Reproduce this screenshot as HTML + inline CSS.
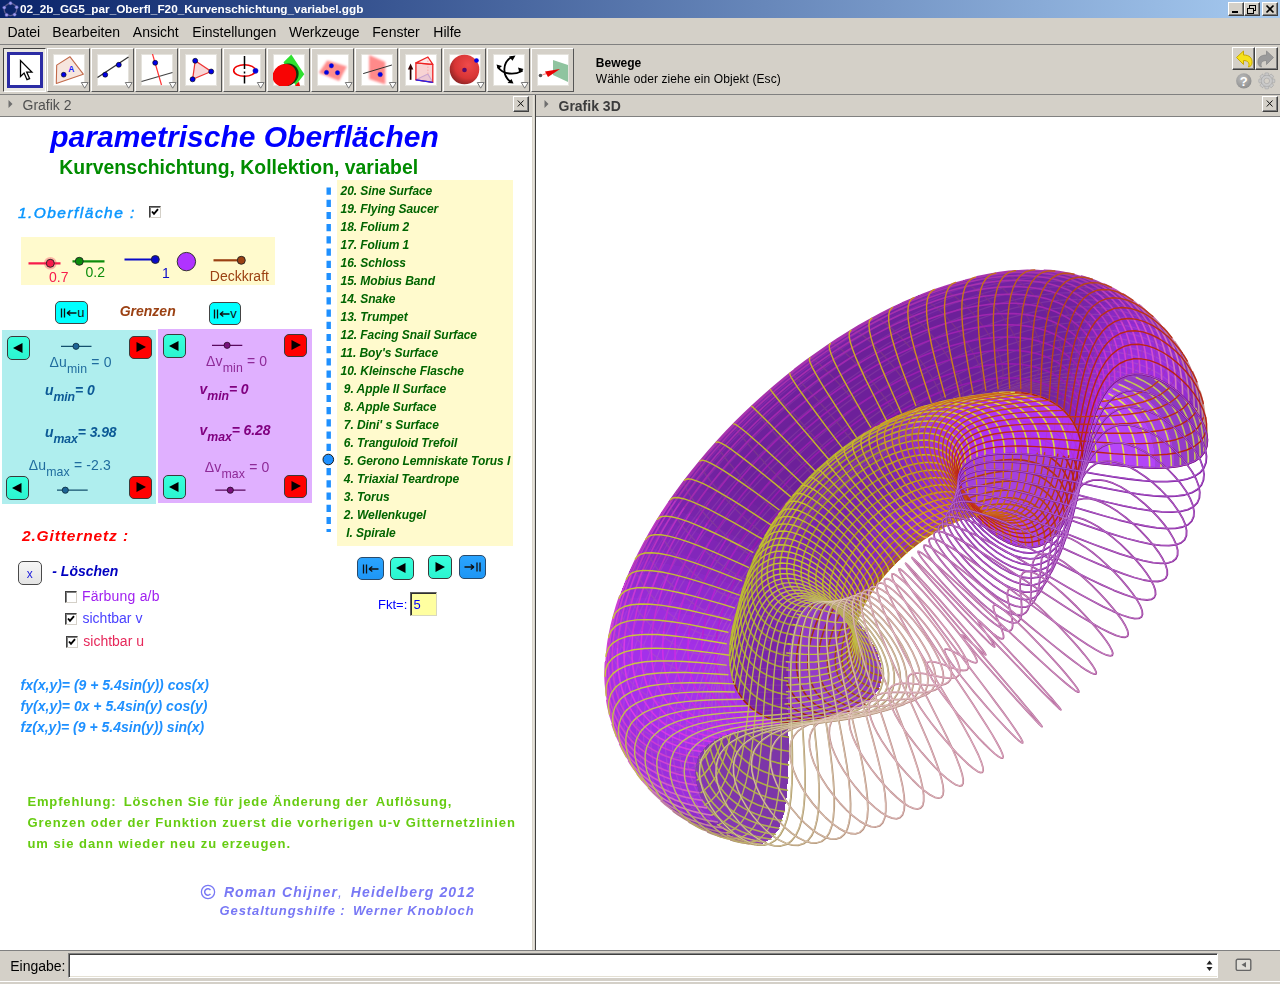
<!DOCTYPE html>
<html><head><meta charset="utf-8"><title>GeoGebra</title><style>
html,body{margin:0;padding:0}
body{width:1280px;height:984px;overflow:hidden;background:#d4d0c8;position:relative;font-family:"Liberation Sans",sans-serif}
.t{position:absolute;white-space:nowrap;will-change:opacity}
.b{position:absolute;box-sizing:border-box}
.r{border-style:solid;border-width:1px;border-color:#fff #404040 #404040 #fff}
.s{border-style:solid;border-width:1px;border-color:#808080 #fff #fff #808080}
sub{font-size:88%;vertical-align:baseline;position:relative;top:.48em}
</style></head>
<body>
<div class="b" style="left:0px;top:0px;width:1280px;height:18px;background:linear-gradient(90deg,#0a246a 0%,#a6caf0 100%)"></div>
<svg class="b" style="left:2px;top:1px" width="17" height="17" viewBox="0 0 17 17"><ellipse cx="8.5" cy="8.5" rx="6.3" ry="6" fill="none" stroke="#5a5a8c" stroke-width="1.3" transform="rotate(-25 8.5 8.5)"/><circle cx="8.5" cy="2.2" r="1.7" fill="#9c9cf5" stroke="#4a4a90" stroke-width=".5"/><circle cx="14.6" cy="6.2" r="1.7" fill="#9c9cf5" stroke="#4a4a90" stroke-width=".5"/><circle cx="12.6" cy="13.6" r="1.7" fill="#9c9cf5" stroke="#4a4a90" stroke-width=".5"/><circle cx="4.6" cy="13.9" r="1.7" fill="#9c9cf5" stroke="#4a4a90" stroke-width=".5"/><circle cx="2.3" cy="6.6" r="1.7" fill="#9c9cf5" stroke="#4a4a90" stroke-width=".5"/></svg>
<div class="t" style="left:19.5px;top:3.7px;font-size:10.5px;line-height:10.5px;color:#fff;font-weight:bold;transform:scaleX(1.121);transform-origin:0 0;">02_2b_GG5_par_Oberfl_F20_Kurvenschichtung_variabel.ggb</div>
<div class="b" style="left:1228px;top:2px;width:16px;height:14px;background:#d4d0c8;border-style:solid;border-width:1px;border-color:#fff #404040 #404040 #fff;box-shadow:inset -1px -1px 0 #808080"></div>
<div class="b" style="left:1244px;top:2px;width:16px;height:14px;background:#d4d0c8;border-style:solid;border-width:1px;border-color:#fff #404040 #404040 #fff;box-shadow:inset -1px -1px 0 #808080"></div>
<div class="b" style="left:1262px;top:2px;width:16px;height:14px;background:#d4d0c8;border-style:solid;border-width:1px;border-color:#fff #404040 #404040 #fff;box-shadow:inset -1px -1px 0 #808080"></div>
<svg class="b" style="left:1228px;top:2px" width="50" height="14" viewBox="0 0 50 14" shape-rendering="crispEdges"><rect x="4" y="9" width="6" height="2" fill="#000"/><rect x="21.5" y="3" width="6" height="5" fill="none" stroke="#000"/><rect x="21" y="3" width="7" height="1" fill="#000"/><rect x="19.5" y="6" width="6" height="5" fill="#d4d0c8" stroke="#000"/><rect x="19" y="6" width="7" height="1" fill="#000"/><g shape-rendering="auto"><path d="M38.5 3.5l7 7M45.5 3.5l-7 7" stroke="#000" stroke-width="1.7"/></g></svg>
<div class="t" style="left:7.5px;top:24.8px;font-size:14px;line-height:14px;color:#000;">Datei</div>
<div class="t" style="left:52.3px;top:24.8px;font-size:14px;line-height:14px;color:#000;">Bearbeiten</div>
<div class="t" style="left:132.8px;top:24.8px;font-size:14px;line-height:14px;color:#000;">Ansicht</div>
<div class="t" style="left:192.3px;top:24.8px;font-size:14px;line-height:14px;color:#000;">Einstellungen</div>
<div class="t" style="left:289.0px;top:24.8px;font-size:14px;line-height:14px;color:#000;">Werkzeuge</div>
<div class="t" style="left:372.3px;top:24.8px;font-size:14px;line-height:14px;color:#000;">Fenster</div>
<div class="t" style="left:433.3px;top:24.8px;font-size:14px;line-height:14px;color:#000;">Hilfe</div>
<div class="b" style="left:0px;top:44px;width:1280px;height:1px;background:#808080"></div>
<div class="b" style="left:3px;top:48px;width:43px;height:44px;background:#e9e7e2;border-style:solid;border-width:1px;border-color:#404040 #fff #fff #404040"></div>
<div class="b" style="left:7px;top:52px;width:36px;height:36px;background:#fff;border:3px solid #2c2ca4"></div>
<svg class="b" style="left:9px;top:54px;overflow:visible" width="42" height="42" viewBox="0 0 42 42"><svg x="0" y="0" width="32" height="32" viewBox="0 0 32 32" overflow="hidden"><path d="M11.5 6.5v16l3.6-3.4 2.9 6.6 2.6-1.1-2.9-6.5h5.2z" fill="#fff" stroke="#000" stroke-width="1.3" stroke-linejoin="miter"/></svg></svg>
<div class="b" style="left:47px;top:48px;width:43px;height:44px;border-style:solid;border-width:1px;border-color:#fff #555 #555 #fff"></div>
<div class="b" style="left:53px;top:54px;width:32px;height:32px;background:#fff;border:1px solid #e4e2dc"></div>
<svg class="b" style="left:53px;top:54px;overflow:visible" width="42" height="42" viewBox="0 0 42 42"><svg x="0" y="0" width="32" height="32" viewBox="0 0 32 32" overflow="hidden"><path d="M16.900 2.700l13.400 17.500-27 9.200.400-18.300z" fill="#f7e6de" stroke="#c26a4a" stroke-width="1.100" stroke-linejoin="round"/><circle cx="10.700" cy="20.700" r="2.400" fill="#0000e6" stroke="#000" stroke-width=".600"/><text x="15.300" y="17.700" font-family="Liberation Sans" font-size="8.500" font-weight="bold" fill="#2222ff">A</text></svg><path d="M28.300 28.500h6.800l-3.400 5.700z" fill="#fff" stroke="#7a7a7a" stroke-width="1"/></svg>
<div class="b" style="left:91px;top:48px;width:43px;height:44px;border-style:solid;border-width:1px;border-color:#fff #555 #555 #fff"></div>
<div class="b" style="left:97px;top:54px;width:32px;height:32px;background:#fff;border:1px solid #e4e2dc"></div>
<svg class="b" style="left:97px;top:54px;overflow:visible" width="42" height="42" viewBox="0 0 42 42"><svg x="0" y="0" width="32" height="32" viewBox="0 0 32 32" overflow="hidden"><path d="M.5 23.5l31-20.5" stroke="#333" stroke-width="1.3"/><circle cx="8.2" cy="20.7" r="2.5" fill="#0000e6" stroke="#000" stroke-width=".6"/><circle cx="21.8" cy="10.8" r="2.5" fill="#0000e6" stroke="#000" stroke-width=".6"/></svg><path d="M28.300 28.500h6.800l-3.400 5.700z" fill="#fff" stroke="#7a7a7a" stroke-width="1"/></svg>
<div class="b" style="left:135px;top:48px;width:43px;height:44px;border-style:solid;border-width:1px;border-color:#fff #555 #555 #fff"></div>
<div class="b" style="left:141px;top:54px;width:32px;height:32px;background:#fff;border:1px solid #e4e2dc"></div>
<svg class="b" style="left:141px;top:54px;overflow:visible" width="42" height="42" viewBox="0 0 42 42"><svg x="0" y="0" width="32" height="32" viewBox="0 0 32 32" overflow="hidden"><path d="M.5 27.5l31-9" stroke="#444" stroke-width="1.2"/><path d="M11.5 0l9 31" stroke="#f33" stroke-width="1.2"/><circle cx="14.2" cy="8.8" r="2.5" fill="#0000e6" stroke="#000" stroke-width=".6"/></svg><path d="M28.300 28.500h6.800l-3.400 5.700z" fill="#fff" stroke="#7a7a7a" stroke-width="1"/></svg>
<div class="b" style="left:179px;top:48px;width:43px;height:44px;border-style:solid;border-width:1px;border-color:#fff #555 #555 #fff"></div>
<div class="b" style="left:185px;top:54px;width:32px;height:32px;background:#fff;border:1px solid #e4e2dc"></div>
<svg class="b" style="left:185px;top:54px;overflow:visible" width="42" height="42" viewBox="0 0 42 42"><svg x="0" y="0" width="32" height="32" viewBox="0 0 32 32" overflow="hidden"><path d="M10.2 6.8l16 10.7-18.6 7.8z" fill="#f8d8d8" stroke="#e33" stroke-width="1.2"/><circle cx="10.2" cy="6.8" r="2.5" fill="#0000e6" stroke="#000" stroke-width=".6"/><circle cx="26.2" cy="17.5" r="2.5" fill="#0000e6" stroke="#000" stroke-width=".6"/><circle cx="7.6" cy="25.3" r="2.5" fill="#0000e6" stroke="#000" stroke-width=".6"/></svg></svg>
<div class="b" style="left:223px;top:48px;width:43px;height:44px;border-style:solid;border-width:1px;border-color:#fff #555 #555 #fff"></div>
<div class="b" style="left:229px;top:54px;width:32px;height:32px;background:#fff;border:1px solid #e4e2dc"></div>
<svg class="b" style="left:229px;top:54px;overflow:visible" width="42" height="42" viewBox="0 0 42 42"><svg x="0" y="0" width="32" height="32" viewBox="0 0 32 32" overflow="hidden"><ellipse cx="15.5" cy="16.5" rx="10.8" ry="5.8" fill="none" stroke="#e00" stroke-width="1.6"/><path d="M15.5 2v13M15.5 17.5v2M15.5 21.5v8" stroke="#000" stroke-width="1.5"/><circle cx="26.5" cy="16.8" r="2.6" fill="#0000e6" stroke="#22a" stroke-width=".5"/></svg><path d="M28.300 28.500h6.800l-3.400 5.700z" fill="#fff" stroke="#7a7a7a" stroke-width="1"/></svg>
<div class="b" style="left:267px;top:48px;width:43px;height:44px;border-style:solid;border-width:1px;border-color:#fff #555 #555 #fff"></div>
<div class="b" style="left:273px;top:54px;width:32px;height:32px;background:#fff;border:1px solid #e4e2dc"></div>
<svg class="b" style="left:273px;top:54px;overflow:visible" width="42" height="42" viewBox="0 0 42 42"><svg x="0" y="0" width="32" height="32" viewBox="0 0 32 32" overflow="hidden"><path d="M18.300 .500l13 19.800-8.800 11.200-12-23.200z" fill="#2fe02f"/><ellipse cx="13.800" cy="20.800" rx="12.200" ry="11" transform="rotate(-35 13.800 20.800)" fill="#0c3c0c"/><path d="M23.800 29.500l2.200-1.800 1 4.300h-5z" fill="#f00"/><ellipse cx="11.400" cy="21.300" rx="12.200" ry="11" transform="rotate(-35 11.400 21.300)" fill="#f80404"/></svg></svg>
<div class="b" style="left:311px;top:48px;width:43px;height:44px;border-style:solid;border-width:1px;border-color:#fff #555 #555 #fff"></div>
<div class="b" style="left:317px;top:54px;width:32px;height:32px;background:#fff;border:1px solid #e4e2dc"></div>
<svg class="b" style="left:317px;top:54px;overflow:visible" width="42" height="42" viewBox="0 0 42 42"><svg x="0" y="0" width="32" height="32" viewBox="0 0 32 32" overflow="hidden"><defs><filter id="bl7" x="-20%" y="-20%" width="140%" height="140%"><feGaussianBlur stdDeviation="1.300"/></filter></defs><path d="M10.200 6.600l19.700 5.900-7.700 14.400-20.400-8.100z" fill="#ff8c8c" filter="url(#bl7)"/><circle cx="14.4" cy="11.8" r="2.200" fill="#0000e6" stroke="#22a" stroke-width=".400"/><circle cx="9.5" cy="18.4" r="2.200" fill="#0000e6" stroke="#22a" stroke-width=".400"/><circle cx="20.5" cy="18.8" r="2.200" fill="#0000e6" stroke="#22a" stroke-width=".400"/></svg><path d="M28.300 28.500h6.800l-3.400 5.700z" fill="#fff" stroke="#7a7a7a" stroke-width="1"/></svg>
<div class="b" style="left:355px;top:48px;width:43px;height:44px;border-style:solid;border-width:1px;border-color:#fff #555 #555 #fff"></div>
<div class="b" style="left:361px;top:54px;width:32px;height:32px;background:#fff;border:1px solid #e4e2dc"></div>
<svg class="b" style="left:361px;top:54px;overflow:visible" width="42" height="42" viewBox="0 0 42 42"><svg x="0" y="0" width="32" height="32" viewBox="0 0 32 32" overflow="hidden"><defs><filter id="bl8" x="-20%" y="-20%" width="140%" height="140%"><feGaussianBlur stdDeviation="1"/></filter></defs><path d="M8.100 1.100l16.200 6.900v22.400l-16.200-5.400z" fill="#ff8a8a" filter="url(#bl8)"/><path d="M2.200 19.600l28.700-8.600" stroke="#333" stroke-width="1"/><circle cx="19.200" cy="20.500" r="2.300" fill="#0000e6" stroke="#22a" stroke-width=".400"/></svg><path d="M28.300 28.500h6.800l-3.400 5.700z" fill="#fff" stroke="#7a7a7a" stroke-width="1"/></svg>
<div class="b" style="left:399px;top:48px;width:43px;height:44px;border-style:solid;border-width:1px;border-color:#fff #555 #555 #fff"></div>
<div class="b" style="left:405px;top:54px;width:32px;height:32px;background:#fff;border:1px solid #e4e2dc"></div>
<svg class="b" style="left:405px;top:54px;overflow:visible" width="42" height="42" viewBox="0 0 42 42"><svg x="0" y="0" width="32" height="32" viewBox="0 0 32 32" overflow="hidden"><path d="M5.600 25.800V14" stroke="#200" stroke-width="1.700"/><path d="M5.600 9.400l-2.700 6.200h5.400z" fill="#300"/><path d="M10.900 25.800l16.900 2.500-4.900-8.200z" fill="#c4c4ff" stroke="#22e" stroke-width="1.100" stroke-linejoin="round"/><path d="M22.900 3.500v16.600" stroke="#e44" stroke-width="1.100" stroke-dasharray="1.600 1.400"/><path d="M10.900 8.900l16.900 1.400v18l-16.900-2.500z" fill="#f6c8c8" fill-opacity=".8" stroke="#e22" stroke-width="1.300" stroke-linejoin="round"/><path d="M10.900 8.900l12-5.900 4.900 7.300z" fill="#fbe0e0" fill-opacity=".7" stroke="#e22" stroke-width="1.300" stroke-linejoin="round"/><path d="M10.900 25.800l16.900 2.500" stroke="#22e" stroke-width="1.300"/></svg></svg>
<div class="b" style="left:443px;top:48px;width:43px;height:44px;border-style:solid;border-width:1px;border-color:#fff #555 #555 #fff"></div>
<div class="b" style="left:449px;top:54px;width:32px;height:32px;background:#fff;border:1px solid #e4e2dc"></div>
<svg class="b" style="left:449px;top:54px;overflow:visible" width="42" height="42" viewBox="0 0 42 42"><svg x="0" y="0" width="32" height="32" viewBox="0 0 32 32" overflow="hidden"><defs><radialGradient id="rg" cx=".62" cy=".35" r=".75"><stop offset="0" stop-color="#f04a4a"/><stop offset=".6" stop-color="#d83535"/><stop offset="1" stop-color="#7c2020"/></radialGradient></defs><circle cx="15.5" cy="15.500" r="14.800" fill="url(#rg)"/><circle cx="15.5" cy="16" r="2.300" fill="#5a0a6a"/><circle cx="27.500" cy="6.500" r="2.300" fill="#0000e6"/></svg><path d="M28.300 28.500h6.800l-3.400 5.700z" fill="#fff" stroke="#7a7a7a" stroke-width="1"/></svg>
<div class="b" style="left:487px;top:48px;width:43px;height:44px;border-style:solid;border-width:1px;border-color:#fff #555 #555 #fff"></div>
<div class="b" style="left:493px;top:54px;width:32px;height:32px;background:#fff;border:1px solid #e4e2dc"></div>
<svg class="b" style="left:493px;top:54px;overflow:visible" width="42" height="42" viewBox="0 0 42 42"><svg x="0" y="0" width="32" height="32" viewBox="0 0 32 32" overflow="hidden"><g fill="none" stroke="#000" stroke-width="1.800" stroke-linecap="round"><path d="M19 3C9 8 9 22 18 28"/><path d="M5 13c5 8 17 8 24 4"/></g><path d="M22.500 1.500l-6.500 1 3.500 4.200zM20.500 29.500l-6-.5 4-4zM3.500 10.500l5.500 1.500-4 3.500zM30.500 15l-5.500-1.500 1.500 5.500z" fill="#000"/></svg><path d="M28.300 28.500h6.800l-3.400 5.700z" fill="#fff" stroke="#7a7a7a" stroke-width="1"/></svg>
<div class="b" style="left:531px;top:48px;width:43px;height:44px;border-style:solid;border-width:1px;border-color:#fff #555 #555 #fff"></div>
<div class="b" style="left:537px;top:54px;width:32px;height:32px;background:#fff;border:1px solid #e4e2dc"></div>
<svg class="b" style="left:537px;top:54px;overflow:visible" width="42" height="42" viewBox="0 0 42 42"><svg x="0" y="0" width="32" height="32" viewBox="0 0 32 32" overflow="hidden"><path d="M16 6l15 5v17l-15-7z" fill="#8fc49f"/><circle cx="3.500" cy="21.500" r="1.800" fill="#555"/><path d="M5.500 20.800l4-1.200" stroke="#f88" stroke-width="1.200"/><path d="M8 17.500l15-2.500-12 8z" fill="#e80000"/></svg></svg>
<div class="t" style="left:595.8px;top:56.5px;font-size:12px;line-height:12px;color:#000;font-weight:bold;">Bewege</div>
<div class="t" style="left:595.8px;top:72.5px;font-size:12px;line-height:12px;color:#000;letter-spacing:0.09px;">W&auml;hle oder ziehe ein Objekt (Esc)</div>
<div class="b r" style="left:1232px;top:47px;width:23px;height:23px;border-color:#fff #404040 #404040 #fff;box-shadow:inset -1px -1px 0 #808080"></div>
<div class="b r" style="left:1255px;top:47px;width:23px;height:23px;border-color:#fff #404040 #404040 #fff;box-shadow:inset -1px -1px 0 #808080"></div>
<svg class="b" style="left:1232px;top:47px" width="46" height="23" viewBox="0 0 46 23"><path d="M4.500 10.500l7-6.500v4c6 0 9 3 8.500 8-.3 2.500-1.500 3.500-3.500 4 1.500-4-.5-6.500-5-6.500v4z" fill="#f6e11c" stroke="#c9a800" stroke-width="1" stroke-linejoin="round"/><path d="M41.500 10.500l-7-6.500v4c-6 0-9 3-8.500 8 .3 2.500 1.500 3.500 3.500 4-1.500-4 .5-6.500 5-6.500v4z" fill="#9a9a9a" stroke="#8a8a8a" stroke-width=".8" stroke-linejoin="round"/></svg>
<svg class="b" style="left:1234px;top:71px" width="44" height="20" viewBox="0 0 44 20"><defs><radialGradient id="hg" cx=".4" cy=".35" r=".7"><stop offset="0" stop-color="#bdbdbd"/><stop offset="1" stop-color="#8c8c8c"/></radialGradient></defs><circle cx="9.800" cy="9.900" r="7.700" fill="url(#hg)"/><text x="9.800" y="14.600" text-anchor="middle" font-family="Liberation Sans" font-weight="bold" font-size="13" fill="#fff">?</text><g transform="translate(32.800 9.900)" fill="#c9c9c9" stroke="#a2a2a2" stroke-width=".6"><rect x="-1.900" y="-8" width="3.800" height="16" rx=".8" transform="rotate(0)"/><rect x="-1.900" y="-8" width="3.800" height="16" rx=".8" transform="rotate(45)"/><rect x="-1.900" y="-8" width="3.800" height="16" rx=".8" transform="rotate(90)"/><rect x="-1.900" y="-8" width="3.800" height="16" rx=".8" transform="rotate(135)"/><circle r="5.600"/><circle r="2.800" fill="#d4d0c8"/></g></svg>
<div class="b" style="left:0px;top:94px;width:1280px;height:1px;background:#808080"></div>
<svg class="b" style="left:7px;top:99px" width="8" height="10" viewBox="0 0 8 10"><path d="M1.500 1l4 4-4 4z" fill="#6e6e6e"/></svg>
<div class="t" style="left:22.5px;top:98.3px;font-size:14px;line-height:14px;color:#505050;">Grafik 2</div>
<div class="b r" style="left:513px;top:96px;width:16px;height:16px;box-shadow:inset -1px -1px 0 #808080"></div>
<svg class="b" style="left:513px;top:96px" width="16" height="16" viewBox="0 0 16 16"><path d="M4.800 4.500l5.700 6M10.500 4.500l-5.700 6" stroke="#111" stroke-width="1"/></svg>
<div class="b" style="left:0px;top:116px;width:532px;height:1px;background:#808080"></div>
<div class="b" style="left:532px;top:95px;width:3px;height:855px;background:#d9d5cb"></div>
<div class="b" style="left:533px;top:95px;width:1px;height:855px;background:#e6e3dc"></div>
<div class="b" style="left:535px;top:95px;width:1px;height:855px;background:#404040"></div>
<svg class="b" style="left:543px;top:99px" width="8" height="10" viewBox="0 0 8 10"><path d="M1.500 1l4 4-4 4z" fill="#6e6e6e"/></svg>
<div class="t" style="left:558.5px;top:98.5px;font-size:14px;line-height:14px;color:#3c3c3c;font-weight:bold;">Grafik 3D</div>
<div class="b r" style="left:1262px;top:96px;width:16px;height:16px;box-shadow:inset -1px -1px 0 #808080"></div>
<svg class="b" style="left:1262px;top:96px" width="16" height="16" viewBox="0 0 16 16"><path d="M4.800 4.500l5.700 6M10.500 4.500l-5.700 6" stroke="#111" stroke-width="1"/></svg>
<div class="b" style="left:536px;top:116px;width:744px;height:1px;background:#808080"></div>
<div class="b" style="left:0px;top:117px;width:532px;height:833px;background:#fff"></div>
<div class="b" style="left:536px;top:117px;width:744px;height:833px;background:#fff"></div>
<div class="b" style="left:0px;top:950px;width:1280px;height:1px;background:#808080"></div>
<div class="t" style="left:10.2px;top:959.1px;font-size:14px;line-height:14px;color:#000;">Eingabe:</div>
<div class="b" style="left:68px;top:953px;width:1150px;height:25px;background:#fff;border-style:solid;border-width:1px;border-color:#808080 #fff #fff #808080;box-shadow:inset 1px 1px 0 #404040,inset 0 -1px 0 #e4e0d4"></div>
<svg class="b" style="left:1205px;top:960px" width="10" height="12" viewBox="0 0 10 12"><path d="M1.500 4.500l3-4 3 4zM1.500 7l3 4 3-4z" fill="#222"/></svg>
<svg class="b" style="left:1235px;top:958px" width="18" height="14" viewBox="0 0 18 14"><rect x="1.200" y="1.200" width="14.600" height="11.200" rx="1.500" fill="#e0ded8" stroke="#666" stroke-width="1.400"/><path d="M11 4v5.500l-4.500-2.700z" fill="#666"/></svg>
<div class="b" style="left:0px;top:981px;width:1280px;height:1px;background:#fff"></div>
<div class="t" style="left:50.3px;top:121.8px;font-size:30px;line-height:30px;color:#0000ff;font-weight:bold;font-style:italic;">parametrische Oberfl&auml;chen</div>
<div class="t" style="left:59.3px;top:157.5px;font-size:19.4px;line-height:19.4px;color:#008c00;font-weight:bold;">Kurvenschichtung, Kollektion, variabel</div>
<div class="t" style="left:17.9px;top:205.2px;font-size:15.5px;line-height:15.5px;color:#0a96ff;font-style:italic;letter-spacing:1.47px;-webkit-text-stroke:.45px #0a96ff;">1.Oberfl&auml;che :</div>
<div class="b" style="left:149px;top:206px;width:12px;height:12px;background:#fff;border-style:solid;border-width:1px;border-color:#404040 #d4d0c8 #d4d0c8 #404040;box-shadow:inset 1px 1px 0 #808080"></div>
<svg class="b" style="left:149px;top:206px" width="12" height="12" viewBox="0 0 12 12"><path d="M3 5.500l2 2.300 4-4.600" fill="none" stroke="#000" stroke-width="1.900"/></svg>
<div class="b" style="left:21px;top:237px;width:254px;height:48px;background:#fffacd"></div>
<svg class="b" style="left:21px;top:237px" width="254" height="48" viewBox="21 237 254 48"><path d="M28.500 263.300H60.500" stroke="#f71c4c" stroke-width="2.200"/><circle cx="50.300" cy="263.300" r="6.300" fill="#f71c4c" opacity=".32"/><circle cx="50.300" cy="263.300" r="4" fill="#f71c4c" stroke="#222" stroke-width=".9"/><path d="M72.500 261.300H104.500" stroke="#0c8c0c" stroke-width="2.200"/><circle cx="79.300" cy="261.300" r="4" fill="#0c8c0c" stroke="#222" stroke-width=".9"/><path d="M124.500 259.500H159" stroke="#0a0ac8" stroke-width="2.200"/><circle cx="155.300" cy="259.500" r="4" fill="#0a0ac8" stroke="#222" stroke-width=".9"/><circle cx="186.400" cy="261.600" r="9.200" fill="#b033ff" stroke="#222" stroke-width=".9"/><path d="M213.500 260.300H245" stroke="#9b4113" stroke-width="2.200"/><circle cx="241.300" cy="260.300" r="4" fill="#9b4113" stroke="#222" stroke-width=".9"/></svg>
<div class="t" style="left:49.0px;top:269.5px;font-size:14px;line-height:14px;color:#f71c4c;">0.7</div>
<div class="t" style="left:85.5px;top:264.9px;font-size:14px;line-height:14px;color:#0c8c0c;">0.2</div>
<div class="t" style="left:162.0px;top:266.1px;font-size:14px;line-height:14px;color:#0a0ac8;">1</div>
<div class="t" style="left:209.8px;top:268.8px;font-size:14px;line-height:14px;color:#9b4113;">Deckkraft</div>
<div class="b" style="left:55px;top:301px;width:33px;height:23px;background:#00ffff;border:1px solid #444;border-radius:5px"></div>
<svg class="b" style="left:59.5px;top:306px" width="26" height="14" viewBox="0 0 26 14"><path d="M1.500 2.500v9M4.500 2.500v9" stroke="#111" stroke-width="1.300"/><path d="M7 7h9.500M7 7l3.300-2.600M7 7l3.300 2.600" stroke="#111" stroke-width="1.300" fill="none"/><text x="17.300" y="11.300" font-family="Liberation Sans" font-size="13" fill="#111">u</text></svg>
<div class="t" style="left:119.7px;top:304.4px;font-size:14px;line-height:14px;color:#9b4113;font-weight:bold;font-style:italic;">Grenzen</div>
<div class="b" style="left:209px;top:301.5px;width:32px;height:23px;background:#00ffff;border:1px solid #444;border-radius:5px"></div>
<svg class="b" style="left:213px;top:306.5px" width="26" height="14" viewBox="0 0 26 14"><path d="M1.500 2.500v9M4.500 2.500v9" stroke="#111" stroke-width="1.300"/><path d="M7 7h9.500M7 7l3.300-2.600M7 7l3.300 2.600" stroke="#111" stroke-width="1.300" fill="none"/><text x="17.300" y="11.300" font-family="Liberation Sans" font-size="13" fill="#111">v</text></svg>
<div class="b" style="left:2px;top:330px;width:154px;height:173.5px;background:#afeeee"></div>
<div class="b" style="left:158px;top:329px;width:154px;height:173.5px;background:#e0b0ff"></div>
<div class="b" style="left:6.5px;top:336px;width:23.5px;height:23.5px;background:linear-gradient(#38ffdc,#2bf5d0);border:1px solid #3a3a3a;border-radius:5px"></div>
<svg class="b" style="left:11.7px;top:341.7px" width="12" height="12" viewBox="0 0 12 12"><path d="M10.500 1v10l-9.500-5z" fill="#000"/></svg>
<div class="b" style="left:128.5px;top:335.5px;width:23.5px;height:23.5px;background:#ff0000;border:1px solid #3a3a3a;border-radius:5px"></div>
<svg class="b" style="left:134.7px;top:341.2px" width="12" height="12" viewBox="0 0 12 12"><path d="M1.500 1v10l9.500-5z" fill="#000"/></svg>
<div class="b" style="left:5.5px;top:476px;width:23.5px;height:23.5px;background:linear-gradient(#38ffdc,#2bf5d0);border:1px solid #3a3a3a;border-radius:5px"></div>
<svg class="b" style="left:10.7px;top:481.7px" width="12" height="12" viewBox="0 0 12 12"><path d="M10.500 1v10l-9.500-5z" fill="#000"/></svg>
<div class="b" style="left:128.5px;top:475.5px;width:23.5px;height:23.5px;background:#ff0000;border:1px solid #3a3a3a;border-radius:5px"></div>
<svg class="b" style="left:134.7px;top:481.2px" width="12" height="12" viewBox="0 0 12 12"><path d="M1.500 1v10l9.500-5z" fill="#000"/></svg>
<div class="b" style="left:162.5px;top:334px;width:23.5px;height:23.5px;background:linear-gradient(#38ffdc,#2bf5d0);border:1px solid #3a3a3a;border-radius:5px"></div>
<svg class="b" style="left:167.7px;top:339.7px" width="12" height="12" viewBox="0 0 12 12"><path d="M10.500 1v10l-9.500-5z" fill="#000"/></svg>
<div class="b" style="left:283.5px;top:333.5px;width:23.5px;height:23.5px;background:#ff0000;border:1px solid #3a3a3a;border-radius:5px"></div>
<svg class="b" style="left:289.7px;top:339.2px" width="12" height="12" viewBox="0 0 12 12"><path d="M1.500 1v10l9.500-5z" fill="#000"/></svg>
<div class="b" style="left:162.5px;top:475px;width:23.5px;height:23.5px;background:linear-gradient(#38ffdc,#2bf5d0);border:1px solid #3a3a3a;border-radius:5px"></div>
<svg class="b" style="left:167.7px;top:480.7px" width="12" height="12" viewBox="0 0 12 12"><path d="M10.500 1v10l-9.500-5z" fill="#000"/></svg>
<div class="b" style="left:283.5px;top:474.5px;width:23.5px;height:23.5px;background:#ff0000;border:1px solid #3a3a3a;border-radius:5px"></div>
<svg class="b" style="left:289.7px;top:480.2px" width="12" height="12" viewBox="0 0 12 12"><path d="M1.500 1v10l9.500-5z" fill="#000"/></svg>
<svg class="b" style="left:0;top:330px" width="320" height="175" viewBox="0 330 320 175"><g stroke="#14506e" stroke-width="1.200"><path d="M61 346.300H91.500M57 490.200H87.700"/></g><circle cx="76" cy="346.300" r="3.100" fill="#1e6496" stroke="#0a2a3a" stroke-width=".8"/><circle cx="65.300" cy="490.200" r="3.100" fill="#1e6496" stroke="#0a2a3a" stroke-width=".8"/><g stroke="#5a0a5e" stroke-width="1.200"><path d="M212 345.300H242.300M215.300 490.200H245.500"/></g><circle cx="227.100" cy="345.300" r="3.100" fill="#78127c" stroke="#2a0a2a" stroke-width=".8"/><circle cx="230.300" cy="490.200" r="3.100" fill="#78127c" stroke="#2a0a2a" stroke-width=".8"/></svg>
<div class="t" style="left:49.5px;top:355.1px;font-size:14px;line-height:14px;color:#1f6c9e;letter-spacing:0.15px;">&Delta;u<sub>min</sub> = 0</div>
<div class="t" style="left:45.0px;top:383.4px;font-size:14px;line-height:14px;color:#0c5a96;font-weight:bold;font-style:italic;letter-spacing:-0.1px;">u<sub>min</sub>= 0</div>
<div class="t" style="left:45.0px;top:425.4px;font-size:14px;line-height:14px;color:#0c5a96;font-weight:bold;font-style:italic;letter-spacing:-0.1px;">u<sub>max</sub>= 3.98</div>
<div class="t" style="left:28.7px;top:458.1px;font-size:14px;line-height:14px;color:#1f6c9e;letter-spacing:0.15px;">&Delta;u<sub>max</sub> = -2.3</div>
<div class="t" style="left:206.0px;top:354.0px;font-size:14px;line-height:14px;color:#8e2a98;letter-spacing:0.15px;">&Delta;v<sub>min</sub> = 0</div>
<div class="t" style="left:199.6px;top:381.6px;font-size:14px;line-height:14px;color:#800080;font-weight:bold;font-style:italic;letter-spacing:-0.1px;">v<sub>min</sub>= 0</div>
<div class="t" style="left:199.6px;top:423.3px;font-size:14px;line-height:14px;color:#800080;font-weight:bold;font-style:italic;letter-spacing:-0.1px;">v<sub>max</sub>= 6.28</div>
<div class="t" style="left:204.8px;top:459.7px;font-size:14px;line-height:14px;color:#8e2a98;letter-spacing:0.15px;">&Delta;v<sub>max</sub> = 0</div>
<div class="t" style="left:21.9px;top:528.3px;font-size:15.5px;line-height:15.5px;color:#ff0000;font-weight:bold;font-style:italic;letter-spacing:0.88px;">2.Gitternetz :</div>
<div class="b" style="left:337px;top:180px;width:176px;height:365.5px;background:#fffacd"></div>
<svg class="b" style="left:320px;top:180px" width="16" height="360" viewBox="320 180 16 360"><path d="M328.700 187.500V532" stroke="#1e90ff" stroke-width="4.400" stroke-dasharray="7.200 5"/><circle cx="328.300" cy="459.500" r="5.300" fill="#1e90ff" stroke="#1a1a1a" stroke-width="1"/></svg>
<div class="t" style="left:340.6px;top:185.0px;font-size:12px;line-height:12px;color:#006400;font-weight:bold;font-style:italic;letter-spacing:-0.07px;">20. Sine Surface</div>
<div class="t" style="left:340.6px;top:203.0px;font-size:12px;line-height:12px;color:#006400;font-weight:bold;font-style:italic;letter-spacing:-0.07px;">19. Flying Saucer</div>
<div class="t" style="left:340.6px;top:221.0px;font-size:12px;line-height:12px;color:#006400;font-weight:bold;font-style:italic;letter-spacing:-0.07px;">18. Folium 2</div>
<div class="t" style="left:340.6px;top:239.0px;font-size:12px;line-height:12px;color:#006400;font-weight:bold;font-style:italic;letter-spacing:-0.07px;">17. Folium 1</div>
<div class="t" style="left:340.6px;top:257.0px;font-size:12px;line-height:12px;color:#006400;font-weight:bold;font-style:italic;letter-spacing:-0.07px;">16. Schloss</div>
<div class="t" style="left:340.6px;top:275.0px;font-size:12px;line-height:12px;color:#006400;font-weight:bold;font-style:italic;letter-spacing:-0.07px;">15. Mobius Band</div>
<div class="t" style="left:340.6px;top:293.0px;font-size:12px;line-height:12px;color:#006400;font-weight:bold;font-style:italic;letter-spacing:-0.07px;">14. Snake</div>
<div class="t" style="left:340.6px;top:311.0px;font-size:12px;line-height:12px;color:#006400;font-weight:bold;font-style:italic;letter-spacing:-0.07px;">13. Trumpet</div>
<div class="t" style="left:340.6px;top:329.0px;font-size:12px;line-height:12px;color:#006400;font-weight:bold;font-style:italic;letter-spacing:-0.07px;">12. Facing Snail Surface</div>
<div class="t" style="left:340.6px;top:347.0px;font-size:12px;line-height:12px;color:#006400;font-weight:bold;font-style:italic;letter-spacing:-0.07px;">11. Boy's Surface</div>
<div class="t" style="left:340.6px;top:365.0px;font-size:12px;line-height:12px;color:#006400;font-weight:bold;font-style:italic;letter-spacing:-0.07px;">10. Kleinsche Flasche</div>
<div class="t" style="left:340.6px;top:383.0px;font-size:12px;line-height:12px;color:#006400;font-weight:bold;font-style:italic;letter-spacing:-0.07px;">&nbsp;9. Apple II Surface</div>
<div class="t" style="left:340.6px;top:401.0px;font-size:12px;line-height:12px;color:#006400;font-weight:bold;font-style:italic;letter-spacing:-0.07px;">&nbsp;8. Apple Surface</div>
<div class="t" style="left:340.6px;top:419.0px;font-size:12px;line-height:12px;color:#006400;font-weight:bold;font-style:italic;letter-spacing:-0.07px;">&nbsp;7. Dini' s Surface</div>
<div class="t" style="left:340.6px;top:437.0px;font-size:12px;line-height:12px;color:#006400;font-weight:bold;font-style:italic;letter-spacing:-0.07px;">&nbsp;6. Tranguloid Trefoil</div>
<div class="t" style="left:340.6px;top:455.0px;font-size:12px;line-height:12px;color:#006400;font-weight:bold;font-style:italic;letter-spacing:-0.07px;">&nbsp;5. Gerono Lemniskate Torus I</div>
<div class="t" style="left:340.6px;top:473.0px;font-size:12px;line-height:12px;color:#006400;font-weight:bold;font-style:italic;letter-spacing:-0.07px;">&nbsp;4. Triaxial Teardrope</div>
<div class="t" style="left:340.6px;top:491.0px;font-size:12px;line-height:12px;color:#006400;font-weight:bold;font-style:italic;letter-spacing:-0.07px;">&nbsp;3. Torus</div>
<div class="t" style="left:340.6px;top:509.0px;font-size:12px;line-height:12px;color:#006400;font-weight:bold;font-style:italic;letter-spacing:-0.07px;">&nbsp;2. Wellenkugel</div>
<div class="t" style="left:340.6px;top:527.0px;font-size:12px;line-height:12px;color:#006400;font-weight:bold;font-style:italic;letter-spacing:-0.07px;">&nbsp;&thinsp;I. Spirale</div>
<div class="b" style="left:357px;top:556.5px;width:27px;height:23.5px;background:linear-gradient(#2aa4ff,#1e96f5);border:1px solid #2a4a6a;border-radius:5px"></div>
<svg class="b" style="left:362px;top:561.75px" width="19" height="14" viewBox="0 0 19 14"><path d="M1.500 2.500v9M4.500 2.500v9" stroke="#111" stroke-width="1.300"/><path d="M7 7h9.500M7 7l3.300-2.600M7 7l3.300 2.600" stroke="#111" stroke-width="1.300" fill="none"/></svg>
<div class="b" style="left:390px;top:556.5px;width:23.5px;height:23.5px;background:linear-gradient(#38ffdc,#2bf5d0);border:1px solid #3a3a3a;border-radius:5px"></div>
<svg class="b" style="left:395.2px;top:562.2px" width="12" height="12" viewBox="0 0 12 12"><path d="M10.500 1v10l-9.500-5z" fill="#000"/></svg>
<div class="b" style="left:428px;top:555px;width:23.5px;height:23.5px;background:linear-gradient(#38ffdc,#2bf5d0);border:1px solid #3a3a3a;border-radius:5px"></div>
<svg class="b" style="left:434.2px;top:560.7px" width="12" height="12" viewBox="0 0 12 12"><path d="M1.500 1v10l9.500-5z" fill="#000"/></svg>
<div class="b" style="left:459px;top:555px;width:26.5px;height:23.5px;background:linear-gradient(#2aa4ff,#1e96f5);border:1px solid #2a4a6a;border-radius:5px"></div>
<svg class="b" style="left:463.75px;top:560.25px" width="19" height="14" viewBox="0 0 19 14"><path d="M.5 7h9.500M10 7l-3.300-2.600M10 7l-3.300 2.600" stroke="#111" stroke-width="1.300" fill="none"/><path d="M13 2.500v9M16 2.500v9" stroke="#111" stroke-width="1.300"/></svg>
<div class="t" style="left:378.0px;top:598.4px;font-size:13px;line-height:13px;color:#0000ff;">Fkt=:</div>
<div class="b" style="left:410px;top:592px;width:26.500px;height:23.500px;background:#ffffa0;border-style:solid;border-width:1px;border-color:#606060 #d8d8c0 #d8d8c0 #606060;box-shadow:inset 1px 1px 0 #303030"></div>
<div class="t" style="left:413.5px;top:598.4px;font-size:13px;line-height:13px;color:#0000ff;">5</div>
<div class="b" style="left:18px;top:561px;width:24px;height:24px;background:linear-gradient(#f6f6f6,#e4e4e4);border:1px solid #4a4a4a;border-radius:5px"></div>
<div class="t" style="left:26.8px;top:568.1px;font-size:12px;line-height:12px;color:#2222dd;">x</div>
<div class="t" style="left:52.3px;top:563.9px;font-size:14px;line-height:14px;color:#0000c0;font-weight:bold;font-style:italic;">- L&ouml;schen</div>
<div class="b" style="left:65px;top:590.5px;width:12px;height:12px;background:#fff;border-style:solid;border-width:1px;border-color:#404040 #d4d0c8 #d4d0c8 #404040;box-shadow:inset 1px 1px 0 #808080"></div>
<div class="t" style="left:82.0px;top:588.9px;font-size:14px;line-height:14px;color:#a020f0;letter-spacing:0.2px;">F&auml;rbung a/b</div>
<div class="b" style="left:65px;top:612.5px;width:12px;height:12px;background:#fff;border-style:solid;border-width:1px;border-color:#404040 #d4d0c8 #d4d0c8 #404040;box-shadow:inset 1px 1px 0 #808080"></div>
<svg class="b" style="left:65px;top:612.5px" width="12" height="12" viewBox="0 0 12 12"><path d="M3 5.500l2 2.300 4-4.600" fill="none" stroke="#000" stroke-width="1.900"/></svg>
<div class="t" style="left:82.5px;top:611.1px;font-size:14px;line-height:14px;color:#4a41ff;">sichtbar v</div>
<div class="b" style="left:66px;top:635.5px;width:12px;height:12px;background:#fff;border-style:solid;border-width:1px;border-color:#404040 #d4d0c8 #d4d0c8 #404040;box-shadow:inset 1px 1px 0 #808080"></div>
<svg class="b" style="left:66px;top:635.5px" width="12" height="12" viewBox="0 0 12 12"><path d="M3 5.500l2 2.300 4-4.600" fill="none" stroke="#000" stroke-width="1.900"/></svg>
<div class="t" style="left:83.3px;top:633.7px;font-size:14px;line-height:14px;color:#e6285a;">sichtbar u</div>
<div class="t" style="left:20.6px;top:678.1px;font-size:14px;line-height:14px;color:#1e90ff;font-weight:bold;font-style:italic;">fx(x,y)= (9 + 5.4sin(y)) cos(x)</div>
<div class="t" style="left:20.6px;top:699.2px;font-size:14px;line-height:14px;color:#1e90ff;font-weight:bold;font-style:italic;">fy(x,y)= 0x + 5.4sin(y) cos(y)</div>
<div class="t" style="left:20.6px;top:720.3px;font-size:14px;line-height:14px;color:#1e90ff;font-weight:bold;font-style:italic;">fz(x,y)= (9 + 5.4sin(y)) sin(x)</div>
<div class="t" style="left:27.4px;top:794.9px;font-size:13px;line-height:13px;color:#66cc11;font-weight:bold;letter-spacing:0.87px;">Empfehlung: <span style="display:inline-block;width:2.8px"></span>L&ouml;schen Sie f&uuml;r jede &Auml;nderung der <span style="display:inline-block;width:2.8px"></span>Aufl&ouml;sung,</div>
<div class="t" style="left:27.4px;top:816.0px;font-size:13px;line-height:13px;color:#66cc11;font-weight:bold;letter-spacing:0.97px;">Grenzen oder der Funktion zuerst die vorherigen u-v Gitternetzlinien</div>
<div class="t" style="left:27.4px;top:837.0px;font-size:13px;line-height:13px;color:#66cc11;font-weight:bold;letter-spacing:0.97px;">um sie dann wieder neu zu erzeugen.</div>
<svg class="b" style="left:200.400px;top:884px" width="16" height="16" viewBox="0 0 15 15"><circle cx="7.500" cy="7.500" r="6.200" fill="none" stroke="#7878f5" stroke-width="1.200"/><path d="M9.800 5.700a3 3 0 1 0 0 3.600" fill="none" stroke="#7878f5" stroke-width="1.400"/></svg>
<div class="t" style="left:223.9px;top:884.7px;font-size:14px;line-height:14px;color:#7878f5;font-weight:bold;font-style:italic;letter-spacing:1.12px;">Roman Chijner<span style="font-weight:normal">,</span> <span style="display:inline-block;width:2.8px"></span>Heidelberg 2012</div>
<div class="t" style="left:219.6px;top:903.7px;font-size:13px;line-height:13px;color:#7878f5;font-weight:bold;font-style:italic;letter-spacing:0.9px;">Gestaltungshilfe : <span style="display:inline-block;width:2.8px"></span>Werner Knobloch</div>
<svg class="b" style="left:537px;top:117px" width="743" height="833" viewBox="537 117 743 833"><g shape-rendering="crispEdges" fill-opacity="0.90">
<path fill="#7321a5" d="M823 461l-13 12-11-11 14-13z"/>
<path fill="#7421a6" d="M837 449l-14 12-10-12 14-12z"/>
<path fill="#7321a5" d="M832 471l-13 12-9-10 13-12z"/>
<path fill="#7421a6" d="M846 459l-14 12-9-10 14-12z"/>
<path fill="#7321a4" d="M810 473l-14 13-10-11 13-13zM819 483l-13 12-10-9 14-13z"/>
<path fill="#7421a6" d="M851 437l-14 12-10-12 15-12zM859 448l-13 11-9-10 14-12z"/>
<path fill="#7221a4" d="M796 486l-12 13-11-11 13-13zM806 495l-13 13-9-9 12-13z"/>
<path fill="#7421a7" d="M866 426l-15 11-9-12 15-11z"/>
<path fill="#7321a5" d="M813 449l-14 13-11-12 14-13z"/>
<path fill="#7421a7" d="M873 437l-14 11-8-11 15-11z"/>
<path fill="#7421a6" d="M827 437l-14 12-11-12 15-12z"/>
<path fill="#7321a4" d="M799 462l-13 13-12-12 14-13z"/>
<path fill="#7421a6" d="M842 425l-15 12-10-12 14-12z"/>
<path fill="#7221a3" d="M784 499l-13 14-11-11 13-14z"/>
<path fill="#7622a9" d="M839 478l-13 12-7-7 13-12z"/>
<path fill="#7221a4" d="M793 508l-12 13-10-8 13-14z"/>
<path fill="#7622a9" d="M852 467l-13 11-7-7 14-12z"/>
<path fill="#7221a4" d="M786 475l-13 13-12-11 13-14z"/>
<path fill="#7622a9" d="M826 490l-13 12-7-7 13-12z"/>
<path fill="#7521a7" d="M881 415l-15 11-9-12 15-11zM888 426l-15 11-7-11 15-11z"/>
<path fill="#7622aa" d="M865 456l-13 11-6-8 13-11z"/>
<path fill="#7421a7" d="M857 414l-15 11-11-12 15-12z"/>
<path fill="#7622a9" d="M813 502l-12 12-8-6 13-13z"/>
<path fill="#7722aa" d="M879 445l-14 11-6-8 14-11z"/>
<path fill="#7221a3" d="M771 513l-12 13-11-10 12-14zM773 488l-13 14-11-11 12-14z"/>
<path fill="#7221a4" d="M781 521l-11 13-11-8 12-13z"/>
<path fill="#7521a7" d="M872 403l-15 11-11-13 15-11z"/>
<path fill="#7522a8" d="M896 405l-15 10-9-12 15-10z"/>
<path fill="#7622a8" d="M801 514l-11 13-9-6 12-13z"/>
<path fill="#7522a8" d="M902 416l-14 10-7-11 15-10z"/>
<path fill="#7120a2" d="M802 437l-14 13-11-12 14-13zM817 425l-15 12-11-12 15-13z"/>
<path fill="#7722aa" d="M893 435l-14 10-6-8 15-11z"/>
<path fill="#7020a1" d="M788 450l-14 13-11-12 14-13z"/>
<path fill="#7120a2" d="M831 413l-14 12-11-13 14-12z"/>
<path fill="#7221a3" d="M760 502l-12 14-12-11 13-14z"/>
<path fill="#7120a2" d="M759 526l-11 14-12-10 12-14z"/>
<path fill="#7020a1" d="M774 463l-13 14-11-12 13-14z"/>
<path fill="#7221a4" d="M770 534l-11 14-11-8 11-14z"/>
<path fill="#7522a8" d="M790 527l-11 13-9-6 11-13zM887 393l-15 10-11-13 16-10z"/>
<path fill="#7221a3" d="M846 401l-15 12-11-13 15-11z"/>
<path fill="#7622a8" d="M910 396l-14 9-9-12 15-10z"/>
<path fill="#7a23af" d="M843 483l-12 11-5-4 13-12z"/>
<path fill="#7722aa" d="M907 426l-14 9-5-9 14-10z"/>
<path fill="#7622a8" d="M917 407l-15 9-6-11 14-9z"/>
<path fill="#7a23af" d="M856 472l-13 11-4-5 13-11z"/>
<path fill="#7923ae" d="M831 494l-12 12-6-4 13-12z"/>
<path fill="#7020a0" d="M761 477l-12 14-12-12 13-14z"/>
<path fill="#7b23b0" d="M868 462l-12 10-4-5 13-11z"/>
<path fill="#7120a2" d="M748 516l-12 14-11-11 11-14z"/>
<path fill="#7221a3" d="M861 390l-15 11-11-12 16-11z"/>
<path fill="#7923ad" d="M819 506l-12 12-6-4 12-12z"/>
<path fill="#7522a8" d="M779 540l-11 13-9-5 11-14z"/>
<path fill="#7b23b0" d="M881 452l-13 10-3-6 14-11z"/>
<path fill="#7120a2" d="M748 540l-11 14-11-10 10-14z"/>
<path fill="#7321a4" d="M759 548l-11 13-11-7 11-14z"/>
<path fill="#7622a8" d="M902 383l-15 10-10-13 15-10z"/>
<path fill="#7020a0" d="M749 491l-13 14-11-12 12-14z"/>
<path fill="#7722ab" d="M921 417l-14 9-5-10 15-9z"/>
<path fill="#7923ad" d="M807 518l-11 12-6-3 11-13z"/>
<path fill="#7622a9" d="M926 387l-16 9-8-13 15-9zM932 398l-15 9-7-11 16-9z"/>
<path fill="#6d1f9b" d="M791 425l-14 13-10-11 14-13z"/>
<path fill="#7c23b1" d="M895 442l-14 10-2-7 14-10z"/>
<path fill="#6d1f9c" d="M806 412l-15 13-10-11 15-13z"/>
<path fill="#7221a4" d="M877 380l-16 10-10-12 15-11z"/>
<path fill="#6c1f9b" d="M777 438l-14 13-10-11 14-13z"/>
<path fill="#6d1f9c" d="M820 400l-14 12-10-11 14-12z"/>
<path fill="#7120a2" d="M736 530l-10 14-12-11 11-14z"/>
<path fill="#7822ac" d="M796 530l-11 12-6-2 11-13z"/>
<path fill="#7522a8" d="M768 553l-10 13-10-5 11-13z"/>
<path fill="#6c1f9b" d="M763 451l-13 14-10-12 13-13z"/>
<path fill="#6d1f9c" d="M835 389l-15 11-10-11 15-11z"/>
<path fill="#7020a0" d="M736 505l-11 14-12-12 12-14z"/>
<path fill="#7c23b1" d="M908 433l-13 9-2-7 14-9z"/>
<path fill="#7622a9" d="M917 374l-15 9-10-13 16-9z"/>
<path fill="#7321a4" d="M748 561l-10 14-11-7 10-14z"/>
<path fill="#7120a1" d="M737 554l-10 14-12-9 11-15z"/>
<path fill="#7722ab" d="M935 408l-14 9-4-10 15-9z"/>
<path fill="#6c1f9b" d="M750 465l-13 14-9-12 12-14z"/>
<path fill="#7321a4" d="M892 370l-15 10-11-13 15-10z"/>
<path fill="#7822ac" d="M785 542l-10 13-7-2 11-13z"/>
<path fill="#7622aa" d="M946 390l-14 8-6-11 15-9z"/>
<path fill="#6d1f9c" d="M851 378l-16 11-10-11 15-11z"/>
<path fill="#7622aa" d="M941 378l-15 9-9-13 16-9z"/>
<path fill="#7c24b2" d="M922 424l-14 9-1-7 14-9z"/>
<path fill="#7020a1" d="M726 544l-11 15-12-11 11-15z"/>
<path fill="#7522a8" d="M758 566l-10 13-10-4 10-14z"/>
<path fill="#7f24b6" d="M845 486l-12 10-2-2 12-11z"/>
<path fill="#8025b7" d="M857 475l-12 11-2-3 13-11z"/>
<path fill="#6c1f9b" d="M737 479l-12 14-10-12 13-14z"/>
<path fill="#7020a0" d="M725 519l-11 14-12-12 11-14z"/>
<path fill="#7e24b5" d="M833 496l-11 11-3-1 12-12z"/>
<path fill="#8125b8" d="M869 465l-12 10-1-3 12-10z"/>
<path fill="#6d1f9c" d="M866 367l-15 11-11-11 16-11z"/>
<path fill="#7722ab" d="M949 401l-14 7-3-10 14-8z"/>
<path fill="#7622aa" d="M933 365l-16 9-9-13 15-9z"/>
<path fill="#7d24b3" d="M822 507l-11 11-4 0 12-12z"/>
<path fill="#7321a5" d="M738 575l-9 14-11-7 9-14z"/>
<path fill="#7120a2" d="M727 568l-9 14-12-9 9-14z"/>
<path fill="#7321a4" d="M908 361l-16 9-11-13 16-9z"/>
<path fill="#7822ab" d="M775 555l-9 12-8-1 10-13z"/>
<path fill="#8225ba" d="M881 456l-12 9-1-3 13-10z"/>
<path fill="#6a1e98" d="M781 414l-14 13-8-10 14-12zM796 401l-15 13-8-9 14-13zM767 427l-14 13-8-10 14-13z"/>
<path fill="#7c24b2" d="M811 518l-11 12-4 0 11-12z"/>
<path fill="#7d24b3" d="M935 416l-13 8-1-7 14-9z"/>
<path fill="#6a1e98" d="M810 389l-14 12-9-9 15-12z"/>
<path fill="#6d1f9c" d="M725 493l-12 14-9-12 11-14z"/>
<path fill="#7722aa" d="M961 383l-15 7-5-12 15-7zM956 371l-15 7-8-13 15-8z"/>
<path fill="#8225bb" d="M894 447l-13 9 0-4 14-10z"/>
<path fill="#6a1e98" d="M753 440l-13 13-8-9 13-14z"/>
<path fill="#7522a8" d="M748 579l-9 13-10-3 9-14z"/>
<path fill="#7020a1" d="M715 559l-9 14-13-11 10-14z"/>
<path fill="#6a1e98" d="M825 378l-15 11-8-9 14-11z"/>
<path fill="#6d1f9c" d="M881 357l-15 10-10-11 15-9z"/>
<path fill="#7020a1" d="M714 533l-11 15-11-12 10-15z"/>
<path fill="#7c23b1" d="M800 530l-10 12-5 0 11-12z"/>
<path fill="#7722ab" d="M766 567l-10 13-8-1 10-13z"/>
<path fill="#6a1e98" d="M740 453l-12 14-8-10 12-13z"/>
<path fill="#8326bc" d="M907 438l-13 9 1-5 13-9z"/>
<path fill="#7822ab" d="M963 393l-14 8-3-11 15-7z"/>
<path fill="#7321a5" d="M923 352l-15 9-11-13 16-9z"/>
<path fill="#7722aa" d="M948 357l-15 8-10-13 16-8z"/>
<path fill="#6a1e98" d="M840 367l-15 11-9-9 15-11z"/>
<path fill="#7321a5" d="M729 589l-8 14-12-7 9-14z"/>
<path fill="#6e209e" d="M713 507l-11 14-9-11 11-15z"/>
<path fill="#7120a2" d="M718 582l-9 14-13-8 10-15z"/>
<path fill="#7d24b3" d="M949 409l-14 7 0-8 14-7z"/>
<path fill="#7b23b0" d="M790 542l-9 11-6 2 10-13z"/>
<path fill="#6a1e98" d="M728 467l-13 14-7-10 12-14z"/>
<path fill="#6d1f9c" d="M897 348l-16 9-10-10 16-10z"/>
<path fill="#8426bd" d="M920 430l-13 8 1-5 14-9z"/>
<path fill="#7722aa" d="M975 376l-14 7-5-12 15-8zM971 363l-15 8-8-14 15-7z"/>
<path fill="#6a1e98" d="M856 356l-16 11-9-9 15-10z"/>
<path fill="#7522a8" d="M739 592l-8 14-10-3 8-14z"/>
<path fill="#7120a2" d="M703 548l-10 14-11-11 10-15z"/>
<path fill="#7020a0" d="M706 573l-10 15-12-11 9-15z"/>
<path fill="#7722aa" d="M756 580l-8 13-9-1 9-13z"/>
<path fill="#7a23af" d="M781 553l-10 12-5 2 9-12z"/>
<path fill="#6a1e98" d="M773 405l-14 12-6-6 14-13zM787 392l-14 13-6-7 14-12z"/>
<path fill="#6b1f9a" d="M715 481l-11 14-8-10 12-14z"/>
<path fill="#7020a0" d="M702 521l-10 15-10-12 11-14z"/>
<path fill="#7822ac" d="M977 387l-14 6-2-10 14-7z"/>
<path fill="#7321a5" d="M939 344l-16 8-10-13 15-8z"/>
<path fill="#6a1e98" d="M759 417l-14 13-5-7 13-12z"/>
<path fill="#7d24b4" d="M962 402l-13 7 0-8 14-8z"/>
<path fill="#6a1e98" d="M802 380l-15 12-6-6 14-12z"/>
<path fill="#7722aa" d="M963 350l-15 7-9-13 15-7z"/>
<path fill="#8526be" d="M933 422l-13 8 2-6 13-8z"/>
<path fill="#7f24b6" d="M845 485l-11 11-1 0 12-10z"/>
<path fill="#8125b9" d="M856 476l-11 9 0 1 12-11z"/>
<path fill="#6a1e98" d="M871 347l-15 9-10-8 16-10z"/>
<path fill="#7321a5" d="M721 603l-8 13-12-5 8-15z"/>
<path fill="#7e24b4" d="M834 496l-11 10-1 1 11-11z"/>
<path fill="#6a1e98" d="M745 430l-13 14-5-8 13-13z"/>
<path fill="#6d1f9d" d="M913 339l-16 9-10-11 15-8z"/>
<path fill="#8225bb" d="M867 466l-11 10 1-1 12-10z"/>
<path fill="#7221a3" d="M709 596l-8 15-13-9 8-14z"/>
<path fill="#6a1e98" d="M816 369l-14 11-7-6 15-11z"/>
<path fill="#7c24b2" d="M823 506l-10 10-2 2 11-11z"/>
<path fill="#8426bd" d="M879 457l-12 9 2-1 12-9z"/>
<path fill="#7923ad" d="M771 565l-8 13-7 2 10-13z"/>
<path fill="#6a1e98" d="M732 444l-12 13-5-7 12-14z"/>
<path fill="#7722ab" d="M990 370l-15 6-4-13 15-6z"/>
<path fill="#7622aa" d="M748 593l-8 12-9 1 8-14z"/>
<path fill="#6d1f9c" d="M704 495l-11 15-8-10 11-15z"/>
<path fill="#7221a3" d="M693 562l-9 15-11-12 9-14z"/>
<path fill="#7522a8" d="M731 606l-8 13-10-3 8-13z"/>
<path fill="#7b23b0" d="M813 516l-10 11-3 3 11-12z"/>
<path fill="#7722ab" d="M986 357l-15 6-8-13 16-6z"/>
<path fill="#6a1e98" d="M831 358l-15 11-6-6 14-10z"/>
<path fill="#8526bf" d="M891 449l-12 8 2-1 13-9zM945 415l-12 7 2-6 14-7z"/>
<path fill="#7020a1" d="M696 588l-8 14-12-10 8-15z"/>
<path fill="#7221a3" d="M692 536l-10 15-10-12 10-15z"/>
<path fill="#6a1e98" d="M887 337l-16 10-9-9 15-9z"/>
<path fill="#7e24b4" d="M976 396l-14 6 1-9 14-6z"/>
<path fill="#6a1e98" d="M720 457l-12 14-5-7 12-14z"/>
<path fill="#7a23ae" d="M803 527l-10 11-3 4 10-12z"/>
<path fill="#7421a6" d="M954 337l-15 7-11-13 16-7z"/>
<path fill="#7822ac" d="M991 381l-14 6-2-11 15-6z"/>
<path fill="#8627c1" d="M903 440l-12 9 3-2 13-9z"/>
<path fill="#6a1e98" d="M846 348l-15 10-7-5 15-11z"/>
<path fill="#6d1f9d" d="M928 331l-15 8-11-10 16-8z"/>
<path fill="#7722ab" d="M979 344l-16 6-9-13 16-7z"/>
<path fill="#7822ac" d="M763 578l-9 12-6 3 8-13z"/>
<path fill="#7421a6" d="M713 616l-8 14-12-5 8-14z"/>
<path fill="#7020a0" d="M693 510l-11 14-7-10 10-14z"/>
<path fill="#7221a3" d="M701 611l-8 14-12-9 7-14z"/>
<path fill="#8025b8" d="M793 538l-9 11-3 4 9-11z"/>
<path fill="#6b1f9a" d="M708 471l-12 14-4-8 11-13z"/>
<path fill="#6a1e98" d="M767 398l-14 13-2-4 13-12z"/>
<path fill="#8626c0" d="M958 408l-13 7 4-6 13-7z"/>
<path fill="#7622a9" d="M740 605l-7 13-10 1 8-13z"/>
<path fill="#6a1e98" d="M781 386l-14 12-3-3 14-12z"/>
<path fill="#932ad3" d="M915 433l-12 7 4-2 13-8z"/>
<path fill="#6a1e98" d="M753 411l-13 12-2-3 13-13zM902 329l-15 8-10-8 15-9zM795 374l-14 12-3-3 14-11z"/>
<path fill="#7221a4" d="M684 577l-8 15-12-12 9-15z"/>
<path fill="#7522a8" d="M723 619l-7 13-11-2 8-14z"/>
<path fill="#6a1e98" d="M862 338l-16 10-7-6 15-9z"/>
<path fill="#7822ab" d="M1004 364l-14 6-4-13 14-6z"/>
<path fill="#7421a7" d="M682 551l-9 14-10-11 9-15z"/>
<path fill="#6a1e98" d="M740 423l-13 13-1-4 12-12z"/>
<path fill="#7822ab" d="M1000 351l-14 6-7-13 15-6z"/>
<path fill="#7e24b4" d="M989 390l-13 6 1-9 14-6z"/>
<path fill="#6a1e98" d="M810 363l-15 11-3-2 14-11z"/>
<path fill="#7120a2" d="M688 602l-7 14-13-10 8-14z"/>
<path fill="#7f24b5" d="M784 549l-9 12-4 4 10-12z"/>
<path fill="#7822ab" d="M754 590l-7 12-7 3 8-12z"/>
<path fill="#7421a6" d="M970 330l-16 7-10-13 15-6z"/>
<path fill="#7822ac" d="M1005 375l-14 6-1-11 14-6z"/>
<path fill="#6a1e98" d="M727 436l-12 14-1-4 12-14z"/>
<path fill="#6d1f9c" d="M696 485l-11 15-4-9 11-14z"/>
<path fill="#952bd5" d="M927 425l-12 8 5-3 13-8z"/>
<path fill="#6e1f9d" d="M944 324l-16 7-10-10 15-8z"/>
<path fill="#7321a4" d="M682 524l-10 15-7-11 10-14z"/>
<path fill="#6a1e98" d="M824 353l-14 10-4-2 14-10z"/>
<path fill="#7722ab" d="M994 338l-15 6-9-14 15-6z"/>
<path fill="#6a1e98" d="M877 329l-15 9-8-5 15-9z"/>
<path fill="#8727c1" d="M971 402l-13 6 4-6 14-6z"/>
<path fill="#7421a6" d="M705 630l-6 14-12-5 6-14z"/>
<path fill="#6a1e98" d="M715 450l-12 14-1-5 12-13zM918 321l-16 8-10-9 16-7z"/>
<path fill="#7d24b3" d="M775 561l-8 11-4 6 8-13z"/>
<path fill="#7622a9" d="M733 618l-7 13-10 1 7-13z"/>
<path fill="#7321a4" d="M693 625l-6 14-13-8 7-15z"/>
<path fill="#6a1e98" d="M839 342l-15 11-4-2 14-10z"/>
<path fill="#8727c2" d="M842 483l-10 10 2 3 11-11z"/>
<path fill="#8927c5" d="M853 474l-11 9 3 2 11-9z"/>
<path fill="#8526bf" d="M832 493l-10 9 1 4 11-10z"/>
<path fill="#962bd7" d="M939 419l-12 6 6-3 12-7z"/>
<path fill="#7421a6" d="M676 592l-8 14-11-11 7-15z"/>
<path fill="#8b28c8" d="M864 465l-11 9 3 2 11-10z"/>
<path fill="#7522a8" d="M716 632l-6 13-11-1 6-14z"/>
<path fill="#7722ab" d="M673 565l-9 15-9-12 8-14z"/>
<path fill="#7020a0" d="M685 500l-10 14-4-9 10-14z"/>
<path fill="#7822ac" d="M1018 359l-14 5-4-13 15-4z"/>
<path fill="#8326bc" d="M822 502l-10 10 1 4 10-10z"/>
<path fill="#7e24b5" d="M1003 385l-14 5 2-9 14-6z"/>
<path fill="#7722aa" d="M747 602l-7 12-7 4 7-13z"/>
<path fill="#8d29cb" d="M875 457l-11 8 3 1 12-9z"/>
<path fill="#6b1f9a" d="M703 464l-11 13-1-5 11-13z"/>
<path fill="#7822ac" d="M1015 347l-15 4-6-13 14-5z"/>
<path fill="#7321a5" d="M764 395l-13 12 1 1 13-12z"/>
<path fill="#7421a6" d="M778 383l-14 12 1 1 13-11z"/>
<path fill="#6a1e98" d="M892 320l-15 9-8-5 15-8z"/>
<path fill="#7622a9" d="M672 539l-9 15-7-11 9-15z"/>
<path fill="#7120a2" d="M681 616l-7 15-13-11 7-14z"/>
<path fill="#7321a5" d="M751 407l-13 13 2 0 12-12z"/>
<path fill="#8125b9" d="M812 512l-9 10 0 5 10-11z"/>
<path fill="#7421a6" d="M792 372l-14 11 0 2 13-11z"/>
<path fill="#7b23b1" d="M767 572l-8 12-5 6 9-12z"/>
<path fill="#6a1e98" d="M854 333l-15 9-5-1 15-9z"/>
<path fill="#6e1f9d" d="M959 318l-15 6-11-11 16-6z"/>
<path fill="#7421a6" d="M985 324l-15 6-11-12 15-6z"/>
<path fill="#7822ac" d="M1019 371l-14 4-1-11 14-5z"/>
<path fill="#8f29cd" d="M886 449l-11 8 4 0 12-8z"/>
<path fill="#8727c2" d="M984 397l-13 5 5-6 13-6z"/>
<path fill="#7321a4" d="M738 420l-12 12 2 0 12-12z"/>
<path fill="#7421a6" d="M806 361l-14 11-1 2 14-11z"/>
<path fill="#7f24b6" d="M803 522l-9 11-1 5 10-11z"/>
<path fill="#972bd9" d="M952 412l-13 7 6-4 13-7z"/>
<path fill="#6a1e98" d="M933 313l-15 8-10-8 15-8z"/>
<path fill="#7822ac" d="M1008 333l-14 5-9-14 15-5z"/>
<path fill="#912ad0" d="M897 441l-11 8 5 0 12-9z"/>
<path fill="#7321a4" d="M726 432l-12 14 2-1 12-13z"/>
<path fill="#6d1f9c" d="M692 477l-11 14 0-5 10-14z"/>
<path fill="#7622a9" d="M726 631l-6 12-10 2 6-13z"/>
<path fill="#7321a4" d="M675 514l-10 14-4-8 10-15z"/>
<path fill="#7421a7" d="M699 644l-6 13-12-5 6-13zM820 351l-14 10-1 2 14-10z"/>
<path fill="#6a1e98" d="M869 324l-15 9-5-1 15-9z"/>
<path fill="#7d24b3" d="M794 533l-9 10-1 6 9-11z"/>
<path fill="#7321a5" d="M687 639l-6 13-13-7 6-14z"/>
<path fill="#7622a9" d="M740 614l-6 12-8 5 7-13z"/>
<path fill="#7a23af" d="M664 580l-7 15-10-12 8-15zM759 584l-7 11-5 7 7-12z"/>
<path fill="#6a1e98" d="M908 313l-16 7-8-4 15-8z"/>
<path fill="#7221a4" d="M714 446l-12 13 3-1 11-13z"/>
<path fill="#7522a8" d="M668 606l-7 14-11-11 7-14z"/>
<path fill="#7622a8" d="M710 645l-6 13-11-1 6-13z"/>
<path fill="#932ad3" d="M908 434l-11 7 6-1 12-7z"/>
<path fill="#7e24b5" d="M1016 380l-13 5 2-10 14-4z"/>
<path fill="#7a23af" d="M663 554l-8 14-7-11 8-14z"/>
<path fill="#7521a7" d="M834 341l-14 10-1 2 14-9z"/>
<path fill="#7822ac" d="M1032 355l-14 4-3-12 14-5z"/>
<path fill="#992cdb" d="M964 407l-12 5 6-4 13-6z"/>
<path fill="#8827c2" d="M997 392l-13 5 5-7 14-5z"/>
<path fill="#7020a0" d="M681 491l-10 14 0-5 10-14z"/>
<path fill="#7b23b0" d="M785 543l-8 11-2 7 9-12z"/>
<path fill="#7822ac" d="M1029 342l-14 5-7-14 15-4z"/>
<path fill="#6e1f9d" d="M974 312l-15 6-10-11 15-6z"/>
<path fill="#7221a3" d="M674 631l-6 14-13-10 6-15z"/>
<path fill="#7822ac" d="M1032 367l-13 4-1-12 14-4z"/>
<path fill="#7421a6" d="M1000 319l-15 5-11-12 16-5z"/>
<path fill="#7120a2" d="M765 396l-13 12 5 4 12-11z"/>
<path fill="#7321a5" d="M702 459l-11 13 3-1 11-13z"/>
<path fill="#7120a2" d="M778 385l-13 11 4 5 13-11z"/>
<path fill="#952bd6" d="M920 427l-12 7 7-1 12-8z"/>
<path fill="#6a1e98" d="M949 307l-16 6-10-8 15-6z"/>
<path fill="#7622a9" d="M665 528l-9 15-3-9 8-14z"/>
<path fill="#7120a2" d="M752 408l-12 12 5 4 12-12z"/>
<path fill="#6a1e98" d="M884 316l-15 8-5-1 14-8z"/>
<path fill="#7120a2" d="M791 374l-13 11 4 5 13-10z"/>
<path fill="#7521a7" d="M849 332l-15 9-1 3 14-9z"/>
<path fill="#7120a2" d="M740 420l-12 12 5 4 12-12z"/>
<path fill="#7923ad" d="M752 595l-6 11-6 8 7-12z"/>
<path fill="#7522a8" d="M720 643l-6 13-10 2 6-13z"/>
<path fill="#7120a2" d="M805 363l-14 11 4 6 13-10z"/>
<path fill="#7923ae" d="M777 554l-7 10-3 8 8-11z"/>
<path fill="#7822ac" d="M1023 329l-15 4-8-14 14-4z"/>
<path fill="#6a1e98" d="M923 305l-15 8-9-5 15-7z"/>
<path fill="#7522a8" d="M734 626l-6 12-8 5 6-12z"/>
<path fill="#7120a2" d="M728 432l-12 13 6 3 11-12z"/>
<path fill="#7521a7" d="M693 657l-5 13-13-4 6-14zM691 472l-10 14 3-2 10-13z"/>
<path fill="#9a2cdc" d="M976 402l-12 5 7-5 13-5z"/>
<path fill="#7321a4" d="M671 505l-10 15 0-7 10-13z"/>
<path fill="#972bd8" d="M931 421l-11 6 7-2 12-6z"/>
<path fill="#7120a2" d="M819 353l-14 10 3 7 13-10z"/>
<path fill="#7d24b4" d="M657 595l-7 14-10-12 7-14z"/>
<path fill="#7421a5" d="M681 652l-6 14-13-7 6-14z"/>
<path fill="#7f24b5" d="M1029 377l-13 3 3-9 13-4z"/>
<path fill="#7e24b5" d="M655 568l-8 15-7-11 8-15z"/>
<path fill="#7622a9" d="M704 658l-4 13-12-1 5-13z"/>
<path fill="#7521a7" d="M864 323l-15 9-2 3 14-9z"/>
<path fill="#7722ab" d="M661 620l-6 15-11-12 6-14z"/>
<path fill="#8827c3" d="M1009 388l-12 4 6-7 13-5z"/>
<path fill="#7120a2" d="M716 445l-11 13 7 2 10-12z"/>
<path fill="#6a1e98" d="M899 308l-15 8-6-1 15-8z"/>
<path fill="#8827c3" d="M839 479l-10 9 3 5 10-10z"/>
<path fill="#8a28c6" d="M848 471l-9 8 3 4 11-9z"/>
<path fill="#7822ac" d="M1046 352l-14 3-3-13 14-3z"/>
<path fill="#7722ab" d="M770 564l-7 11-4 9 8-12z"/>
<path fill="#7120a2" d="M833 344l-14 9 2 7 13-9z"/>
<path fill="#7a23af" d="M656 543l-8 14-4-9 9-14z"/>
<path fill="#8626c0" d="M829 488l-9 9 2 5 10-9z"/>
<path fill="#8c28c9" d="M858 463l-10 8 5 3 11-9z"/>
<path fill="#6e1f9d" d="M990 307l-16 5-10-11 15-5z"/>
<path fill="#6a1e98" d="M964 301l-15 6-11-8 15-6z"/>
<path fill="#7722ab" d="M746 606l-6 12-6 8 6-12z"/>
<path fill="#8426bd" d="M820 497l-9 9 1 6 10-10z"/>
<path fill="#7822ac" d="M1043 339l-14 3-6-13 14-4z"/>
<path fill="#7722aa" d="M681 486l-10 14 4-3 9-13z"/>
<path fill="#7823ad" d="M1045 364l-13 3 0-12 14-3z"/>
<path fill="#992cdb" d="M942 415l-11 6 8-2 13-7z"/>
<path fill="#6e1f9d" d="M769 401l-12 11 8 9 12-11z"/>
<path fill="#8f29cc" d="M869 455l-11 8 6 2 11-8z"/>
<path fill="#7221a4" d="M668 645l-6 14-12-10 5-14z"/>
<path fill="#6e1f9d" d="M782 390l-13 11 8 9 12-10z"/>
<path fill="#7421a7" d="M1014 315l-14 4-10-12 14-5z"/>
<path fill="#6e209e" d="M757 412l-12 12 9 8 11-11z"/>
<path fill="#7221a3" d="M705 458l-11 13 7 2 11-13z"/>
<path fill="#6d1f9d" d="M795 380l-13 10 7 10 12-10z"/>
<path fill="#8225ba" d="M811 506l-9 10 1 6 9-10z"/>
<path fill="#6a1e98" d="M938 299l-15 6-9-4 15-7z"/>
<path fill="#7622a9" d="M661 520l-8 14 0-7 8-14z"/>
<path fill="#7522a8" d="M878 315l-14 8-3 3 14-8zM714 656l-4 12-10 3 4-13z"/>
<path fill="#6e209e" d="M745 424l-12 12 10 7 11-11z"/>
<path fill="#9129cf" d="M879 447l-10 8 6 2 11-8z"/>
<path fill="#7521a7" d="M728 638l-5 12-9 6 6-13z"/>
<path fill="#9b2cde" d="M988 397l-12 5 8-5 13-5z"/>
<path fill="#7120a2" d="M847 335l-14 9 1 7 14-9z"/>
<path fill="#6d1f9d" d="M808 370l-13 10 6 10 13-10z"/>
<path fill="#7f25b7" d="M802 516l-8 9 0 8 9-11z"/>
<path fill="#7622a9" d="M763 575l-7 11-4 9 7-11z"/>
<path fill="#6e209e" d="M733 436l-11 12 11 7 10-12z"/>
<path fill="#7822ac" d="M1037 325l-14 4-9-14 15-4z"/>
<path fill="#6a1e98" d="M914 301l-15 7-6-1 15-7z"/>
<path fill="#932ad2" d="M889 440l-10 7 7 2 11-8z"/>
<path fill="#6d1f9c" d="M821 360l-13 10 6 10 12-9z"/>
<path fill="#7421a6" d="M694 471l-10 13 8 1 9-12z"/>
<path fill="#7522a8" d="M688 670l-4 13-13-4 4-13z"/>
<path fill="#8827c3" d="M1021 384l-12 4 7-8 13-3z"/>
<path fill="#8125b9" d="M650 609l-6 14-10-12 6-14z"/>
<path fill="#8225bb" d="M647 583l-7 14-7-11 7-14z"/>
<path fill="#7f24b6" d="M1041 373l-12 4 3-10 13-3z"/>
<path fill="#9a2cdd" d="M954 410l-12 5 10-3 12-5z"/>
<path fill="#7a23ae" d="M671 500l-10 13 5-3 9-13z"/>
<path fill="#7d24b4" d="M794 525l-8 10-1 8 9-10z"/>
<path fill="#7421a6" d="M675 666l-4 13-13-7 4-13z"/>
<path fill="#7622a9" d="M700 671l-4 13-12-1 4-13z"/>
<path fill="#7120a2" d="M861 326l-14 9 1 7 13-8z"/>
<path fill="#6f209f" d="M722 448l-10 12 10 6 11-11z"/>
<path fill="#7e24b5" d="M648 557l-8 15-3-10 7-14z"/>
<path fill="#7622a9" d="M740 618l-6 11-6 9 6-12z"/>
<path fill="#7923ad" d="M655 635l-5 14-12-12 6-14z"/>
<path fill="#952bd5" d="M900 434l-11 6 8 1 11-7z"/>
<path fill="#6d1f9c" d="M834 351l-13 9 5 11 13-9z"/>
<path fill="#7522a8" d="M893 307l-15 8-3 3 14-7z"/>
<path fill="#6a1e98" d="M979 296l-15 5-11-8 15-5z"/>
<path fill="#6c1f9a" d="M777 410l-12 11 12 12 11-10z"/>
<path fill="#6e1f9d" d="M1004 302l-14 5-11-11 14-4z"/>
<path fill="#7822ac" d="M1059 349l-13 3-3-13 14-3z"/>
<path fill="#6b1f9a" d="M789 400l-12 10 11 13 12-10z"/>
<path fill="#7a23af" d="M653 534l-9 14 1-7 8-14z"/>
<path fill="#6c1f9b" d="M765 421l-11 11 13 11 10-10z"/>
<path fill="#7421a7" d="M756 586l-6 10-4 10 6-11z"/>
<path fill="#9c2ddf" d="M999 393l-11 4 9-5 12-4z"/>
<path fill="#7b23b1" d="M786 535l-8 10-1 9 8-11z"/>
<path fill="#6b1f9a" d="M801 390l-12 10 11 13 11-9z"/>
<path fill="#7622a9" d="M684 484l-9 13 8 1 9-13z"/>
<path fill="#6a1e98" d="M953 293l-15 6-9-5 15-5z"/>
<path fill="#7020a1" d="M712 460l-11 13 12 5 9-12z"/>
<path fill="#7923ad" d="M1058 361l-13 3 1-12 13-3z"/>
<path fill="#6c1f9b" d="M754 432l-11 11 13 11 11-11z"/>
<path fill="#7822ac" d="M1057 336l-14 3-6-14 14-3z"/>
<path fill="#7421a7" d="M723 650l-5 11-8 7 4-12zM1029 311l-15 4-10-13 15-3z"/>
<path fill="#972bd8" d="M911 427l-11 7 8 0 12-7z"/>
<path fill="#7321a5" d="M662 659l-4 13-13-9 5-14z"/>
<path fill="#6b1f99" d="M814 380l-13 10 10 14 12-9z"/>
<path fill="#6d1f9c" d="M848 342l-14 9 5 11 13-8z"/>
<path fill="#9c2ddf" d="M965 405l-11 5 10-3 12-5z"/>
<path fill="#7522a8" d="M710 668l-4 12-10 4 4-13z"/>
<path fill="#7120a2" d="M875 318l-14 8 0 8 14-7z"/>
<path fill="#6a1e98" d="M929 294l-15 7-6-1 14-6z"/>
<path fill="#7d24b3" d="M661 513l-8 14 4-3 9-14z"/>
<path fill="#6d1f9c" d="M743 443l-10 12 13 10 10-11z"/>
<path fill="#6b1f99" d="M826 371l-12 9 9 15 12-9z"/>
<path fill="#7a23ae" d="M778 545l-7 10-1 9 7-10z"/>
<path fill="#7221a4" d="M701 473l-9 12 12 5 9-12z"/>
<path fill="#8927c4" d="M1033 381l-12 3 8-7 12-4z"/>
<path fill="#7521a7" d="M734 629l-5 11-6 10 5-12z"/>
<path fill="#7522a8" d="M908 300l-15 7-4 4 15-6z"/>
<path fill="#6d1f9d" d="M733 455l-11 11 15 10 9-11z"/>
<path fill="#8627c1" d="M640 597l-6 14-7-11 6-14z"/>
<path fill="#982cda" d="M921 421l-10 6 9 0 11-6z"/>
<path fill="#7822ac" d="M1051 322l-14 3-8-14 14-2z"/>
<path fill="#7f24b6" d="M1053 371l-12 2 4-9 13-3z"/>
<path fill="#7923ae" d="M675 497l-9 13 8 1 9-13z"/>
<path fill="#8526bf" d="M644 623l-6 14-9-12 5-14z"/>
<path fill="#6d1f9c" d="M861 334l-13 8 4 12 13-7z"/>
<path fill="#8225bb" d="M640 572l-7 14-3-10 7-14z"/>
<path fill="#7321a5" d="M750 596l-6 11-4 11 6-12z"/>
<path fill="#7622a8" d="M684 683l-4 13-13-3 4-14z"/>
<path fill="#6a1e98" d="M839 362l-13 9 9 15 12-8z"/>
<path fill="#6a1f99" d="M788 423l-11 10 15 15 10-10z"/>
<path fill="#6a1e98" d="M800 413l-12 10 14 15 11-9z"/>
<path fill="#6b1f99" d="M777 433l-10 10 15 14 10-9z"/>
<path fill="#6a1e98" d="M811 404l-11 9 13 16 10-9z"/>
<path fill="#7e24b5" d="M644 548l-7 14 1-7 7-14z"/>
<path fill="#7622a9" d="M696 684l-4 12-12 0 4-13z"/>
<path fill="#7120a2" d="M889 311l-14 7 0 9 14-7z"/>
<path fill="#9c2de0" d="M1011 390l-12 3 10-5 12-4z"/>
<path fill="#7521a7" d="M671 679l-4 14-13-7 4-14z"/>
<path fill="#7822ac" d="M771 555l-6 10-2 10 7-11z"/>
<path fill="#7b23af" d="M650 649l-5 14-11-12 4-14z"/>
<path fill="#6b1f9a" d="M767 443l-11 11 16 13 10-10z"/>
<path fill="#6f209f" d="M722 466l-9 12 15 9 9-11z"/>
<path fill="#9d2de1" d="M976 401l-11 4 11-3 12-5z"/>
<path fill="#6a1e98" d="M993 292l-14 4-11-8 15-4zM823 395l-12 9 12 16 11-8z"/>
<path fill="#7522a8" d="M692 485l-9 13 12 4 9-12z"/>
<path fill="#6a1e98" d="M968 288l-15 5-9-4 15-5z"/>
<path fill="#8025b8" d="M653 527l-8 14 5-4 7-13z"/>
<path fill="#6a1e98" d="M852 354l-13 8 8 16 12-8z"/>
<path fill="#6e1f9d" d="M1019 299l-15 3-11-10 15-4z"/>
<path fill="#9a2cdd" d="M932 416l-11 5 10 0 11-6z"/>
<path fill="#6c1f9a" d="M756 454l-10 11 17 13 9-11z"/>
<path fill="#7822ac" d="M1072 348l-13 1-2-13 13-2z"/>
<path fill="#7421a6" d="M718 661l-3 12-9 7 4-12z"/>
<path fill="#6a1e98" d="M944 289l-15 5-7 0 15-5z"/>
<path fill="#6d1f9b" d="M875 327l-14 7 4 13 13-8z"/>
<path fill="#6a1e98" d="M835 386l-12 9 11 17 11-8z"/>
<path fill="#8827c3" d="M834 475l-8 8 3 5 10-9z"/>
<path fill="#8a28c6" d="M843 467l-9 8 5 4 9-8z"/>
<path fill="#8626c0" d="M826 483l-9 8 3 6 9-9z"/>
<path fill="#7923ad" d="M1071 359l-13 2 1-12 13-1z"/>
<path fill="#8c28c9" d="M853 460l-10 7 5 4 10-8z"/>
<path fill="#7d24b3" d="M666 510l-9 14 9-1 8-12z"/>
<path fill="#7120a2" d="M713 478l-9 12 15 8 9-11z"/>
<path fill="#7522a8" d="M706 680l-3 12-11 4 4-12z"/>
<path fill="#7822ac" d="M1070 334l-13 2-6-14 14-1z"/>
<path fill="#7421a7" d="M1043 309l-14 2-10-12 14-3z"/>
<path fill="#8426bd" d="M817 491l-8 9 2 6 9-9z"/>
<path fill="#7522a8" d="M922 294l-14 6-4 5 14-6z"/>
<path fill="#6c1f9b" d="M746 465l-9 11 17 12 9-10z"/>
<path fill="#7421a6" d="M658 672l-4 14-12-10 3-13z"/>
<path fill="#8f29cc" d="M862 452l-9 8 5 3 11-8z"/>
<path fill="#7221a3" d="M744 607l-5 11-5 11 6-11z"/>
<path fill="#7622a9" d="M765 565l-7 10-2 11 7-11z"/>
<path fill="#7421a6" d="M729 640l-4 11-7 10 5-11z"/>
<path fill="#6a1e98" d="M802 438l-10 10 16 17 10-9zM847 378l-12 8 10 18 12-8zM813 429l-11 9 16 18 9-8zM865 347l-13 7 7 16 12-7zM792 448l-10 9 17 17 9-9z"/>
<path fill="#8225ba" d="M809 500l-8 8 1 8 9-10z"/>
<path fill="#8927c4" d="M1045 379l-12 2 8-8 12-2z"/>
<path fill="#6a1e98" d="M823 420l-10 9 14 19 10-9z"/>
<path fill="#7822ac" d="M683 498l-9 13 13 3 8-12z"/>
<path fill="#7120a2" d="M904 305l-15 6 0 9 13-7z"/>
<path fill="#9129cf" d="M871 445l-9 7 7 3 10-8z"/>
<path fill="#6b1f99" d="M782 457l-10 10 18 16 9-9z"/>
<path fill="#9c2ddf" d="M942 411l-10 5 10-1 12-5z"/>
<path fill="#6e1f9d" d="M737 476l-9 11 17 11 9-10z"/>
<path fill="#6a1e98" d="M834 412l-11 8 14 19 11-7z"/>
<path fill="#8727c1" d="M633 586l-6 14-3-10 6-14z"/>
<path fill="#8b28c8" d="M634 611l-5 14-7-11 5-14z"/>
<path fill="#9e2de2" d="M987 397l-11 4 12-4 11-4z"/>
<path fill="#7f25b7" d="M801 508l-8 9 1 8 8-9z"/>
<path fill="#7f24b6" d="M1065 369l-12 2 5-10 13-2z"/>
<path fill="#8225bb" d="M637 562l-7 14 1-8 7-13z"/>
<path fill="#6c1f9b" d="M889 320l-14 7 3 12 13-6z"/>
<path fill="#9d2de1" d="M1022 387l-11 3 10-6 12-3z"/>
<path fill="#6b1f99" d="M772 467l-9 11 18 14 9-9z"/>
<path fill="#6a1e98" d="M859 370l-12 8 10 18 11-7z"/>
<path fill="#7421a6" d="M704 490l-9 12 16 7 8-11z"/>
<path fill="#8927c4" d="M638 637l-4 14-10-12 5-14z"/>
<path fill="#932ad2" d="M881 439l-10 6 8 2 10-7z"/>
<path fill="#7822ac" d="M1065 321l-14 1-8-13 14-2z"/>
<path fill="#6a1e98" d="M845 404l-11 8 14 20 10-8z"/>
<path fill="#8426bd" d="M645 541l-7 14 5-5 7-13z"/>
<path fill="#7622a9" d="M680 696l-2 13-13-4 2-12z"/>
<path fill="#6a1e98" d="M878 339l-13 8 6 16 12-7z"/>
<path fill="#7d24b4" d="M793 517l-7 9 0 9 8-10z"/>
<path fill="#7521a7" d="M758 575l-5 10-3 11 6-10z"/>
<path fill="#7622a9" d="M692 696l-2 12-12 1 2-13z"/>
<path fill="#6c1f9a" d="M763 478l-9 10 19 14 8-10z"/>
<path fill="#8125b8" d="M657 524l-7 13 9-1 7-13z"/>
<path fill="#7020a1" d="M728 487l-9 11 18 11 8-11z"/>
<path fill="#6a1e98" d="M983 284l-15 4-9-4 14-4zM1008 288l-15 4-10-8 14-4zM959 284l-15 5-7 0 14-5zM818 456l-10 9 18 18 8-8z"/>
<path fill="#952bd5" d="M891 433l-10 6 8 1 11-6z"/>
<path fill="#6a1e98" d="M827 448l-9 8 16 19 9-8zM857 396l-12 8 13 20 10-7z"/>
<path fill="#7c24b2" d="M645 663l-3 13-12-11 4-14z"/>
<path fill="#7522a8" d="M667 693l-2 12-14-6 3-13z"/>
<path fill="#6a1e98" d="M808 465l-9 9 18 17 9-8z"/>
<path fill="#7421a6" d="M715 673l-4 11-8 8 3-12z"/>
<path fill="#6a1e98" d="M837 439l-10 9 16 19 10-7z"/>
<path fill="#7c24b2" d="M674 511l-8 12 13 3 8-12z"/>
<path fill="#7120a2" d="M739 618l-5 10-5 12 5-11z"/>
<path fill="#7622a8" d="M937 289l-15 5-4 5 13-6z"/>
<path fill="#6a1e98" d="M871 363l-12 7 9 19 11-7z"/>
<path fill="#9d2de1" d="M953 407l-11 4 12-1 11-5z"/>
<path fill="#6e1f9d" d="M1033 296l-14 3-11-11 14-3z"/>
<path fill="#6a1e98" d="M799 474l-9 9 19 17 8-9zM848 432l-11 7 16 21 9-8z"/>
<path fill="#7120a2" d="M918 299l-14 6-2 8 13-5z"/>
<path fill="#6d1f9d" d="M754 488l-9 10 20 14 8-10z"/>
<path fill="#7b23b1" d="M786 526l-7 9-1 10 8-10z"/>
<path fill="#7722ab" d="M695 502l-8 12 16 7 8-12z"/>
<path fill="#7822ac" d="M1085 346l-13 2-2-14 13-1z"/>
<path fill="#7321a5" d="M725 651l-3 11-7 11 3-12z"/>
<path fill="#6b1f99" d="M790 483l-9 9 20 16 8-8z"/>
<path fill="#6c1f9b" d="M902 313l-13 7 2 13 12-6z"/>
<path fill="#6a1e98" d="M868 389l-11 7 11 21 11-7z"/>
<path fill="#7923ad" d="M1083 358l-12 1 1-11 13-2z"/>
<path fill="#972bd8" d="M901 427l-10 6 9 1 11-7z"/>
<path fill="#7522a8" d="M703 692l-3 12-10 4 2-12z"/>
<path fill="#ad31f7" d="M998 394l-11 3 12-4 12-3z"/>
<path fill="#6a1e98" d="M858 424l-10 8 14 20 9-7z"/>
<path fill="#7321a5" d="M719 498l-8 11 18 11 8-11z"/>
<path fill="#6a1e98" d="M891 333l-13 6 5 17 12-6z"/>
<path fill="#8927c4" d="M1056 377l-11 2 8-8 12-2z"/>
<path fill="#7521a7" d="M1057 307l-14 2-10-13 14-2z"/>
<path fill="#7822ac" d="M1083 333l-13 1-5-13 13-2z"/>
<path fill="#6c1f9a" d="M781 492l-8 10 20 15 8-9z"/>
<path fill="#7321a5" d="M753 585l-6 9-3 13 6-11z"/>
<path fill="#7421a6" d="M654 686l-3 13-12-10 3-13z"/>
<path fill="#6a1e98" d="M883 356l-12 7 8 19 12-6z"/>
<path fill="#7020a0" d="M745 498l-8 11 20 13 8-10z"/>
<path fill="#7a23ae" d="M779 535l-7 9-1 11 7-10z"/>
<path fill="#6a1e98" d="M868 417l-10 7 13 21 10-6z"/>
<path fill="#9d2de2" d="M1033 385l-11 2 11-6 12-2z"/>
<path fill="#8927c4" d="M834 475l-8 8 17 18 8-7z"/>
<path fill="#8727c1" d="M630 576l-6 14 1-8 6-14z"/>
<path fill="#8a28c6" d="M843 467l-9 8 17 19 8-8z"/>
<path fill="#8b28c7" d="M627 600l-5 14-3-11 5-13z"/>
<path fill="#8827c2" d="M826 483l-9 8 18 18 8-8z"/>
<path fill="#8827c3" d="M638 555l-7 13 5-5 7-13z"/>
<path fill="#8b28c8" d="M853 460l-10 7 16 19 9-6z"/>
<path fill="#6a1e98" d="M879 382l-11 7 11 21 11-6z"/>
<path fill="#9029ce" d="M629 625l-5 14-6-12 4-13z"/>
<path fill="#8526be" d="M650 537l-7 13 9-1 7-13z"/>
<path fill="#982cda" d="M910 421l-9 6 10 0 10-6z"/>
<path fill="#8727c1" d="M817 491l-8 9 19 16 7-7z"/>
<path fill="#9f2de3" d="M963 403l-10 4 12-2 11-4z"/>
<path fill="#7f24b6" d="M1077 368l-12 1 6-10 12-1z"/>
<path fill="#8025b7" d="M666 523l-7 13 13 2 7-12z"/>
<path fill="#6d1f9c" d="M773 502l-8 10 21 14 7-9z"/>
<path fill="#8d28c9" d="M862 452l-9 8 15 20 8-7z"/>
<path fill="#7b23b0" d="M687 514l-8 12 17 6 7-11z"/>
<path fill="#7722aa" d="M711 509l-8 12 19 9 7-10z"/>
<path fill="#6a1e98" d="M879 410l-11 7 13 22 10-6z"/>
<path fill="#8626c0" d="M809 500l-8 8 19 16 8-8z"/>
<path fill="#7421a6" d="M734 628l-3 10-6 13 4-11z"/>
<path fill="#8c28c9" d="M634 651l-4 14-9-12 3-14z"/>
<path fill="#7321a4" d="M737 509l-8 11 21 11 7-9z"/>
<path fill="#8e29cb" d="M871 445l-9 7 14 21 9-6z"/>
<path fill="#6a1e98" d="M973 280l-14 4-8 0 14-4z"/>
<path fill="#7622a9" d="M951 284l-14 5-6 4 14-4z"/>
<path fill="#7822ac" d="M1078 319l-13 2-8-14 13-1z"/>
<path fill="#7120a2" d="M931 293l-13 6-3 9 14-5z"/>
<path fill="#7822ac" d="M772 544l-6 9-1 12 6-10z"/>
<path fill="#6a1e98" d="M997 280l-14 4-10-4 14-4z"/>
<path fill="#6c1f9b" d="M915 308l-13 5 1 14 13-6z"/>
<path fill="#6a1e98" d="M903 327l-12 6 4 17 12-6z"/>
<path fill="#7722aa" d="M678 709l-2 12-13-3 2-13z"/>
<path fill="#6a1e98" d="M895 350l-12 6 8 20 11-6z"/>
<path fill="#8526bf" d="M801 508l-8 9 20 15 7-8z"/>
<path fill="#6f20a0" d="M765 512l-8 10 22 13 7-9z"/>
<path fill="#7722aa" d="M690 708l-2 12-12 1 2-12z"/>
<path fill="#6a1e98" d="M891 376l-12 6 11 22 10-6zM1022 285l-14 3-11-8 14-2z"/>
<path fill="#7321a5" d="M711 684l-2 11-9 9 3-12z"/>
<path fill="#8f29cd" d="M881 439l-10 6 14 22 9-6z"/>
<path fill="#9a2cdd" d="M920 416l-10 5 11 0 11-5z"/>
<path fill="#7221a3" d="M747 594l-4 10-4 14 5-11z"/>
<path fill="#ad32f8" d="M1009 391l-11 3 13-4 11-3z"/>
<path fill="#7221a4" d="M722 662l-3 11-8 11 4-11z"/>
<path fill="#6a1e98" d="M890 404l-11 6 12 23 10-6z"/>
<path fill="#8927c4" d="M851 494l-8 7 16 17 8-7z"/>
<path fill="#8a28c6" d="M859 486l-8 8 16 17 7-6z"/>
<path fill="#7e24b4" d="M642 676l-3 13-12-11 3-13z"/>
<path fill="#8827c3" d="M843 501l-8 8 17 16 7-7z"/>
<path fill="#7622a9" d="M665 705l-2 13-14-7 2-12z"/>
<path fill="#8b28c8" d="M868 480l-9 6 15 19 8-6z"/>
<path fill="#8526be" d="M793 517l-7 9 20 15 7-9z"/>
<path fill="#6e1f9d" d="M1047 294l-14 2-11-11 14-2z"/>
<path fill="#8727c2" d="M835 509l-7 7 17 16 7-7z"/>
<path fill="#7622a9" d="M729 520l-7 10 22 11 6-10z"/>
<path fill="#8d28c9" d="M876 473l-8 7 14 19 8-6z"/>
<path fill="#7a23af" d="M703 521l-7 11 20 9 6-11z"/>
<path fill="#9029cf" d="M891 433l-10 6 13 22 9-6z"/>
<path fill="#a02ee5" d="M973 399l-10 4 13-2 11-4z"/>
<path fill="#7f24b6" d="M679 526l-7 12 17 6 7-12z"/>
<path fill="#7221a4" d="M757 522l-7 9 22 13 7-9z"/>
<path fill="#7622a9" d="M766 553l-6 10-2 12 7-10z"/>
<path fill="#7822ac" d="M1097 346l-12 0-2-13 12 0z"/>
<path fill="#7421a6" d="M830 470l-8 8 4 5 8-8z"/>
<path fill="#7522a8" d="M700 704l-2 11-10 5 2-12z"/>
<path fill="#8426be" d="M659 536l-7 13 14 2 6-13z"/>
<path fill="#8627c1" d="M828 516l-8 8 19 15 6-7z"/>
<path fill="#7421a6" d="M838 463l-8 7 4 5 9-8z"/>
<path fill="#8927c5" d="M1067 376l-11 1 9-8 12-1z"/>
<path fill="#7421a6" d="M822 478l-8 7 3 6 9-8z"/>
<path fill="#7923ad" d="M1095 358l-12 0 2-12 12 0z"/>
<path fill="#8927c4" d="M643 550l-7 13 10-2 6-12z"/>
<path fill="#8e29cb" d="M885 467l-9 6 14 20 7-6z"/>
<path fill="#7421a6" d="M847 456l-9 7 5 4 10-7z"/>
<path fill="#9e2de2" d="M1044 383l-11 2 12-6 11-2z"/>
<path fill="#8c28c8" d="M631 568l-6 14 6-6 5-13z"/>
<path fill="#6a1e98" d="M902 370l-11 6 9 22 11-5zM900 398l-10 6 11 23 9-6z"/>
<path fill="#8426be" d="M786 526l-7 9 21 14 6-8z"/>
<path fill="#6a1e98" d="M907 344l-12 6 7 20 12-5z"/>
<path fill="#7421a6" d="M814 485l-7 8 2 7 8-9z"/>
<path fill="#8b28c7" d="M624 590l-5 13 1-8 5-13z"/>
<path fill="#9c2ddf" d="M930 412l-10 4 12 0 10-5z"/>
<path fill="#7421a6" d="M855 450l-8 6 6 4 9-8z"/>
<path fill="#8626c0" d="M820 524l-7 8 19 14 7-7z"/>
<path fill="#6a1e98" d="M916 321l-13 6 4 17 12-5z"/>
<path fill="#7521a7" d="M1070 306l-13 1-10-13 13-1z"/>
<path fill="#8f29cc" d="M622 614l-4 13-3-10 4-14z"/>
<path fill="#912ad0" d="M901 427l-10 6 12 22 8-5z"/>
<path fill="#7321a4" d="M731 638l-4 11-5 13 3-11z"/>
<path fill="#8f29cd" d="M894 461l-9 6 12 20 8-6z"/>
<path fill="#7822ac" d="M1095 333l-12 0-5-14 13 0z"/>
<path fill="#7421a6" d="M807 493l-8 8 2 7 8-8z"/>
<path fill="#6c1f9b" d="M929 303l-14 5 1 13 13-5z"/>
<path fill="#7521a7" d="M651 699l-2 12-12-9 2-13z"/>
<path fill="#7421a6" d="M864 443l-9 7 7 2 9-7z"/>
<path fill="#7120a2" d="M945 289l-14 4-2 10 13-5z"/>
<path fill="#942bd5" d="M624 639l-3 14-7-12 4-14z"/>
<path fill="#7120a2" d="M743 604l-4 10-5 14 5-10z"/>
<path fill="#7622a9" d="M750 531l-6 10 22 12 6-9z"/>
<path fill="#8526bf" d="M813 532l-7 9 20 13 6-8z"/>
<path fill="#7f24b6" d="M1088 368l-11 0 6-10 12 0z"/>
<path fill="#7a23af" d="M722 530l-6 11 21 10 7-10z"/>
<path fill="#7622a9" d="M965 280l-14 4-6 5 13-4z"/>
<path fill="#8927c5" d="M867 511l-8 7 15 15 6-6z"/>
<path fill="#8a28c6" d="M874 505l-7 6 13 16 7-6z"/>
<path fill="#8426bd" d="M779 535l-7 9 22 13 6-8z"/>
<path fill="#7421a6" d="M799 501l-7 8 1 8 8-9z"/>
<path fill="#8927c4" d="M859 518l-7 7 15 14 7-6z"/>
<path fill="#9029cf" d="M903 455l-9 6 11 20 9-5z"/>
<path fill="#8b28c8" d="M882 499l-8 6 13 16 7-6z"/>
<path fill="#7521a7" d="M760 563l-5 9-2 13 5-10z"/>
<path fill="#7f24b6" d="M696 532l-7 12 20 8 7-11z"/>
<path fill="#6a1e98" d="M987 276l-14 4-8 0 13-3z"/>
<path fill="#7421a6" d="M873 437l-9 6 7 2 10-6z"/>
<path fill="#8827c2" d="M852 525l-7 7 16 14 6-7z"/>
<path fill="#6a1e98" d="M911 393l-11 5 10 23 10-5z"/>
<path fill="#ae32f9" d="M1019 389l-10 2 13-4 11-2z"/>
<path fill="#8d28c9" d="M890 493l-8 6 12 16 7-5z"/>
<path fill="#932ad2" d="M910 421l-9 6 10 23 9-5z"/>
<path fill="#6a1e98" d="M914 365l-12 5 9 23 10-5zM1011 278l-14 2-10-4 14-2z"/>
<path fill="#8f29cd" d="M630 665l-3 13-9-12 3-13z"/>
<path fill="#8426bd" d="M672 538l-6 13 17 4 6-11z"/>
<path fill="#a12ee6" d="M983 396l-10 3 14-2 11-3z"/>
<path fill="#8526be" d="M806 541l-6 8 20 12 6-7z"/>
<path fill="#8727c1" d="M845 532l-6 7 16 13 6-6z"/>
<path fill="#9d2de1" d="M939 408l-9 4 12-1 11-4z"/>
<path fill="#7421a6" d="M792 509l-7 8 1 9 7-9z"/>
<path fill="#7221a3" d="M719 673l-3 10-7 12 2-11z"/>
<path fill="#7321a5" d="M709 695l-2 11-9 9 2-11z"/>
<path fill="#8e29cb" d="M897 487l-7 6 11 17 7-5z"/>
<path fill="#6a1e98" d="M919 339l-12 5 7 21 11-5z"/>
<path fill="#912ad0" d="M911 450l-8 5 11 21 8-5z"/>
<path fill="#7822ac" d="M1091 319l-13 0-8-13 13-1z"/>
<path fill="#8927c4" d="M652 549l-6 12 14 2 6-12z"/>
<path fill="#7421a6" d="M882 432l-9 5 8 2 10-6z"/>
<path fill="#7722ab" d="M676 721l-1 12-13-3 1-12z"/>
<path fill="#6a1e98" d="M1036 283l-14 2-11-7 13-2z"/>
<path fill="#8626c0" d="M839 539l-7 7 17 13 6-7z"/>
<path fill="#7722aa" d="M688 720l-1 11-12 2 1-12z"/>
<path fill="#8426bd" d="M772 544l-6 9 23 12 5-8z"/>
<path fill="#7a23af" d="M744 541l-7 10 23 12 6-10z"/>
<path fill="#8f29cd" d="M905 481l-8 6 11 18 7-5z"/>
<path fill="#6a1e98" d="M929 316l-13 5 3 18 12-5z"/>
<path fill="#8d28ca" d="M636 563l-5 13 10-2 5-13z"/>
<path fill="#8426bd" d="M800 549l-6 8 21 12 5-8z"/>
<path fill="#7e24b5" d="M716 541l-7 11 23 9 5-10z"/>
<path fill="#942ad3" d="M920 416l-10 5 10 24 9-5z"/>
<path fill="#7421a6" d="M785 517l-6 8 0 10 7-9z"/>
<path fill="#8626c0" d="M832 546l-6 8 18 11 5-6z"/>
<path fill="#7f24b6" d="M639 689l-2 13-12-11 2-13z"/>
<path fill="#6a1e98" d="M921 388l-10 5 9 23 10-4z"/>
<path fill="#7321a5" d="M755 572l-5 9-3 13 6-9z"/>
<path fill="#9029ce" d="M625 582l-5 13 6-6 5-13z"/>
<path fill="#9e2de2" d="M1054 382l-10 1 12-6 11-1z"/>
<path fill="#7622aa" d="M663 718l-1 12-14-6 1-13z"/>
<path fill="#932ad2" d="M920 445l-9 5 11 21 8-4z"/>
<path fill="#6c1f9b" d="M942 298l-13 5 0 13 12-4z"/>
<path fill="#6e1f9d" d="M1060 293l-13 1-11-11 13-1z"/>
<path fill="#9029cf" d="M914 476l-9 5 10 19 8-5z"/>
<path fill="#7521a7" d="M890 426l-8 6 9 1 10-6z"/>
<path fill="#8927c5" d="M1078 376l-11 0 10-8 11 0z"/>
<path fill="#7221a3" d="M727 649l-2 10-6 14 3-11z"/>
<path fill="#7020a0" d="M739 614l-4 10-4 14 3-10z"/>
<path fill="#8326bc" d="M689 544l-6 11 21 7 5-10z"/>
<path fill="#7522a8" d="M698 715l-1 11-10 5 1-11z"/>
<path fill="#6a1e98" d="M925 360l-11 5 7 23 11-5z"/>
<path fill="#8f29cc" d="M619 603l-4 14 1-9 4-13z"/>
<path fill="#8b28c7" d="M880 527l-6 6 12 12 6-5z"/>
<path fill="#8c28c8" d="M887 521l-7 6 12 13 6-6z"/>
<path fill="#8a27c5" d="M874 533l-7 6 13 12 6-6z"/>
<path fill="#8526bf" d="M826 554l-6 7 19 11 5-7z"/>
<path fill="#8c28c9" d="M894 515l-7 6 11 13 6-5z"/>
<path fill="#7120a2" d="M958 285l-13 4-3 9 13-4z"/>
<path fill="#7822ac" d="M1109 347l-12-1-2-13 12 0z"/>
<path fill="#8426bc" d="M766 553l-6 10 23 11 6-9z"/>
<path fill="#9f2de3" d="M949 404l-10 4 14-1 10-4z"/>
<path fill="#7923ad" d="M1106 358l-11 0 2-12 12 1z"/>
<path fill="#8927c4" d="M867 539l-6 7 13 10 6-5z"/>
<path fill="#8426bd" d="M794 557l-5 8 21 12 5-8z"/>
<path fill="#7421a6" d="M779 525l-6 9-1 10 7-9z"/>
<path fill="#8d29cb" d="M901 510l-7 5 10 14 6-5z"/>
<path fill="#912ad0" d="M922 471l-8 5 9 19 7-4z"/>
<path fill="#7e24b5" d="M737 551l-5 10 23 11 5-9z"/>
<path fill="#932ad3" d="M618 627l-4 14-3-11 4-13z"/>
<path fill="#8827c3" d="M666 551l-6 12 18 3 5-11z"/>
<path fill="#a22ee8" d="M993 394l-10 2 15-2 11-3z"/>
<path fill="#6a1e98" d="M931 334l-12 5 6 21 11-4z"/>
<path fill="#8827c3" d="M861 546l-6 6 14 10 5-6z"/>
<path fill="#7622a9" d="M978 277l-13 3-7 5 14-3z"/>
<path fill="#952bd5" d="M930 412l-10 4 9 24 9-4z"/>
<path fill="#942ad3" d="M929 440l-9 5 10 22 8-4z"/>
<path fill="#af32fa" d="M1029 388l-10 1 14-4 11-2z"/>
<path fill="#8e29cc" d="M908 505l-7 5 9 14 7-4z"/>
<path fill="#7522a8" d="M899 421l-9 5 11 1 9-6z"/>
<path fill="#7521a7" d="M1083 305l-13 1-10-13 13 0z"/>
<path fill="#8526be" d="M820 561l-5 8 19 10 5-7z"/>
<path fill="#7822ac" d="M1107 333l-12 0-4-14 12 1z"/>
<path fill="#8727c2" d="M855 552l-6 7 15 9 5-6z"/>
<path fill="#6a1e98" d="M932 383l-11 5 9 24 9-4z"/>
<path fill="#8326bc" d="M709 552l-5 10 22 9 6-10z"/>
<path fill="#992cda" d="M621 653l-3 13-7-12 3-13z"/>
<path fill="#7f24b6" d="M1099 368l-11 0 7-10 11 0z"/>
<path fill="#6a1e98" d="M1001 274l-14 2-9 1 14-3z"/>
<path fill="#7622a8" d="M649 711l-1 13-12-9 1-13z"/>
<path fill="#8f29cd" d="M915 500l-7 5 9 15 6-5z"/>
<path fill="#8d28ca" d="M646 561l-5 13 14 0 5-11z"/>
<path fill="#932ad2" d="M930 467l-8 4 8 20 7-4z"/>
<path fill="#7221a3" d="M750 581l-4 9-3 14 4-10z"/>
<path fill="#6a1e98" d="M941 312l-12 4 2 18 12-4z"/>
<path fill="#8426bd" d="M789 565l-6 9 22 10 5-7z"/>
<path fill="#7421a6" d="M773 534l-5 8-2 11 6-9z"/>
<path fill="#7120a2" d="M716 683l-1 10-8 13 2-11z"/>
<path fill="#8727c1" d="M849 559l-5 6 15 9 5-6z"/>
<path fill="#8326bc" d="M760 563l-5 9 23 10 5-8z"/>
<path fill="#6a1e98" d="M1024 276l-13 2-10-4 13-2z"/>
<path fill="#9029cf" d="M923 495l-8 5 8 15 7-4z"/>
<path fill="#6a1e98" d="M936 356l-11 4 7 23 10-4z"/>
<path fill="#7321a4" d="M707 706l-1 10-9 10 1-11z"/>
<path fill="#8426be" d="M815 569l-5 8 19 9 5-7z"/>
<path fill="#952bd5" d="M938 436l-9 4 9 23 8-4z"/>
<path fill="#7722aa" d="M908 417l-9 4 11 0 10-5z"/>
<path fill="#8827c3" d="M683 555l-5 11 21 7 5-11z"/>
<path fill="#912ad0" d="M631 576l-5 13 10-3 5-12z"/>
<path fill="#a02ee5" d="M958 401l-9 3 14-1 10-4z"/>
<path fill="#922ad1" d="M627 678l-2 13-9-12 2-13z"/>
<path fill="#6f209f" d="M735 624l-3 9-5 16 4-11z"/>
<path fill="#962bd6" d="M939 408l-9 4 8 24 9-4z"/>
<path fill="#8325bb" d="M732 561l-6 10 24 10 5-9z"/>
<path fill="#8626c0" d="M844 565l-5 7 15 8 5-6z"/>
<path fill="#6c1f9b" d="M955 294l-13 4-1 14 13-3z"/>
<path fill="#942ad3" d="M938 463l-8 4 7 20 8-4z"/>
<path fill="#912ad0" d="M930 491l-7 4 7 16 6-4z"/>
<path fill="#6a1e98" d="M1049 282l-13 1-12-7 14-1z"/>
<path fill="#7120a2" d="M725 659l-3 9-6 15 3-10z"/>
<path fill="#7722ab" d="M687 731l-1 11-12 2 1-11z"/>
<path fill="#8d28ca" d="M892 540l-6 5 8 8 5-4z"/>
<path fill="#7822ac" d="M1103 320l-12-1-8-14 12 1z"/>
<path fill="#8e29cb" d="M898 534l-6 6 7 9 6-5z"/>
<path fill="#932ad3" d="M620 595l-4 13 6-6 4-13z"/>
<path fill="#7822ab" d="M675 733l-1 11-13-2 1-12z"/>
<path fill="#9e2de2" d="M1065 382l-11 0 13-6 11 0z"/>
<path fill="#8c28c8" d="M886 545l-6 6 9 8 5-6z"/>
<path fill="#6a1e98" d="M943 330l-12 4 5 22 11-4z"/>
<path fill="#8426bd" d="M783 574l-5 8 23 10 4-8z"/>
<path fill="#8f29cd" d="M904 529l-6 5 7 10 6-5z"/>
<path fill="#7421a6" d="M768 542l-6 9-2 12 6-10z"/>
<path fill="#6a1e98" d="M942 379l-10 4 7 25 10-4z"/>
<path fill="#8b28c7" d="M880 551l-6 5 10 8 5-5z"/>
<path fill="#8d28ca" d="M660 563l-5 11 18 4 5-12z"/>
<path fill="#8626bf" d="M839 572l-5 7 16 7 4-6z"/>
<path fill="#8426bd" d="M810 577l-5 7 20 9 4-7z"/>
<path fill="#9029ce" d="M910 524l-6 5 7 10 5-4z"/>
<path fill="#a22fe9" d="M1003 392l-10 2 16-3 10-2z"/>
<path fill="#7120a2" d="M972 282l-14 3-3 9 12-3z"/>
<path fill="#8827c2" d="M704 562l-5 11 23 8 4-10z"/>
<path fill="#8927c4" d="M1088 376l-10 0 10-8 11 0z"/>
<path fill="#8426bc" d="M755 572l-5 9 24 10 4-9z"/>
<path fill="#8a27c5" d="M874 556l-5 6 10 7 5-5z"/>
<path fill="#7421a6" d="M826 466l-7 7 3 5 8-8z"/>
<path fill="#932ad2" d="M937 487l-7 4 6 16 7-4z"/>
<path fill="#962bd6" d="M947 432l-9 4 8 23 8-3z"/>
<path fill="#7923ad" d="M917 413l-9 4 12-1 10-4z"/>
<path fill="#7421a6" d="M834 460l-8 6 4 4 8-7z"/>
<path fill="#7120a2" d="M746 590l-4 9-3 15 4-10z"/>
<path fill="#912ad0" d="M917 520l-7 4 6 11 6-4z"/>
<path fill="#922ad2" d="M615 617l-4 13 2-9 3-13z"/>
<path fill="#7421a6" d="M819 473l-7 7 2 5 8-7z"/>
<path fill="#952bd5" d="M946 459l-8 4 7 20 7-3z"/>
<path fill="#8025b8" d="M637 702l-1 13-12-11 1-13z"/>
<path fill="#7421a6" d="M841 454l-7 6 4 3 9-7z"/>
<path fill="#6e1f9d" d="M1073 293l-13 0-11-11 13 0z"/>
<path fill="#7522a8" d="M697 726l0 10-11 6 1-11z"/>
<path fill="#af32fa" d="M1039 387l-10 1 15-5 10-1z"/>
<path fill="#8927c4" d="M869 562l-5 6 10 6 5-5z"/>
<path fill="#7722aa" d="M662 730l-1 12-13-6 0-12z"/>
<path fill="#7421a6" d="M812 480l-7 7 2 6 7-8z"/>
<path fill="#962bd7" d="M949 404l-10 4 8 24 9-3z"/>
<path fill="#922ad1" d="M923 515l-6 5 5 11 6-4z"/>
<path fill="#7421a6" d="M849 448l-8 6 6 2 8-6z"/>
<path fill="#6a1e98" d="M947 352l-11 4 6 23 10-3z"/>
<path fill="#7622a9" d="M992 274l-14 3-6 5 12-3z"/>
<path fill="#8526bf" d="M834 579l-5 7 16 7 5-7z"/>
<path fill="#6a1e98" d="M954 309l-13 3 2 18 12-3z"/>
<path fill="#922ad1" d="M641 574l-5 12 14 0 5-12z"/>
<path fill="#8827c2" d="M726 571l-4 10 24 9 4-9z"/>
<path fill="#7923ad" d="M1116 360l-10-2 3-11 11 1z"/>
<path fill="#7421a6" d="M805 487l-7 7 1 7 8-8z"/>
<path fill="#a12ee6" d="M968 398l-10 3 15-2 10-3z"/>
<path fill="#8827c3" d="M864 568l-5 6 11 6 4-6z"/>
<path fill="#972bd8" d="M614 641l-3 13-3-11 3-13z"/>
<path fill="#7822ac" d="M1120 348l-11-1-2-14 12 2z"/>
<path fill="#8426bd" d="M805 584l-4 8 20 8 4-7z"/>
<path fill="#942ad3" d="M945 483l-8 4 6 16 6-3z"/>
<path fill="#8426bd" d="M778 582l-4 9 23 8 4-7z"/>
<path fill="#7421a6" d="M857 442l-8 6 6 2 9-7zM762 551l-5 8-2 13 5-9z"/>
<path fill="#8d28c9" d="M678 566l-5 12 21 5 5-10z"/>
<path fill="#932ad3" d="M930 511l-7 4 5 12 6-4z"/>
<path fill="#7421a6" d="M798 494l-6 8 0 7 7-8z"/>
<path fill="#6a1e98" d="M1014 272l-13 2-9 0 12-2z"/>
<path fill="#962bd6" d="M954 456l-8 3 6 21 7-3z"/>
<path fill="#7120a2" d="M732 633l-3 9-4 17 2-10z"/>
<path fill="#8727c2" d="M859 574l-5 6 12 5 4-5z"/>
<path fill="#6a1e98" d="M952 376l-10 3 7 25 9-3z"/>
<path fill="#962bd7" d="M956 429l-9 3 7 24 8-3z"/>
<path fill="#7b23b0" d="M926 409l-9 4 13-1 9-4z"/>
<path fill="#7120a2" d="M715 693l-1 10-8 13 1-10z"/>
<path fill="#7421a6" d="M865 437l-8 5 7 1 9-6z"/>
<path fill="#8526be" d="M829 586l-4 7 17 6 3-6z"/>
<path fill="#8426bd" d="M750 581l-4 9 24 9 4-8z"/>
<path fill="#7f24b6" d="M1109 370l-10-2 7-10 10 2z"/>
<path fill="#942ad4" d="M936 507l-6 4 4 12 6-4z"/>
<path fill="#7521a7" d="M1095 306l-12-1-10-12 12 0z"/>
<path fill="#9c2de0" d="M618 666l-2 13-7-12 2-13z"/>
<path fill="#952bd6" d="M626 589l-4 13 10-4 4-12z"/>
<path fill="#6c1f9b" d="M967 291l-12 3-1 15 12-3z"/>
<path fill="#7822ac" d="M1119 335l-12-2-4-13 11 1z"/>
<path fill="#6a1e98" d="M955 327l-12 3 4 22 11-3z"/>
<path fill="#952bd5" d="M952 480l-7 3 4 17 7-3z"/>
<path fill="#8c28c9" d="M699 573l-5 10 24 8 4-10z"/>
<path fill="#7421a6" d="M792 502l-6 7-1 8 7-8z"/>
<path fill="#7622a9" d="M648 724l0 12-13-9 1-12z"/>
<path fill="#8727c1" d="M854 580l-4 6 12 5 4-6z"/>
<path fill="#7321a4" d="M706 716l0 10-9 10 0-10z"/>
<path fill="#7020a0" d="M742 599l-3 9-4 16 4-10z"/>
<path fill="#6a1e98" d="M1038 275l-14 1-10-4 13-1z"/>
<path fill="#7020a1" d="M722 668l-1 10-6 15 1-10z"/>
<path fill="#8426bd" d="M801 592l-4 7 20 8 4-7z"/>
<path fill="#972bd8" d="M958 401l-9 3 7 25 8-3z"/>
<path fill="#7421a6" d="M873 431l-8 6 8 0 9-5z"/>
<path fill="#922ad0" d="M655 574l-5 12 19 3 4-11z"/>
<path fill="#b133fd" d="M1012 391l-9 1 16-3 10-1z"/>
<path fill="#952bd5" d="M943 503l-7 4 4 12 6-3z"/>
<path fill="#9029ce" d="M899 549l-5 4 5 5 5-4z"/>
<path fill="#9129cf" d="M905 544l-6 5 5 5 5-5z"/>
<path fill="#8e29cc" d="M894 553l-5 6 5 4 5-5z"/>
<path fill="#8426bd" d="M774 591l-4 8 23 8 4-8z"/>
<path fill="#922ad1" d="M911 539l-6 5 4 5 5-4z"/>
<path fill="#7421a6" d="M757 559l-4 8-3 14 5-9z"/>
<path fill="#8526be" d="M825 593l-4 7 17 5 4-6z"/>
<path fill="#8d28ca" d="M889 559l-5 5 6 3 4-4z"/>
<path fill="#962bd7" d="M962 453l-8 3 5 21 7-3z"/>
<path fill="#8c28c9" d="M722 581l-4 10 24 8 4-9z"/>
<path fill="#972bd8" d="M616 608l-3 13 5-7 4-12z"/>
<path fill="#9e2de2" d="M1074 383l-9-1 13-6 10 0z"/>
<path fill="#932ad3" d="M916 535l-5 4 3 6 5-4z"/>
<path fill="#6a1e98" d="M958 349l-11 3 5 24 10-3z"/>
<path fill="#7421a6" d="M786 509l-6 8-1 8 6-8z"/>
<path fill="#942bd5" d="M625 691l-1 13-9-13 1-12z"/>
<path fill="#7120a2" d="M984 279l-12 3-5 9 13-2z"/>
<path fill="#8626c0" d="M850 586l-5 7 13 3 4-5z"/>
<path fill="#8c28c9" d="M884 564l-5 5 6 3 5-5z"/>
<path fill="#a22ee8" d="M977 396l-9 2 15-2 10-2z"/>
<path fill="#952bd5" d="M922 531l-6 4 3 6 5-3z"/>
<path fill="#962bd6" d="M959 477l-7 3 4 17 6-3z"/>
<path fill="#972bd8" d="M964 426l-8 3 6 24 8-3z"/>
<path fill="#7521a7" d="M881 427l-8 4 9 1 8-6z"/>
<path fill="#6a1e98" d="M1062 282l-13 0-11-7 12-1z"/>
<path fill="#7e24b4" d="M935 406l-9 3 13-1 10-4z"/>
<path fill="#962bd7" d="M949 500l-6 3 3 13 5-3z"/>
<path fill="#6a1e98" d="M966 306l-12 3 1 18 11-3z"/>
<path fill="#8b28c7" d="M879 569l-5 5 7 3 4-5z"/>
<path fill="#af32fa" d="M1048 387l-9 0 15-5 11 0z"/>
<path fill="#7722ab" d="M686 742l1 11-12 2-1-11z"/>
<path fill="#8426bd" d="M746 590l-4 9 25 8 3-8z"/>
<path fill="#8927c4" d="M1098 378l-10-2 11-8 10 2z"/>
<path fill="#962bd7" d="M928 527l-6 4 2 7 5-4z"/>
<path fill="#912ad0" d="M673 578l-4 11 21 5 4-11z"/>
<path fill="#6a1e98" d="M962 373l-10 3 6 25 10-3z"/>
<path fill="#7822ac" d="M674 744l1 11-13-2-1-11zM1114 321l-11-1-8-14 12 1z"/>
<path fill="#8426bd" d="M797 599l-4 8 21 6 3-6z"/>
<path fill="#962bd7" d="M636 586l-4 12 15 0 3-12zM611 630l-3 13 2-10 3-12z"/>
<path fill="#8a28c6" d="M874 574l-4 6 7 2 4-5z"/>
<path fill="#7421a6" d="M780 517l-5 7-2 10 6-9z"/>
<path fill="#8626bf" d="M845 593l-3 6 13 3 3-6z"/>
<path fill="#8426be" d="M821 600l-4 7 18 4 3-6z"/>
<path fill="#972bd8" d="M934 523l-6 4 1 7 6-3z"/>
<path fill="#7622a9" d="M1004 272l-12 2-8 5 13-2z"/>
<path fill="#7020a1" d="M729 642l-2 9-5 17 3-9z"/>
<path fill="#7522a8" d="M697 736l1 10-11 7-1-11z"/>
<path fill="#982bd9" d="M968 398l-10 3 6 25 9-2z"/>
<path fill="#7522a8" d="M889 422l-8 5 9-1 9-5z"/>
<path fill="#972bd8" d="M956 497l-7 3 2 13 6-3zM970 450l-8 3 4 21 7-3z"/>
<path fill="#8426bd" d="M770 599l-3 8 23 7 3-7z"/>
<path fill="#912ad0" d="M694 583l-4 11 24 6 4-9z"/>
<path fill="#8927c4" d="M870 580l-4 5 7 2 4-5z"/>
<path fill="#7421a6" d="M753 567l-4 8-3 15 4-9z"/>
<path fill="#962bd7" d="M966 474l-7 3 3 17 7-2z"/>
<path fill="#8125b9" d="M636 715l-1 12-11-11 0-12z"/>
<path fill="#6e1f9d" d="M1085 293l-12 0-11-11 12 0z"/>
<path fill="#6a1e98" d="M966 324l-11 3 3 22 10-3z"/>
<path fill="#6f209f" d="M739 608l-3 8-4 17 3-9z"/>
<path fill="#982cda" d="M940 519l-6 4 1 8 5-4z"/>
<path fill="#7822ab" d="M661 742l1 11-13-6-1-11z"/>
<path fill="#9a2cdd" d="M611 654l-2 13-3-12 2-12z"/>
<path fill="#6c1f9b" d="M980 289l-13 2-1 15 11-3z"/>
<path fill="#8526bf" d="M842 599l-4 6 13 2 4-5z"/>
<path fill="#7923ad" d="M1127 362l-11-2 4-12 10 2z"/>
<path fill="#982bd9" d="M973 424l-9 2 6 24 7-2z"/>
<path fill="#7421a6" d="M775 524l-5 8-2 10 5-8z"/>
<path fill="#912ad0" d="M718 591l-4 9 25 8 3-9z"/>
<path fill="#8827c3" d="M866 585l-4 6 8 1 3-5z"/>
<path fill="#7120a1" d="M714 703l0 9-8 14 0-10z"/>
<path fill="#8025b8" d="M943 403l-8 3 14-2 9-3z"/>
<path fill="#992cdb" d="M622 602l-4 12 11-4 3-12z"/>
<path fill="#7822ac" d="M1130 350l-10-2-1-13 11 2z"/>
<path fill="#6a1e98" d="M1027 271l-13 1-10 0 13-1z"/>
<path fill="#b133fe" d="M1021 390l-9 1 17-3 10-1z"/>
<path fill="#962bd7" d="M650 586l-3 12 18 2 4-11z"/>
<path fill="#8426be" d="M817 607l-3 6 18 4 3-6z"/>
<path fill="#6a1e98" d="M968 346l-10 3 4 24 10-2z"/>
<path fill="#982bd9" d="M962 494l-6 3 1 13 6-2z"/>
<path fill="#992cdb" d="M946 516l-6 3 0 8 5-3z"/>
<path fill="#8426bd" d="M793 607l-3 7 21 6 3-7z"/>
<path fill="#a22fe9" d="M985 394l-8 2 16-2 10-2z"/>
<path fill="#7722aa" d="M898 418l-9 4 10-1 9-4z"/>
<path fill="#7020a0" d="M721 678l-1 9-6 16 1-10z"/>
<path fill="#8426be" d="M742 599l-3 9 24 7 4-8z"/>
<path fill="#7f24b6" d="M1119 371l-10-1 7-10 11 2z"/>
<path fill="#972bd8" d="M973 471l-7 3 3 18 6-2z"/>
<path fill="#8727c2" d="M862 591l-4 5 8 1 4-5z"/>
<path fill="#6a1e98" d="M972 371l-10 2 6 25 9-2z"/>
<path fill="#982bd9" d="M977 448l-7 2 3 21 7-2z"/>
<path fill="#9f2ee4" d="M616 679l-1 12-7-12 1-12z"/>
<path fill="#7221a4" d="M706 726l1 10-9 10-1-10z"/>
<path fill="#922ad1" d="M904 554l-5 4 1 1 4-4z"/>
<path fill="#942ad4" d="M909 549l-5 5 0 1 5-4z"/>
<path fill="#8526bf" d="M838 605l-3 6 13 2 3-6z"/>
<path fill="#9129cf" d="M899 558l-5 5 2 0 4-4z"/>
<path fill="#9a2cdd" d="M951 513l-5 3-1 8 6-2z"/>
<path fill="#7521a7" d="M1107 307l-12-1-10-13 12 1z"/>
<path fill="#952bd6" d="M914 545l-5 4 0 2 5-4z"/>
<path fill="#8426be" d="M767 607l-4 8 24 7 3-8z"/>
<path fill="#8f29cd" d="M894 563l-4 4 2 0 4-4z"/>
<path fill="#7421a6" d="M770 532l-5 7-3 12 6-9z"/>
<path fill="#962bd7" d="M669 589l-4 11 22 4 3-10z"/>
<path fill="#7822ac" d="M1130 337l-11-2-5-14 11 2z"/>
<path fill="#6a1e98" d="M1050 274l-12 1-11-4 12-1z"/>
<path fill="#972bd8" d="M919 541l-5 4 0 2 4-4z"/>
<path fill="#982cda" d="M977 396l-9 2 5 26 8-2z"/>
<path fill="#6a1e98" d="M977 303l-11 3 0 18 11-2z"/>
<path fill="#7421a6" d="M749 575l-3 9-4 15 4-9z"/>
<path fill="#9e2de2" d="M1083 384l-9-1 14-7 10 2z"/>
<path fill="#7120a2" d="M997 277l-13 2-4 10 12-2z"/>
<path fill="#9a2cdd" d="M613 621l-3 12 6-7 2-12z"/>
<path fill="#982cda" d="M969 492l-7 2 1 14 6-2z"/>
<path fill="#8e29cb" d="M890 567l-5 5 3-1 4-4z"/>
<path fill="#7722aa" d="M648 736l1 11-13-9-1-11z"/>
<path fill="#982cda" d="M924 538l-5 3-1 2 5-3z"/>
<path fill="#8727c1" d="M858 596l-3 6 8 0 3-5z"/>
<path fill="#af32fa" d="M1057 387l-9 0 17-5 9 1z"/>
<path fill="#8526be" d="M814 613l-3 7 18 3 3-6z"/>
<path fill="#7923ad" d="M906 414l-8 4 10-1 9-4z"/>
<path fill="#8c28c9" d="M885 572l-4 5 3-1 4-5z"/>
<path fill="#982cda" d="M981 422l-8 2 4 24 8-2z"/>
<path fill="#7421a6" d="M824 464l-7 6 2 3 7-7zM831 458l-7 6 2 2 8-6z"/>
<path fill="#962bd6" d="M690 594l-3 10 24 6 3-10z"/>
<path fill="#9b2cde" d="M957 510l-6 3 0 9 5-3z"/>
<path fill="#9a2cdc" d="M929 534l-5 4-1 2 5-3z"/>
<path fill="#9a2cdd" d="M632 598l-3 12 15-1 3-11z"/>
<path fill="#7421a6" d="M817 470l-6 7 1 3 7-7z"/>
<path fill="#6f209f" d="M736 616l-2 9-5 17 3-9z"/>
<path fill="#8526be" d="M790 614l-3 8 22 5 2-7z"/>
<path fill="#8326bc" d="M952 400l-9 3 15-2 10-3z"/>
<path fill="#7020a0" d="M727 651l-1 9-5 18 1-10z"/>
<path fill="#7421a6" d="M838 453l-7 5 3 2 7-6z"/>
<path fill="#8526be" d="M835 611l-3 6 14 1 2-5z"/>
<path fill="#8b28c7" d="M881 577l-4 5 3-2 4-4z"/>
<path fill="#7421a6" d="M811 477l-6 6 0 4 7-7z"/>
<path fill="#982bd9" d="M980 469l-7 2 2 19 7-2z"/>
<path fill="#6a1e98" d="M977 322l-11 2 2 22 11-2z"/>
<path fill="#962bd7" d="M624 704l0 12-10-13 1-12z"/>
<path fill="#962bd6" d="M714 600l-3 10 25 6 3-8z"/>
<path fill="#7421a6" d="M845 447l-7 6 3 1 8-6z"/>
<path fill="#8927c4" d="M1107 379l-9-1 11-8 10 1z"/>
<path fill="#9b2cde" d="M935 531l-6 3-1 3 4-3z"/>
<path fill="#6a1e98" d="M1074 282l-12 0-12-8 12 1z"/>
<path fill="#8626c0" d="M855 602l-4 5 9 0 3-5z"/>
<path fill="#7421a6" d="M805 483l-6 6-1 5 7-7zM765 539l-5 8-3 12 5-8z"/>
<path fill="#982cda" d="M985 446l-8 2 3 21 7-1z"/>
<path fill="#7822ab" d="M687 753l1 10-12 2-1-10z"/>
<path fill="#992cdb" d="M975 490l-6 2 0 14 6-2z"/>
<path fill="#8526be" d="M739 608l-3 8 25 7 2-8z"/>
<path fill="#992cdb" d="M608 643l-2 12 2-10 2-12z"/>
<path fill="#8a27c5" d="M877 582l-4 5 4-3 3-4z"/>
<path fill="#7421a6" d="M852 442l-7 5 4 1 8-6z"/>
<path fill="#7622a9" d="M1017 271l-13 1-7 5 12-1z"/>
<path fill="#6a1e98" d="M979 344l-11 2 4 25 10-2z"/>
<path fill="#9c2de0" d="M963 508l-6 2-1 9 5-2z"/>
<path fill="#a32fe9" d="M994 393l-9 1 18-2 9-1z"/>
<path fill="#9c2de0" d="M940 527l-5 4-3 3 5-3z"/>
<path fill="#7923ad" d="M675 755l1 10-13-2-1-10z"/>
<path fill="#b133fe" d="M1030 390l-9 0 18-3 9 0z"/>
<path fill="#7421a6" d="M799 489l-6 7-1 6 6-8z"/>
<path fill="#8526be" d="M763 615l-2 8 24 6 2-7z"/>
<path fill="#6c1f9b" d="M992 287l-12 2-3 14 12-1z"/>
<path fill="#7b23b0" d="M914 411l-8 3 11-1 9-4z"/>
<path fill="#7822ac" d="M1125 323l-11-2-7-14 11 2z"/>
<path fill="#8526be" d="M811 620l-2 7 18 2 2-6z"/>
<path fill="#6a1e98" d="M982 369l-10 2 5 25 8-2z"/>
<path fill="#9a2cdd" d="M647 598l-3 11 18 1 3-10z"/>
<path fill="#7522a8" d="M698 746l1 10-11 7-1-10z"/>
<path fill="#8927c4" d="M873 587l-3 5 4-3 3-5z"/>
<path fill="#7421a6" d="M859 437l-7 5 5 0 8-5zM746 584l-3 8-4 16 3-9z"/>
<path fill="#992cdb" d="M985 394l-8 2 4 26 8-2z"/>
<path fill="#8526be" d="M832 617l-3 6 14 1 3-6z"/>
<path fill="#8526bf" d="M851 607l-3 6 10-1 2-5z"/>
<path fill="#9e2de2" d="M945 524l-5 3-3 4 5-3z"/>
<path fill="#9c2de0" d="M618 614l-2 12 10-4 3-12z"/>
<path fill="#7020a1" d="M714 712l0 9-7 15-1-10z"/>
<path fill="#7421a6" d="M793 496l-5 7-2 6 6-7z"/>
<path fill="#982cda" d="M987 468l-7 1 2 19 6-2z"/>
<path fill="#7020a0" d="M720 687l0 9-6 16 0-9z"/>
<path fill="#8526bf" d="M787 622l-2 7 21 4 3-6z"/>
<path fill="#992cdb" d="M989 420l-8 2 4 24 7-2z"/>
<path fill="#6e1f9d" d="M1097 294l-12-1-11-11 12 2z"/>
<path fill="#9d2de1" d="M969 506l-6 2-2 9 5-2zM609 667l-1 12-3-12 1-12z"/>
<path fill="#8225bb" d="M635 727l1 11-12-11 0-11z"/>
<path fill="#9a2cdc" d="M982 488l-7 2 0 14 5-2z"/>
<path fill="#8827c2" d="M870 592l-4 5 5-4 3-4z"/>
<path fill="#7421a6" d="M866 433l-7 4 6 0 8-6z"/>
<path fill="#9a2cdd" d="M665 600l-3 10 22 4 3-10z"/>
<path fill="#8627c1" d="M960 398l-8 2 16-2 9-2z"/>
<path fill="#7421a6" d="M760 547l-4 8-3 12 4-8z"/>
<path fill="#7823ad" d="M1039 270l-12 1-10 0 12 0z"/>
<path fill="#7822ac" d="M662 753l1 10-13-5-1-11z"/>
<path fill="#7923ad" d="M1136 364l-9-2 3-12 10 3z"/>
<path fill="#9f2de3" d="M951 522l-6 2-3 4 5-2z"/>
<path fill="#6a1e98" d="M989 302l-12 1 0 19 11-1z"/>
<path fill="#992cdb" d="M992 444l-7 2 2 22 7-2z"/>
<path fill="#7421a6" d="M788 503l-6 7-2 7 6-8z"/>
<path fill="#7020a1" d="M734 625l-2 8-5 18 2-9z"/>
<path fill="#7822ac" d="M1140 353l-10-3 0-13 10 3z"/>
<path fill="#9a2cdc" d="M687 604l-3 10 24 5 3-9z"/>
<path fill="#8526bf" d="M848 613l-2 5 9-2 3-4z"/>
<path fill="#7e24b4" d="M922 408l-8 3 12-2 9-3z"/>
<path fill="#8927c4" d="M904 555l-4 4-2-4 4-3z"/>
<path fill="#8627c1" d="M866 597l-3 5 5-4 3-5z"/>
<path fill="#8a28c6" d="M909 551l-5 4-2-3 4-4z"/>
<path fill="#7f24b6" d="M1128 374l-9-3 8-9 9 2z"/>
<path fill="#8827c2" d="M900 559l-4 4-2-4 4-4z"/>
<path fill="#9a2cdc" d="M711 610l-3 9 26 6 2-9z"/>
<path fill="#8526bf" d="M809 627l-3 6 19 2 2-6z"/>
<path fill="#7521a7" d="M874 428l-8 5 7-2 8-4z"/>
<path fill="#8b28c8" d="M914 547l-5 4-3-3 4-3z"/>
<path fill="#8526bf" d="M829 623l-2 6 14 0 2-5z"/>
<path fill="#7221a3" d="M707 736l1 9-9 11-1-10z"/>
<path fill="#7120a2" d="M1009 276l-12 1-5 10 11-1z"/>
<path fill="#8727c1" d="M896 563l-4 4-2-4 4-4z"/>
<path fill="#8526bf" d="M736 616l-2 9 25 6 2-8z"/>
<path fill="#af32fa" d="M1066 388l-9-1 17-4 9 1z"/>
<path fill="#9e2de2" d="M1092 385l-9-1 15-6 9 1z"/>
<path fill="#8d28c9" d="M918 543l-4 4-4-2 4-4z"/>
<path fill="#9e2de2" d="M975 504l-6 2-3 9 6-2z"/>
<path fill="#a02ee5" d="M956 519l-5 3-4 4 5-3z"/>
<path fill="#6f209f" d="M726 660l-1 8-5 19 1-9z"/>
<path fill="#8526bf" d="M892 567l-4 4-2-4 4-4z"/>
<path fill="#6a1e98" d="M988 321l-11 1 2 22 10-1z"/>
<path fill="#8526bf" d="M761 623l-2 8 24 5 2-7z"/>
<path fill="#9c2de0" d="M610 633l-2 12 6-7 2-12z"/>
<path fill="#8e29cb" d="M923 540l-5 3-4-2 5-3z"/>
<path fill="#a12ee7" d="M615 691l-1 12-6-12 0-12z"/>
<path fill="#9e2de2" d="M629 610l-3 12 15-2 3-11z"/>
<path fill="#9a2cdd" d="M988 486l-6 2-2 14 6-1z"/>
<path fill="#992cdb" d="M994 466l-7 2 1 18 6-1z"/>
<path fill="#7421a6" d="M782 510l-5 6-2 8 5-7z"/>
<path fill="#8426bd" d="M888 571l-4 5-1-5 3-4z"/>
<path fill="#6a1e98" d="M1062 275l-12-1-11-4 12 1z"/>
<path fill="#7421a6" d="M743 592l-3 8-4 16 3-8z"/>
<path fill="#b133fe" d="M1002 392l-8 1 18-2 9-1z"/>
<path fill="#8626bf" d="M863 602l-3 5 5-4 3-5z"/>
<path fill="#6a1e98" d="M989 343l-10 1 3 25 9-2z"/>
<path fill="#8f29cd" d="M928 537l-5 3-4-2 4-3z"/>
<path fill="#7521a7" d="M1118 309l-11-2-10-13 11 3z"/>
<path fill="#8626bf" d="M785 629l-2 7 22 4 1-7z"/>
<path fill="#6a1e98" d="M991 367l-9 2 3 25 9-1z"/>
<path fill="#7421a6" d="M756 555l-3 7-4 13 4-8z"/>
<path fill="#8526be" d="M846 618l-3 6 10-3 2-5z"/>
<path fill="#7522a8" d="M881 424l-7 4 7-1 8-5z"/>
<path fill="#992cdb" d="M994 393l-9 1 4 26 8-1z"/>
<path fill="#7822ac" d="M1140 340l-10-3-5-14 11 3z"/>
<path fill="#8326bc" d="M884 576l-4 4 0-5 3-4z"/>
<path fill="#a12ee6" d="M961 517l-5 2-4 4 5-2z"/>
<path fill="#992cdb" d="M997 419l-8 1 3 24 7-1z"/>
<path fill="#9029cf" d="M932 534l-4 3-5-2 4-3z"/>
<path fill="#7722ab" d="M649 747l1 11-13-9-1-11z"/>
<path fill="#b133fe" d="M1038 390l-8 0 18-3 9 0z"/>
<path fill="#9e2de3" d="M980 502l-5 2-3 9 5-1z"/>
<path fill="#8526bf" d="M827 629l-2 6 15-1 1-5z"/>
<path fill="#8a27c5" d="M968 397l-8 1 17-2 8-2z"/>
<path fill="#8927c4" d="M1116 382l-9-3 12-8 9 3z"/>
<path fill="#8225bb" d="M880 580l-3 4-1-5 4-4z"/>
<path fill="#992cdb" d="M999 443l-7 1 2 22 6 0z"/>
<path fill="#8025b8" d="M929 405l-7 3 13-2 8-3z"/>
<path fill="#7421a6" d="M777 516l-4 7-3 9 5-8z"/>
<path fill="#9e2de2" d="M644 609l-3 11 19 0 2-10z"/>
<path fill="#8526be" d="M860 607l-2 5 5-5 2-4z"/>
<path fill="#8626bf" d="M806 633l-1 7 18 1 2-6z"/>
<path fill="#912ad0" d="M937 531l-5 3-5-2 5-2z"/>
<path fill="#6c1f9b" d="M1003 286l-11 1-3 15 11-1z"/>
<path fill="#7622a9" d="M1029 271l-12 0-8 5 12 0z"/>
<path fill="#9b2cde" d="M606 655l-1 12 2-10 1-12z"/>
<path fill="#972bd9" d="M624 716l0 11-9-12-1-12z"/>
<path fill="#a22ee8" d="M966 515l-5 2-4 4 4-1z"/>
<path fill="#9b2cdd" d="M994 485l-6 1-2 15 5-1z"/>
<path fill="#7722aa" d="M888 420l-7 4 8-2 9-4z"/>
<path fill="#8125b9" d="M877 584l-3 5-1-6 3-4z"/>
<path fill="#6a1e98" d="M1086 284l-12-2-12-7 12 1z"/>
<path fill="#8526be" d="M843 624l-2 5 11-3 1-5z"/>
<path fill="#7822ac" d="M688 763l2 9-12 3-2-10z"/>
<path fill="#932ad2" d="M942 528l-5 3-5-1 4-3z"/>
<path fill="#9e2de2" d="M662 610l-2 10 22 3 2-9z"/>
<path fill="#992cdb" d="M1000 466l-6 0 0 19 5-1z"/>
<path fill="#6f209f" d="M720 696l0 8-6 17 0-9z"/>
<path fill="#7020a0" d="M732 633l-1 8-5 19 1-9z"/>
<path fill="#9f2ee4" d="M616 626l-2 12 11-5 1-11z"/>
<path fill="#8626c0" d="M734 625l-2 8 25 5 2-7zM759 631l-2 7 24 5 2-7z"/>
<path fill="#9e2de2" d="M684 614l-2 9 24 5 2-9z"/>
<path fill="#7020a0" d="M714 721l1 9-7 15-1-9z"/>
<path fill="#9e2de2" d="M708 619l-2 9 26 5 2-8z"/>
<path fill="#8426bd" d="M858 612l-3 4 6-4 2-5z"/>
<path fill="#9f2ee4" d="M986 501l-6 1-3 10 5-1z"/>
<path fill="#7923ad" d="M676 765l2 10-12-1-3-11z"/>
<path fill="#8125b8" d="M874 589l-3 4 0-6 2-4z"/>
<path fill="#7522a8" d="M699 756l2 9-11 7-2-9z"/>
<path fill="#7421a6" d="M753 562l-3 8-4 14 3-9zM773 523l-4 7-4 9 5-7z"/>
<path fill="#8626c0" d="M783 636l-2 7 22 3 2-6z"/>
<path fill="#6a1e98" d="M1000 301l-11 1-1 19 10-1z"/>
<path fill="#942ad3" d="M947 526l-5 2-6-1 5-2z"/>
<path fill="#7822ac" d="M1136 326l-11-3-7-14 11 3z"/>
<path fill="#7421a6" d="M740 600l-2 7-4 18 2-9z"/>
<path fill="#a32fe9" d="M972 513l-6 2-5 5 5-2z"/>
<path fill="#8626bf" d="M825 635l-2 6 15-1 2-6z"/>
<path fill="#7923ad" d="M896 417l-8 3 10-2 8-4z"/>
<path fill="#7421a6" d="M824 464l-6 6-1 0 7-6zM830 459l-6 5 0 0 7-6z"/>
<path fill="#6f209f" d="M725 668l0 9-5 19 0-9z"/>
<path fill="#992cdb" d="M1005 418l-8 1 2 24 7 0z"/>
<path fill="#8025b7" d="M871 593l-3 5 0-7 3-4z"/>
<path fill="#7421a6" d="M818 470l-6 5-1 2 6-7z"/>
<path fill="#8326bc" d="M937 403l-8 2 14-2 9-3z"/>
<path fill="#992cdb" d="M1002 392l-8 1 3 26 8-1z"/>
<path fill="#6a1e98" d="M998 320l-10 1 1 22 9-1z"/>
<path fill="#7421a6" d="M836 454l-6 5 1-1 7-5z"/>
<path fill="#a02ee5" d="M608 679l0 12-3-12 0-12z"/>
<path fill="#b133fe" d="M1010 392l-8 0 19-2 9 0z"/>
<path fill="#7823ad" d="M1051 271l-12-1-10 1 12 0z"/>
<path fill="#8626c0" d="M805 640l-2 6 19 0 1-5z"/>
<path fill="#8526be" d="M841 629l-1 5 10-3 2-5z"/>
<path fill="#992cdb" d="M1006 443l-7 0 1 23 7-1z"/>
<path fill="#6a1e98" d="M1000 367l-9 0 3 26 8-1z"/>
<path fill="#7421a6" d="M812 475l-6 6-1 2 6-6z"/>
<path fill="#9b2cde" d="M999 484l-5 1-3 15 5-1z"/>
<path fill="#6a1e98" d="M998 342l-9 1 2 24 9 0z"/>
<path fill="#952bd5" d="M952 523l-5 3-6-1 4-2z"/>
<path fill="#ae32fa" d="M1074 389l-8-1 17-4 9 1z"/>
<path fill="#6e1f9d" d="M1108 297l-11-3-11-10 11 2z"/>
<path fill="#8426bc" d="M855 616l-2 5 6-5 2-4z"/>
<path fill="#7421a6" d="M842 449l-6 5 2-1 7-6z"/>
<path fill="#8927c4" d="M902 552l-4 3-6-6 4-4z"/>
<path fill="#8326bc" d="M636 738l1 11-11-11-2-11z"/>
<path fill="#8a28c6" d="M906 548l-4 4-6-7 4-3z"/>
<path fill="#7923ad" d="M1145 367l-9-3 4-11 9 3z"/>
<path fill="#8d28ca" d="M976 396l-8 1 17-3 9-1z"/>
<path fill="#8827c2" d="M898 555l-4 4-6-7 4-3z"/>
<path fill="#7120a2" d="M1021 276l-12 0-6 10 11 0z"/>
<path fill="#8b28c8" d="M910 545l-4 3-6-6 4-3z"/>
<path fill="#7421a6" d="M806 481l-5 6-2 2 6-6z"/>
<path fill="#9e2de2" d="M1100 387l-8-2 15-6 9 3z"/>
<path fill="#7923ad" d="M663 763l3 11-14-6-2-10z"/>
<path fill="#8727c1" d="M894 559l-4 4-5-7 3-4z"/>
<path fill="#9f2ee4" d="M991 500l-5 1-4 10 4-1z"/>
<path fill="#a12ee6" d="M626 622l-1 11 15-3 1-10z"/>
<path fill="#8d28c9" d="M914 541l-4 4-6-6 4-3z"/>
<path fill="#7421a6" d="M769 530l-4 7-5 10 5-8zM849 444l-7 5 3-2 7-5z"/>
<path fill="#a32fea" d="M977 512l-5 1-6 5 4-1z"/>
<path fill="#7221a3" d="M708 745l2 9-9 11-2-9z"/>
<path fill="#992cdb" d="M1007 465l-7 1-1 18 6 0z"/>
<path fill="#7f24b6" d="M868 598l-3 5 1-7 2-5z"/>
<path fill="#8526bf" d="M890 563l-4 4-4-8 3-3z"/>
<path fill="#7f24b6" d="M1137 377l-9-3 8-10 9 3z"/>
<path fill="#8e29cb" d="M919 538l-5 3-6-5 4-3z"/>
<path fill="#7822ac" d="M1149 356l-9-3 0-13 9 3z"/>
<path fill="#9e2de3" d="M608 645l-1 12 6-8 1-11z"/>
<path fill="#7421a6" d="M801 487l-5 6-3 3 6-7z"/>
<path fill="#962bd6" d="M957 521l-5 2-7 0 4-2z"/>
<path fill="#8426bd" d="M886 567l-3 4-5-8 4-4z"/>
<path fill="#b133fd" d="M1046 391l-8-1 19-3 9 1z"/>
<path fill="#7b23b0" d="M903 414l-7 3 10-3 8-3z"/>
<path fill="#8f29cd" d="M923 535l-4 3-7-5 4-3z"/>
<path fill="#7421a6" d="M855 440l-6 4 3-2 7-5zM750 570l-3 7-4 15 3-8z"/>
<path fill="#8626c0" d="M823 641l-1 5 15-1 1-5z"/>
<path fill="#8627c1" d="M757 638l-1 8 24 4 1-7z"/>
<path fill="#8326bc" d="M853 621l-1 5 5-6 2-4zM883 571l-3 4-5-8 3-4z"/>
<path fill="#8627c1" d="M781 643l-1 7 22 2 1-6z"/>
<path fill="#8526be" d="M840 634l-2 6 11-4 1-5z"/>
<path fill="#7f24b6" d="M865 603l-2 4 1-7 2-4z"/>
<path fill="#a32fe9" d="M614 703l1 12-7-13 0-11z"/>
<path fill="#9029cf" d="M927 532l-4 3-7-5 4-3z"/>
<path fill="#a12ee7" d="M641 620l-1 10 19 1 1-11z"/>
<path fill="#7c24b2" d="M796 493l-5 6-3 4 5-7z"/>
<path fill="#8626c0" d="M732 633l-1 8 25 5 1-8z"/>
<path fill="#6a1e98" d="M1074 276l-12-1-11-4 11 1z"/>
<path fill="#9b2cde" d="M1005 484l-6 0-3 15 5 0z"/>
<path fill="#7f25b7" d="M862 436l-7 4 4-3 7-4z"/>
<path fill="#a42feb" d="M982 511l-5 1-7 5 5-1z"/>
<path fill="#6f209f" d="M731 641l-1 8-5 19 1-8z"/>
<path fill="#8225bb" d="M880 575l-4 4-4-8 3-4z"/>
<path fill="#962bd7" d="M961 520l-4 1-8 0 5-2z"/>
<path fill="#a12ee7" d="M706 628l-1 9 26 4 1-8z"/>
<path fill="#8627c1" d="M945 401l-8 2 15-3 8-2z"/>
<path fill="#8626c0" d="M803 646l-1 6 19 0 1-6z"/>
<path fill="#6c1f9b" d="M1014 286l-11 0-3 15 10 0z"/>
<path fill="#7622a9" d="M738 607l-2 8-4 18 2-8z"/>
<path fill="#a02ee5" d="M996 499l-5 1-5 10 5-1z"/>
<path fill="#912ad0" d="M932 530l-5 2-7-5 4-2z"/>
<path fill="#a12ee7" d="M660 620l-1 11 22 2 1-10z"/>
<path fill="#7421a6" d="M765 537l-4 7-5 11 4-8z"/>
<path fill="#7521a7" d="M1129 312l-11-3-10-12 11 2z"/>
<path fill="#a12ee7" d="M682 623l-1 10 24 4 1-9z"/>
<path fill="#8927c4" d="M1124 385l-8-3 12-8 9 3z"/>
<path fill="#992cdb" d="M1013 443l-7 0 1 22 6 0zM1012 418l-7 0 1 25 7 0z"/>
<path fill="#7822ac" d="M1149 343l-9-3-4-14 10 3z"/>
<path fill="#7c23b1" d="M791 499l-5 6-4 5 6-7z"/>
<path fill="#8125b9" d="M876 579l-3 4-4-8 3-4z"/>
<path fill="#7622a9" d="M1041 271l-12 0-8 5 11 0z"/>
<path fill="#7e24b5" d="M863 607l-2 5 1-8 2-4z"/>
<path fill="#6f209f" d="M720 704l1 8-6 18-1-9z"/>
<path fill="#992cdb" d="M1010 392l-8 0 3 26 7 0z"/>
<path fill="#932ad2" d="M936 527l-4 3-8-5 4-2z"/>
<path fill="#8025b7" d="M868 432l-6 4 4-3 8-5z"/>
<path fill="#7e24b4" d="M910 411l-7 3 11-3 8-3z"/>
<path fill="#7822ac" d="M650 758l2 10-12-8-3-11z"/>
<path fill="#992cdb" d="M1013 465l-6 0-2 19 5 0z"/>
<path fill="#8325bb" d="M852 626l-2 5 6-6 1-5z"/>
<path fill="#9c2de0" d="M605 667l0 12 2-11 0-11z"/>
<path fill="#972bd8" d="M966 518l-5 2-7-1 4-1z"/>
<path fill="#6a1e98" d="M1010 301l-10 0-2 19 10-1z"/>
<path fill="#9e2de3" d="M984 395l-8 1 18-3 8-1z"/>
<path fill="#b133fe" d="M1018 392l-8 0 20-2 8 0z"/>
<path fill="#8626c0" d="M822 646l-1 6 15-2 1-5z"/>
<path fill="#6a1e98" d="M1009 366l-9 1 2 25 8 0z"/>
<path fill="#8526be" d="M838 640l-1 5 11-5 1-4z"/>
<path fill="#a22ee7" d="M614 638l-1 11 11-5 1-11z"/>
<path fill="#8125b8" d="M873 583l-2 4-4-8 2-4z"/>
<path fill="#7020a0" d="M715 730l2 8-7 16-2-9z"/>
<path fill="#a42feb" d="M986 510l-4 1-7 5 4-1z"/>
<path fill="#7b23b1" d="M786 505l-4 6-5 5 5-6z"/>
<path fill="#6e209e" d="M725 677l0 7-5 20 0-8z"/>
<path fill="#942ad3" d="M941 525l-5 2-8-4 4-3z"/>
<path fill="#6a1e98" d="M1008 342l-10 0 2 25 9-1z"/>
<path fill="#7421a6" d="M747 577l-2 7-5 16 3-8z"/>
<path fill="#6a1e98" d="M1008 319l-10 1 0 22 10 0zM1097 286l-11-2-12-8 11 2z"/>
<path fill="#982cda" d="M624 727l2 11-10-12-1-11z"/>
<path fill="#7822ac" d="M690 772l3 9-12 3-3-9z"/>
<path fill="#7e24b5" d="M861 612l-2 4 1-8 2-4z"/>
<path fill="#8125b9" d="M875 428l-7 4 6-4 7-4z"/>
<path fill="#a02ee5" d="M1001 499l-5 0-5 10 5 0z"/>
<path fill="#9b2cde" d="M1010 484l-5 0-4 15 5-1z"/>
<path fill="#7421a6" d="M761 544l-3 7-5 11 3-7z"/>
<path fill="#7522a8" d="M701 765l3 9-11 7-3-9z"/>
<path fill="#8025b7" d="M871 587l-3 4-4-9 3-3z"/>
<path fill="#8727c1" d="M780 650l0 6 22 2 0-6zM756 646l-1 7 25 3 0-6z"/>
<path fill="#982bd9" d="M970 517l-4 1-8 0 4-1z"/>
<path fill="#ae32fa" d="M1082 391l-8-2 18-4 8 2z"/>
<path fill="#952bd5" d="M945 523l-4 2-9-5 4-2z"/>
<path fill="#8727c1" d="M802 652l0 6 19-1 0-5z"/>
<path fill="#8225bb" d="M850 631l-1 5 6-7 1-4z"/>
<path fill="#7923ae" d="M678 775l3 9-12-1-3-9z"/>
<path fill="#8a27c5" d="M952 400l-7 1 15-3 8-1z"/>
<path fill="#7b23b0" d="M782 511l-4 6-5 6 4-7z"/>
<path fill="#8025b8" d="M917 409l-7 2 12-3 7-3z"/>
<path fill="#8927c4" d="M896 545l-4 4-8-10 4-3z"/>
<path fill="#8a28c6" d="M900 542l-4 3-8-9 3-3z"/>
<path fill="#8727c1" d="M731 641l-1 8 25 4 1-7z"/>
<path fill="#8827c2" d="M892 549l-4 3-8-9 4-4z"/>
<path fill="#8b28c8" d="M904 539l-4 3-9-9 4-3z"/>
<path fill="#a32fea" d="M625 633l-1 11 15-3 1-11z"/>
<path fill="#7f24b6" d="M868 591l-2 5-4-10 2-4z"/>
<path fill="#7822ac" d="M1146 329l-10-3-7-14 9 4z"/>
<path fill="#a52fec" d="M991 509l-5 1-7 5 5-1z"/>
<path fill="#8727c1" d="M888 552l-3 4-8-10 3-3z"/>
<path fill="#b133fd" d="M1054 392l-8-1 20-3 8 1z"/>
<path fill="#7120a2" d="M1032 276l-11 0-7 10 11 0z"/>
<path fill="#7822ac" d="M1062 272l-11-1-10 0 11 1z"/>
<path fill="#992cdb" d="M1019 443l-6 0 0 22 5 0z"/>
<path fill="#8d28c9" d="M908 536l-4 3-9-9 4-3z"/>
<path fill="#8325bb" d="M882 425l-7 3 6-4 7-4z"/>
<path fill="#9e2de2" d="M1108 390l-8-3 16-5 8 3z"/>
<path fill="#8526be" d="M837 645l-1 5 11-5 1-5z"/>
<path fill="#7e24b5" d="M859 616l-2 4 1-8 2-4z"/>
<path fill="#7522a8" d="M736 615l-1 7-4 19 1-8z"/>
<path fill="#a12ee7" d="M608 691l0 11-2-12-1-11z"/>
<path fill="#8526bf" d="M885 556l-3 3-8-9 3-4z"/>
<path fill="#992cdb" d="M1018 465l-5 0-3 19 6 0z"/>
<path fill="#962bd6" d="M949 521l-4 2-9-5 4-1z"/>
<path fill="#8626c0" d="M821 652l0 5 15-3 0-4z"/>
<path fill="#8e29cb" d="M912 533l-4 3-9-9 4-3z"/>
<path fill="#992cdb" d="M1019 418l-7 0 1 25 6 0z"/>
<path fill="#a42feb" d="M705 637l-1 8 26 4 1-8z"/>
<path fill="#6f209e" d="M730 649l0 7-5 21 0-9z"/>
<path fill="#8426bd" d="M882 559l-4 4-7-10 3-3z"/>
<path fill="#7221a3" d="M710 754l2 8-8 12-3-9z"/>
<path fill="#982cda" d="M975 516l-5 1-8 0 4-1z"/>
<path fill="#7923ae" d="M1154 372l-9-5 4-11 9 4z"/>
<path fill="#8f29cd" d="M916 530l-4 3-9-9 3-3z"/>
<path fill="#6e1f9d" d="M1119 299l-11-2-11-11 11 3z"/>
<path fill="#a02ee5" d="M1006 498l-5 1-5 10 4-1z"/>
<path fill="#a42fea" d="M640 630l-1 11 19-1 1-9z"/>
<path fill="#7f24b6" d="M866 596l-2 4-4-10 2-4z"/>
<path fill="#7a23af" d="M778 517l-4 6-5 7 4-7z"/>
<path fill="#a02ee5" d="M607 657l0 11 6-8 0-11z"/>
<path fill="#7d24b3" d="M826 466l-6 5-2-1 6-6z"/>
<path fill="#992cdb" d="M1018 392l-8 0 2 26 7 0z"/>
<path fill="#7d24b3" d="M831 462l-5 4-2-2 6-5z"/>
<path fill="#8326bc" d="M878 563l-3 4-7-10 3-4z"/>
<path fill="#8426bc" d="M637 749l3 11-12-11-2-11z"/>
<path fill="#a42feb" d="M681 633l-1 9 24 3 1-8z"/>
<path fill="#7f24b6" d="M1145 381l-8-4 8-10 9 5z"/>
<path fill="#8225ba" d="M849 636l-1 4 6-7 1-4z"/>
<path fill="#7421a6" d="M758 551l-3 6-5 13 3-8z"/>
<path fill="#7d24b3" d="M820 471l-5 5-3-1 6-5z"/>
<path fill="#9b2cde" d="M1016 484l-6 0-4 14 5 1z"/>
<path fill="#7d24b3" d="M837 457l-6 5-1-3 6-5z"/>
<path fill="#9029cf" d="M920 527l-4 3-10-9 4-2z"/>
<path fill="#7622aa" d="M745 584l-2 7-5 16 2-7z"/>
<path fill="#7923ae" d="M666 774l3 9-14-5-3-10z"/>
<path fill="#a42feb" d="M659 631l-1 9 22 2 1-9z"/>
<path fill="#962bd7" d="M954 519l-5 2-9-4 4-2z"/>
<path fill="#a12ee7" d="M991 395l-7 0 18-3 8 0z"/>
<path fill="#7c24b2" d="M815 476l-5 6-4-1 6-6z"/>
<path fill="#8526be" d="M888 422l-6 3 6-5 8-3z"/>
<path fill="#7d24b4" d="M842 453l-5 4-1-3 6-5z"/>
<path fill="#7e24b5" d="M857 620l-1 5 1-9 1-4z"/>
<path fill="#8225bb" d="M875 567l-3 4-7-11 3-3z"/>
<path fill="#7822ac" d="M1158 360l-9-4 0-13 9 4z"/>
<path fill="#6c1f9b" d="M1025 286l-11 0-4 15 11 0z"/>
<path fill="#a52fec" d="M996 509l-5 0-7 5 4 0z"/>
<path fill="#912ad0" d="M924 525l-4 2-10-8 4-3z"/>
<path fill="#7c24b2" d="M810 482l-5 5-4 0 5-6z"/>
<path fill="#6a1e98" d="M1017 367l-8-1 1 26 8 0z"/>
<path fill="#9129cf" d="M924 407l-7 2 12-4 8-2z"/>
<path fill="#8727c2" d="M780 656l0 6 22 1 0-5z"/>
<path fill="#b133fe" d="M1025 393l-7-1 20-2 8 1z"/>
<path fill="#8727c2" d="M802 658l0 5 19-1 0-5z"/>
<path fill="#7e24b4" d="M848 449l-6 4 0-4 7-5z"/>
<path fill="#7e24b5" d="M864 600l-2 4-4-10 2-4z"/>
<path fill="#992cdb" d="M979 515l-4 1-9 0 4-1z"/>
<path fill="#8526be" d="M836 650l0 4 11-5 0-4z"/>
<path fill="#8125b9" d="M872 571l-3 4-7-11 3-4z"/>
<path fill="#9b2cde" d="M959 399l-7 1 16-3 8-1z"/>
<path fill="#6e209e" d="M721 712l2 8-6 18-2-8z"/>
<path fill="#6a1e98" d="M1085 278l-11-2-12-4 11 2z"/>
<path fill="#7c24b2" d="M805 487l-4 5-5 1 5-6z"/>
<path fill="#8727c2" d="M755 653l0 7 25 2 0-6z"/>
<path fill="#972bd8" d="M958 518l-4 1-10-4 4-1z"/>
<path fill="#a32fea" d="M615 715l1 11-6-13-2-11z"/>
<path fill="#932ad2" d="M928 523l-4 2-10-9 4-2z"/>
<path fill="#7a23af" d="M774 523l-4 7-5 7 4-7z"/>
<path fill="#6a1e98" d="M1017 342l-9 0 1 24 8 1z"/>
<path fill="#8927c4" d="M1132 388l-8-3 13-8 8 4z"/>
<path fill="#7e24b4" d="M854 445l-6 4 1-5 6-4z"/>
<path fill="#6a1e98" d="M1021 301l-11 0-2 18 10 1z"/>
<path fill="#8627c1" d="M821 657l0 5 15-3 0-5z"/>
<path fill="#6e209e" d="M725 684l1 8-5 20-1-8z"/>
<path fill="#8225ba" d="M848 640l-1 5 6-8 1-4z"/>
<path fill="#6a1e98" d="M1018 320l-10-1 0 23 9 0z"/>
<path fill="#a02ee5" d="M1011 499l-5-1-6 10 4 1z"/>
<path fill="#992cdb" d="M1024 466l-6-1-2 19 5 0z"/>
<path fill="#8125b8" d="M869 575l-2 4-7-11 2-4z"/>
<path fill="#992cdb" d="M1025 444l-6-1-1 22 6 1z"/>
<path fill="#7622a9" d="M1052 272l-11-1-9 5 11 2z"/>
<path fill="#7e24b5" d="M856 625l-1 4 1-9 1-4z"/>
<path fill="#7c23b1" d="M801 492l-5 6-5 1 5-6z"/>
<path fill="#8727c2" d="M895 419l-7 3 8-5 7-3z"/>
<path fill="#942ad3" d="M932 520l-4 3-10-9 4-2z"/>
<path fill="#7e24b5" d="M862 604l-2 4-3-10 1-4z"/>
<path fill="#8727c2" d="M730 649l0 7 25 4 0-7z"/>
<path fill="#7822ac" d="M755 557l-3 7-5 13 3-7z"/>
<path fill="#7521a7" d="M1138 316l-9-4-10-13 10 4z"/>
<path fill="#a32fea" d="M613 649l0 11 10-6 1-10z"/>
<path fill="#7e24b4" d="M860 441l-6 4 1-5 7-4z"/>
<path fill="#6f20a0" d="M717 738l3 8-8 16-2-8z"/>
<path fill="#a52fec" d="M1000 508l-4 1-8 5 4 0z"/>
<path fill="#7822ac" d="M1158 347l-9-4-3-14 9 5z"/>
<path fill="#7521a7" d="M735 622l-1 8-4 19 1-8z"/>
<path fill="#9b2cde" d="M1021 484l-5 0-5 15 5 0z"/>
<path fill="#992cdb" d="M1026 419l-7-1 0 25 6 1zM984 514l-5 1-9 0 4-1z"/>
<path fill="#982bd9" d="M962 517l-4 1-10-4 4-1z"/>
<path fill="#9d2de1" d="M605 679l1 11 1-11 0-11z"/>
<path fill="#8025b7" d="M867 579l-3 3-7-10 3-4z"/>
<path fill="#7c23b1" d="M796 498l-4 5-6 2 5-6z"/>
<path fill="#7923ad" d="M652 768l3 10-12-9-3-9z"/>
<path fill="#952bd5" d="M936 518l-4 2-10-8 4-2z"/>
<path fill="#ae32fa" d="M1089 394l-7-3 18-4 8 3z"/>
<path fill="#7622a9" d="M743 591l-2 7-5 17 2-8z"/>
<path fill="#7a23ae" d="M770 530l-3 6-6 8 4-7z"/>
<path fill="#942ad4" d="M931 405l-7 2 13-4 8-2z"/>
<path fill="#7f24b5" d="M866 437l-6 4 2-5 6-4z"/>
<path fill="#8326bc" d="M888 536l-4 3-10-11 3-3z"/>
<path fill="#8526be" d="M836 654l0 5 11-6 0-4z"/>
<path fill="#8426be" d="M891 533l-3 3-11-11 4-3z"/>
<path fill="#a62fed" d="M704 645l0 8 26 3 0-7z"/>
<path fill="#8225bb" d="M884 539l-4 4-9-12 3-3z"/>
<path fill="#b133fd" d="M1061 394l-7-2 20-3 8 2z"/>
<path fill="#8526bf" d="M895 530l-4 3-10-11 4-3z"/>
<path fill="#6e209e" d="M730 656l0 8-5 20 0-7z"/>
<path fill="#7e24b5" d="M860 608l-2 4-3-10 2-4z"/>
<path fill="#8225ba" d="M880 543l-3 3-10-11 4-4z"/>
<path fill="#7822ac" d="M693 781l4 9-12 3-4-9z"/>
<path fill="#8626c0" d="M899 527l-4 3-10-11 3-3z"/>
<path fill="#992cdb" d="M1025 393l-7-1 1 26 7 1z"/>
<path fill="#7f24b6" d="M864 582l-2 4-7-11 2-3z"/>
<path fill="#7e24b5" d="M855 629l-1 4 1-10 1-3z"/>
<path fill="#8727c2" d="M802 663l0 6 19-2 0-5z"/>
<path fill="#6a1e98" d="M1108 289l-11-3-12-8 11 3z"/>
<path fill="#8225ba" d="M847 645l0 4 6-8 0-4z"/>
<path fill="#7522a8" d="M704 774l3 8-10 8-4-9z"/>
<path fill="#8125b8" d="M877 546l-3 4-10-12 3-3z"/>
<path fill="#8a28c6" d="M901 416l-6 3 8-5 7-3z"/>
<path fill="#a42feb" d="M998 395l-7 0 19-3 8 0z"/>
<path fill="#992cdb" d="M626 738l2 11-9-13-3-10z"/>
<path fill="#8727c1" d="M903 524l-4 3-11-11 4-3z"/>
<path fill="#7b23b1" d="M792 503l-4 6-6 2 4-6z"/>
<path fill="#8827c2" d="M780 662l0 6 22 1 0-6z"/>
<path fill="#a52fec" d="M624 644l-1 10 15-3 1-10z"/>
<path fill="#982cda" d="M966 516l-4 1-10-4 4-1z"/>
<path fill="#962bd6" d="M940 517l-4 1-10-8 4-1z"/>
<path fill="#a02ee5" d="M1016 499l-5 0-7 10 4 0z"/>
<path fill="#8025b7" d="M874 550l-3 3-10-11 3-4z"/>
<path fill="#8727c1" d="M821 662l0 5 15-4 0-4z"/>
<path fill="#a62fed" d="M680 642l0 9 24 2 0-8z"/>
<path fill="#9e2de2" d="M966 398l-7 1 17-3 8-1z"/>
<path fill="#992cdb" d="M988 514l-4 0-10 0 4 0z"/>
<path fill="#8827c3" d="M906 521l-3 3-11-11 4-3z"/>
<path fill="#9d2de1" d="M1115 394l-7-4 16-5 8 3z"/>
<path fill="#8025b7" d="M872 434l-6 3 2-5 7-4z"/>
<path fill="#7120a2" d="M1043 278l-11-2-7 10 10 1z"/>
<path fill="#a52fec" d="M1004 509l-4-1-8 6 4 0z"/>
<path fill="#7f24b6" d="M871 553l-3 4-10-12 3-3z"/>
<path fill="#7a23ae" d="M681 784l4 9-13-1-3-9z"/>
<path fill="#7f24b6" d="M862 586l-2 4-7-11 2-4z"/>
<path fill="#992cdb" d="M1029 467l-5-1-3 18 4 1z"/>
<path fill="#a62fed" d="M639 641l-1 10 19-1 1-10zM658 640l-1 10 23 1 0-9z"/>
<path fill="#8827c2" d="M755 660l1 6 24 2 0-6z"/>
<path fill="#7722ab" d="M752 564l-2 6-5 14 2-7z"/>
<path fill="#6a1e98" d="M1025 368l-8-1 1 25 7 1z"/>
<path fill="#8927c4" d="M910 519l-4 2-10-11 4-2z"/>
<path fill="#7e24b5" d="M858 612l-1 4-3-11 1-3z"/>
<path fill="#7822ac" d="M1073 274l-11-2-10 0 10 2z"/>
<path fill="#b133fd" d="M1033 395l-8-2 21-2 8 1z"/>
<path fill="#7923ae" d="M767 536l-3 6-6 9 3-7z"/>
<path fill="#962bd7" d="M944 515l-4 2-10-8 4-2z"/>
<path fill="#992cdb" d="M1031 445l-6-1-1 22 5 1z"/>
<path fill="#7b23b0" d="M788 509l-4 5-6 3 4-6z"/>
<path fill="#9b2cde" d="M1025 485l-4-1-5 15 4 1z"/>
<path fill="#7e24b5" d="M868 557l-3 3-10-11 3-4z"/>
<path fill="#7221a3" d="M712 762l4 7-9 13-3-8z"/>
<path fill="#a22ee7" d="M608 702l2 11-3-12-1-11z"/>
<path fill="#7e24b5" d="M854 633l-1 4 2-10 0-4z"/>
<path fill="#8a27c5" d="M914 516l-4 3-10-11 4-2z"/>
<path fill="#992cdb" d="M970 515l-4 1-10-4 4-1z"/>
<path fill="#7822ac" d="M1155 334l-9-5-8-13 10 4z"/>
<path fill="#7b23b0" d="M830 472l-5 4-5-5 6-5zM835 467l-5 5-4-6 5-4z"/>
<path fill="#8125b9" d="M878 431l-6 3 3-6 7-3z"/>
<path fill="#8526be" d="M836 659l0 4 11-6 0-4z"/>
<path fill="#7b23b0" d="M825 476l-4 4-6-4 5-5zM840 463l-5 4-4-5 6-5z"/>
<path fill="#a02ee6" d="M607 668l0 11 6-8 0-11z"/>
<path fill="#972bd9" d="M938 404l-7 1 14-4 7-1z"/>
<path fill="#8125b9" d="M847 649l0 4 6-8 0-4z"/>
<path fill="#8d28ca" d="M907 414l-6 2 9-5 7-2z"/>
<path fill="#7e24b5" d="M860 590l-2 4-6-11 1-4z"/>
<path fill="#7e24b4" d="M865 560l-3 4-9-11 2-4z"/>
<path fill="#6a1e98" d="M1026 343l-9-1 0 25 8 1z"/>
<path fill="#6c1f9b" d="M1035 287l-10-1-4 15 9 1z"/>
<path fill="#7b23b0" d="M821 480l-5 5-6-3 5-6z"/>
<path fill="#7923ae" d="M1162 376l-8-4 4-12 8 5z"/>
<path fill="#7f24b6" d="M1152 386l-7-5 9-9 8 4z"/>
<path fill="#a730f0" d="M992 514l-4 0-10 0 4 0z"/>
<path fill="#7b23b0" d="M845 459l-5 4-3-6 5-4z"/>
<path fill="#8827c2" d="M730 656l0 8 26 2-1-6z"/>
<path fill="#992cdb" d="M1032 420l-6-1-1 25 6 1z"/>
<path fill="#8b28c7" d="M918 514l-4 2-10-10 4-3z"/>
<path fill="#972bd8" d="M948 514l-4 1-10-8 4-1z"/>
<path fill="#7421a7" d="M734 630l0 6-4 20 0-7z"/>
<path fill="#7b23b0" d="M816 485l-4 5-7-3 5-5z"/>
<path fill="#6e1f9d" d="M1129 303l-10-4-11-10 9 3z"/>
<path fill="#7522a8" d="M741 598l-1 7-5 17 1-7z"/>
<path fill="#6e209e" d="M723 720l2 7-5 19-3-8z"/>
<path fill="#7f24b5" d="M857 616l-1 4-3-11 1-4z"/>
<path fill="#6e209e" d="M726 692l2 7-5 21-2-8z"/>
<path fill="#7b23b0" d="M784 514l-3 6-7 3 4-6z"/>
<path fill="#a02ee5" d="M1020 500l-4-1-8 10 4 1z"/>
<path fill="#7b23b0" d="M850 455l-5 4-3-6 6-4z"/>
<path fill="#a52fec" d="M1008 509l-4 0-8 5 3 0z"/>
<path fill="#6a1e98" d="M1027 321l-9-1-1 22 9 1z"/>
<path fill="#7d24b3" d="M862 564l-2 4-10-12 3-3z"/>
<path fill="#8827c2" d="M802 669l1 5 19-2-1-5z"/>
<path fill="#6a1e98" d="M1030 302l-9-1-3 19 9 1z"/>
<path fill="#8426bd" d="M640 760l3 9-12-10-3-10z"/>
<path fill="#7a23ae" d="M669 783l3 9-13-5-4-9z"/>
<path fill="#8727c1" d="M821 667l1 5 15-5-1-4z"/>
<path fill="#7b23b0" d="M812 490l-5 5-6-3 4-5z"/>
<path fill="#8c28c9" d="M922 512l-4 2-10-11 4-2z"/>
<path fill="#992cdb" d="M974 514l-4 1-10-4 4-1z"/>
<path fill="#8326bc" d="M884 428l-6 3 4-6 6-3z"/>
<path fill="#7e24b5" d="M858 594l-1 4-7-12 2-3z"/>
<path fill="#7822ac" d="M1166 365l-8-5 0-13 9 5z"/>
<path fill="#7b23b0" d="M856 452l-6 3-2-6 6-4z"/>
<path fill="#7923ad" d="M764 542l-3 6-6 9 3-6z"/>
<path fill="#8827c3" d="M780 668l1 6 22 0-1-5z"/>
<path fill="#7e24b5" d="M853 637l0 4 1-10 1-4z"/>
<path fill="#7a23ae" d="M877 525l-3 3-11-12 4-3z"/>
<path fill="#7a23af" d="M881 522l-4 3-10-12 3-4z"/>
<path fill="#7923ae" d="M874 528l-3 3-12-12 4-3z"/>
<path fill="#8927c4" d="M1139 393l-7-5 13-7 7 5z"/>
<path fill="#982bd9" d="M952 513l-4 1-10-8 4-1z"/>
<path fill="#7d24b3" d="M860 568l-3 4-9-12 2-4z"/>
<path fill="#7a23af" d="M885 519l-4 3-11-13 4-3z"/>
<path fill="#7722aa" d="M750 570l-2 7-5 14 2-7z"/>
<path fill="#7b23b0" d="M807 495l-4 5-7-2 5-6z"/>
<path fill="#992cdb" d="M1033 395l-8-2 1 26 6 1z"/>
<path fill="#a12ee7" d="M973 398l-7 0 18-3 7 0z"/>
<path fill="#a730ef" d="M704 653l0 8 26 3 0-8z"/>
<path fill="#7923ad" d="M871 531l-4 4-11-12 3-4z"/>
<path fill="#7b23b0" d="M888 516l-3 3-11-13 4-3z"/>
<path fill="#a730ef" d="M1005 396l-7-1 20-3 7 1z"/>
<path fill="#992cdb" d="M1034 468l-5-1-4 18 5 2z"/>
<path fill="#6a1e98" d="M1096 281l-11-3-12-4 11 3z"/>
<path fill="#8d28ca" d="M926 510l-4 2-10-11 4-1z"/>
<path fill="#7b23b0" d="M861 448l-5 4-2-7 6-4z"/>
<path fill="#6e209e" d="M730 664l1 7-5 21-1-8z"/>
<path fill="#9b2cde" d="M1030 487l-5-2-5 15 4 1z"/>
<path fill="#7923ad" d="M867 535l-3 3-11-12 3-3z"/>
<path fill="#a730f0" d="M996 514l-4 0-10 0 3 0z"/>
<path fill="#8125b9" d="M847 653l0 4 6-9 0-3z"/>
<path fill="#9029ce" d="M914 412l-7 2 10-5 7-2z"/>
<path fill="#7b23b0" d="M781 520l-3 5-8 5 4-7z"/>
<path fill="#6f209f" d="M720 746l3 7-7 16-4-7z"/>
<path fill="#7622a9" d="M1062 274l-10-2-9 6 10 1z"/>
<path fill="#7f24b6" d="M856 620l-1 3-3-11 1-3z"/>
<path fill="#7b23b0" d="M892 513l-4 3-10-13 4-2z"/>
<path fill="#8526be" d="M836 663l1 4 10-6 0-4z"/>
<path fill="#a42feb" d="M616 726l3 10-7-13-2-10zM613 660l0 11 11-7-1-10z"/>
<path fill="#b033fd" d="M1068 397l-7-3 21-3 7 3z"/>
<path fill="#7822ac" d="M864 538l-3 4-11-12 3-4z"/>
<path fill="#7f24b6" d="M857 598l-2 4-6-12 1-4z"/>
<path fill="#ae32f9" d="M1096 397l-7-3 19-4 7 4z"/>
<path fill="#7b23b0" d="M803 500l-3 4-8-1 4-5z"/>
<path fill="#7c24b2" d="M857 572l-2 3-9-11 2-4z"/>
<path fill="#7b23b1" d="M896 510l-4 3-10-12 3-3z"/>
<path fill="#992cdb" d="M1037 446l-6-1-2 22 5 1z"/>
<path fill="#8827c3" d="M756 666l0 7 25 1-1-6z"/>
<path fill="#8526bf" d="M889 426l-5 2 4-6 7-3z"/>
<path fill="#9a2cdd" d="M944 403l-6 1 14-4 7-1z"/>
<path fill="#992cdb" d="M978 514l-4 0-10-4 3 0z"/>
<path fill="#7b23b0" d="M866 445l-5 3-1-7 6-4z"/>
<path fill="#a52fec" d="M1012 510l-4-1-9 5 4 1z"/>
<path fill="#7822ac" d="M861 542l-3 3-11-12 3-3z"/>
<path fill="#8e29cc" d="M930 509l-4 1-10-10 3-2z"/>
<path fill="#982cda" d="M956 512l-4 1-10-8 3-1z"/>
<path fill="#a730ef" d="M680 651l0 8 24 2 0-8z"/>
<path fill="#a02ee5" d="M1024 501l-4-1-8 10 4 1z"/>
<path fill="#7c23b1" d="M900 508l-4 2-11-12 4-3z"/>
<path fill="#9d2de1" d="M606 690l1 11 1-11-1-11z"/>
<path fill="#7e24b5" d="M853 641l0 4 1-11 0-3z"/>
<path fill="#6a1e98" d="M1033 369l-8-1 0 25 8 2z"/>
<path fill="#7521a7" d="M1148 320l-10-4-9-13 9 5z"/>
<path fill="#7822ac" d="M858 545l-3 4-11-12 3-4z"/>
<path fill="#7b23b0" d="M800 504l-4 5-8 0 4-6z"/>
<path fill="#7822ac" d="M1167 352l-9-5-3-13 8 5z"/>
<path fill="#7923ad" d="M761 548l-2 6-7 10 3-7z"/>
<path fill="#7c24b2" d="M855 575l-2 4-9-12 2-3z"/>
<path fill="#b133fd" d="M1039 396l-6-1 21-3 7 2z"/>
<path fill="#a630ee" d="M623 654l1 10 15-4-1-9z"/>
<path fill="#7722aa" d="M837 479l-5 4-7-7 5-4z"/>
<path fill="#7c24b2" d="M904 506l-4 2-11-13 4-2z"/>
<path fill="#7722aa" d="M841 475l-4 4-7-7 5-5z"/>
<path fill="#7a23af" d="M778 525l-3 6-8 5 3-6z"/>
<path fill="#8727c1" d="M822 672l1 4 15-5-1-4z"/>
<path fill="#8025b7" d="M855 623l0 4-3-11 0-4z"/>
<path fill="#7722ab" d="M832 483l-4 4-7-7 4-4z"/>
<path fill="#7f25b7" d="M855 602l-1 3-6-12 1-3z"/>
<path fill="#8827c3" d="M803 674l1 5 19-3-1-4z"/>
<path fill="#7c24b2" d="M872 442l-6 3 0-8 6-3z"/>
<path fill="#7622aa" d="M846 472l-5 3-6-8 5-4z"/>
<path fill="#7522a8" d="M740 605l-1 6-5 19 1-8z"/>
<path fill="#a730ef" d="M657 650l1 9 22 0 0-8z"/>
<path fill="#9029ce" d="M934 507l-4 2-11-11 4-2z"/>
<path fill="#992cdb" d="M1038 422l-6-2-1 25 6 1z"/>
<path fill="#a730f0" d="M999 514l-3 0-11 0 4 1z"/>
<path fill="#7722ab" d="M828 487l-4 4-8-6 5-5z"/>
<path fill="#7923ad" d="M655 778l4 9-12-8-4-10z"/>
<path fill="#7822ab" d="M855 549l-2 4-12-12 3-4z"/>
<path fill="#7622a9" d="M850 468l-4 4-6-9 5-4z"/>
<path fill="#9d2de1" d="M1122 398l-7-4 17-6 7 5z"/>
<path fill="#a730ef" d="M638 651l1 9 19-1-1-9z"/>
<path fill="#7522a8" d="M707 782l4 7-10 9-4-8z"/>
<path fill="#8125b8" d="M847 657l0 4 6-9 0-4z"/>
<path fill="#8827c3" d="M730 664l1 7 25 2 0-7z"/>
<path fill="#992cdb" d="M960 511l-4 1-11-8 4-1z"/>
<path fill="#7923ad" d="M697 790l4 8-11 3-5-8z"/>
<path fill="#8827c3" d="M895 424l-6 2 6-7 6-3z"/>
<path fill="#932ad3" d="M920 411l-6 1 10-5 7-2z"/>
<path fill="#7120a2" d="M1053 279l-10-1-8 9 10 2z"/>
<path fill="#7421a6" d="M734 636l1 7-5 21 0-8z"/>
<path fill="#992cdb" d="M982 514l-4 0-11-4 4 0z"/>
<path fill="#7822ab" d="M824 491l-4 5-8-6 4-5z"/>
<path fill="#7d24b3" d="M908 503l-4 3-11-13 4-2z"/>
<path fill="#7421a6" d="M867 513l-4 3-11-12 4-4zM870 509l-3 4-11-13 3-3zM863 516l-4 3-11-12 4-3z"/>
<path fill="#7622aa" d="M748 577l-1 6-6 15 2-7z"/>
<path fill="#7622a9" d="M855 465l-5 3-5-9 5-4z"/>
<path fill="#7b23b0" d="M796 509l-3 5-9 0 4-5z"/>
<path fill="#7421a6" d="M874 506l-4 3-11-12 4-3z"/>
<path fill="#8526be" d="M837 667l1 4 10-7-1-3z"/>
<path fill="#7c24b2" d="M853 579l-1 4-10-12 2-4z"/>
<path fill="#6a1e98" d="M1117 292l-9-3-12-8 9 4z"/>
<path fill="#7421a6" d="M859 519l-3 4-11-12 3-4z"/>
<path fill="#6a1e98" d="M1034 345l-8-2-1 25 8 1z"/>
<path fill="#9b2cde" d="M1034 488l-4-1-6 14 4 1z"/>
<path fill="#8827c3" d="M781 674l1 5 22 0-1-5z"/>
<path fill="#7421a6" d="M878 503l-4 3-11-12 4-3z"/>
<path fill="#7822ac" d="M820 496l-4 4-9-5 5-5z"/>
<path fill="#7722ab" d="M853 553l-3 3-11-12 2-3z"/>
<path fill="#992cdb" d="M1039 470l-5-2-4 19 4 1z"/>
<path fill="#992cdc" d="M628 749l3 10-9-13-3-10z"/>
<path fill="#7e24b4" d="M877 440l-5 2 0-8 6-3z"/>
<path fill="#7421a6" d="M856 523l-3 3-12-11 4-4z"/>
<path fill="#a52fec" d="M1016 511l-4-1-9 5 3 1z"/>
<path fill="#912ad0" d="M938 506l-4 1-11-11 4-1z"/>
<path fill="#7622a9" d="M860 461l-5 4-5-10 6-3z"/>
<path fill="#7421a6" d="M882 501l-4 2-11-12 4-3z"/>
<path fill="#a42feb" d="M979 398l-6 0 18-3 7 0z"/>
<path fill="#7f24b5" d="M912 501l-4 2-11-12 4-2z"/>
<path fill="#7e24b5" d="M853 645l0 3 1-11 0-3z"/>
<path fill="#8025b8" d="M854 605l-1 4-6-12 1-4z"/>
<path fill="#7421a6" d="M853 526l-3 4-12-12 3-3z"/>
<path fill="#7120a2" d="M716 769l4 8-9 12-4-7z"/>
<path fill="#7a23af" d="M775 531l-3 5-8 6 3-6z"/>
<path fill="#8025b8" d="M855 627l-1 4-3-12 1-3z"/>
<path fill="#7822ac" d="M816 500l-3 5-10-5 4-5z"/>
<path fill="#6e209e" d="M728 699l2 7-5 21-2-7z"/>
<path fill="#7822ac" d="M1084 277l-11-3-11 0 10 3z"/>
<path fill="#a02ee5" d="M1028 502l-4-1-8 10 3 1z"/>
<path fill="#7421a6" d="M885 498l-3 3-11-13 4-3z"/>
<path fill="#7a23af" d="M685 793l5 8-13-1-5-8z"/>
<path fill="#9e2de2" d="M950 402l-6 1 15-4 7-1z"/>
<path fill="#6c1f9b" d="M1045 289l-10-2-5 15 10 2z"/>
<path fill="#7722ab" d="M850 556l-2 4-12-12 3-4z"/>
<path fill="#7421a6" d="M845 489l-4 4-9-10 5-4z"/>
<path fill="#7622a8" d="M865 458l-5 3-4-9 5-4z"/>
<path fill="#6a1e98" d="M1036 323l-9-2-1 22 8 2z"/>
<path fill="#7421a6" d="M849 485l-4 4-8-10 4-4z"/>
<path fill="#992cdb" d="M1039 396l-6-1-1 25 6 2zM964 510l-4 1-11-8 3 0z"/>
<path fill="#7b23b0" d="M793 514l-3 5-9 1 3-6z"/>
<path fill="#aa31f3" d="M1011 397l-6-1 20-3 8 2z"/>
<path fill="#7421a6" d="M841 493l-3 3-10-9 4-4z"/>
<path fill="#7c24b2" d="M852 583l-2 3-9-12 1-3z"/>
<path fill="#7822ac" d="M759 554l-2 6-7 10 2-6z"/>
<path fill="#6e209e" d="M725 727l3 7-5 19-3-7z"/>
<path fill="#7421a6" d="M850 530l-3 3-12-11 3-4zM854 482l-5 3-8-10 5-3z"/>
<path fill="#a730f0" d="M1003 515l-4-1-10 1 3 0z"/>
<path fill="#7421a6" d="M856 500l-4 4-11-11 4-4zM859 497l-3 3-11-11 4-4z"/>
<path fill="#992cdb" d="M1042 448l-5-2-3 22 5 2z"/>
<path fill="#7421a6" d="M852 504l-4 3-10-11 3-3zM838 496l-4 4-10-9 4-4z"/>
<path fill="#8025b8" d="M916 500l-4 1-11-12 4-2z"/>
<path fill="#7421a6" d="M889 495l-4 3-10-13 5-3zM863 494l-4 3-10-12 5-3z"/>
<path fill="#a730f0" d="M704 661l1 8 26 2-1-7z"/>
<path fill="#992cdb" d="M985 514l-3 0-11-4 3 0z"/>
<path fill="#a02ee5" d="M607 679l1 11 6-9-1-10z"/>
<path fill="#8b28c7" d="M901 422l-6 2 6-8 6-2z"/>
<path fill="#6a1e98" d="M1040 304l-10-2-3 19 9 2z"/>
<path fill="#7421a6" d="M858 479l-4 3-8-10 4-4z"/>
<path fill="#a22ee8" d="M610 713l2 10-3-12-2-10z"/>
<path fill="#7421a6" d="M848 507l-3 4-11-11 4-4z"/>
<path fill="#7923ad" d="M813 505l-4 4-9-5 3-4z"/>
<path fill="#7f25b7" d="M882 437l-5 3 1-9 6-3z"/>
<path fill="#922ad2" d="M942 505l-4 1-11-11 4-1z"/>
<path fill="#7421a6" d="M867 491l-4 3-9-12 4-3z"/>
<path fill="#8927c4" d="M756 673l2 6 24 0-1-5z"/>
<path fill="#7421a6" d="M834 500l-4 4-10-8 4-5z"/>
<path fill="#6e209e" d="M731 671l1 6-4 22-2-7z"/>
<path fill="#7421a6" d="M847 533l-3 4-12-11 3-4z"/>
<path fill="#8125b8" d="M847 661l1 3 6-9-1-3z"/>
<path fill="#7622a9" d="M869 455l-4 3-4-10 5-3z"/>
<path fill="#7421a6" d="M862 476l-4 3-8-11 5-3zM845 511l-4 4-11-11 4-4z"/>
<path fill="#8727c2" d="M823 676l1 4 15-5-1-4z"/>
<path fill="#7f24b6" d="M1159 391l-7-5 10-10 7 6z"/>
<path fill="#7822ac" d="M1163 339l-8-5-7-14 8 5z"/>
<path fill="#7722ab" d="M848 560l-2 4-12-12 2-4z"/>
<path fill="#7421a6" d="M871 488l-4 3-9-12 4-3z"/>
<path fill="#7923ae" d="M1169 382l-7-6 4-11 8 6z"/>
<path fill="#7521a7" d="M893 493l-4 2-9-13 4-2z"/>
<path fill="#8125b9" d="M853 609l-1 3-6-12 1-3z"/>
<path fill="#962bd7" d="M926 410l-6 1 11-6 7-1z"/>
<path fill="#7521a7" d="M830 504l-3 4-11-8 4-4z"/>
<path fill="#8827c3" d="M804 679l1 4 19-3-1-4z"/>
<path fill="#7421a6" d="M841 515l-3 3-11-10 3-4zM867 473l-5 3-7-11 5-4z"/>
<path fill="#8225ba" d="M919 498l-3 2-11-13 4-2z"/>
<path fill="#7d24b3" d="M850 586l-1 4-10-12 2-4z"/>
<path fill="#7923ad" d="M809 509l-3 5-10-5 4-5z"/>
<path fill="#7b23b0" d="M790 519l-3 5-9 1 3-5z"/>
<path fill="#7421a6" d="M875 485l-4 3-9-12 5-3z"/>
<path fill="#8526be" d="M838 671l1 4 10-7-1-4z"/>
<path fill="#7421a6" d="M844 537l-3 4-12-11 3-4z"/>
<path fill="#7e24b5" d="M853 648l0 4 2-11-1-4z"/>
<path fill="#8125b9" d="M854 631l0 3-3-12 0-3z"/>
<path fill="#992cdb" d="M967 510l-3 0-12-7 4-1z"/>
<path fill="#b033fd" d="M1074 400l-6-3 21-3 7 3z"/>
<path fill="#a42fec" d="M1019 512l-3-1-10 5 3 1z"/>
<path fill="#7a23af" d="M772 536l-2 6-9 6 3-6z"/>
<path fill="#7521a7" d="M739 611l0 6-5 19 0-6z"/>
<path fill="#7522a8" d="M827 508l-4 4-10-7 3-5zM897 491l-4 2-9-13 4-2z"/>
<path fill="#7722aa" d="M874 453l-5 2-3-10 6-3z"/>
<path fill="#7421a6" d="M838 518l-3 4-12-10 4-4z"/>
<path fill="#6e1f9d" d="M1138 308l-9-5-12-11 10 5z"/>
<path fill="#7622a9" d="M747 583l-1 6-6 16 1-7z"/>
<path fill="#942ad3" d="M945 504l-3 1-11-11 3-1z"/>
<path fill="#9b2cde" d="M1038 490l-4-2-6 14 3 2z"/>
<path fill="#7421a6" d="M871 470l-4 3-7-12 5-3z"/>
<path fill="#8225ba" d="M887 435l-5 2 2-9 5-2z"/>
<path fill="#8927c4" d="M1146 398l-7-5 13-7 7 5z"/>
<path fill="#7421a6" d="M880 482l-5 3-8-12 4-3z"/>
<path fill="#7722ab" d="M846 564l-2 3-12-11 2-4z"/>
<path fill="#6a1e98" d="M1040 371l-7-2 0 26 6 1z"/>
<path fill="#992cdb" d="M1044 424l-6-2-1 24 5 2z"/>
<path fill="#a730f0" d="M680 659l1 8 24 2-1-8z"/>
<path fill="#ae32f9" d="M1102 401l-6-4 19-3 7 4z"/>
<path fill="#6f209f" d="M723 753l3 7-6 17-4-8z"/>
<path fill="#992cdb" d="M989 515l-4-1-11-4 3 1z"/>
<path fill="#8526be" d="M643 769l4 10-12-11-4-9z"/>
<path fill="#7421a6" d="M841 541l-2 3-12-10 2-4z"/>
<path fill="#a730ef" d="M1006 516l-3-1-11 0 3 1z"/>
<path fill="#7a23af" d="M672 792l5 8-13-4-5-9z"/>
<path fill="#7822ac" d="M1174 371l-8-6 1-13 7 6z"/>
<path fill="#8e29cb" d="M907 420l-6 2 6-8 7-2z"/>
<path fill="#a02ee5" d="M1031 504l-3-2-9 10 3 2z"/>
<path fill="#7622a9" d="M823 512l-3 4-11-7 4-4z"/>
<path fill="#8426bd" d="M923 496l-4 2-10-13 4-1z"/>
<path fill="#992cdb" d="M1043 472l-4-2-5 18 4 2z"/>
<path fill="#7923ae" d="M806 514l-3 4-10-4 3-5z"/>
<path fill="#b133fd" d="M1045 399l-6-3 22-2 7 3z"/>
<path fill="#7421a6" d="M835 522l-3 4-12-10 3-4z"/>
<path fill="#8927c4" d="M782 679l1 6 22-2-1-4z"/>
<path fill="#a42feb" d="M613 671l1 10 11-7-1-10z"/>
<path fill="#7722aa" d="M901 489l-4 2-9-13 4-2z"/>
<path fill="#8125b9" d="M852 612l0 4-7-13 1-3z"/>
<path fill="#7822ac" d="M757 560l-1 5-8 12 2-7z"/>
<path fill="#7521a7" d="M875 467l-4 3-6-12 4-3zM884 480l-4 2-9-12 4-3z"/>
<path fill="#8927c4" d="M731 671l1 6 26 2-2-6z"/>
<path fill="#7622a8" d="M1072 277l-10-3-9 5 10 3z"/>
<path fill="#7421a6" d="M735 643l0 6-4 22-1-7z"/>
<path fill="#7e24b4" d="M849 590l-1 3-10-12 1-3z"/>
<path fill="#7822ac" d="M879 450l-5 3-2-11 5-2z"/>
<path fill="#7b23b0" d="M787 524l-3 5-9 2 3-6z"/>
<path fill="#a12ee6" d="M956 402l-6 0 16-4 7 0z"/>
<path fill="#7822ac" d="M1105 285l-9-4-12-4 9 3z"/>
<path fill="#a730ef" d="M985 399l-6-1 19-3 7 1z"/>
<path fill="#8025b8" d="M848 664l1 4 6-10-1-3z"/>
<path fill="#7822ac" d="M844 567l-2 4-11-12 1-3z"/>
<path fill="#7421a6" d="M839 544l-3 4-12-10 3-4z"/>
<path fill="#7421a7" d="M832 526l-3 4-12-10 3-4z"/>
<path fill="#7622a9" d="M820 516l-3 4-11-6 3-5z"/>
<path fill="#992cdb" d="M971 510l-4 0-11-8 3 0z"/>
<path fill="#952bd5" d="M949 503l-4 1-11-11 4 0z"/>
<path fill="#a730f0" d="M658 659l1 8 22 0-1-8z"/>
<path fill="#8225ba" d="M854 634l0 3-2-12-1-3z"/>
<path fill="#7522a8" d="M888 478l-4 2-9-13 5-2z"/>
<path fill="#a42fec" d="M619 736l3 10-7-13-3-10z"/>
<path fill="#8426bd" d="M893 433l-6 2 2-9 6-2z"/>
<path fill="#7923ad" d="M905 487l-4 2-9-13 4-2z"/>
<path fill="#7522a8" d="M880 465l-5 2-6-12 5-2z"/>
<path fill="#7923ae" d="M803 518l-3 5-10-4 3-5z"/>
<path fill="#8626c0" d="M927 495l-4 1-10-12 4-1z"/>
<path fill="#9a2cdc" d="M932 409l-6 1 12-6 6-1z"/>
<path fill="#7e24b5" d="M853 652l1 3 1-12 0-2z"/>
<path fill="#7a23ae" d="M770 542l-2 5-9 7 2-6z"/>
<path fill="#8727c2" d="M824 680l2 4 14-5-1-4z"/>
<path fill="#a630ee" d="M624 664l1 10 15-5-1-9z"/>
<path fill="#992cdb" d="M1047 450l-5-2-3 22 4 2z"/>
<path fill="#6a1e98" d="M1041 347l-7-2-1 24 7 2z"/>
<path fill="#a42feb" d="M1022 514l-3-2-10 5 3 1z"/>
<path fill="#7a23ae" d="M884 448l-5 2-2-10 5-3z"/>
<path fill="#a730ef" d="M639 660l1 9 19-2-1-8z"/>
<path fill="#7521a7" d="M829 530l-2 4-13-9 3-5z"/>
<path fill="#8526be" d="M839 675l1 4 10-8-1-3z"/>
<path fill="#992cdb" d="M992 515l-3 0-12-4 3 0z"/>
<path fill="#9d2de1" d="M607 701l2 10 2-11-3-10z"/>
<path fill="#7722aa" d="M817 520l-3 5-11-7 3-4z"/>
<path fill="#7521a7" d="M836 548l-2 4-12-11 2-3z"/>
<path fill="#7f24b5" d="M848 593l-1 4-10-12 1-4z"/>
<path fill="#ac31f6" d="M1017 399l-6-2 22-2 6 1z"/>
<path fill="#8225ba" d="M852 616l-1 3-6-12 0-4z"/>
<path fill="#992cdb" d="M1045 399l-6-3-1 26 6 2z"/>
<path fill="#9d2de1" d="M1128 403l-6-5 17-5 7 5z"/>
<path fill="#7923ad" d="M842 571l-1 3-12-11 2-4z"/>
<path fill="#7722aa" d="M892 476l-4 2-8-13 4-3z"/>
<path fill="#a730ef" d="M1009 517l-3-1-11 0 3 1z"/>
<path fill="#8927c4" d="M805 683l2 5 19-4-2-4z"/>
<path fill="#7722aa" d="M884 462l-4 3-6-12 5-3z"/>
<path fill="#912ad0" d="M912 419l-5 1 7-8 6-1z"/>
<path fill="#7b23b0" d="M909 485l-4 2-9-13 4-2zM784 529l-2 5-10 2 3-5z"/>
<path fill="#8927c4" d="M758 679l1 5 24 1-1-6z"/>
<path fill="#962bd6" d="M952 503l-3 0-11-10 3-1z"/>
<path fill="#7a23ae" d="M800 523l-3 4-10-3 3-5z"/>
<path fill="#8927c4" d="M931 494l-4 1-10-12 4-2z"/>
<path fill="#9b2ddf" d="M1042 492l-4-2-7 14 3 2z"/>
<path fill="#7120a2" d="M1063 282l-10-3-8 10 9 3z"/>
<path fill="#7522a8" d="M1156 325l-8-5-10-12 9 5z"/>
<path fill="#7822ac" d="M1174 358l-7-6-4-13 8 6z"/>
<path fill="#992cdb" d="M974 510l-3 0-12-8 3 0z"/>
<path fill="#6e209e" d="M730 706l3 6-5 22-3-7z"/>
<path fill="#7622a8" d="M827 534l-3 4-12-9 2-4z"/>
<path fill="#a830f1" d="M705 669l2 7 25 1-1-6z"/>
<path fill="#7622a9" d="M746 589l0 6-7 16 1-6z"/>
<path fill="#a02ee5" d="M1034 506l-3-2-9 10 3 1z"/>
<path fill="#7522a8" d="M711 789l5 7-10 9-5-7z"/>
<path fill="#7722ab" d="M814 525l-2 4-12-6 3-5z"/>
<path fill="#8727c1" d="M898 431l-5 2 2-9 6-2z"/>
<path fill="#7622a9" d="M834 552l-2 4-12-11 2-4z"/>
<path fill="#7c23b1" d="M889 446l-5 2-2-11 5-2z"/>
<path fill="#8225bb" d="M854 637l1 4-3-13 0-3z"/>
<path fill="#6a1e98" d="M1044 325l-8-2-2 22 7 2z"/>
<path fill="#7722ab" d="M756 565l-2 6-7 12 1-6z"/>
<path fill="#7923ad" d="M896 474l-4 2-8-14 5-2zM701 798l5 7-11 4-5-8z"/>
<path fill="#7421a6" d="M739 617l1 6-5 20-1-7z"/>
<path fill="#6e209e" d="M732 677l2 6-4 23-2-7z"/>
<path fill="#8025b7" d="M849 668l1 3 6-10-1-3z"/>
<path fill="#7923ad" d="M889 460l-5 2-5-12 5-2z"/>
<path fill="#7a23ae" d="M659 787l5 9-13-9-4-8z"/>
<path fill="#7923ae" d="M841 574l-2 4-11-11 1-4z"/>
<path fill="#7e24b4" d="M913 484l-4 1-9-13 4-2z"/>
<path fill="#992cdb" d="M1047 474l-4-2-5 18 4 2z"/>
<path fill="#7f24b6" d="M847 597l-1 3-10-12 1-3z"/>
<path fill="#6e209e" d="M728 734l4 6-6 20-3-7z"/>
<path fill="#7e24b5" d="M854 655l1 3 1-12-1-3z"/>
<path fill="#7923ae" d="M768 547l-2 5-9 8 2-6z"/>
<path fill="#6c1f9b" d="M1054 292l-9-3-5 15 8 2z"/>
<path fill="#8325bb" d="M851 619l0 3-6-12 0-3z"/>
<path fill="#992cdb" d="M995 516l-3-1-12-4 3 1z"/>
<path fill="#7120a2" d="M720 777l4 6-8 13-5-7z"/>
<path fill="#992cdb" d="M1049 427l-5-3-2 24 5 2z"/>
<path fill="#7622a9" d="M824 538l-2 3-13-8 3-4z"/>
<path fill="#6a1e98" d="M1048 306l-8-2-4 19 8 2zM1127 297l-10-5-12-7 9 4z"/>
<path fill="#8b28c7" d="M934 493l-3 1-10-13 3 0z"/>
<path fill="#7a23af" d="M797 527l-2 5-11-3 3-5z"/>
<path fill="#8927c4" d="M783 685l3 4 21-1-2-5z"/>
<path fill="#a42feb" d="M962 402l-6 0 17-4 6 0z"/>
<path fill="#972bd8" d="M956 502l-4 1-11-11 4 0z"/>
<path fill="#9d2de1" d="M937 408l-5 1 12-6 6-1z"/>
<path fill="#7822ac" d="M812 529l-3 4-12-6 3-4z"/>
<path fill="#7b23b0" d="M782 534l-2 5-10 3 2-6z"/>
<path fill="#a42feb" d="M1025 515l-3-1-10 4 3 2z"/>
<path fill="#7622aa" d="M832 556l-1 3-13-10 2-4z"/>
<path fill="#7b23b0" d="M900 472l-4 2-7-14 4-2z"/>
<path fill="#9a2cdc" d="M631 759l4 9-9-13-4-9z"/>
<path fill="#a730ef" d="M1012 518l-3-1-11 0 2 1z"/>
<path fill="#7822ac" d="M1093 280l-9-3-12 0 10 4z"/>
<path fill="#992cdb" d="M977 511l-3-1-12-8 3 1z"/>
<path fill="#7e24b5" d="M893 444l-4 2-2-11 6-2z"/>
<path fill="#6a1e98" d="M1047 373l-7-2-1 25 6 3z"/>
<path fill="#8827c2" d="M826 684l2 4 14-6-2-3z"/>
<path fill="#942ad4" d="M917 418l-5 1 8-8 6-1z"/>
<path fill="#8526be" d="M840 679l2 3 10-8-2-3z"/>
<path fill="#7b23b0" d="M893 458l-4 2-5-12 5-2z"/>
<path fill="#a931f3" d="M991 400l-6-1 20-3 6 1z"/>
<path fill="#b032fc" d="M1080 403l-6-3 22-3 6 4z"/>
<path fill="#8025b8" d="M917 483l-4 1-9-14 4-1z"/>
<path fill="#7b23b0" d="M690 801l5 8-12-1-6-8z"/>
<path fill="#8a28c6" d="M903 430l-5 1 3-9 6-2z"/>
<path fill="#a02ee5" d="M608 690l3 10 6-10-3-9z"/>
<path fill="#7421a6" d="M735 649l2 6-5 22-1-6z"/>
<path fill="#7a23af" d="M839 578l-1 3-11-11 1-3z"/>
<path fill="#8927c4" d="M732 677l2 6 25 1-1-5z"/>
<path fill="#a830f0" d="M681 667l2 8 24 1-2-7z"/>
<path fill="#b033fd" d="M1051 401l-6-2 23-2 6 3z"/>
<path fill="#7722aa" d="M822 541l-2 4-13-8 2-4z"/>
<path fill="#8325bb" d="M855 641l0 2-2-12-1-3z"/>
<path fill="#8025b7" d="M846 600l-1 3-9-12 0-3z"/>
<path fill="#7f24b6" d="M1165 397l-6-6 10-9 6 6z"/>
<path fill="#992cdb" d="M1051 453l-4-3-4 22 4 2z"/>
<path fill="#8e29cb" d="M938 493l-4 0-10-12 4-1z"/>
<path fill="#9d2de1" d="M612 723l3 10-3-13-3-9z"/>
<path fill="#7923ad" d="M809 533l-2 4-12-5 2-5z"/>
<path fill="#7e24b4" d="M904 470l-4 2-7-14 4-1z"/>
<path fill="#7a23af" d="M795 532l-2 4-11-2 2-5z"/>
<path fill="#7722ab" d="M831 559l-2 4-13-10 2-4z"/>
<path fill="#a02ee5" d="M1037 508l-3-2-9 9 3 2z"/>
<path fill="#ae32f9" d="M1108 406l-6-5 20-3 6 5z"/>
<path fill="#8326bc" d="M851 622l1 3-7-12 0-3z"/>
<path fill="#8927c4" d="M807 688l2 4 19-4-2-4z"/>
<path fill="#9c2ddf" d="M1045 495l-3-3-8 14 3 2z"/>
<path fill="#982bd9" d="M959 502l-3 0-11-10 3 0z"/>
<path fill="#7a23ae" d="M1175 388l-6-6 5-11 6 6z"/>
<path fill="#8025b7" d="M850 671l2 3 6-11-2-2z"/>
<path fill="#7e24b5" d="M855 658l1 3 1-12-1-3z"/>
<path fill="#a730f0" d="M998 517l-3-1-12-4 2 1z"/>
<path fill="#7e24b4" d="M897 457l-4 1-4-12 4-2z"/>
<path fill="#7722ab" d="M754 571l0 5-8 13 1-6z"/>
<path fill="#6f209e" d="M726 760l5 6-7 17-4-6z"/>
<path fill="#8326bc" d="M921 481l-4 2-9-14 4-1z"/>
<path fill="#7b23b0" d="M780 539l-2 5-10 3 2-5z"/>
<path fill="#8125b9" d="M898 443l-5 1 0-11 5-2z"/>
<path fill="#7923ae" d="M766 552l-1 6-9 7 1-5z"/>
<path fill="#7522a8" d="M746 595l-1 6-6 16 0-6z"/>
<path fill="#7822ac" d="M1171 345l-8-6-7-14 8 6z"/>
<path fill="#8827c4" d="M1151 403l-5-5 13-7 6 6z"/>
<path fill="#992cdb" d="M980 511l-3 0-12-8 3 0z"/>
<path fill="#7822ab" d="M820 545l-2 4-13-8 2-4z"/>
<path fill="#7b23b0" d="M838 581l-1 4-11-12 1-3z"/>
<path fill="#ad32f8" d="M1023 401l-6-2 22-3 6 3z"/>
<path fill="#8927c5" d="M759 684l3 6 24-1-3-4z"/>
<path fill="#992cdb" d="M1051 401l-6-2-1 25 5 3z"/>
<path fill="#a630ee" d="M1015 520l-3-2-12 0 3 2z"/>
<path fill="#a42feb" d="M1028 517l-3-2-10 5 2 2z"/>
<path fill="#a830f0" d="M659 667l2 9 22-1-2-8z"/>
<path fill="#8d28ca" d="M908 428l-5 2 4-10 5-1z"/>
<path fill="#8125b8" d="M845 603l0 4-9-13 0-3z"/>
<path fill="#7923ad" d="M807 537l-2 4-12-5 2-4z"/>
<path fill="#a42feb" d="M614 681l3 9 10-7-2-9z"/>
<path fill="#8025b8" d="M908 469l-4 1-7-13 5-2z"/>
<path fill="#6a1e98" d="M1049 349l-8-2-1 24 7 2z"/>
<path fill="#992cdb" d="M1051 477l-4-3-5 18 3 3z"/>
<path fill="#9029ce" d="M941 492l-3 1-10-13 3-1z"/>
<path fill="#7822ac" d="M829 563l-1 4-13-10 1-4z"/>
<path fill="#982bd9" d="M923 417l-6 1 9-8 6-1z"/>
<path fill="#a02ee5" d="M943 408l-6 0 13-6 6 0z"/>
<path fill="#6f209f" d="M1147 313l-9-5-11-11 8 5z"/>
<path fill="#7b23b0" d="M793 536l-2 5-11-2 2-5z"/>
<path fill="#7421a6" d="M740 623l0 6-5 20 0-6z"/>
<path fill="#7e24b5" d="M855 643l1 3-3-12 0-3z"/>
<path fill="#7522a8" d="M1082 281l-10-4-9 5 9 3z"/>
<path fill="#8025b8" d="M902 455l-5 2-4-13 5-1z"/>
<path fill="#8526be" d="M842 682l2 3 10-9-2-2z"/>
<path fill="#982cda" d="M962 502l-3 0-11-10 3 0z"/>
<path fill="#a630ef" d="M968 403l-6-1 17-4 6 1z"/>
<path fill="#7822ac" d="M1180 377l-6-6 0-13 7 7z"/>
<path fill="#8627c1" d="M924 481l-3 0-9-13 4-1z"/>
<path fill="#7b23b0" d="M677 800l6 8-13-4-6-8z"/>
<path fill="#8426bd" d="M852 625l0 3-7-13 0-2z"/>
<path fill="#8526bf" d="M647 779l4 8-11-10-5-9z"/>
<path fill="#8827c2" d="M828 688l2 3 14-6-2-3z"/>
<path fill="#a830f1" d="M707 676l2 6 25 1-2-6z"/>
<path fill="#a730f0" d="M640 669l2 9 19-2-2-9z"/>
<path fill="#7822ac" d="M818 549l-2 4-13-8 2-4z"/>
<path fill="#8426bd" d="M903 441l-5 2 0-12 5-1z"/>
<path fill="#a630ee" d="M625 674l2 9 15-5-2-9z"/>
<path fill="#8927c5" d="M786 689l2 5 21-2-2-4z"/>
<path fill="#a730ef" d="M1000 518l-2-1-13-4 3 1z"/>
<path fill="#7c23b1" d="M837 585l-1 3-11-11 1-4z"/>
<path fill="#992cdb" d="M1054 430l-5-3-2 23 4 3z"/>
<path fill="#7822ac" d="M1114 289l-9-4-12-5 9 5z"/>
<path fill="#6e209e" d="M733 712l3 6-4 22-4-6z"/>
<path fill="#7e24b5" d="M856 661l2 2 1-12-2-2z"/>
<path fill="#7b23b0" d="M778 544l-2 5-10 3 2-5z"/>
<path fill="#6e209e" d="M734 683l3 6-4 23-3-6z"/>
<path fill="#992cdb" d="M983 512l-3-1-12-8 3 1z"/>
<path fill="#8326bc" d="M912 468l-4 1-6-14 4-1z"/>
<path fill="#8025b7" d="M852 674l2 2 5-10-1-3z"/>
<path fill="#9d2de1" d="M1134 408l-6-5 18-5 5 5z"/>
<path fill="#7a23ae" d="M805 541l-2 4-12-4 2-5z"/>
<path fill="#a02ee5" d="M1040 511l-3-3-9 9 2 3z"/>
<path fill="#7823ad" d="M828 567l-1 3-13-10 1-3z"/>
<path fill="#922ad2" d="M945 492l-4 0-10-13 4 0z"/>
<path fill="#8125b9" d="M845 607l0 3-9-13 0-3z"/>
<path fill="#7923ad" d="M765 558l-2 5-9 8 2-6z"/>
<path fill="#ac31f6" d="M997 401l-6-1 20-3 6 2z"/>
<path fill="#6a1e98" d="M1052 328l-8-3-3 22 8 2z"/>
<path fill="#a52fec" d="M622 746l4 9-7-13-4-9z"/>
<path fill="#9c2ddf" d="M1048 498l-3-3-8 13 3 3z"/>
<path fill="#9029cf" d="M913 428l-5 0 4-9 5-1z"/>
<path fill="#8326bc" d="M906 454l-4 1-4-12 5-2z"/>
<path fill="#7b23b0" d="M791 541l-2 4-11-1 2-5z"/>
<path fill="#a630ee" d="M1017 522l-2-2-12 0 2 1z"/>
<path fill="#8a27c5" d="M928 480l-4 1-8-14 4-1z"/>
<path fill="#7722aa" d="M754 576l-1 6-7 13 0-6z"/>
<path fill="#9d2de1" d="M609 711l3 9 2-11-3-9z"/>
<path fill="#8927c4" d="M809 692l3 4 18-5-2-3z"/>
<path fill="#992cdb" d="M1055 456l-4-3-4 21 4 3zM965 503l-3-1-11-10 3 0z"/>
<path fill="#7923ad" d="M816 553l-1 4-13-8 1-4z"/>
<path fill="#a42feb" d="M1030 520l-2-3-11 5 2 2z"/>
<path fill="#7120a2" d="M1072 285l-9-3-9 10 9 3z"/>
<path fill="#7e24b5" d="M856 646l1 3-3-13-1-2z"/>
<path fill="#7421a6" d="M737 655l1 6-4 22-2-6z"/>
<path fill="#6e209e" d="M732 740l4 6-5 20-5-6z"/>
<path fill="#8526be" d="M852 628l1 3-7-13-1-3z"/>
<path fill="#6a1e98" d="M1053 376l-6-3-2 26 6 2z"/>
<path fill="#8927c5" d="M734 683l3 6 25 1-3-6z"/>
<path fill="#9b2cde" d="M928 416l-5 1 9-8 5-1z"/>
<path fill="#8727c1" d="M907 440l-4 1 0-11 5-2z"/>
<path fill="#7c24b2" d="M836 588l0 3-12-11 1-3z"/>
<path fill="#7521a7" d="M745 601l1 5-6 17-1-6z"/>
<path fill="#8627c1" d="M916 467l-4 1-6-14 4-1z"/>
<path fill="#7522a8" d="M716 796l6 7-10 8-6-6z"/>
<path fill="#6a1e98" d="M1057 309l-9-3-4 19 8 3z"/>
<path fill="#7a23af" d="M803 545l-1 4-13-4 2-4z"/>
<path fill="#7923ae" d="M827 570l-1 3-13-9 1-4z"/>
<path fill="#b032fc" d="M1057 405l-6-4 23-1 6 3z"/>
<path fill="#a730ef" d="M1003 520l-3-2-12-4 2 1z"/>
<path fill="#b032fc" d="M1085 407l-5-4 22-2 6 5z"/>
<path fill="#6c1f9b" d="M1063 295l-9-3-6 14 9 3z"/>
<path fill="#a32fe9" d="M948 408l-5 0 13-6 6 0z"/>
<path fill="#992cdb" d="M985 513l-2-1-12-8 2 1z"/>
<path fill="#952bd5" d="M948 492l-3 0-10-13 3 0z"/>
<path fill="#8526be" d="M844 685l3 3 9-9-2-3z"/>
<path fill="#7822ac" d="M1181 365l-7-7-3-13 7 6z"/>
<path fill="#7b23b0" d="M776 549l-1 5-10 4 1-6z"/>
<path fill="#a830f1" d="M683 675l2 7 24 0-2-6z"/>
<path fill="#8225ba" d="M845 610l0 3-9-13 0-3z"/>
<path fill="#7622a9" d="M1164 331l-8-6-9-12 8 6z"/>
<path fill="#992cdb" d="M1054 480l-3-3-6 18 3 3z"/>
<path fill="#7923ad" d="M706 805l6 6-11 5-6-7z"/>
<path fill="#7e24b5" d="M858 663l1 3 1-12-1-3z"/>
<path fill="#7120a2" d="M724 783l6 6-8 14-6-7z"/>
<path fill="#8627c1" d="M910 453l-4 1-3-13 4-1z"/>
<path fill="#8d28ca" d="M931 479l-3 1-8-14 3 0z"/>
<path fill="#8a27c5" d="M762 690l2 5 24-1-2-5z"/>
<path fill="#7b23b1" d="M789 545l-1 4-12 0 2-5z"/>
<path fill="#7a23ae" d="M815 557l-1 3-13-7 1-4z"/>
<path fill="#8827c3" d="M830 691l3 3 14-6-3-3z"/>
<path fill="#7f25b7" d="M854 676l2 3 5-11-2-2z"/>
<path fill="#9a2cdc" d="M968 503l-3 0-11-11 3 1z"/>
<path fill="#a930f2" d="M973 404l-5-1 17-4 6 1z"/>
<path fill="#af32fa" d="M1028 403l-5-2 22-2 6 2z"/>
<path fill="#942ad3" d="M917 427l-4 1 4-10 6-1z"/>
<path fill="#7a23af" d="M664 796l6 8-13-9-6-8z"/>
<path fill="#992cdb" d="M1057 405l-6-4-2 26 5 3z"/>
<path fill="#a02ee5" d="M1042 514l-2-3-10 9 2 2z"/>
<path fill="#7923ad" d="M763 563l0 4-9 9 0-5z"/>
<path fill="#7421a6" d="M740 629l2 6-5 20-2-6z"/>
<path fill="#a630ee" d="M1019 524l-2-2-12-1 2 2z"/>
<path fill="#7d24b3" d="M836 591l0 3-12-11 0-3z"/>
<path fill="#8a27c5" d="M920 466l-4 1-6-14 4-1z"/>
<path fill="#7e24b5" d="M857 649l2 2-3-13-2-2z"/>
<path fill="#8526bf" d="M853 631l0 3-6-13-1-3z"/>
<path fill="#8a28c6" d="M912 439l-5 1 1-12 5 0z"/>
<path fill="#ad32f8" d="M1113 411l-5-5 20-3 6 5z"/>
<path fill="#6c1f9a" d="M1135 302l-8-5-13-8 9 5z"/>
<path fill="#7a23af" d="M826 573l-1 4-13-10 1-3z"/>
<path fill="#7b23b0" d="M802 549l-1 4-13-4 1-4z"/>
<path fill="#8a27c5" d="M788 694l3 4 21-2-3-4z"/>
<path fill="#7822ac" d="M1102 285l-9-5-11 1 8 4z"/>
<path fill="#a42fea" d="M1032 522l-2-2-11 4 2 2z"/>
<path fill="#a02ee5" d="M611 700l3 9 5-10-2-9z"/>
<path fill="#972bd8" d="M951 492l-3 0-10-13 3 0z"/>
<path fill="#9c2ddf" d="M1051 501l-3-3-8 13 2 3z"/>
<path fill="#9a2cdd" d="M635 768l5 9-10-13-4-9z"/>
<path fill="#7622aa" d="M753 582l0 5-8 14 1-6z"/>
<path fill="#992cdb" d="M988 514l-3-1-12-8 3 1z"/>
<path fill="#a630ee" d="M1005 521l-2-1-13-5 2 2z"/>
<path fill="#8325bb" d="M845 613l0 2-9-12 0-3z"/>
<path fill="#9e2de2" d="M933 416l-5 0 9-8 6 0z"/>
<path fill="#9029ce" d="M935 479l-4 0-8-13 4-1z"/>
<path fill="#6a1e98" d="M1056 353l-7-4-2 24 6 3z"/>
<path fill="#7b23b0" d="M695 809l6 7-12-1-6-7z"/>
<path fill="#992cdb" d="M1059 433l-5-3-3 23 4 3z"/>
<path fill="#8a27c5" d="M914 452l-4 1-3-13 5-1z"/>
<path fill="#7f24b6" d="M1171 403l-6-6 10-9 6 7z"/>
<path fill="#6e209e" d="M731 766l5 6-6 17-6-6z"/>
<path fill="#a830f1" d="M661 676l2 7 22-1-2-7z"/>
<path fill="#7a23af" d="M814 560l-1 4-13-7 1-4z"/>
<path fill="#7b23b0" d="M775 554l-1 4-11 5 2-5z"/>
<path fill="#8927c5" d="M812 696l3 3 18-5-3-3z"/>
<path fill="#a930f2" d="M709 682l3 7 25 0-3-6z"/>
<path fill="#ad32f8" d="M1002 403l-5-2 20-2 6 2z"/>
<path fill="#7c23b1" d="M788 549l-1 4-12 1 1-5z"/>
<path fill="#7e24b5" d="M859 666l2 2 1-12-2-2z"/>
<path fill="#8827c3" d="M1157 409l-6-6 14-6 6 6z"/>
<path fill="#9a2cdd" d="M971 504l-3-1-11-10 2 0z"/>
<path fill="#9d2de1" d="M615 733l4 9-3-13-4-9z"/>
<path fill="#8526be" d="M847 688l2 2 10-9-3-2z"/>
<path fill="#7a23ae" d="M1181 395l-6-7 5-11 6 7z"/>
<path fill="#7e24b4" d="M836 594l0 3-12-11 0-3z"/>
<path fill="#992cdb" d="M1059 460l-4-4-4 21 3 3z"/>
<path fill="#8d28ca" d="M923 466l-3 0-6-14 4 0z"/>
<path fill="#a62fed" d="M953 409l-5-1 14-6 6 1z"/>
<path fill="#6e209e" d="M737 689l3 6-4 23-3-6z"/>
<path fill="#7b23b0" d="M825 577l-1 3-12-9 0-4z"/>
<path fill="#7421a7" d="M746 606l0 5-6 18 0-6z"/>
<path fill="#972bd8" d="M922 426l-5 1 6-10 5-1z"/>
<path fill="#7f24b6" d="M856 679l3 2 5-11-3-2z"/>
<path fill="#8626bf" d="M853 634l1 2-6-13-1-2z"/>
<path fill="#7b23b1" d="M801 553l-1 4-13-4 1-4z"/>
<path fill="#8d28ca" d="M916 439l-4 0 1-11 4-1z"/>
<path fill="#7e24b5" d="M859 651l1 3-3-13-1-3z"/>
<path fill="#a62fed" d="M1021 526l-2-2-12-1 2 2z"/>
<path fill="#a42feb" d="M617 690l2 9 11-7-3-9z"/>
<path fill="#6e209e" d="M736 718l4 5-4 23-4-6z"/>
<path fill="#992cdb" d="M954 492l-3 0-10-13 3 0z"/>
<path fill="#a830f0" d="M642 678l3 8 18-3-2-7z"/>
<path fill="#992cdb" d="M1057 484l-3-4-6 18 3 3z"/>
<path fill="#7823ad" d="M763 567l-1 5-9 10 1-6z"/>
<path fill="#932ad3" d="M938 479l-3 0-8-14 3 0z"/>
<path fill="#8827c3" d="M833 694l3 3 13-7-2-2z"/>
<path fill="#7822ac" d="M1178 351l-7-6-7-14 7 7z"/>
<path fill="#7421a6" d="M738 661l3 5-4 23-3-6z"/>
<path fill="#a02ee5" d="M1044 517l-2-3-10 8 2 3z"/>
<path fill="#8326bc" d="M845 615l1 3-9-12-1-3z"/>
<path fill="#8d28ca" d="M918 452l-4 0-2-13 4 0z"/>
<path fill="#992cdb" d="M990 515l-2-1-12-8 2 1z"/>
<path fill="#8a27c5" d="M737 689l3 6 24 0-2-5z"/>
<path fill="#7b23b0" d="M813 564l-1 3-13-6 1-4z"/>
<path fill="#a730ef" d="M627 683l3 9 15-6-3-8z"/>
<path fill="#a630ee" d="M1007 523l-2-2-13-4 2 2z"/>
<path fill="#a32fea" d="M1034 525l-2-3-11 4 2 3z"/>
<path fill="#7522a8" d="M1090 285l-8-4-10 4 8 4z"/>
<path fill="#6c1f9a" d="M1059 380l-6-4-2 25 6 4z"/>
<path fill="#6a1e98" d="M1059 331l-7-3-3 21 7 4z"/>
<path fill="#9d2de0" d="M1139 414l-5-6 17-5 6 6z"/>
<path fill="#ab31f5" d="M978 405l-5-1 18-4 6 1z"/>
<path fill="#9b2cde" d="M973 505l-2-1-12-11 3 1z"/>
<path fill="#7c24b2" d="M787 553l-1 5-12 0 1-4z"/>
<path fill="#9029ce" d="M927 465l-4 1-5-14 4-1z"/>
<path fill="#7e24b5" d="M836 597l0 3-12-11 0-3z"/>
<path fill="#7120a2" d="M1155 319l-8-6-12-11 8 6z"/>
<path fill="#7b23b0" d="M774 558l-1 4-10 5 0-4z"/>
<path fill="#a12ee7" d="M937 416l-4 0 10-8 5 0z"/>
<path fill="#7822ac" d="M1186 384l-6-7 1-12 6 7z"/>
<path fill="#8a28c6" d="M764 695l4 4 23-1-3-4z"/>
<path fill="#7e24b5" d="M861 668l3 2 0-12-2-2z"/>
<path fill="#7b23b0" d="M824 580l0 3-13-9 1-3z"/>
<path fill="#9c2ddf" d="M1053 504l-2-3-9 13 2 3z"/>
<path fill="#b032fc" d="M1061 408l-4-3 23-2 5 4z"/>
<path fill="#7b23b0" d="M683 808l6 7-13-4-6-7z"/>
<path fill="#7c23b1" d="M800 557l-1 4-13-3 1-5z"/>
<path fill="#7622a9" d="M753 587l0 5-7 14-1-5z"/>
<path fill="#6e209e" d="M736 746l5 5-5 21-5-6z"/>
<path fill="#7421a6" d="M742 635l1 5-5 21-1-6z"/>
<path fill="#8626bf" d="M651 787l6 8-11-10-6-8z"/>
<path fill="#7e24b5" d="M854 636l2 2-7-13-1-2z"/>
<path fill="#9b2cde" d="M957 493l-3-1-10-13 3 1z"/>
<path fill="#8a28c6" d="M791 698l3 4 21-3-3-3z"/>
<path fill="#9029cf" d="M920 438l-4 1 1-12 5-1z"/>
<path fill="#b032fb" d="M1090 412l-5-5 23-1 5 5z"/>
<path fill="#7923ae" d="M1123 294l-9-5-12-4 8 5z"/>
<path fill="#b032fc" d="M1033 406l-5-3 23-2 6 4z"/>
<path fill="#7e24b5" d="M860 654l2 2-3-14-2-1z"/>
<path fill="#962bd7" d="M941 479l-3 0-8-14 4 0z"/>
<path fill="#a930f2" d="M685 682l3 7 24 0-3-7z"/>
<path fill="#9a2cdc" d="M926 426l-4 0 6-10 5 0z"/>
<path fill="#8526be" d="M849 690l3 3 9-10-2-2z"/>
<path fill="#992cdb" d="M1061 408l-4-3-3 25 5 3z"/>
<path fill="#a52fed" d="M1023 529l-2-3-12-1 1 3z"/>
<path fill="#7f24b6" d="M859 681l2 2 5-11-2-2z"/>
<path fill="#7b23b1" d="M812 567l0 4-14-7 1-3z"/>
<path fill="#9029ce" d="M922 451l-4 1-2-13 4-1z"/>
<path fill="#8426bd" d="M846 618l1 3-10-13 0-2z"/>
<path fill="#6a1e98" d="M1064 313l-7-4-5 19 7 3z"/>
<path fill="#7120a2" d="M1080 289l-8-4-9 10 8 4z"/>
<path fill="#8a27c5" d="M815 699l3 3 18-5-3-3z"/>
<path fill="#a630ee" d="M992 517l-2-2-12-8 2 2z"/>
<path fill="#9d2de1" d="M612 720l4 9 1-11-3-9z"/>
<path fill="#a830f1" d="M958 410l-5-1 15-6 5 1z"/>
<path fill="#a62fed" d="M1009 525l-2-2-13-4 2 2z"/>
<path fill="#9d2de1" d="M626 755l4 9-6-13-5-9z"/>
<path fill="#992cdb" d="M1063 437l-4-4-4 23 4 4z"/>
<path fill="#6c1f9b" d="M1071 299l-8-4-6 14 7 4z"/>
<path fill="#932ad3" d="M930 465l-3 0-5-14 3 0z"/>
<path fill="#9b2cde" d="M976 506l-3-1-11-11 2 1z"/>
<path fill="#7f24b6" d="M836 600l0 3-12-11 0-3z"/>
<path fill="#7822ac" d="M762 572l0 5-9 10 0-5z"/>
<path fill="#7522a8" d="M722 803l6 5-9 9-7-6z"/>
<path fill="#a02ee5" d="M1046 520l-2-3-10 8 2 3z"/>
<path fill="#a32fea" d="M1036 528l-2-3-11 4 1 2z"/>
<path fill="#7c23b1" d="M824 583l0 3-13-9 0-3z"/>
<path fill="#af32fa" d="M1007 406l-5-3 21-2 5 2z"/>
<path fill="#7c24b2" d="M786 558l-1 3-12 1 1-4z"/>
<path fill="#992cdb" d="M1062 464l-3-4-5 20 3 4z"/>
<path fill="#7421a6" d="M746 611l1 5-5 19-2-6z"/>
<path fill="#8827c3" d="M836 697l3 3 13-7-3-3z"/>
<path fill="#7120a2" d="M730 789l6 6-8 13-6-5z"/>
<path fill="#7c24b2" d="M799 561l-1 3-13-3 1-3z"/>
<path fill="#7b23b0" d="M773 562l0 5-11 5 1-5z"/>
<path fill="#9d2de0" d="M959 493l-2 0-10-13 3 1z"/>
<path fill="#7e24b5" d="M864 670l2 2 0-13-2-1z"/>
<path fill="#992cdc" d="M1060 488l-3-4-6 17 2 3z"/>
<path fill="#7e24b5" d="M856 638l1 3-6-14-2-2z"/>
<path fill="#ad32f8" d="M1118 416l-5-5 21-3 5 6z"/>
<path fill="#992cdb" d="M944 479l-3 0-7-14 3 1z"/>
<path fill="#7923ae" d="M712 811l7 6-11 5-7-6z"/>
<path fill="#6c1f9a" d="M1062 356l-6-3-3 23 6 4z"/>
<path fill="#942ad3" d="M924 438l-4 0 2-12 4 0z"/>
<path fill="#a930f2" d="M712 689l3 6 25 0-3-6z"/>
<path fill="#a42feb" d="M942 417l-5-1 11-8 5 1z"/>
<path fill="#7c24b2" d="M812 571l-1 3-13-6 0-4z"/>
<path fill="#7e24b5" d="M862 656l2 2-3-14-2-2z"/>
<path fill="#8426bd" d="M847 621l1 2-10-12-1-3z"/>
<path fill="#7822ac" d="M1187 372l-6-7-3-14 6 8z"/>
<path fill="#932ad3" d="M925 451l-3 0-2-13 4 0z"/>
<path fill="#a52fed" d="M994 519l-2-2-12-8 2 2z"/>
<path fill="#9c2de0" d="M1055 508l-2-4-9 13 2 3z"/>
<path fill="#7722aa" d="M1171 338l-7-7-9-12 7 6z"/>
<path fill="#a52fec" d="M1024 531l-1-2-13-1 2 2z"/>
<path fill="#9d2de1" d="M930 427l-4-1 7-10 4 0z"/>
<path fill="#a830f1" d="M663 683l3 8 22-2-3-7z"/>
<path fill="#6e209e" d="M740 695l3 5-3 23-4-5z"/>
<path fill="#ad32f8" d="M983 407l-5-2 19-4 5 2z"/>
<path fill="#7f24b6" d="M861 683l3 2 5-11-3-2z"/>
<path fill="#962bd7" d="M934 465l-4 0-5-14 4 1z"/>
<path fill="#7f25b7" d="M836 603l1 3-12-11-1-3z"/>
<path fill="#7622a9" d="M753 592l1 4-8 15 0-5z"/>
<path fill="#9c2ddf" d="M978 507l-2-1-12-11 2 2z"/>
<path fill="#a52fed" d="M1010 528l-1-3-13-4 1 2z"/>
<path fill="#8526be" d="M852 693l4 1 8-9-3-2z"/>
<path fill="#7421a6" d="M741 666l2 5-3 24-3-6z"/>
<path fill="#6e209e" d="M736 772l5 5-5 18-6-6z"/>
<path fill="#7c24b2" d="M824 586l0 3-13-9 0-3z"/>
<path fill="#8a28c6" d="M740 695l3 5 25-1-4-4z"/>
<path fill="#7a23af" d="M670 804l6 7-13-8-6-8z"/>
<path fill="#9f2ee4" d="M614 709l3 9 6-10-4-9z"/>
<path fill="#7923ad" d="M1110 290l-8-5-12 0 8 5z"/>
<path fill="#7d24b2" d="M785 561l0 4-12 2 0-5z"/>
<path fill="#6e209e" d="M740 723l4 5-3 23-5-5z"/>
<path fill="#7d24b3" d="M798 564l0 4-13-3 0-4z"/>
<path fill="#9e2de2" d="M962 494l-3-1-9-12 2 1z"/>
<path fill="#8a28c6" d="M768 699l3 4 23-1-3-4z"/>
<path fill="#7c23b1" d="M1143 308l-8-6-12-8 8 6z"/>
<path fill="#7f24b6" d="M1176 410l-5-7 10-8 5 7z"/>
<path fill="#a32fea" d="M1037 531l-1-3-12 3 1 3z"/>
<path fill="#9c2ddf" d="M947 480l-3-1-7-13 3 0z"/>
<path fill="#8a28c6" d="M794 702l4 3 20-3-3-3z"/>
<path fill="#7e24b5" d="M857 641l2 1-7-13-1-2z"/>
<path fill="#8827c3" d="M1161 416l-4-7 14-6 5 7z"/>
<path fill="#7421a6" d="M743 640l2 5-4 21-3-5z"/>
<path fill="#6f209f" d="M1064 384l-5-4-2 25 4 3z"/>
<path fill="#7822ac" d="M762 577l0 4-9 11 0-5z"/>
<path fill="#8a27c5" d="M818 702l4 3 17-5-3-3z"/>
<path fill="#a02ee5" d="M1048 524l-2-4-10 8 1 3z"/>
<path fill="#7e24b5" d="M866 672l3 2 0-13-3-2z"/>
<path fill="#7d24b3" d="M811 574l0 3-13-6 0-3z"/>
<path fill="#7b23b0" d="M701 816l7 6-12 0-7-7z"/>
<path fill="#aa31f4" d="M962 411l-4-1 15-6 5 1z"/>
<path fill="#8526be" d="M848 623l1 2-9-12-2-2z"/>
<path fill="#7b23b0" d="M773 567l0 4-11 6 0-5z"/>
<path fill="#9b2cde" d="M640 777l6 8-10-13-6-8z"/>
<path fill="#972bd8" d="M928 438l-4 0 2-12 4 1z"/>
<path fill="#962bd7" d="M929 452l-4-1-1-13 4 0z"/>
<path fill="#7e24b5" d="M864 658l2 1-3-13-2-2z"/>
<path fill="#a830f1" d="M645 686l3 8 18-3-3-8z"/>
<path fill="#8827c3" d="M839 700l4 2 13-8-4-1z"/>
<path fill="#a52fec" d="M996 521l-2-2-12-8 1 2z"/>
<path fill="#b032fc" d="M1066 413l-5-5 24-1 5 5z"/>
<path fill="#7a23af" d="M1186 402l-5-7 5-11 5 8z"/>
<path fill="#b032fc" d="M1038 410l-5-4 24-1 4 3z"/>
<path fill="#6c1f9a" d="M1066 335l-7-4-3 22 6 3z"/>
<path fill="#992cdb" d="M937 466l-3-1-5-13 3 0z"/>
<path fill="#a42feb" d="M619 699l4 9 10-8-3-8z"/>
<path fill="#8025b7" d="M837 606l0 2-11-11-1-2z"/>
<path fill="#9d2de1" d="M619 742l5 9-3-13-5-9z"/>
<path fill="#a42fec" d="M1025 534l-1-3-12-1 1 3z"/>
<path fill="#992cdb" d="M1066 413l-5-5-2 25 4 4z"/>
<path fill="#9c2ddf" d="M980 509l-2-2-12-10 2 1z"/>
<path fill="#7d24b3" d="M824 589l0 3-12-9-1-3z"/>
<path fill="#a630ee" d="M946 418l-4-1 11-8 5 1z"/>
<path fill="#a52fec" d="M1012 530l-2-2-13-5 1 2z"/>
<path fill="#a02ee5" d="M935 427l-5 0 7-11 5 1z"/>
<path fill="#a730ef" d="M630 692l3 8 15-6-3-8z"/>
<path fill="#7421a6" d="M747 616l2 5-6 19-1-5z"/>
<path fill="#992cdb" d="M1065 468l-3-4-5 20 3 4zM1066 441l-3-4-4 23 3 4z"/>
<path fill="#9a2cdc" d="M1062 492l-2-4-7 16 2 4z"/>
<path fill="#9c2de0" d="M1143 420l-4-6 18-5 4 7z"/>
<path fill="#7f24b6" d="M864 685l4 1 4-11-3-1z"/>
<path fill="#af32fb" d="M1011 408l-4-2 21-3 5 3zM1094 417l-4-5 23-1 5 5z"/>
<path fill="#9f2ee4" d="M964 495l-2-1-10-12 3 1z"/>
<path fill="#a930f2" d="M688 689l3 6 24 0-3-6z"/>
<path fill="#6e209e" d="M741 751l5 5-5 21-5-5z"/>
<path fill="#7d24b3" d="M798 568l0 3-13-2 0-4z"/>
<path fill="#9c2de0" d="M1057 512l-2-4-9 12 2 4z"/>
<path fill="#9e2de2" d="M950 481l-3-1-7-14 2 1z"/>
<path fill="#7d24b3" d="M785 565l0 4-12 2 0-4z"/>
<path fill="#8526be" d="M856 694l3 2 9-10-4-1z"/>
<path fill="#7e24b5" d="M859 642l2 2-7-13-2-2z"/>
<path fill="#7722aa" d="M1098 290l-8-5-10 4 8 5z"/>
<path fill="#7d24b3" d="M811 577l0 3-13-5 0-4z"/>
<path fill="#7822ac" d="M1184 359l-6-8-7-13 6 7z"/>
<path fill="#8526bf" d="M849 625l2 2-10-12-1-2z"/>
<path fill="#a32fe9" d="M1038 535l-1-4-12 3 1 3z"/>
<path fill="#7522a8" d="M754 596l1 5-8 15-1-5z"/>
<path fill="#7e24b5" d="M869 674l3 1 0-13-3-1z"/>
<path fill="#992cdb" d="M932 452l-3 0-1-14 3 1z"/>
<path fill="#7e24b5" d="M866 659l3 2-4-14-2-1z"/>
<path fill="#ae32fa" d="M987 409l-4-2 19-4 5 3z"/>
<path fill="#992cdc" d="M931 439l-3-1 2-11 5 0z"/>
<path fill="#a52fec" d="M997 523l-1-2-13-8 2 2z"/>
<path fill="#6c1f9a" d="M1071 317l-7-4-5 18 7 4z"/>
<path fill="#8125b8" d="M837 608l1 3-11-11-1-3z"/>
<path fill="#9c2ddf" d="M940 466l-3 0-5-14 3 0z"/>
<path fill="#a02ee5" d="M1049 527l-1-3-11 7 1 4z"/>
<path fill="#7822ac" d="M1191 392l-5-8 1-12 5 8z"/>
<path fill="#7b23b0" d="M773 571l0 4-11 6 0-4z"/>
<path fill="#a730f0" d="M982 511l-2-2-12-11 2 2z"/>
<path fill="#7822ac" d="M762 581l1 4-9 11-1-4z"/>
<path fill="#7e24b4" d="M824 592l1 3-13-9 0-3z"/>
<path fill="#8025b8" d="M1162 325l-7-6-12-11 7 7z"/>
<path fill="#a42feb" d="M1026 537l-1-3-12-1 0 3z"/>
<path fill="#7b23b1" d="M689 815l7 7-13-5-7-6z"/>
<path fill="#a931f3" d="M715 695l4 5 24 0-3-5z"/>
<path fill="#a42feb" d="M1013 533l-1-3-14-5 1 3z"/>
<path fill="#7221a4" d="M1088 294l-8-5-9 10 8 4z"/>
<path fill="#8a28c6" d="M822 705l4 2 17-5-4-2z"/>
<path fill="#a02ee5" d="M966 497l-2-2-9-12 2 1z"/>
<path fill="#ac31f7" d="M966 413l-4-2 16-6 5 2z"/>
<path fill="#6e209e" d="M1079 303l-8-4-7 14 7 4z"/>
<path fill="#6f209f" d="M1067 361l-5-5-3 24 5 4z"/>
<path fill="#8626c0" d="M657 795l6 8-11-11-6-7z"/>
<path fill="#7c24b2" d="M1131 300l-8-6-13-4 8 6z"/>
<path fill="#a02ee5" d="M952 482l-2-1-8-14 3 1z"/>
<path fill="#8b28c6" d="M798 705l4 3 20-3-4-3z"/>
<path fill="#8827c3" d="M843 702l4 2 12-8-3-2z"/>
<path fill="#7421a6" d="M743 671l4 5-4 24-3-5z"/>
<path fill="#a22fe9" d="M938 428l-3-1 7-10 4 1z"/>
<path fill="#ad32f8" d="M1122 422l-4-6 21-2 4 6z"/>
<path fill="#7e24b4" d="M798 571l0 4-13-2 0-4z"/>
<path fill="#7f24b6" d="M868 686l3 2 4-12-3-1z"/>
<path fill="#6e209e" d="M743 700l4 4-3 24-4-5z"/>
<path fill="#8a28c6" d="M743 700l4 4 24-1-3-4z"/>
<path fill="#7e24b5" d="M861 644l2 2-7-14-2-1z"/>
<path fill="#8b28c7" d="M771 703l4 4 23-2-4-3z"/>
<path fill="#a830f1" d="M950 419l-4-1 12-8 4 1z"/>
<path fill="#7e24b4" d="M811 580l1 3-14-5 0-3z"/>
<path fill="#7d24b3" d="M785 569l0 4-12 2 0-4z"/>
<path fill="#7522a8" d="M728 808l7 5-9 10-7-6z"/>
<path fill="#7120a2" d="M736 795l6 5-7 13-7-5z"/>
<path fill="#7b23b1" d="M851 627l1 2-9-13-2-1z"/>
<path fill="#9d2de1" d="M616 729l5 9 1-12-5-8z"/>
<path fill="#7421a6" d="M745 645l3 4-5 22-2-5z"/>
<path fill="#a930f2" d="M666 691l4 6 21-2-3-6z"/>
<path fill="#8526be" d="M859 696l4 1 8-9-3-2z"/>
<path fill="#9c2ddf" d="M935 452l-3 0-1-13 4 0z"/>
<path fill="#7e24b5" d="M872 675l3 1-1-13-2-1zM869 661l3 1-4-14-3-1z"/>
<path fill="#9d2de1" d="M630 764l6 8-7-13-5-8z"/>
<path fill="#a42feb" d="M998 525l-1-2-12-8 1 2z"/>
<path fill="#9a2cdc" d="M1064 496l-2-4-7 16 2 4z"/>
<path fill="#a32fe9" d="M1039 538l-1-3-12 2 1 4z"/>
<path fill="#8125b9" d="M838 611l2 2-12-11-1-2z"/>
<path fill="#9c2de0" d="M1058 516l-1-4-9 12 1 3z"/>
<path fill="#9e2de2" d="M942 467l-2-1-5-14 3 1z"/>
<path fill="#a730ef" d="M983 513l-1-2-12-11 2 2z"/>
<path fill="#7e24b5" d="M825 595l1 2-13-8-1-3z"/>
<path fill="#9c2de0" d="M935 439l-4 0 4-12 3 1z"/>
<path fill="#7421a6" d="M749 621l2 4-6 20-2-5z"/>
<path fill="#992cdb" d="M1068 472l-3-4-5 20 2 4z"/>
<path fill="#6e209e" d="M744 728l5 5-3 23-5-5z"/>
<path fill="#7321a5" d="M1069 389l-5-5-3 24 5 5z"/>
<path fill="#7923ae" d="M719 817l7 6-11 4-7-5z"/>
<path fill="#6e209e" d="M741 777l7 5-6 18-6-5z"/>
<path fill="#a42feb" d="M1013 536l0-3-14-5 1 2z"/>
<path fill="#b032fc" d="M1042 413l-4-3 23-2 5 5z"/>
<path fill="#a42fea" d="M1027 541l-1-4-13-1 1 3z"/>
<path fill="#a02ee6" d="M968 498l-2-1-9-13 2 2z"/>
<path fill="#7b23b0" d="M773 575l0 4-10 6-1-4z"/>
<path fill="#992cdb" d="M1069 446l-3-5-4 23 3 4z"/>
<path fill="#a02ee5" d="M1050 531l-1-4-11 8 1 3z"/>
<path fill="#992cdb" d="M1070 417l-4-4-3 24 3 4z"/>
<path fill="#a12ee7" d="M955 483l-3-1-7-14 3 1z"/>
<path fill="#7522a8" d="M755 601l1 4-7 16-2-5z"/>
<path fill="#af32fb" d="M1070 417l-4-4 24-1 4 5z"/>
<path fill="#b032fc" d="M1015 411l-4-3 22-2 5 4z"/>
<path fill="#7822ab" d="M763 585l1 4-9 12-1-5z"/>
<path fill="#7e24b5" d="M863 646l2 1-7-13-2-2zM798 575l0 3-13-2 0-3z"/>
<path fill="#7822ac" d="M1192 380l-5-8-3-13 5 8z"/>
<path fill="#7e24b5" d="M812 583l0 3-13-5-1-3z"/>
<path fill="#7b23b1" d="M852 629l2 2-10-13-1-2z"/>
<path fill="#7f24b5" d="M871 688l4 1 3-12-3-1z"/>
<path fill="#af32fb" d="M991 412l-4-3 20-3 4 2z"/>
<path fill="#a52fec" d="M942 429l-4-1 8-10 4 1z"/>
<path fill="#7823ad" d="M1177 345l-6-7-9-13 6 8z"/>
<path fill="#7d24b4" d="M785 573l0 3-12 3 0-4z"/>
<path fill="#9f2ee4" d="M617 718l5 8 5-11-4-7z"/>
<path fill="#8827c3" d="M1165 423l-4-7 15-6 4 8z"/>
<path fill="#7f24b6" d="M1180 418l-4-8 10-8 4 8z"/>
<path fill="#6f209f" d="M1072 340l-6-5-4 21 5 5z"/>
<path fill="#a830f1" d="M648 694l4 7 18-4-4-6z"/>
<path fill="#a42fea" d="M999 528l-1-3-12-8 1 2z"/>
<path fill="#8225ba" d="M840 613l1 2-11-11-2-2z"/>
<path fill="#7e24b5" d="M872 662l2 1-4-14-2-1z"/>
<path fill="#8827c4" d="M847 704l4 1 12-8-4-1z"/>
<path fill="#9e2de2" d="M938 453l-3-1 0-13 3 1z"/>
<path fill="#7e24b5" d="M875 676l3 1 0-13-4-1z"/>
<path fill="#a630ee" d="M985 515l-2-2-11-11 1 2z"/>
<path fill="#a02ee5" d="M945 468l-3-1-4-14 3 1z"/>
<path fill="#7c24b2" d="M1118 296l-8-6-12 0 8 5z"/>
<path fill="#ad32f9" d="M970 415l-4-2 17-6 4 2z"/>
<path fill="#8a28c6" d="M826 707l5 2 16-5-4-2z"/>
<path fill="#7f24b6" d="M826 597l1 3-13-9-1-2z"/>
<path fill="#aa31f4" d="M954 420l-4-1 12-8 4 2z"/>
<path fill="#af32fb" d="M1098 422l-4-5 24-1 4 6z"/>
<path fill="#a931f3" d="M691 695l5 6 23-1-4-5z"/>
<path fill="#7b23b0" d="M676 811l7 6-12-8-8-6z"/>
<path fill="#a22fe9" d="M1039 542l0-4-12 3 0 3z"/>
<path fill="#8526be" d="M863 697l4 1 8-9-4-1z"/>
<path fill="#9f2de3" d="M938 440l-3-1 3-11 4 1z"/>
<path fill="#a02ee6" d="M970 500l-2-2-9-12 2 1z"/>
<path fill="#8025b7" d="M1150 315l-7-7-12-8 7 7z"/>
<path fill="#a32fea" d="M1014 539l-1-3-13-6 1 3z"/>
<path fill="#8b28c7" d="M802 708l5 3 19-4-4-2z"/>
<path fill="#6e209e" d="M746 756l6 4-4 22-7-5z"/>
<path fill="#7b23b1" d="M708 822l7 5-12 0-7-5z"/>
<path fill="#a32fea" d="M1027 544l0-3-13-2 0 3z"/>
<path fill="#9c2de0" d="M1147 427l-4-7 18-4 4 7z"/>
<path fill="#a22fe9" d="M957 484l-2-1-7-14 2 2z"/>
<path fill="#a42feb" d="M623 708l4 7 10-8-4-7z"/>
<path fill="#a730ef" d="M633 700l4 7 15-6-4-7z"/>
<path fill="#9d2de0" d="M1059 520l-1-4-9 11 1 4z"/>
<path fill="#7a23af" d="M1190 410l-4-8 5-10 5 8z"/>
<path fill="#7e24b5" d="M865 647l3 1-7-13-3-1z"/>
<path fill="#912ad0" d="M646 785l6 7-10-13-6-7z"/>
<path fill="#7b23b1" d="M854 631l2 1-10-12-2-2z"/>
<path fill="#9a2cdd" d="M1065 501l-1-5-7 16 1 4z"/>
<path fill="#7b23b0" d="M773 579l1 3-10 7-1-4z"/>
<path fill="#7f24b5" d="M798 578l1 3-13-2-1-3z"/>
<path fill="#8b28c7" d="M775 707l5 3 22-2-4-3z"/>
<path fill="#a02ee5" d="M1050 536l0-5-11 7 0 4z"/>
<path fill="#7f24b6" d="M812 586l1 3-13-5-1-3z"/>
<path fill="#aa31f3" d="M719 700l4 5 24-1-4-4z"/>
<path fill="#7421a6" d="M747 676l3 4-3 24-4-4zM748 649l3 4-4 23-4-5z"/>
<path fill="#9d2de1" d="M624 751l5 8-3-13-5-8z"/>
<path fill="#8b28c7" d="M747 704l5 4 23-1-4-4z"/>
<path fill="#a32fea" d="M1000 530l-1-2-12-9 0 3z"/>
<path fill="#8225ba" d="M841 615l2 1-12-10-1-2z"/>
<path fill="#7f24b5" d="M875 689l4 0 3-12-4 0z"/>
<path fill="#7e24b5" d="M874 663l4 1-5-14-3-1z"/>
<path fill="#7421a6" d="M751 625l2 4-5 20-3-4z"/>
<path fill="#a630ee" d="M986 517l-1-2-12-11 1 2z"/>
<path fill="#992cdb" d="M1070 477l-2-5-6 20 2 4z"/>
<path fill="#7e24b4" d="M785 576l1 3-12 3-1-3z"/>
<path fill="#7f24b6" d="M827 600l1 2-13-8-1-3z"/>
<path fill="#6f209f" d="M1078 322l-7-5-5 18 6 5z"/>
<path fill="#a12ee7" d="M948 469l-3-1-4-14 3 2z"/>
<path fill="#7722ab" d="M764 589l1 4-9 12-1-4z"/>
<path fill="#a02ee5" d="M941 454l-3-1 0-13 3 1z"/>
<path fill="#6e209e" d="M747 704l5 4-3 25-5-5z"/>
<path fill="#7e24b5" d="M878 677l4 0-1-13-3 0z"/>
<path fill="#7321a5" d="M1073 366l-6-5-3 23 5 5z"/>
<path fill="#7521a7" d="M756 605l2 4-7 16-2-4z"/>
<path fill="#7a23af" d="M1106 295l-8-5-10 4 7 6z"/>
<path fill="#a730ef" d="M945 430l-3-1 8-10 4 1z"/>
<path fill="#a02ee6" d="M972 502l-2-2-9-13 1 2z"/>
<path fill="#a32fe9" d="M1014 542l0-3-13-6 0 3z"/>
<path fill="#a22ee8" d="M1040 546l-1-4-12 2 1 4z"/>
<path fill="#a32fe9" d="M959 486l-2-2-7-13 2 1z"/>
<path fill="#ad31f7" d="M1125 428l-3-6 21-2 4 7z"/>
<path fill="#8927c4" d="M851 705l5 1 11-8-4-1z"/>
<path fill="#992cdb" d="M1072 451l-3-5-4 22 3 4z"/>
<path fill="#a32fe9" d="M1028 548l-1-4-13-2 1 3z"/>
<path fill="#a12ee6" d="M941 441l-3-1 4-11 3 1z"/>
<path fill="#8526be" d="M867 698l4 1 8-10-4 0z"/>
<path fill="#7822ac" d="M1189 367l-5-8-7-14 6 8z"/>
<path fill="#7e24b5" d="M868 648l2 1-7-13-2-1z"/>
<path fill="#b032fb" d="M1019 415l-4-4 23-1 4 3z"/>
<path fill="#7b23b1" d="M856 632l2 2-9-13-3-1z"/>
<path fill="#ac31f6" d="M957 422l-3-2 12-7 4 2z"/>
<path fill="#af32fb" d="M1045 418l-3-5 24 0 4 4z"/>
<path fill="#7120a2" d="M1085 309l-6-6-8 14 7 5z"/>
<path fill="#7923ad" d="M1073 394l-4-5-3 24 4 4z"/>
<path fill="#af32fb" d="M995 414l-4-2 20-4 4 3z"/>
<path fill="#7622a8" d="M1095 300l-7-6-9 9 6 6z"/>
<path fill="#7822ac" d="M1196 400l-5-8 1-12 5 8z"/>
<path fill="#8a28c6" d="M831 709l4 2 16-6-4-1z"/>
<path fill="#992cdb" d="M1073 422l-3-5-4 24 3 5z"/>
<path fill="#7f24b6" d="M813 589l1 2-13-5-1-2z"/>
<path fill="#ae32fa" d="M974 417l-4-2 17-6 4 3z"/>
<path fill="#a930f2" d="M670 697l5 7 21-3-5-6z"/>
<path fill="#7f24b6" d="M799 581l1 3-13-2-1-3z"/>
<path fill="#6e209e" d="M749 733l5 4-2 23-6-4z"/>
<path fill="#a32fe9" d="M1001 533l-1-3-13-8 1 2z"/>
<path fill="#7722aa" d="M843 616l1 2-11-11-2-1z"/>
<path fill="#a52fed" d="M987 519l-1-2-12-11 1 2z"/>
<path fill="#7e24b5" d="M878 664l3 0-5-14-3 0z"/>
<path fill="#7120a1" d="M742 800l7 4-7 14-7-5z"/>
<path fill="#9d2de1" d="M1059 525l0-5-9 11 0 5z"/>
<path fill="#a02ee5" d="M1050 540l0-4-11 6 1 4z"/>
<path fill="#af32fb" d="M1073 422l-3-5 24 0 4 5z"/>
<path fill="#7c23b1" d="M696 822l7 5-12-4-8-6z"/>
<path fill="#7b23b0" d="M774 582l1 4-10 7-1-4z"/>
<path fill="#8426bd" d="M1168 333l-6-8-12-10 6 7z"/>
<path fill="#8025b7" d="M828 602l2 2-13-8-2-2z"/>
<path fill="#7522a8" d="M735 813l7 5-8 9-8-4z"/>
<path fill="#a22fe9" d="M950 471l-2-2-4-13 2 1z"/>
<path fill="#a12ee7" d="M944 456l-3-2 0-13 3 2z"/>
<path fill="#8025b8" d="M1138 307l-7-7-13-4 7 6z"/>
<path fill="#8b28c7" d="M807 711l5 2 19-4-5-2z"/>
<path fill="#aa31f4" d="M973 504l-1-2-10-13 2 2z"/>
<path fill="#7e24b4" d="M786 579l1 3-12 4-1-4z"/>
<path fill="#7b23b0" d="M663 803l8 6-12-11-7-6z"/>
<path fill="#a22ee8" d="M1015 545l-1-3-13-6 0 3z"/>
<path fill="#9a2cdd" d="M1066 506l-1-5-7 15 1 4z"/>
<path fill="#6e209e" d="M748 782l6 4-5 18-7-4z"/>
<path fill="#9d2de1" d="M621 738l5 8 1-13-5-7z"/>
<path fill="#a32fea" d="M961 487l-2-1-7-14 2 2z"/>
<path fill="#7e24b5" d="M870 649l3 1-7-14-3 0z"/>
<path fill="#a830f1" d="M949 431l-4-1 9-10 3 2z"/>
<path fill="#7b23b1" d="M858 634l3 1-10-13-2-1z"/>
<path fill="#7722ab" d="M765 593l1 4-8 12-2-4z"/>
<path fill="#a22ee8" d="M944 443l-3-2 4-11 4 1z"/>
<path fill="#9d2de1" d="M636 772l6 7-6-13-7-7z"/>
<path fill="#8025b7" d="M814 591l1 3-13-5-1-3z"/>
<path fill="#8b28c7" d="M780 710l5 3 22-2-5-3z"/>
<path fill="#7923ae" d="M726 823l8 4-11 5-8-5z"/>
<path fill="#a22ee8" d="M1001 536l0-3-13-9 0 3z"/>
<path fill="#7521a7" d="M758 609l2 4-7 16-2-4z"/>
<path fill="#af32fa" d="M1101 428l-3-6 24 0 3 6z"/>
<path fill="#7321a5" d="M1077 345l-5-5-5 21 6 5z"/>
<path fill="#7722aa" d="M844 618l2 2-11-11-2-2z"/>
<path fill="#aa31f3" d="M696 701l4 5 23-1-4-5z"/>
<path fill="#8927c4" d="M856 706l4 1 11-8-4-1z"/>
<path fill="#992cdb" d="M1071 482l-1-5-6 19 1 5z"/>
<path fill="#7421a6" d="M753 629l3 4-5 20-3-4z"/>
<path fill="#a52fec" d="M987 522l0-3-12-11 1 3z"/>
<path fill="#8025b7" d="M800 584l1 2-13-1-1-3z"/>
<path fill="#7421a6" d="M751 653l3 4-4 23-3-4z"/>
<path fill="#a830f1" d="M652 701l5 7 18-4-5-7z"/>
<path fill="#8025b8" d="M830 604l1 2-12-8-2-2z"/>
<path fill="#7421a6" d="M750 680l4 4-2 24-5-4z"/>
<path fill="#8827c3" d="M1168 431l-3-8 15-5 3 8z"/>
<path fill="#ad31f7" d="M961 424l-4-2 13-7 4 2z"/>
<path fill="#a32fe9" d="M952 472l-2-1-4-14 3 2z"/>
<path fill="#8b28c7" d="M752 708l5 4 23-2-5-3z"/>
<path fill="#aa31f3" d="M974 506l-1-2-9-13 1 2z"/>
<path fill="#6e209e" d="M752 760l6 4-4 22-6-4z"/>
<path fill="#aa31f4" d="M723 705l5 4 24-1-5-4z"/>
<path fill="#a22fe9" d="M946 457l-2-1 0-13 3 1z"/>
<path fill="#7f24b6" d="M1183 426l-3-8 10-8 4 8z"/>
<path fill="#7822ac" d="M1197 388l-5-8-3-13 5 8z"/>
<path fill="#8a28c6" d="M835 711l5 1 16-6-5-1z"/>
<path fill="#7b23b0" d="M775 586l2 3-11 8-1-4z"/>
<path fill="#a32fea" d="M962 489l-1-2-7-13 1 2z"/>
<path fill="#9d2de1" d="M1059 530l0-5-9 11 0 4z"/>
<path fill="#7e24b5" d="M873 650l3 0-7-13-3-1z"/>
<path fill="#9f2ee4" d="M622 726l5 7 6-10-6-8z"/>
<path fill="#af32fa" d="M977 419l-3-2 17-5 4 2z"/>
<path fill="#9c2ddf" d="M1150 434l-3-7 18-4 3 8z"/>
<path fill="#7e24b5" d="M787 582l1 3-11 4-2-3z"/>
<path fill="#7b23b1" d="M861 635l2 1-10-13-2-1z"/>
<path fill="#992cdb" d="M1074 456l-2-5-4 21 2 5z"/>
<path fill="#af32fb" d="M998 418l-3-4 20-3 4 4z"/>
<path fill="#6e209e" d="M752 708l5 4-3 25-5-4z"/>
<path fill="#8426bd" d="M1183 353l-6-8-9-12 5 8z"/>
<path fill="#af32fb" d="M1022 419l-3-4 23-2 3 5z"/>
<path fill="#8025b8" d="M1125 302l-7-6-12-1 6 7z"/>
<path fill="#a730ef" d="M637 707l5 7 15-6-5-7z"/>
<path fill="#a12ee7" d="M1001 539l0-3-13-9 0 3z"/>
<path fill="#7722aa" d="M846 620l3 1-12-11-2-1z"/>
<path fill="#8025b8" d="M815 594l2 2-13-5-2-2z"/>
<path fill="#a42feb" d="M988 524l-1-2-11-11 0 2z"/>
<path fill="#7923ad" d="M1077 371l-4-5-4 23 4 5z"/>
<path fill="#a930f2" d="M951 433l-2-2 8-9 4 2z"/>
<path fill="#a42feb" d="M627 715l6 8 9-9-5-7z"/>
<path fill="#a32fea" d="M947 444l-3-1 5-12 2 2z"/>
<path fill="#af32fb" d="M1048 422l-3-4 25-1 3 5z"/>
<path fill="#9b2cde" d="M1067 511l-1-5-7 14 0 5z"/>
<path fill="#7b23b1" d="M683 817l8 6-12-8-8-6z"/>
<path fill="#992cdb" d="M1076 428l-3-6-4 24 3 5z"/>
<path fill="#8125b8" d="M831 606l2 1-12-8-2-1z"/>
<path fill="#8025b7" d="M801 586l1 3-12-1-2-3z"/>
<path fill="#7c23b1" d="M715 827l8 5-11 0-9-5z"/>
<path fill="#7a23af" d="M1194 418l-4-8 6-10 3 9z"/>
<path fill="#8b28c7" d="M812 713l5 2 18-4-4-2z"/>
<path fill="#7722ab" d="M766 597l2 3-8 13-2-4z"/>
<path fill="#8526be" d="M1156 322l-6-7-12-8 6 7z"/>
<path fill="#7321a5" d="M1084 328l-6-6-6 18 5 5z"/>
<path fill="#a930f2" d="M975 508l-1-2-9-13 1 3z"/>
<path fill="#7e24b5" d="M1077 399l-4-5-3 23 3 5z"/>
<path fill="#a32fea" d="M954 474l-2-2-3-13 2 2z"/>
<path fill="#ac31f7" d="M1128 435l-3-7 22-1 3 7z"/>
<path fill="#a32fea" d="M964 491l-2-2-7-13 2 2z"/>
<path fill="#7b23b1" d="M863 636l3 0-10-12-3-1z"/>
<path fill="#a32fe9" d="M949 459l-3-2 1-13 2 2z"/>
<path fill="#af32fa" d="M1076 428l-3-6 25 0 3 6z"/>
<path fill="#912ad0" d="M652 792l7 6-9-12-8-7z"/>
<path fill="#7421a7" d="M760 613l2 3-6 17-3-4z"/>
<path fill="#6e209e" d="M754 737l6 3-2 24-6-4z"/>
<path fill="#9d2de1" d="M629 759l7 7-4-13-6-7z"/>
<path fill="#ad32f8" d="M964 426l-3-2 13-7 3 2z"/>
<path fill="#a931f3" d="M675 704l5 5 20-3-4-5z"/>
<path fill="#7e24b5" d="M1112 302l-6-7-11 5 6 6zM788 585l2 3-12 4-1-3z"/>
<path fill="#992cdb" d="M1072 488l-1-6-6 19 1 5z"/>
<path fill="#7b23b0" d="M777 589l1 3-10 8-2-3z"/>
<path fill="#a42feb" d="M988 527l0-3-12-11 1 3z"/>
<path fill="#7722aa" d="M849 621l2 1-11-11-3-1z"/>
<path fill="#7421a6" d="M756 633l3 3-5 21-3-4z"/>
<path fill="#8b28c8" d="M785 713l5 3 22-3-5-2z"/>
<path fill="#8125b8" d="M817 596l2 2-13-5-2-2z"/>
<path fill="#7622a9" d="M1092 315l-7-6-7 13 6 6z"/>
<path fill="#8b28c6" d="M840 712l6 1 14-6-4-1z"/>
<path fill="#8125b9" d="M833 607l2 2-12-8-2-2z"/>
<path fill="#7421a6" d="M754 657l4 3-4 24-4-4z"/>
<path fill="#a930f2" d="M976 511l-1-3-9-12 0 2z"/>
<path fill="#7a23af" d="M1101 306l-6-6-10 9 7 6z"/>
<path fill="#af32fa" d="M980 422l-3-3 18-5 3 4z"/>
<path fill="#a42feb" d="M949 446l-2-2 4-11 3 2z"/>
<path fill="#8025b8" d="M802 589l2 2-12-1-2-2z"/>
<path fill="#7120a1" d="M749 804l8 3-6 15-9-4z"/>
<path fill="#aa31f3" d="M954 435l-3-2 10-9 3 2z"/>
<path fill="#a32fea" d="M955 476l-1-2-3-13 1 2z"/>
<path fill="#7822ac" d="M1194 375l-5-8-6-14 5 9z"/>
<path fill="#7b23b1" d="M866 636l3 1-10-13-3 0z"/>
<path fill="#7822ac" d="M1199 409l-3-9 1-12 4 9z"/>
<path fill="#a32fea" d="M965 493l-1-2-7-13 1 2z"/>
<path fill="#7421a6" d="M754 684l5 3-2 25-5-4z"/>
<path fill="#6e209e" d="M754 786l8 3-5 18-8-3z"/>
<path fill="#7522a8" d="M742 818l9 4-9 9-8-4z"/>
<path fill="#8b28c7" d="M757 712l5 3 23-2-5-3z"/>
<path fill="#af32fb" d="M1001 421l-3-3 21-3 3 4z"/>
<path fill="#ae32fa" d="M1104 435l-3-7 24 0 3 7z"/>
<path fill="#9b2cde" d="M1067 516l0-5-8 14 0 5z"/>
<path fill="#992cdb" d="M1076 462l-2-6-4 21 1 5z"/>
<path fill="#aa31f3" d="M700 706l6 5 22-2-5-4z"/>
<path fill="#a32fea" d="M951 461l-2-2 0-13 2 2z"/>
<path fill="#7722aa" d="M768 600l2 3-8 13-2-3z"/>
<path fill="#a32fea" d="M988 530l0-3-11-11 0 3z"/>
<path fill="#7722aa" d="M851 622l2 1-11-11-2-1z"/>
<path fill="#7c24b2" d="M703 827l9 5-13-4-8-5z"/>
<path fill="#7923ad" d="M1082 351l-5-6-4 21 4 5z"/>
<path fill="#af32fb" d="M1025 423l-3-4 23-1 3 4z"/>
<path fill="#aa31f4" d="M728 709l6 4 23-1-5-4z"/>
<path fill="#8827c2" d="M1173 341l-5-8-12-11 6 8z"/>
<path fill="#8b28c7" d="M817 715l5 2 18-5-5-1z"/>
<path fill="#8125b9" d="M819 598l2 1-13-4-2-2z"/>
<path fill="#7f24b5" d="M790 588l2 2-12 4-2-2z"/>
<path fill="#8526bf" d="M1144 314l-6-7-13-5 6 7z"/>
<path fill="#7421a6" d="M835 609l2 1-12-8-2-1z"/>
<path fill="#a830f1" d="M976 513l0-2-10-13 1 3z"/>
<path fill="#9d2de1" d="M626 746l6 7 1-13-6-7z"/>
<path fill="#6e209e" d="M757 712l5 3-2 25-6-3z"/>
<path fill="#a930f2" d="M657 708l5 6 18-5-5-5z"/>
<path fill="#7b23b0" d="M778 592l2 2-10 9-2-3zM671 809l8 6-12-11-8-6z"/>
<path fill="#6e209e" d="M758 764l7 3-3 22-8-3z"/>
<path fill="#ad32f8" d="M966 429l-2-3 13-7 3 3z"/>
<path fill="#af32fa" d="M1051 427l-3-5 25 0 3 6z"/>
<path fill="#7421a6" d="M762 616l3 3-6 17-3-3z"/>
<path fill="#992cdb" d="M1079 434l-3-6-4 23 2 5z"/>
<path fill="#7a23ae" d="M734 827l8 4-10 5-9-4z"/>
<path fill="#8125b8" d="M804 591l2 2-12 0-2-3z"/>
<path fill="#a32fea" d="M957 478l-2-2-3-13 2 2z"/>
<path fill="#8827c2" d="M1171 439l-3-8 15-5 3 9z"/>
<path fill="#ab31f4" d="M966 496l-1-3-7-13 1 3z"/>
<path fill="#a42feb" d="M951 448l-2-2 5-11 3 3z"/>
<path fill="#9c2ddf" d="M1152 442l-2-8 18-3 3 8z"/>
<path fill="#9a2cdc" d="M1073 494l-1-6-6 18 1 5z"/>
<path fill="#7e24b5" d="M1081 377l-4-6-4 23 4 5z"/>
<path fill="#9d2de1" d="M642 779l8 7-7-14-7-6z"/>
<path fill="#7722aa" d="M853 623l3 1-11-11-3-1z"/>
<path fill="#aa31f3" d="M957 438l-3-3 10-9 2 3z"/>
<path fill="#7f24b6" d="M1186 435l-3-9 11-8 2 9z"/>
<path fill="#8426be" d="M1080 405l-3-6-4 23 3 6z"/>
<path fill="#7421a6" d="M759 636l3 3-4 21-4-3z"/>
<path fill="#a32fea" d="M952 463l-1-2 0-13 2 3z"/>
<path fill="#ae32fa" d="M983 425l-3-3 18-4 3 3z"/>
<path fill="#8b28c8" d="M790 716l6 2 21-3-5-2z"/>
<path fill="#a730f0" d="M977 516l-1-3-9-12 0 3z"/>
<path fill="#ae32fa" d="M1079 434l-3-6 25 0 3 7z"/>
<path fill="#8125b9" d="M821 599l2 2-13-4-2-2z"/>
<path fill="#7421a6" d="M837 610l3 1-13-8-2-1z"/>
<path fill="#9f2de3" d="M627 733l6 7 5-11-5-6z"/>
<path fill="#a730f0" d="M642 714l6 7 14-7-5-6z"/>
<path fill="#7822ac" d="M1201 397l-4-9-3-13 4 10z"/>
<path fill="#7421a6" d="M758 660l4 4-3 23-5-3z"/>
<path fill="#ac31f6" d="M1130 442l-2-7 22-1 2 8z"/>
<path fill="#7722aa" d="M770 603l3 3-8 13-3-3z"/>
<path fill="#7f24b6" d="M792 590l2 3-12 4-2-3z"/>
<path fill="#6e209e" d="M760 740l7 3-2 24-7-3z"/>
<path fill="#7923ad" d="M1089 334l-5-6-7 17 5 6z"/>
<path fill="#a42feb" d="M633 723l5 6 10-8-6-7z"/>
<path fill="#aa31f4" d="M966 498l0-2-7-13 1 3z"/>
<path fill="#a32fea" d="M958 480l-1-2-3-13 1 3z"/>
<path fill="#af32fa" d="M1003 425l-2-4 21-2 3 4z"/>
<path fill="#8526bf" d="M1131 309l-6-7-13 0 6 7z"/>
<path fill="#8125b9" d="M806 593l2 2-12 0-2-2z"/>
<path fill="#8526be" d="M1188 362l-5-9-10-12 5 9z"/>
<path fill="#7b23b0" d="M780 594l2 3-9 9-3-3z"/>
<path fill="#7722aa" d="M856 624l3 0-11-11-3 0z"/>
<path fill="#7b23b0" d="M1196 427l-2-9 5-9 3 9z"/>
<path fill="#992cdb" d="M1077 468l-1-6-5 20 1 6z"/>
<path fill="#aa31f3" d="M680 709l5 5 21-3-6-5z"/>
<path fill="#7c24b2" d="M723 832l9 4-11 0-9-4z"/>
<path fill="#a52fec" d="M953 451l-2-3 6-10 2 2z"/>
<path fill="#8b28c8" d="M822 717l6 1 18-5-6-1z"/>
<path fill="#7421a6" d="M759 687l5 3-2 25-5-3z"/>
<path fill="#ad32f8" d="M969 432l-3-3 14-7 3 3z"/>
<path fill="#8b28c8" d="M762 715l6 3 22-2-5-3z"/>
<path fill="#6e209e" d="M691 823l8 5-12-8-8-5z"/>
<path fill="#a730ef" d="M977 519l0-3-10-12 0 3z"/>
<path fill="#a32fea" d="M954 465l-2-2 1-12 2 2z"/>
<path fill="#af32fa" d="M1027 427l-2-4 23-1 3 5z"/>
<path fill="#8a28c6" d="M1162 330l-6-8-12-8 5 8z"/>
<path fill="#7421a6" d="M840 611l2 1-12-8-3-1zM765 619l3 3-6 17-3-3z"/>
<path fill="#aa31f3" d="M959 440l-2-2 9-9 3 3z"/>
<path fill="#8225ba" d="M823 601l2 1-12-4-3-1z"/>
<path fill="#ae32f9" d="M1106 442l-2-7 24 0 2 7z"/>
<path fill="#7b23b1" d="M1097 321l-5-6-8 13 5 6z"/>
<path fill="#8326bc" d="M1118 309l-6-7-11 4 6 6z"/>
<path fill="#ab31f4" d="M734 713l5 4 23-2-5-3z"/>
<path fill="#aa31f4" d="M706 711l5 5 23-3-6-4z"/>
<path fill="#a931f3" d="M967 501l-1-3-6-12 1 2z"/>
<path fill="#9a2cdc" d="M1073 500l0-6-6 17 0 5z"/>
<path fill="#912ad0" d="M659 798l8 6-9-12-8-6z"/>
<path fill="#7020a1" d="M757 807l8 3-6 15-8-3z"/>
<path fill="#9d2de1" d="M636 766l7 6-4-13-7-6z"/>
<path fill="#a32fea" d="M959 483l-1-3-3-12 1 2z"/>
<path fill="#6e209e" d="M762 789l8 3-5 18-8-3z"/>
<path fill="#7f24b6" d="M794 593l2 2-11 4-3-2z"/>
<path fill="#ae32fa" d="M1053 433l-2-6 25 1 3 6z"/>
<path fill="#6e209e" d="M762 715l6 3-1 25-7-3z"/>
<path fill="#7f24b6" d="M1107 312l-6-6-9 9 5 6z"/>
<path fill="#992cdb" d="M1080 440l-1-6-5 22 2 6z"/>
<path fill="#8125b9" d="M808 595l2 2-12 0-2-2z"/>
<path fill="#ae32f9" d="M985 429l-2-4 18-4 2 4z"/>
<path fill="#7421a6" d="M762 639l4 3-4 22-4-4z"/>
<path fill="#7e24b5" d="M1087 357l-5-6-5 20 4 6z"/>
<path fill="#7722aa" d="M773 606l3 2-8 14-3-3z"/>
<path fill="#7522a8" d="M751 822l8 3-8 10-9-4z"/>
<path fill="#8c28c8" d="M796 718l6 1 20-2-5-2z"/>
<path fill="#7b23b0" d="M782 597l3 2-9 9-3-2z"/>
<path fill="#7421a6" d="M842 612l3 1-12-8-3-1z"/>
<path fill="#a52fec" d="M955 453l-2-2 6-11 2 3z"/>
<path fill="#7822ac" d="M1202 418l-3-9 2-12 3 10z"/>
<path fill="#6e209e" d="M765 767l7 3-2 22-8-3z"/>
<path fill="#a32fea" d="M955 468l-1-3 1-12 1 3z"/>
<path fill="#8225ba" d="M825 602l2 1-12-4-2-1z"/>
<path fill="#8025b7" d="M1198 385l-4-10-6-13 3 10z"/>
<path fill="#8a27c5" d="M1083 411l-3-6-4 23 3 6z"/>
<path fill="#7421a6" d="M762 664l4 2-2 24-5-3z"/>
<path fill="#a930f2" d="M662 714l6 5 17-5-5-5zM967 504l0-3-6-13 0 3z"/>
<path fill="#8426be" d="M1085 383l-4-6-4 22 3 6z"/>
<path fill="#ae32fa" d="M1006 429l-3-4 22-2 2 4z"/>
<path fill="#ad31f7" d="M971 435l-2-3 14-7 2 4z"/>
<path fill="#aa31f3" d="M961 443l-2-3 10-8 2 3z"/>
<path fill="#7c24b2" d="M712 832l9 4-12-4-10-4z"/>
<path fill="#ae32f9" d="M1080 440l-1-6 25 1 2 7z"/>
<path fill="#a32fea" d="M960 486l-1-3-3-13 1 3z"/>
<path fill="#8727c2" d="M1173 448l-2-9 15-4 2 9z"/>
<path fill="#9b2cde" d="M1154 450l-2-8 19-3 2 9z"/>
<path fill="#992cdb" d="M1078 474l-1-6-5 20 1 6z"/>
<path fill="#7421a6" d="M768 622l3 2-5 18-4-3z"/>
<path fill="#8b28c8" d="M1178 350l-5-9-11-11 5 9z"/>
<path fill="#7f24b6" d="M796 595l2 2-10 4-3-2z"/>
<path fill="#8125b9" d="M810 597l3 1-12 0-3-1z"/>
<path fill="#8b28c7" d="M1149 322l-5-8-13-5 5 8z"/>
<path fill="#9d2de1" d="M632 753l7 6 1-13-7-6z"/>
<path fill="#7a23ae" d="M742 831l9 4-9 5-10-4z"/>
<path fill="#7421a6" d="M845 613l3 0-12-7-3-1z"/>
<path fill="#6e209e" d="M767 743l7 3-2 24-7-3z"/>
<path fill="#7b23b0" d="M679 815l8 5-11-11-9-5z"/>
<path fill="#7421a6" d="M764 690l5 2-1 26-6-3z"/>
<path fill="#ae32fa" d="M1029 432l-2-5 24 0 2 6z"/>
<path fill="#ab31f6" d="M1132 450l-2-8 22 0 2 8z"/>
<path fill="#8c28c8" d="M768 718l6 2 22-2-6-2z"/>
<path fill="#7f24b6" d="M1188 444l-2-9 10-8 2 10z"/>
<path fill="#8225bb" d="M827 603l3 1-12-4-3-1z"/>
<path fill="#a32fea" d="M956 470l-1-2 1-12 2 3z"/>
<path fill="#a52fec" d="M956 456l-1-3 6-10 1 3z"/>
<path fill="#a830f1" d="M967 507l0-3-6-13 0 3z"/>
<path fill="#7622aa" d="M776 608l3 2-8 14-3-2z"/>
<path fill="#7b23b0" d="M785 599l3 2-9 9-3-2z"/>
<path fill="#a730f0" d="M648 721l6 5 14-7-6-5z"/>
<path fill="#ae32f9" d="M987 432l-2-3 18-4 3 4z"/>
<path fill="#7f24b6" d="M1093 341l-4-7-7 17 5 6z"/>
<path fill="#9d2de1" d="M650 786l8 6-7-14-8-6z"/>
<path fill="#a830f0" d="M961 488l-1-2-3-13 1 3z"/>
<path fill="#7421a6" d="M766 642l4 3-4 21-4-2z"/>
<path fill="#aa31f3" d="M685 714l6 5 20-3-5-5z"/>
<path fill="#9f2de3" d="M633 740l7 6 5-11-7-6z"/>
<path fill="#ab31f5" d="M739 717l7 3 22-2-6-3z"/>
<path fill="#7822ac" d="M1204 407l-3-10-3-12 3 9z"/>
<path fill="#a42feb" d="M638 729l7 6 9-9-6-5z"/>
<path fill="#ae32f9" d="M1055 438l-2-5 26 1 1 6z"/>
<path fill="#992cdb" d="M1082 447l-2-7-4 22 1 6z"/>
<path fill="#aa31f3" d="M962 446l-1-3 10-8 1 3z"/>
<path fill="#ae32f9" d="M1107 449l-1-7 24 0 2 8z"/>
<path fill="#ad31f7" d="M972 438l-1-3 14-6 2 3z"/>
<path fill="#8225ba" d="M813 598l2 1-11 0-3-1z"/>
<path fill="#8c28c8" d="M802 719l7 2 19-3-6-1z"/>
<path fill="#7f24b6" d="M798 597l3 1-10 5-3-2z"/>
<path fill="#aa31f4" d="M711 716l7 3 21-2-5-4z"/>
<path fill="#6e209e" d="M768 718l6 2 0 26-7-3z"/>
<path fill="#7b23b0" d="M1198 437l-2-10 6-9 2 10z"/>
<path fill="#8b28c7" d="M1136 317l-5-8-13 0 6 7z"/>
<path fill="#7421a6" d="M830 604l3 1-12-4-3-1z"/>
<path fill="#ae32f9" d="M1007 433l-1-4 21-2 2 5z"/>
<path fill="#7c24b2" d="M732 836l10 4-11 0-10-4z"/>
<path fill="#a32fea" d="M957 473l-1-3 2-11 1 3z"/>
<path fill="#7421a6" d="M766 666l5 2-2 24-5-2z"/>
<path fill="#8626c0" d="M1191 372l-3-10-10-12 4 9z"/>
<path fill="#7421a6" d="M771 624l4 2-5 19-4-3z"/>
<path fill="#6e209e" d="M770 792l8 2-4 19-9-3z"/>
<path fill="#a52fed" d="M958 459l-2-3 6-10 1 3z"/>
<path fill="#a730ef" d="M961 491l0-3-3-12 0 3z"/>
<path fill="#8125b9" d="M1102 328l-5-7-8 13 4 7z"/>
<path fill="#7020a1" d="M765 810l9 3-5 14-10-2z"/>
<path fill="#6e209e" d="M699 828l10 4-12-8-10-4z"/>
<path fill="#8426be" d="M1090 364l-3-7-6 20 4 6z"/>
<path fill="#992cdb" d="M1078 481l0-7-5 20 0 6z"/>
<path fill="#8f29cc" d="M1085 418l-2-7-4 23 1 6z"/>
<path fill="#7b23b0" d="M788 601l3 2-9 9-3-2z"/>
<path fill="#6e209e" d="M772 770l8 2-2 22-8-2z"/>
<path fill="#8f29cd" d="M1167 339l-5-9-13-8 5 8z"/>
<path fill="#7622aa" d="M779 610l3 2-7 14-4-2z"/>
<path fill="#8927c4" d="M1124 316l-6-7-11 3 5 8z"/>
<path fill="#ae32f9" d="M1082 447l-2-7 26 2 1 7z"/>
<path fill="#8a27c5" d="M1087 390l-2-7-5 22 3 6z"/>
<path fill="#8225ba" d="M815 599l3 1-11 1-3-2z"/>
<path fill="#8526bf" d="M1112 320l-5-8-10 9 5 7z"/>
<path fill="#ae32f9" d="M989 436l-2-4 19-3 1 4zM1031 438l-2-6 24 1 2 5z"/>
<path fill="#7522a8" d="M759 825l10 2-8 10-10-2z"/>
<path fill="#7421a6" d="M833 605l3 1-12-4-3-1z"/>
<path fill="#9d2de1" d="M643 772l8 6-4-13-8-6z"/>
<path fill="#912ad0" d="M667 804l9 5-10-12-8-5z"/>
<path fill="#aa31f3" d="M963 449l-1-3 10-8 2 4z"/>
<path fill="#7421a6" d="M769 692l6 3-1 25-6-2z"/>
<path fill="#7f24b6" d="M801 598l3 1-10 5-3-1z"/>
<path fill="#8c28c8" d="M774 720l7 2 21-3-6-1z"/>
<path fill="#a930f2" d="M668 719l6 5 17-5-6-5z"/>
<path fill="#a32fea" d="M958 476l-1-3 2-11 0 3z"/>
<path fill="#ac31f7" d="M974 442l-2-4 15-6 2 4z"/>
<path fill="#7421a6" d="M770 645l4 2-3 21-5-2z"/>
<path fill="#a730ef" d="M961 494l0-3-3-12 0 4z"/>
<path fill="#9b2cde" d="M1155 459l-1-9 19-2 1 9z"/>
<path fill="#6e209e" d="M774 746l7 1-1 25-8-2z"/>
<path fill="#7822ac" d="M1204 428l-2-10 2-11 2 10z"/>
<path fill="#8727c2" d="M1174 457l-1-9 15-4 1 10z"/>
<path fill="#a52fed" d="M959 462l-1-3 5-10 2 3z"/>
<path fill="#ab31f5" d="M1132 458l0-8 22 0 1 9z"/>
<path fill="#7f24b6" d="M1201 394l-3-9-7-13 3 10z"/>
<path fill="#992cdb" d="M1083 454l-1-7-5 21 1 6z"/>
<path fill="#ae32f9" d="M1056 444l-1-6 25 2 2 7z"/>
<path fill="#7b23b0" d="M791 603l3 1-9 10-3-2z"/>
<path fill="#ae32f9" d="M1009 438l-2-5 22-1 2 6z"/>
<path fill="#8225ba" d="M818 600l3 1-11 0-3 0z"/>
<path fill="#7421a6" d="M775 626l4 2-5 19-4-2z"/>
<path fill="#7d24b2" d="M721 836l10 4-12-4-10-4z"/>
<path fill="#7a23af" d="M751 835l10 2-9 5-10-2z"/>
<path fill="#ab31f5" d="M746 720l7 2 21-2-6-2z"/>
<path fill="#7f24b6" d="M1189 454l-1-10 10-7 1 10z"/>
<path fill="#7421a6" d="M771 668l5 2-1 25-6-3z"/>
<path fill="#7622a9" d="M782 612l3 2-6 14-4-2z"/>
<path fill="#ad32f8" d="M1108 456l-1-7 25 1 0 8z"/>
<path fill="#6e209e" d="M774 720l7 2 0 25-7-1z"/>
<path fill="#7f25b7" d="M804 599l3 2-10 5-3-2z"/>
<path fill="#aa31f4" d="M691 719l7 4 20-4-7-3z"/>
<path fill="#9d2de1" d="M639 759l8 6 0-13-7-6z"/>
<path fill="#a32fea" d="M958 479l0-3 1-11 1 4z"/>
<path fill="#8526be" d="M1097 348l-4-7-6 16 3 7z"/>
<path fill="#9029ce" d="M1154 330l-5-8-13-5 5 8z"/>
<path fill="#aa31f3" d="M965 452l-2-3 11-7 1 3z"/>
<path fill="#8f29cd" d="M1182 359l-4-9-11-11 3 9z"/>
<path fill="#a830f0" d="M654 726l7 5 13-7-6-5z"/>
<path fill="#ab31f4" d="M718 719l7 3 21-2-7-3z"/>
<path fill="#ad32f8" d="M990 441l-1-5 18-3 2 5z"/>
<path fill="#7b23b0" d="M687 820l10 4-12-10-9-5z"/>
<path fill="#a62fed" d="M959 465l0-3 6-10 0 4z"/>
<path fill="#ac31f7" d="M975 445l-1-3 15-6 1 5z"/>
<path fill="#ae32f9" d="M1032 443l-1-5 24 0 1 6z"/>
<path fill="#922ad2" d="M1086 425l-1-7-5 22 2 7z"/>
<path fill="#8225bb" d="M821 601l3 1-10 0-4-1z"/>
<path fill="#9e2de3" d="M640 746l7 6 5-11-7-6z"/>
<path fill="#a42feb" d="M645 735l7 6 9-10-7-5z"/>
<path fill="#9d2de1" d="M658 792l8 5-7-14-8-5z"/>
<path fill="#7421a6" d="M774 647l5 1-3 22-5-2z"/>
<path fill="#ad32f8" d="M1083 454l-1-7 25 2 1 7z"/>
<path fill="#6e209e" d="M778 794l9 1-3 19-10-1z"/>
<path fill="#8c28c8" d="M781 722l7 1 21-2-7-2z"/>
<path fill="#7b23b0" d="M794 604l3 2-8 9-4-1z"/>
<path fill="#7d24b3" d="M1206 417l-2-10-3-13 2 11z"/>
<path fill="#7b23b0" d="M1199 447l-1-10 6-9 1 11z"/>
<path fill="#7421a6" d="M775 695l6 1 0 26-7-2z"/>
<path fill="#8a27c5" d="M1093 371l-3-7-5 19 2 7z"/>
<path fill="#6e209e" d="M780 772l8 1-1 22-9-1z"/>
<path fill="#a32fea" d="M958 483l0-4 2-10 0 3z"/>
<path fill="#7020a1" d="M774 813l10 1-5 15-10-2z"/>
<path fill="#8025b7" d="M807 601l3 0-9 5-4 0z"/>
<path fill="#8f29cc" d="M1090 398l-3-8-4 21 2 7z"/>
<path fill="#9029ce" d="M1141 325l-5-8-12-1 4 8z"/>
<path fill="#8727c2" d="M1106 336l-4-8-9 13 4 7z"/>
<path fill="#7421a6" d="M779 628l4 2-4 18-5-1z"/>
<path fill="#7c24b2" d="M742 840l10 2-11 0-10-2z"/>
<path fill="#7622a9" d="M785 614l4 1-6 15-4-2z"/>
<path fill="#aa31f3" d="M965 456l0-4 10-7 1 4z"/>
<path fill="#ad32f8" d="M1010 443l-1-5 22 0 1 5z"/>
<path fill="#6e209e" d="M781 747l8 2-1 24-8-1z"/>
<path fill="#a630ee" d="M960 469l-1-4 6-9 1 4z"/>
<path fill="#8627c1" d="M1194 382l-3-10-9-13 3 10z"/>
<path fill="#992cdb" d="M1083 461l0-7-5 20 0 7z"/>
<path fill="#ad32f8" d="M1057 451l-1-7 26 3 1 7z"/>
<path fill="#6e209e" d="M709 832l10 4-12-8-10-4z"/>
<path fill="#7522a8" d="M769 827l10 2-8 10-10-2z"/>
<path fill="#7421a6" d="M776 670l6 2-1 24-6-1z"/>
<path fill="#ad32f8" d="M991 445l-1-4 19-3 1 5z"/>
<path fill="#9b2cdd" d="M1155 468l0-9 19-2 0 10z"/>
<path fill="#ac31f6" d="M976 449l-1-4 15-4 1 4z"/>
<path fill="#8f29cc" d="M1128 324l-4-8-12 4 4 8z"/>
<path fill="#a931f3" d="M674 724l8 4 16-5-7-4z"/>
<path fill="#8b28c7" d="M1116 328l-4-8-10 8 4 8z"/>
<path fill="#ab31f5" d="M1133 467l-1-9 23 1 0 9z"/>
<path fill="#942bd5" d="M1170 348l-3-9-13-9 4 10z"/>
<path fill="#ab31f5" d="M753 722l7 2 21-2-7-2z"/>
<path fill="#8727c1" d="M1174 467l0-10 15-3 0 10z"/>
<path fill="#7b23b0" d="M797 606l4 0-8 10-4-1z"/>
<path fill="#6e209e" d="M781 722l7 1 1 26-8-2z"/>
<path fill="#8025b7" d="M810 601l4 1-9 5-4-1z"/>
<path fill="#9d2de1" d="M651 778l8 5-4-13-8-5z"/>
<path fill="#ad31f7" d="M1108 464l0-8 24 2 1 9z"/>
<path fill="#912ad0" d="M676 809l9 5-9-13-10-4z"/>
<path fill="#7822ac" d="M1205 439l-1-11 2-11 1 11z"/>
<path fill="#7421a6" d="M779 648l5 2-2 22-6-2z"/>
<path fill="#ad32f8" d="M1033 449l-1-6 24 1 1 7z"/>
<path fill="#aa31f3" d="M966 460l-1-4 11-7 0 5z"/>
<path fill="#a630ee" d="M960 472l0-3 6-9 0 4z"/>
<path fill="#aa31f4" d="M698 723l7 3 20-4-7-3z"/>
<path fill="#7622a9" d="M789 615l4 1-5 15-5-1z"/>
<path fill="#ab31f5" d="M725 722l7 3 21-3-7-2z"/>
<path fill="#7421a6" d="M783 630l5 1-4 19-5-2z"/>
<path fill="#7f24b6" d="M1189 464l0-10 10-7 1 11z"/>
<path fill="#942bd5" d="M1087 433l-1-8-4 22 1 7z"/>
<path fill="#8b28c7" d="M1101 356l-4-8-7 16 3 7z"/>
<path fill="#7a23af" d="M761 837l10 2-9 5-10-2z"/>
<path fill="#7f24b6" d="M1203 405l-2-11-7-12 2 10z"/>
<path fill="#7421a6" d="M781 696l7 1 0 26-7-1z"/>
<path fill="#ad31f7" d="M1083 461l0-7 25 2 0 8z"/>
<path fill="#ad32f8" d="M1010 448l0-5 22 0 1 6z"/>
<path fill="#6e209e" d="M731 840l10 2-12-4-10-2z"/>
<path fill="#a830f0" d="M661 731l8 5 13-8-8-4z"/>
<path fill="#ac31f6" d="M976 454l0-5 15-4 0 5z"/>
<path fill="#ad31f7" d="M991 450l0-5 19-2 0 5z"/>
<path fill="#7b23b0" d="M801 606l4 1-7 10-5-1z"/>
<path fill="#9d2de1" d="M647 765l8 5 1-13-9-5z"/>
<path fill="#952bd6" d="M1158 340l-4-10-13-5 3 10z"/>
<path fill="#922ad2" d="M1091 405l-1-7-5 20 1 7z"/>
<path fill="#922ad1" d="M1185 369l-3-10-12-11 3 10z"/>
<path fill="#7421a6" d="M782 672l6 1 0 24-7-1z"/>
<path fill="#8f29cc" d="M1096 379l-3-8-6 19 3 8z"/>
<path fill="#ad31f7" d="M1057 457l0-6 26 3 0 7z"/>
<path fill="#aa31f3" d="M966 464l0-4 10-6 1 4z"/>
<path fill="#7b23b0" d="M697 824l10 4-12-11-10-3z"/>
<path fill="#a42feb" d="M652 741l8 4 9-9-8-5z"/>
<path fill="#9e2de3" d="M647 752l9 5 4-12-8-4z"/>
<path fill="#7b23b1" d="M1200 458l-1-11 6-8 1 10z"/>
<path fill="#7622a9" d="M793 616l5 1-5 15-5-1z"/>
<path fill="#7421a6" d="M784 650l5 1-1 22-6-1z"/>
<path fill="#9d2de1" d="M666 797l10 4-8-14-9-4z"/>
<path fill="#ab31f5" d="M760 724l8 1 20-2-7-1z"/>
<path fill="#7c24b2" d="M1207 428l-1-11-3-12 1 11z"/>
<path fill="#8d28ca" d="M1109 344l-3-8-9 12 4 8z"/>
<path fill="#7421a6" d="M788 631l5 1-4 19-5-1z"/>
<path fill="#ad31f7" d="M1033 455l0-6 24 2 0 6z"/>
<path fill="#7d24b2" d="M752 842l10 2-10 0-11-2z"/>
<path fill="#ac31f6" d="M977 458l-1-4 15-4 1 5z"/>
<path fill="#952bd6" d="M1144 335l-3-10-13-1 4 9z"/>
<path fill="#a931f3" d="M682 728l7 4 16-6-7-3z"/>
<path fill="#ad31f7" d="M1011 454l-1-6 23 1 0 6z"/>
<path fill="#ac31f7" d="M992 455l-1-5 19-2 1 6z"/>
<path fill="#952bd5" d="M1087 441l0-8-4 21 0 7z"/>
<path fill="#9129cf" d="M1120 336l-4-8-10 8 3 8z"/>
<path fill="#8727c1" d="M1196 392l-2-10-9-13 2 11z"/>
<path fill="#6e209e" d="M719 836l10 2-12-7-10-3z"/>
<path fill="#ab31f5" d="M732 725l8 2 20-3-7-2z"/>
<path fill="#942ad4" d="M1132 333l-4-9-12 4 4 8z"/>
<path fill="#aa31f4" d="M705 726l8 3 19-4-7-3z"/>
<path fill="#992cdb" d="M1173 358l-3-10-12-8 3 10z"/>
<path fill="#7822ac" d="M1206 449l-1-10 2-11 0 11z"/>
<path fill="#9029ce" d="M1103 364l-2-8-8 15 3 8z"/>
<path fill="#9d2de1" d="M659 783l9 4-3-13-10-4z"/>
<path fill="#912ad0" d="M685 814l10 3-9-12-10-4z"/>
<path fill="#942bd5" d="M1092 413l-1-8-5 20 1 8z"/>
<path fill="#a830f0" d="M669 736l8 4 12-8-7-4z"/>
<path fill="#922ad2" d="M1097 387l-1-8-6 19 1 7z"/>
<path fill="#7e24b5" d="M1204 416l-1-11-7-13 2 11z"/>
<path fill="#6e209e" d="M741 842l11 2-12-4-11-2z"/>
<path fill="#9d2de1" d="M655 770l10 4-1-13-8-4z"/>
<path fill="#992cdc" d="M1161 350l-3-10-14-5 3 9z"/>
<path fill="#a42feb" d="M660 745l9 4 8-9-8-4z"/>
<path fill="#942ad4" d="M1187 380l-2-11-12-11 2 11z"/>
<path fill="#7b23b0" d="M707 828l10 3-11-11-11-3z"/>
<path fill="#9e2de3" d="M656 757l8 4 5-12-9-4z"/>
<path fill="#922ad1" d="M1112 353l-3-9-8 12 2 8z"/>
<path fill="#ab31f5" d="M740 727l8 1 20-3-8-1z"/>
<path fill="#aa31f3" d="M689 732l9 3 15-6-8-3z"/>
<path fill="#7c23b1" d="M1207 439l0-11-3-12 1 11z"/>
<path fill="#9d2de1" d="M676 801l10 4-8-14-10-4z"/>
<path fill="#ab31f4" d="M713 729l9 2 18-4-8-2z"/>
<path fill="#9a2cdc" d="M1147 344l-3-9-12-2 2 10z"/>
<path fill="#952bd6" d="M1122 345l-2-9-11 8 3 9z"/>
<path fill="#952bd5" d="M1093 422l-1-9-5 20 0 8z"/>
<path fill="#982cda" d="M1134 343l-2-10-12 3 2 9z"/>
<path fill="#6e209e" d="M729 838l11 2-12-7-11-2z"/>
<path fill="#8727c1" d="M1198 403l-2-11-9-12 1 11z"/>
<path fill="#942ad4" d="M1105 373l-2-9-7 15 1 8z"/>
<path fill="#952bd5" d="M1098 396l-1-9-6 18 1 8z"/>
<path fill="#9c2ddf" d="M1175 369l-2-11-12-8 2 10z"/>
<path fill="#a830f0" d="M677 740l9 3 12-8-9-3z"/>
<path fill="#9d2de1" d="M668 787l10 4-4-14-9-3z"/>
<path fill="#912ad0" d="M695 817l11 3-10-13-10-2z"/>
<path fill="#7e24b4" d="M1205 427l-1-11-6-13 0 12z"/>
<path fill="#9d2de1" d="M665 774l9 3 0-13-10-3z"/>
<path fill="#a42feb" d="M669 749l9 3 8-9-9-3z"/>
<path fill="#962bd7" d="M1114 362l-2-9-9 11 2 9z"/>
<path fill="#aa31f3" d="M698 735l9 2 15-6-9-2z"/>
<path fill="#9d2de0" d="M1163 360l-2-10-14-6 2 10z"/>
<path fill="#9e2de2" d="M664 761l10 3 4-12-9-3z"/>
<path fill="#ab31f5" d="M722 731l9 2 17-5-8-1z"/>
<path fill="#952bd5" d="M1188 391l-1-11-12-11 2 11z"/>
<path fill="#7b23b0" d="M717 831l11 2-11-11-11-2z"/>
<path fill="#9d2de1" d="M686 805l10 2-7-13-11-3z"/>
<path fill="#992cdb" d="M1124 355l-2-10-10 8 2 9z"/>
<path fill="#962bd7" d="M1106 382l-1-9-8 14 1 9z"/>
<path fill="#9d2de1" d="M1149 354l-2-10-13-1 2 10z"/>
<path fill="#962bd6" d="M1099 405l-1-9-6 17 1 9z"/>
<path fill="#9c2ddf" d="M1136 353l-2-10-12 2 2 10z"/>
<path fill="#8626c0" d="M1198 415l0-12-10-12 1 12z"/>
<path fill="#a830f1" d="M686 743l9 2 12-8-9-2z"/>
<path fill="#9d2de1" d="M1177 380l-2-11-12-9 1 11zM678 791l11 3-4-14-11-3z"/>
<path fill="#912ad0" d="M706 820l11 2-10-13-11-2z"/>
<path fill="#aa31f3" d="M707 737l9 2 15-6-9-2z"/>
<path fill="#982cda" d="M1115 371l-1-9-9 11 1 9z"/>
<path fill="#a42feb" d="M678 752l9 3 8-10-9-2z"/>
<path fill="#9d2de1" d="M674 777l11 3-1-13-10-3z"/>
<path fill="#9e2de2" d="M674 764l10 3 3-12-9-3z"/>
<path fill="#9e2de3" d="M1164 371l-1-11-14-6 2 11z"/>
<path fill="#952bd5" d="M1189 403l-1-12-11-11 0 11z"/>
<path fill="#972bd8" d="M1106 392l0-10-8 14 1 9z"/>
<path fill="#9b2cde" d="M1126 365l-2-10-10 7 1 9z"/>
<path fill="#9d2de1" d="M696 807l11 2-7-13-11-2z"/>
<path fill="#9f2de3" d="M1151 365l-2-11-13-1 2 10z"/>
<path fill="#9e2de2" d="M1138 363l-2-10-12 2 2 10z"/>
<path fill="#a830f1" d="M695 745l10 2 11-8-9-2z"/>
<path fill="#9d2de1" d="M1177 391l0-11-13-9 0 11zM689 794l11 2-4-14-11-2z"/>
<path fill="#992cdb" d="M1115 382l0-11-9 11 0 10z"/>
<path fill="#a42feb" d="M687 755l11 2 7-10-10-2z"/>
<path fill="#9d2de1" d="M685 780l11 2-1-13-11-2z"/>
<path fill="#9e2de2" d="M684 767l11 2 3-12-11-2zM1164 382l0-11-13-6 0 11z"/>
<path fill="#9b2ddf" d="M1126 376l0-11-11 6 0 11z"/>
<path fill="#9e2de3" d="M1151 376l0-11-13-2 0 11z"/>
<path fill="#9e2de2" d="M1138 374l0-11-12 2 0 11z"/>
</g>
<g fill="none" stroke-linecap="round" stroke-linejoin="round" stroke-width="1.2" opacity="0.13">
<path stroke="#e1de46" d="M1082.8 460.8l-0.1-5.4-0.5-5.4-0.8-5.1-1-4.9-1.4-4.7-0.8-2.3M993 393.2l-3.2 0.4-6.6 1.1-6.6 1.3-6.8 1.6-6.9 1.9-6.9 2.2-7.1 2.4-7.2 2.7-7.2 3-7.2 3.2-7.3 3.5-7.3 3.7-7.3 3.9-7.3 4.2-7.3 4.4-7.3 4.6-7.3 4.8-7.1 5-7.2 5.2-7 5.4-7 5.5-6.8 5.8-6.8 5.8-6.6 6.1-6.5 6.1-6.3 6.3-6.2 6.4-6 6.5-5.9 6.5-5.6 6.7-5.5 6.7-5.2 6.8-5.1 6.8-4.8 6.8-4.6 6.9-4.3 6.9-4.1 6.9-3.8 6.8-3.6 6.9-3.3 6.7-3 6.8-2.7 6.7-2.5 6.6-2.2 6.5-1.9 6.4-1.2 4.7"/>
<path stroke="#e2df4a" d="M1090.8 430.1l-1.6-3.4-2.3-4.2-2.7-4-2.9-3.8-3.3-3.5-3.5-3.3-3.8-3-4-2.7-4.4-2.4-4.6-2.1-4.8-1.9-5.1-1.5-5.3-1.3-5.6-1-5.7-0.7-6-0.4-6.1 0-6.4 0.2-6.5 0.5-6.7 0.8-6.8 1.1-7 1.4-7.1 1.7-7.2 2-7.3 2.2-7.4 2.6-7.4 2.8-7.6 3.1-7.6 3.3-7.6 3.7-7.7 3.8-7.6 4.2-7.7 4.3-7.6 4.6-7.7 4.9-7.5 5-7.6 5.3-7.4 5.4-7.4 5.7-7.3 5.8-7.2 6-7 6.1-7 6.3-6.8 6.5-6.6 6.5-6.5 6.7-6.3 6.8-6.1 6.9-5.9 7-5.7 7-5.5 7.1-5.3 7.1-5 7.2-4.8 7.2-4.6 7.2-4.2 7.2-4 7.2-3.8 7.1-3.4 7.1-3.2 7.1-2.9 7-2.6 6.9-2.2 6.8-2 6.7-1.7 6.6-1.3 6.5-1.1 6.4-0.7 6.2-0.4 6-0.1 5.9 0.2 5.7 0.6 5.5 0.9 5.4 1.1 5.1 1.5 4.9 1.8 4.7 2.1 4.4 2.5 4.2 2.7 4 3 3.7 3.3 3.4 3.6 3.2 3.8 2.9 3.1 2.1"/>
<path stroke="#e3e14e" d="M1096.1 416.3l-1.6-2-3.3-3.7-3.7-3.3-4-3.2-4.2-2.8-4.6-2.5-4.8-2.3-5-1.9-5.3-1.6-5.6-1.4-5.8-1-6-0.7-6.2-0.4-6.5-0.1-6.6 0.2-6.8 0.6-7 0.8-7.1 1.2-7.3 1.4-7.4 1.8-7.5 2.1-7.7 2.3-7.7 2.7-7.8 2.9-7.9 3.3-7.9 3.5-8 3.8-8 4-8 4.3-8 4.6-8 4.8-7.9 5-8 5.3-7.8 5.5-7.8 5.7-7.7 5.9-7.6 6.1-7.5 6.2-7.4 6.5-7.3 6.5-7.1 6.8-6.9 6.8-6.8 7-6.5 7.1-6.4 7.2-6.2 7.3-6 7.3-5.7 7.4-5.5 7.5-5.3 7.5-5 7.5-4.7 7.5-4.5 7.5-4.2 7.5-3.9 7.5-3.6 7.4-3.3 7.4-3 7.3-2.7 7.2-2.4 7.2-2.1 7-1.7 6.9-1.4 6.8-1.1 6.6-0.7 6.5-0.5 6.3-0.1 6.1 0.3 6 0.6 5.8 0.9 5.5 1.2 5.4 1.5 5.1 1.9 4.9 2.2 4.6 2.6 4.4 2.8 4.2 3.1 3.9 1.7 1.8"/>
<path stroke="#e4e252" d="M1100.1 406.4l-4.2-3.3-4.4-2.9-4.7-2.7-5-2.3-5.3-2-5.6-1.7-5.7-1.4-6.1-1.1-6.2-0.7-6.5-0.4-6.7-0.1-7 0.2-7 0.6-7.3 0.8-7.4 1.2-7.6 1.6-7.8 1.8-7.8 2.2-8 2.4-8 2.8-8.2 3.1-8.2 3.3-8.2 3.7-8.3 3.9-8.4 4.3-8.3 4.5-8.4 4.7-8.3 5-8.3 5.3-8.2 5.5-8.2 5.7-8.2 5.9-8 6.2-7.9 6.3-7.8 6.5-7.7 6.7-7.6 6.9-7.4 7-7.2 7.1-7.1 7.3-6.8 7.4-6.7 7.5-6.4 7.6-6.3 7.7-5.9 7.7-5.8 7.8-5.5 7.8-5.2 7.8-4.9 7.8-4.7 7.9-4.3 7.8-4.1 7.8-3.8 7.7-3.4 7.7-3.1 7.6-2.8 7.5-2.5 7.5-2.2 7.3-1.8 7.2-1.5 7-1.1 7-0.8 6.7-0.4 6.6-0.1 6.4 0.2 6.2 0.6 6 1 5.8 1.3 5.6 1.6 5.3 1.9 5.1 2.3 4.9 2.7 4.6"/>
<path stroke="#e6e457" d="M1104.3 399.4l-1.1-0.7-4.9-2.8-5.2-2.4-5.5-2.1-5.8-1.8-6-1.4-6.3-1.1-6.5-0.8-6.8-0.4-6.9-0.1-7.2 0.2-7.4 0.6-7.5 0.9-7.8 1.3-7.9 1.6-8 1.9-8.1 2.2-8.3 2.6-8.4 2.9-8.5 3.2-8.5 3.5-8.6 3.8-8.6 4.1-8.7 4.4-8.7 4.6-8.6 5-8.7 5.2-8.6 5.4-8.6 5.7-8.5 6-8.5 6.2-8.3 6.4-8.3 6.5-8.1 6.8-8 7-7.9 7.1-7.7 7.3-7.5 7.5-7.3 7.5-7.1 7.7-7 7.8-6.7 7.9-6.4 8-6.3 8-5.9 8.1-5.7 8.1-5.4 8.1-5.2 8.2-4.8 8.1-4.6 8.2-4.2 8-3.9 8.1-3.6 8-3.2 7.9-3 7.8-2.5 7.8-2.3 7.6-1.9 7.5-1.5 7.3-1.2 7.2-0.8 7-0.4 6.9-0.1 6.6 0.2 6.5 0.6 6.2 1 6.1 1.4 5.7 1.6 5.6 2.1 5.3 0.5 1.3"/>
<path stroke="#e7e55b" d="M1109 393.9l-5.3-2.5-5.7-2.2-6-1.8-6.3-1.5-6.5-1.1-6.7-0.8-7-0.5-7.3-0.1-7.4 0.3-7.7 0.6-7.8 0.9-8 1.3-8.2 1.7-8.3 1.9-8.5 2.4-8.6 2.6-8.7 3-8.7 3.3-8.9 3.7-8.9 3.9-9 4.3-9 4.5-9 4.9-9 5.1-8.9 5.4-9 5.6-8.9 6-8.8 6.1-8.8 6.4-8.7 6.7-8.5 6.8-8.4 7-8.3 7.3-8.2 7.4-8 7.5-7.8 7.7-7.6 7.9-7.4 8-7.2 8.1-6.9 8.1-6.7 8.3-6.5 8.3-6.1 8.4-6 8.4-5.6 8.5-5.3 8.4-5 8.5-4.7 8.4-4.4 8.4-4.1 8.4-3.7 8.2-3.4 8.3-3 8.1-2.7 8-2.3 7.9-2 7.7-1.5 7.7-1.3 7.4-0.8 7.3-0.5 7.1-0.1 6.9 0.3 6.7 0.6 6.5 1 6.2 1.4 6.1 1.3 4.3"/>
<path stroke="#e8e75f" d="M1113.4 388.8l-5.9-2.2-6.2-1.9-6.4-1.6-6.8-1.2-7-0.8-7.2-0.5-7.5-0.1-7.7 0.3-7.9 0.6-8.1 1-8.3 1.3-8.5 1.7-8.6 2.1-8.8 2.4-8.8 2.8-9 3-9.1 3.5-9.2 3.7-9.2 4.1-9.3 4.4-9.3 4.7-9.3 5-9.3 5.4-9.3 5.5-9.3 5.9-9.2 6.1-9.1 6.4-9.1 6.6-8.9 6.9-8.9 7.1-8.7 7.3-8.6 7.4-8.4 7.7-8.3 7.8-8.1 8-7.8 8.1-7.7 8.3-7.4 8.3-7.2 8.5-7 8.6-6.6 8.6-6.4 8.6-6.2 8.8-5.8 8.7-5.5 8.7-5.2 8.8-4.9 8.7-4.5 8.7-4.2 8.6-3.9 8.6-3.4 8.5-3.2 8.4-2.8 8.3-2.3 8.2-2.1 8-1.6 7.9-1.3 7.7-0.9 7.6-0.4 7.3-0.2 7.2 0.3 6.9 0.7 6.7 1 6.5 1.1 4.6"/>
<path stroke="#e9e863" d="M1119.2 384.5l-3.1-1.1-6.4-2-6.7-1.6-6.9-1.2-7.2-0.9-7.5-0.5-7.7-0.1-8 0.3-8.2 0.6-8.3 1-8.6 1.4-8.7 1.8-8.9 2.1-9.1 2.5-9.1 2.8-9.3 3.2-9.4 3.6-9.5 3.8-9.5 4.3-9.6 4.5-9.6 4.9-9.6 5.1-9.6 5.5-9.6 5.8-9.5 6-9.5 6.4-9.5 6.6-9.3 6.8-9.3 7.1-9.1 7.3-9.1 7.5-8.8 7.7-8.7 7.9-8.5 8.1-8.4 8.2-8.1 8.4-7.9 8.5-7.7 8.7-7.4 8.7-7.2 8.8-6.9 8.9-6.6 9-6.3 9-6 9-5.7 9-5.3 9.1-5.1 9-4.7 8.9-4.3 9-4 8.8-3.6 8.8-3.2 8.7-2.9 8.5-2.4 8.5-2.1 8.2-1.7 8.2-1.3 8-0.9 7.7-0.5 7.6-0.2 7.4 0.3 7.2 0.7 6.9 1.1 6.7 0.3 1.6"/>
<path stroke="#eaea67" d="M1125.2 380.1l-1.6-0.6-6.6-2-6.8-1.6-7.2-1.3-7.4-0.9-7.7-0.5-8-0.1-8.2 0.3-8.4 0.7-8.6 1-8.8 1.4-9 1.8-9.2 2.2-9.3 2.6-9.5 2.9-9.5 3.3-9.7 3.6-9.7 4-9.8 4.4-9.9 4.6-9.9 5.1-9.9 5.3-9.9 5.6-9.8 6-9.9 6.2-9.8 6.5-9.7 6.8-9.6 7-9.6 7.3-9.4 7.5-9.3 7.8-9.1 7.9-9 8.2-8.7 8.3-8.6 8.5-8.4 8.6-8.1 8.8-7.9 8.9-7.7 9-7.3 9.1-7.1 9.1-6.9 9.3-6.5 9.2-6.1 9.3-5.9 9.3-5.5 9.3-5.2 9.3-4.8 9.2-4.5 9.2-4.1 9.1-3.7 9.1-3.3 8.9-3 8.8-2.5 8.7-2.2 8.5-1.7 8.4-1.4 8.2-0.9 8-0.5 7.9-0.1 7.5 0.3 7.4 0.7 7.1 0.8 5.2"/>
<path stroke="#ebeb6c" d="M1136.4 377.6l-6.4-2.5-6.8-2.1-7.1-1.7-7.3-1.3-7.7-0.9-7.9-0.5-8.1-0.1-8.5 0.3-8.6 0.7-8.9 1-9 1.5-9.3 1.9-9.4 2.2-9.6 2.6-9.7 3-9.8 3.4-9.9 3.8-10 4.1-10.1 4.4-10.1 4.8-10.2 5.2-10.1 5.4-10.2 5.8-10.2 6.1-10.1 6.5-10 6.6-10 7-9.9 7.2-9.8 7.5-9.7 7.8-9.5 7.9-9.4 8.2-9.2 8.3-9 8.6-8.8 8.7-8.6 8.9-8.4 9-8.1 9.1-7.9 9.3-7.5 9.3-7.3 9.4-7 9.5-6.7 9.5-6.4 9.6-6 9.5-5.7 9.6-5.3 9.5-4.9 9.5-4.6 9.4-4.2 9.4-3.8 9.3-3.5 9.1-3 9.1-2.6 8.9-2.2 8.8-1.8 8.6-1.4 8.4-0.9 8.3-0.6 8-0.1 7.8 0.3 7.6 0.7 7.3 1.2 7.1 0.3 1.7"/>
<path stroke="#ece971" d="M1155.2 379.6l-1.4-0.8-5.9-3.3-6.2-3-6.6-2.5-7-2.1-7.2-1.7-7.5-1.4-7.9-0.9-8.1-0.5-8.4-0.1-8.6 0.3-8.8 0.7-9.1 1.1-9.3 1.5-9.5 1.9-9.6 2.3-9.8 2.7-10 3-10 3.5-10.2 3.8-10.3 4.2-10.3 4.6-10.4 4.9-10.4 5.3-10.4 5.6-10.4 6-10.4 6.2-10.4 6.6-10.3 6.8-10.2 7.2-10.2 7.4-10 7.7-9.9 7.9-9.8 8.1-9.6 8.4-9.5 8.6-9.2 8.7-9 9-8.8 9.1-8.6 9.2-8.3 9.4-8.1 9.5-7.7 9.5-7.5 9.7-7.2 9.7-6.8 9.7-6.6 9.8-6.1 9.8-5.8 9.8-5.5 9.8-5.1 9.7-4.7 9.7-4.3 9.6-3.9 9.5-3.5 9.4-3.1 9.3-2.7 9.1-2.2 9-1.9 8.8-1.4 8.7-1 8.4-0.5 8.2-0.2 8 0.4 7.8 0.7 7.5 1.2 7.2 1.6 7 0.9 3.4"/>
<path stroke="#ebe07a" d="M1183.4 397.2l-0.9-1.4-4.1-5.2-4.5-4.9-4.9-4.5-5.3-4.1-5.6-3.8-6.1-3.4-6.4-3-6.7-2.5-7.1-2.2-7.4-1.8-7.7-1.3-8-1-8.3-0.5-8.5-0.1-8.9 0.3-9 0.7-9.3 1.1-9.5 1.5-9.7 2-9.9 2.3-10 2.8-10.1 3.1-10.3 3.6-10.4 3.9-10.5 4.3-10.6 4.7-10.6 5-10.6 5.4-10.7 5.7-10.6 6.1-10.7 6.4-10.6 6.7-10.5 7-10.5 7.3-10.4 7.6-10.2 7.9-10.2 8-9.9 8.4-9.9 8.5-9.6 8.8-9.5 9-9.2 9.1-9 9.3-8.8 9.4-8.5 9.6-8.2 9.7-8 9.8-7.6 9.9-7.3 9.9-7 10-6.7 10-6.3 10-6 10-5.5 10-5.2 9.9-4.8 9.9-4.4 9.8-4 9.7-3.6 9.6-3.2 9.5-2.7 9.4-2.3 9.2-1.9 9-1.5 8.8-1 8.7-0.5 8.4-0.2 8.2 0.4 7.9 0.7 7.7 1.2 7.4 1.7 7.1 2 6.8 2.5 6.5 3 6.2 3.3 5.9 1.9 2.8"/>
<path stroke="#ebd883" d="M1195.9 408.4l-2.9-6.4-3.3-6.1-3.8-5.7-4.2-5.3-4.5-5-5-4.6-5.4-4.2-5.8-3.8-6.1-3.5-6.6-3-6.8-2.7-7.2-2.2-7.6-1.8-7.9-1.4-8.1-0.9-8.5-0.6-8.7-0.1-9 0.3-9.3 0.7-9.4 1.2-9.7 1.5-9.9 2-10.1 2.4-10.2 2.8-10.4 3.2-10.5 3.7-10.6 4-10.7 4.3-10.7 4.8-10.8 5.2-10.9 5.5-10.9 5.8-10.8 6.2-10.9 6.5-10.8 6.9-10.8 7.1-10.6 7.5-10.6 7.7-10.5 8-10.3 8.3-10.2 8.5-10 8.7-9.9 8.9-9.6 9.2-9.4 9.3-9.2 9.5-9 9.6-8.6 9.8-8.4 9.9-8.1 9.9-7.8 10.1-7.5 10.1-7.2 10.2-6.7 10.2-6.5 10.2-6 10.2-5.7 10.2-5.3 10.2-4.9 10-4.5 10-4.1 10-3.7 9.8-3.2 9.7-2.8 9.5-2.4 9.4-1.9 9.2-1.5 9-1 8.8-0.6 8.6-0.1 8.3 0.3 8.1 0.8 7.8 1.2 7.6 1.7 7.2 2.1 7 2.6 6.6 3 6.3 3.4 6 3.9 5.6 4.2 5.3 4.7 4.9 5.1 4.5 5.5 4.2"/>
<path stroke="#ebd08b" d="M1203.1 418.4l-0.4-1.9-2.1-7.1-2.5-6.8-2.9-6.5-3.4-6.2-3.8-5.8-4.3-5.4-4.6-5.1-5.1-4.7-5.5-4.3-5.9-3.9-6.2-3.5-6.7-3.1-6.9-2.7-7.4-2.2-7.7-1.9-8-1.4-8.3-1-8.6-0.5-8.9-0.1-9.1 0.3-9.4 0.7-9.7 1.2-9.8 1.6-10.1 2-10.2 2.4-10.4 2.9-10.6 3.3-10.7 3.6-10.8 4.1-10.8 4.5-11 4.8-11 5.3-11.1 5.6-11 5.9-11.1 6.3-11 6.7-11 6.9-11 7.3-10.8 7.6-10.8 7.8-10.7 8.2-10.5 8.4-10.4 8.6-10.2 8.9-10 9.1-9.8 9.3-9.6 9.5-9.3 9.7-9.1 9.8-8.8 9.9-8.6 10.1-8.2 10.1-8 10.3-7.6 10.3-7.2 10.3-7 10.4-6.5 10.4-6.2 10.4-5.8 10.3-5.4 10.4-4.9 10.2-4.6 10.2-4.2 10.1-3.7 10-3.3 9.8-2.8 9.7-2.4 9.6-2 9.4-1.5 9.1-1 9-0.6 8.7-0.1 8.5 0.3 8.2 0.8 8 1.2 7.7 1.7 7.4 2.2 7.1 2.6 6.7 3 6.4 3.5 6.1 3.9 5.7 4.4 5.4 4.7 5 5.2 4.6 5.6 4.2 5.9 3.8 6.4 3.4 3.3 1.6"/>
<path stroke="#eac894" d="M1206.2 423.9l-0.9-5.9-1.7-7.6-2-7.2-2.6-7-3-6.6-3.4-6.2-3.9-5.9-4.3-5.5-4.7-5.2-5.2-4.7-5.6-4.4-5.9-4-6.4-3.5-6.7-3.2-7.1-2.7-7.5-2.3-7.8-1.8-8.1-1.5-8.4-1-8.8-0.5-9-0.1-9.3 0.3-9.5 0.7-9.8 1.2-10 1.6-10.2 2.1-10.4 2.4-10.6 2.9-10.7 3.4-10.8 3.7-11 4.1-11.1 4.6-11.1 4.9-11.2 5.3-11.2 5.7-11.2 6-11.2 6.4-11.2 6.8-11.2 7-11.1 7.4-11.1 7.7-10.9 8-10.8 8.3-10.7 8.5-10.5 8.8-10.4 9-10.1 9.2-10 9.5-9.7 9.6-9.5 9.8-9.3 10-8.9 10.1-8.7 10.2-8.4 10.3-8 10.4-7.7 10.4-7.4 10.5-7 10.6-6.7 10.5-6.3 10.6-5.8 10.5-5.5 10.5-5.1 10.4-4.6 10.3-4.2 10.3-3.8 10.1-3.3 10-2.9 9.9-2.5 9.7-2 9.5-1.5 9.3-1 9.1-0.6 8.8-0.2 8.7 0.4 8.3 0.8 8.1 1.2 7.8 1.8 7.5 2.2 7.2 2.6 6.9 3.1 6.5 3.5 6.1 4 5.9 4.4 5.4 4.8 5.1 5.3 4.6 5.6 4.3 6.1 3.9 6.4 3.4 6.9 3.1 7.1 2.6 1.9 0.6"/>
<path stroke="#eabf9d" d="M1205.9 417.5l-1-6-1.6-7.6-2.1-7.4-2.6-7-3-6.7-3.5-6.3-3.9-6-4.4-5.6-4.8-5.2-5.2-4.8-5.7-4.4-6-4-6.4-3.6-6.9-3.2-7.2-2.8-7.5-2.3-7.9-1.9-8.2-1.4-8.6-1.1-8.8-0.5-9.2-0.1-9.4 0.3-9.7 0.7-9.9 1.2-10.1 1.7-10.3 2-10.6 2.6-10.7 2.9-10.8 3.4-11 3.7-11.1 4.2-11.2 4.6-11.3 5-11.3 5.4-11.3 5.7-11.4 6.2-11.4 6.4-11.3 6.9-11.4 7.1-11.2 7.5-11.2 7.8-11.1 8.1-10.9 8.4-10.8 8.6-10.7 8.9-10.5 9.1-10.3 9.4-10.1 9.6-9.8 9.7-9.6 9.9-9.4 10.1-9.1 10.2-8.8 10.4-8.4 10.4-8.2 10.6-7.8 10.5-7.5 10.7-7.1 10.7-6.7 10.7-6.4 10.6-5.9 10.7-5.6 10.6-5.1 10.6-4.7 10.4-4.3 10.4-3.8 10.3-3.4 10.1-2.9 10-2.5 9.8-2 9.6-1.5 9.5-1.1 9.2-0.6 9-0.1 8.7 0.3 8.5 0.8 8.1 1.3 7.9 1.7 7.6 2.3 7.3 2.6 7 3.2 6.6 3.5 6.2 4.1 5.9 4.4 5.5 4.9 5.1 5.3 4.8 5.8 4.3 6.1 3.9 6.5 3.5 6.9 3.1 7.3 2.7 5.7 1.7"/>
<path stroke="#eab7a5" d="M1200.1 391.4l-0.6-1.8-2.6-7.1-3-6.8-3.5-6.4-4-6-4.4-5.7-4.9-5.2-5.2-4.9-5.7-4.5-6.1-4-6.5-3.7-6.9-3.2-7.3-2.8-7.6-2.3-8-1.9-8.3-1.5-8.7-1-8.9-0.6-9.3-0.1-9.5 0.3-9.7 0.8-10.1 1.2-10.2 1.7-10.4 2.1-10.7 2.5-10.8 3-11 3.4-11.1 3.8-11.2 4.2-11.3 4.6-11.4 5.1-11.4 5.4-11.5 5.8-11.5 6.2-11.5 6.6-11.4 6.9-11.5 7.2-11.3 7.6-11.3 7.9-11.2 8.1-11.1 8.5-10.9 8.7-10.8 9-10.6 9.2-10.4 9.5-10.2 9.7-10 9.8-9.7 10-9.4 10.2-9.2 10.4-8.9 10.4-8.5 10.6-8.3 10.6-7.9 10.7-7.5 10.8-7.2 10.7-6.8 10.8-6.4 10.8-6.1 10.8-5.6 10.7-5.1 10.7-4.8 10.6-4.3 10.5-3.9 10.3-3.4 10.3-3 10.1-2.5 9.9-2 9.7-1.5 9.5-1.1 9.3-0.6 9.1-0.2 8.8 0.4 8.6 0.8 8.3 1.3 8 1.8 7.6 2.2 7.4 2.7 7 3.2 6.7 3.6 6.3 4.1 5.9 4.5 5.6 4.9 5.2 5.4 4.8 5.8 4.3 6.2 4 6.6 3.6 3.4 1.6"/>
<path stroke="#e9afae" d="M1192.7 371.8l-1.6-3.3-3.6-6.5-4-6-4.4-5.7-4.9-5.3-5.3-5-5.8-4.5-6.1-4-6.6-3.7-6.9-3.3-7.4-2.8-7.7-2.3-8-1.9-8.4-1.5-8.7-1.1-9-0.5-9.3-0.2-9.6 0.4-9.9 0.7-10.1 1.3-10.3 1.6-10.5 2.1-10.8 2.6-10.8 3-11.1 3.4-11.2 3.9-11.3 4.2-11.4 4.7-11.5 5.1-11.5 5.5-11.6 5.8-11.6 6.3-11.6 6.6-11.5 6.9-11.6 7.3-11.4 7.6-11.4 8-11.3 8.2-11.1 8.6-11.1 8.8-10.8 9-10.7 9.3-10.5 9.6-10.3 9.7-10 9.9-9.8 10.1-9.5 10.3-9.3 10.4-8.9 10.6-8.7 10.6-8.3 10.7-7.9 10.8-7.7 10.9-7.2 10.8-6.9 10.9-6.4 10.9-6.1 10.9-5.6 10.8-5.3 10.7-4.8 10.7-4.3 10.6-3.9 10.4-3.5 10.3-2.9 10.2-2.6 10-2 9.8-1.6 9.6-1.1 9.4-0.6 9.2-0.1 8.9 0.3 8.6 0.9 8.3 1.3 8.1 1.8 7.7 2.2 7.4 2.7 7.1 3.2 6.7 3.7 6.4 4.1 6 4.5 5.6 5 5.2 5.4 4.8 5.9 4.5 4.6 3"/>
<path stroke="#e9a7b7" d="M1183.6 354.8l-4-6.1-4.5-5.8-4.9-5.3-5.3-4.9-5.8-4.6-6.2-4.1-6.6-3.7-7-3.2-7.3-2.9-7.8-2.3-8.1-2-8.4-1.5-8.8-1-9-0.6-9.4-0.1-9.6 0.3-9.9 0.8-10.2 1.2-10.4 1.7-10.6 2.1-10.8 2.6-10.9 3-11.1 3.5-11.3 3.8-11.4 4.3-11.4 4.7-11.6 5.1-11.6 5.6-11.6 5.8-11.7 6.3-11.6 6.7-11.7 7-11.6 7.3-11.5 7.7-11.4 8-11.4 8.2-11.2 8.6-11.1 8.9-10.9 9.1-10.8 9.4-10.5 9.5-10.4 9.8-10.1 10-9.8 10.2-9.6 10.3-9.3 10.5-9 10.6-8.7 10.7-8.3 10.8-8.1 10.8-7.6 10.9-7.3 11-6.9 10.9-6.5 11-6.1 10.9-5.7 10.9-5.2 10.8-4.9 10.7-4.3 10.7-4 10.5-3.4 10.4-3 10.2-2.5 10-2.1 9.9-1.6 9.7-1.1 9.4-0.6 9.2-0.1 8.9 0.3 8.7 0.8 8.4 1.4 8.1 1.8 7.8 2.2 7.5 2.8 7.1 3.2 6.7 3.6 6.4 4.2 6.1 4.5 5.6 5.1 5.3 5.4 4.8 1.4 1.2"/>
<path stroke="#e89ebf" d="M1174.8 341.6l-4.4-5.8-5-5.3-5.3-5-5.8-4.5-6.3-4.2-6.6-3.7-7-3.2-7.4-2.9-7.7-2.4-8.2-1.9-8.4-1.5-8.8-1-9.1-0.6-9.4-0.1-9.7 0.3-9.9 0.8-10.2 1.2-10.4 1.7-10.7 2.1-10.8 2.6-11 3-11.2 3.5-11.3 3.9-11.4 4.3-11.5 4.7-11.6 5.1-11.6 5.5-11.7 6-11.7 6.3-11.7 6.6-11.6 7-11.7 7.4-11.5 7.7-11.5 8-11.4 8.3-11.3 8.6-11.1 8.9-11 9.2-10.8 9.4-10.5 9.6-10.4 9.8-10.1 10-9.9 10.2-9.6 10.4-9.4 10.5-9 10.7-8.7 10.7-8.4 10.8-8.1 10.9-7.6 11-7.4 10.9-6.9 11-6.5 11-6.1 11-5.7 10.9-5.3 10.8-4.8 10.8-4.4 10.7-4 10.5-3.4 10.4-3.1 10.3-2.5 10.1-2.1 9.9-1.5 9.7-1.1 9.5-0.7 9.2-0.1 9 0.4 8.7 0.8 8.4 1.3 8.1 1.8 7.8 2.3 7.5 2.7 7.2 3.3 6.7 3.6 6.5 4.2 6 4.6 5.7 5 5.3 1.3 1.2"/>
<path stroke="#e896c8" d="M1163.6 327.7l-3.7-4-5.4-5-5.8-4.5-6.2-4.1-6.6-3.7-7.1-3.3-7.4-2.9-7.7-2.3-8.2-2-8.4-1.5-8.8-1-9.1-0.6-9.5-0.1-9.6 0.3-10 0.8-10.2 1.2-10.4 1.7-10.7 2.1-10.8 2.6-11 3-11.2 3.5-11.3 3.9-11.4 4.3-11.5 4.7-11.6 5.2-11.7 5.5-11.7 5.9-11.7 6.3-11.7 6.7-11.7 7-11.6 7.4-11.6 7.7-11.5 8-11.4 8.4-11.3 8.6-11.1 8.9-11 9.1-10.8 9.4-10.6 9.7-10.4 9.8-10.1 10-9.9 10.3-9.7 10.3-9.3 10.5-9.1 10.7-8.7 10.7-8.4 10.9-8 10.9-7.7 10.9-7.3 11-7 11-6.5 11-6.1 11-5.7 10.9-5.3 10.9-4.9 10.8-4.4 10.7-3.9 10.5-3.5 10.5-3 10.2-2.5 10.1-2.1 9.9-1.6 9.7-1.1 9.5-0.6 9.3-0.2 9 0.4 8.7 0.8 8.4 1.4 8.1 1.8 7.9 2.2 7.5 2.8 7.1 3.2 6.8 3.7 6.4 4.1 6.1 4.6 5.7"/>
<path stroke="#e78acd" d="M1152.5 316.2l-4.1-3.7-5.8-4.5-6.2-4.1-6.6-3.7-7-3.3-7.4-2.8-7.8-2.4-8.1-2-8.5-1.5-8.8-1-9.1-0.6-9.4-0.1-9.6 0.3-10 0.8-10.2 1.2-10.4 1.7-10.6 2.1-10.9 2.6-11 3-11.1 3.5-11.3 3.9-11.4 4.3-11.5 4.7-11.6 5.1-11.7 5.6-11.6 5.9-11.7 6.3-11.7 6.6-11.7 7.1-11.6 7.3-11.6 7.7-11.5 8-11.4 8.4-11.2 8.6-11.2 8.9-10.9 9.1-10.8 9.4-10.6 9.6-10.4 9.8-10.1 10.1-9.9 10.2-9.6 10.3-9.3 10.5-9.1 10.7-8.7 10.7-8.4 10.8-8 10.9-7.7 11-7.3 11-6.9 10.9-6.6 11-6.1 11-5.7 10.9-5.3 10.9-4.8 10.7-4.4 10.7-3.9 10.5-3.5 10.5-3 10.2-2.6 10.1-2 9.9-1.6 9.7-1.1 9.5-0.6 9.2-0.2 9 0.4 8.7 0.8 8.4 1.3 8.1 1.8 7.9 2.3 7.4 2.8 7.2 3.2 6.8 3.7 6.4 3 4.6"/>
<path stroke="#e77dd2" d="M1139 304.7l-2.9-2.2-6.2-4.1-6.6-3.7-7-3.3-7.4-2.8-7.7-2.4-8.1-1.9-8.4-1.5-8.8-1-9.1-0.6-9.3-0.1-9.7 0.3-9.9 0.8-10.1 1.2-10.4 1.7-10.6 2.1-10.8 2.6-11 3-11.1 3.4-11.2 3.9-11.4 4.3-11.5 4.7-11.5 5.1-11.6 5.5-11.7 5.9-11.6 6.3-11.7 6.6-11.6 7-11.6 7.4-11.5 7.6-11.5 8-11.3 8.3-11.2 8.6-11.1 8.9-11 9.1-10.7 9.3-10.5 9.6-10.4 9.8-10.1 10-9.8 10.2-9.6 10.3-9.3 10.5-9 10.6-8.7 10.7-8.4 10.8-8 10.8-7.6 10.9-7.3 11-6.9 10.9-6.5 11-6.1 10.9-5.7 10.9-5.3 10.8-4.8 10.7-4.4 10.6-3.9 10.5-3.4 10.4-3 10.3-2.6 10-2 9.9-1.6 9.6-1.1 9.5-0.6 9.2-0.2 8.9 0.4 8.7 0.8 8.4 1.3 8.1 1.8 7.8 2.3 7.4 2.7 7.1 3.2 6.8 2.7 4.8"/>
<path stroke="#e670d7" d="M1123.1 293.8l-6.5-3.7-7-3.2-7.3-2.8-7.7-2.4-8-1.9-8.4-1.5-8.7-1-9.1-0.6-9.3-0.1-9.6 0.3-9.8 0.8-10.1 1.2-10.3 1.7-10.6 2.1-10.7 2.5-10.9 3-11 3.5-11.2 3.8-11.3 4.3-11.4 4.7-11.5 5-11.5 5.5-11.6 5.9-11.6 6.2-11.6 6.6-11.6 7-11.5 7.3-11.5 7.6-11.3 7.9-11.3 8.3-11.2 8.5-11 8.8-10.9 9.1-10.6 9.3-10.5 9.5-10.3 9.8-10 9.9-9.8 10.1-9.6 10.3-9.2 10.4-9 10.5-8.6 10.6-8.3 10.8-8 10.8-7.6 10.8-7.2 10.9-6.9 10.9-6.5 10.9-6 10.8-5.7 10.8-5.2 10.8-4.8 10.7-4.3 10.5-3.9 10.5-3.5 10.3-3 10.2-2.5 10-2 9.8-1.6 9.6-1.1 9.4-0.6 9.1-0.1 8.9 0.3 8.6 0.8 8.4 1.3 8 1.8 7.8 2.3 7.4 2.7 7.1 0.8 1.7"/>
<path stroke="#e564dc" d="M1104.6 284.2l-1.7-0.8-7.3-2.8-7.6-2.3-8-2-8.3-1.4-8.7-1-8.9-0.6-9.3-0.1-9.5 0.3-9.7 0.7-10.1 1.3-10.2 1.6-10.4 2.1-10.7 2.5-10.8 3-11 3.4-11.1 3.8-11.2 4.3-11.3 4.6-11.4 5-11.4 5.5-11.5 5.8-11.5 6.2-11.5 6.5-11.5 6.9-11.4 7.3-11.4 7.5-11.2 7.9-11.2 8.2-11.1 8.4-10.9 8.8-10.8 9-10.6 9.2-10.4 9.5-10.2 9.6-10 9.9-9.7 10-9.4 10.2-9.2 10.3-8.9 10.5-8.6 10.5-8.2 10.6-7.9 10.8-7.5 10.7-7.2 10.8-6.8 10.8-6.5 10.8-6 10.8-5.6 10.7-5.2 10.7-4.7 10.5-4.3 10.5-3.9 10.4-3.4 10.2-3 10.1-2.5 9.9-2 9.8-1.5 9.5-1.1 9.3-0.6 9.1-0.2 8.8 0.4 8.6 0.8 8.2 1.3 8 1.8 7.7 1 3.7"/>
<path stroke="#e457e1" d="M1081.4 276l-7.9-1.9-8.2-1.5-8.6-1-8.8-0.6-9.2-0.1-9.4 0.3-9.7 0.8-9.9 1.2-10.1 1.6-10.3 2.1-10.6 2.5-10.7 3-10.8 3.3-11 3.8-11.1 4.2-11.2 4.6-11.3 5-11.3 5.3-11.3 5.8-11.4 6.1-11.4 6.5-11.3 6.8-11.4 7.2-11.2 7.5-11.2 7.8-11.1 8.1-10.9 8.3-10.8 8.7-10.7 8.9-10.5 9.1-10.3 9.4-10.1 9.5-9.8 9.8-9.6 9.9-9.4 10.1-9.1 10.2-8.8 10.3-8.4 10.5-8.2 10.5-7.8 10.6-7.5 10.7-7.1 10.6-6.7 10.7-6.4 10.7-5.9 10.7-5.6 10.6-5.1 10.5-4.7 10.5-4.3 10.4-3.8 10.2-3.4 10.2-2.9 10-2.5 9.8-2 9.6-1.5 9.4-1.1 9.2-0.6 9-0.1 8.7 0.3 8.5 0.8 8.2 0.3 2"/>
<path stroke="#e34ee4" d="M1044.2 270.2l-2.3-0.1-9-0.1-9.3 0.3-9.5 0.7-9.8 1.2-10 1.6-10.2 2.1-10.4 2.5-10.6 2.9-10.7 3.3-10.8 3.7-11 4.1-11 4.6-11.2 4.9-11.1 5.3-11.3 5.7-11.2 6-11.2 6.4-11.2 6.8-11.2 7-11.1 7.4-11 7.7-11 8-10.8 8.3-10.7 8.5-10.5 8.8-10.4 9-10.1 9.3-10 9.4-9.7 9.6-9.5 9.8-9.2 10-9 10.1-8.7 10.2-8.4 10.3-8 10.4-7.7 10.4-7.4 10.6-7 10.5-6.7 10.5-6.2 10.6-5.9 10.5-5.5 10.5-5.1 10.4-4.6 10.4-4.2 10.2-3.8 10.1-3.3 10-2.9 9.9-2.5 9.7-1.9 9.5-1.6 9.3-1 9.1-0.4 4.5"/>
<path stroke="#e24be5" d="M976.9 276.8l-7.7 1.8-10.4 2.9-10.6 3.3-10.7 3.6-10.8 4.1-10.9 4.5-10.9 4.8-11 5.3-11.1 5.6-11 5.9-11.1 6.3-11 6.7-11 6.9-11 7.3-10.8 7.6-10.8 7.9-10.7 8.1-10.5 8.4-10.4 8.7-10.2 8.8-10 9.1-9.8 9.3-9.6 9.5-9.3 9.7-9.1 9.8-8.8 9.9-8.6 10.1-8.2 10.1-8 10.3-7.6 10.3-7.2 10.3-7 10.4-6.5 10.4-6.2 10.4-5.8 10.3-5.4 10.4-4.9 10.2-4.6 10.2-4.2 10.1-3.7 10"/>
<path stroke="#c221e7" d="M855.9 439.5l-1.9 1.3-7.4 5.7-7.2 5.8-7.2 6-7.1 6.1-6.9 6.3-6.8 6.5-6.7 6.6-6.4 6.6-3.2 3.4"/>
<path stroke="#be1e16" d="M1015.7 392.3l-1.4 0-5.9-0.1-6 0.2-6.3 0.5-6.3 0.7-6.6 1.1-6.6 1.3-6.8 1.6-6.9 1.9-6.9 2.2-7.1 2.4-7.2 2.7-7.2 3-7.2 3.2-7.3 3.5-7.3 3.7-7.3 3.9-7.3 4.2-7.3 4.4-7.3 4.6-7.3 4.8-7.1 5-7.2 5.2-7 5.4-7 5.5-6.8 5.8-6.8 5.8-6.6 6.1-6.5 6.1-6.3 6.3-6.2 6.4-6 6.5-5.9 6.5-5.6 6.7-5.5 6.7-5.2 6.8-5.1 6.8-4.8 6.8-4.6 6.9-4.3 6.9-4.1 6.9-3.8 6.8-3.6 6.9-3.3 6.7-3 6.8-2.7 6.7-2.5 6.6-2.2 6.5-1.9 6.4-1.6 6.3-1.2 6.2-1 6.1-0.7 5.9-0.4 5.8-0.1 5.6 0.2 5.4 0.5 5.3 0.9 5.1 1.1 4.9 1.4 4.7"/>
<path stroke="#be2216" d="M1079.7 461.6l-0.7-4.9-1-4.7-1.3-4.5-1.6-4.3-1.8-4.1-2.2-3.9-2.4-3.6-2.6-3.4-3-3.2-3.2-3-3.4-2.7-3.7-2.5-4-2.2-4.2-1.9-4.4-1.7-4.6-1.4-4.8-1.2-5.1-0.9-5.2-0.6-5.5-0.3-5.6-0.1-5.7 0.2-6 0.4-6 0.8-6.3 1-6.3 1.2-6.4 1.6-6.6 1.8-6.7 2-6.7 2.4-6.8 2.5-6.9 2.8-6.9 3.1-6.9 3.3-7 3.5-6.9 3.8-7 4-7 4.1-6.9 4.4-6.9 4.6-6.9 4.8-6.8 5-6.7 5.1-6.6 5.3-6.5 5.5-6.5 5.6-6.3 5.7-6.2 5.8-6 6-5.9 6.1-5.7 6.2-5.6 6.3-5.4 6.3-5.2 6.4-5 6.5-4.8 6.4-4.6 6.6-4.3 6.5-4.2 6.6-3.8 6.5-3.7 6.6-3.4 6.5-3.1 6.4-2.9 6.5-2.6 6.3-2.4 6.3-2.1 6.2-1.8 6.1-1.5 6.1-1.2 5.9-0.9 5.7-0.7 5.7-0.4 5.5-0.1 5.3 0.3 5.2 0.5 5.1 0.7 4.8 1.1 4.7 1.4 4.4 1.6 4.3 1.9 4 2.2 3.9 2.5 3.6 2.7 3.3 3 3.2 3.3 2.9 3.5 2.6 3.8 2.4 4 2.2 4.2 1.9 4.4 1.6 2.4 0.7"/>
<path stroke="#bf2516" d="M1074.3 459.6l-1.5-4.1-1.7-3.9-2.1-3.7-2.3-3.5-2.5-3.2-2.8-3.1-3.1-2.8-3.2-2.5-3.6-2.4-3.7-2.1-4-1.8-4.2-1.6-4.4-1.4-4.6-1.1-4.8-0.8-5-0.6-5.1-0.4-5.4 0-5.4 0.1-5.7 0.5-5.8 0.7-5.9 0.9-6 1.3-6.1 1.4-6.3 1.7-6.3 2-6.4 2.2-6.5 2.4-6.5 2.7-6.6 2.9-6.6 3.2-6.6 3.3-6.6 3.6-6.7 3.8-6.6 3.9-6.6 4.2-6.5 4.4-6.5 4.5-6.5 4.7-6.4 4.9-6.3 5.1-6.2 5.1-6.1 5.4-6 5.4-5.9 5.6-5.8 5.7-5.6 5.8-5.4 5.8-5.3 6-5.1 6-5 6.1-4.7 6.2-4.6 6.1-4.3 6.2-4.2 6.3-3.9 6.2-3.7 6.2-3.5 6.2-3.2 6.2-3 6.2-2.7 6.1-2.5 6-2.3 6-1.9 5.9-1.7 5.8-1.5 5.8-1.2 5.6-0.9 5.5-0.6 5.3-0.3 5.3-0.1 5.1 0.2 4.9 0.5 4.8 0.7 4.6 1 4.4 1.3 4.3 1.6 4 1.8 3.9 2.1 3.6 2.3 3.4 2.6 3.2 2.9 3 3.1 2.8 3.3 2.5 3.6 2.3 2.8 1.6"/>
<path stroke="#c02916" d="M1064.5 456.9l-2.4-3.1-2.6-2.9-2.9-2.6-3.1-2.5-3.4-2.2-3.5-2-3.8-1.8-4-1.5-4.2-1.3-4.3-1-4.6-0.8-4.7-0.6-4.9-0.3-5.1-0.1-5.2 0.2-5.3 0.4-5.5 0.7-5.6 0.9-5.8 1.2-5.8 1.3-5.9 1.7-6 1.8-6.1 2.1-6.1 2.3-6.2 2.6-6.2 2.7-6.3 3-6.3 3.2-6.3 3.4-6.3 3.6-6.3 3.7-6.2 4-6.2 4.1-6.2 4.4-6.2 4.4-6 4.7-6 4.8-5.9 4.9-5.8 5-5.7 5.2-5.6 5.3-5.4 5.4-5.3 5.5-5.2 5.6-5 5.6-4.9 5.7-4.7 5.8-4.5 5.8-4.3 5.9-4.2 5.9-3.9 5.9-3.7 5.9-3.5 5.9-3.3 5.9-3.1 5.9-2.8 5.8-2.6 5.8-2.4 5.8-2.1 5.6-1.9 5.6-1.6 5.6-1.4 5.4-1.1 5.3-0.8 5.2-0.6 5.1-0.4 5 0 4.8 0.1 4.7 0.5 4.5 0.7 4.4 1 4.2 1.2 4 1.5 3.9 1.7 3.6 2 3.5 2.2 3.3 2.5 3 2.7 2.8M1196.6 410.8l0.7-1.6 2.1-6.6 0.4-7.1-1.1-7.7-1.8-5.9M1077.9 432.2l-2.5 13.7-2.6 13.5"/>
<path stroke="#c02d16" d="M1049.2 456.7l-0.8-0.5-3.4-1.9-3.5-1.7-3.8-1.4-4-1.2-4.1-1-4.3-0.8-4.5-0.5-4.6-0.3-4.8-0.1-5 0.2-5 0.4-5.2 0.6-5.3 0.9-5.5 1-5.5 1.4-5.6 1.5-5.7 1.8-5.7 1.9-5.8 2.2-5.9 2.4-5.9 2.7-5.9 2.8-6 3-6 3.2-5.9 3.4-6 3.6-5.9 3.7-5.9 4-5.9 4-5.8 4.3-5.7 4.4-5.7 4.5-5.6 4.7-5.5 4.7-5.3 4.9-5.3 5.1-5.2 5.1-5 5.2-4.9 5.3-4.8 5.3-4.6 5.4-4.4 5.5-4.3 5.5-4.1 5.6-3.9 5.6-3.8 5.5-3.5 5.6-3.3 5.6-3.1 5.6-2.9 5.6-2.7 5.5-2.5 5.5-2.2 5.5-2 5.3-1.8 5.3-1.5 5.3-1.3 5.1-1.1 5.1-0.8 4.9-0.6 4.8-0.3 4.7-0.1 4.6 0.2 4.5 0.5 4.2 0.6 4.2 0.9 4 1.2 3.8M1189.1 401.8l2.6-4.6 2-6.8 0.3-7.4-1.2-7.8-2.7-8.1-2.8-6M1074.2 424.1l-2.4 14.2-2.4 13.9-0.6 3.4"/>
<path stroke="#c23417" d="M964.1 469.3l-4.2 1.6-5.5 2.2-5.6 2.5-5.6 2.7-5.6 2.8-5.7 3.1-5.6 3.2-5.6 3.4-5.7 3.5-5.5 3.7-5.6 3.9-5.5 4-5.4 4.2-5.3 4.2-5.3 4.4-5.2 4.6-5.1 4.6-5 4.7-4.9 4.9-4.8 4.9-4.6 5-4.5 5.1-4.4 5.1-4.2 5.2-4 5.2-3.9 5.2-3.7 5.3-3.5 5.3-3.4 5.3-3.1 5.3-3 5.3-2 3.9M1179.9 394.2l1.2-1.5 3.5-6.4 1.8-7 0.2-7.5-1.3-8-2.7-8.1-4.1-8.2-5.1-7.9-1.5-1.9M1069.4 416.8l-2.1 14.6-2.2 14.3-1.8 10.4"/>
<path stroke="#c33c17" d="M962.2 481.6l-5.2 2.1-5.3 2.3-5.3 2.6-5.3 2.7-5.3 2.8-5.4 3.1-5.3 3.2-5.3 3.3-5.3 3.5-5.2 3.7-5.2 3.8-5.1 3.9-5.1 4-4.9 4.2-5 4.3-4.8 4.3-4.7 4.5-4.6 4.6-4.5 4.6-4.4 4.7-4.2 4.8-4.2 4.9-3.9 4.9-3.8 4.9-3.7 4.9-3.5 5-3.3 5-3.2 5-3 5-2.7 5"/>
<path stroke="#c44318" d="M966.3 490.2l-2.5 1-4.9 2-5 2.2-5 2.4-5 2.5-5.1 2.7-5 2.9-5 3-5 3.2-5 3.3-4.9 3.4-4.9 3.6-4.8 3.7-4.8 3.8-4.7 3.9-4.6 4.1-4.6 4.1-4.4 4.2-4.4 4.3-4.2 4.4-4.2 4.5-4 4.5-3.9 4.6-3.7 4.6-3.6 4.6-3.5 4.7-3.3 4.7-3.1 4.7-3 4.7-2.8 4.8-2.6 4.7-1.3 2.3"/>
<path stroke="#c64b19" d="M970.4 497.4l-1.1 0.4-4.6 1.8-4.7 1.9-4.7 2.1-4.7 2.2-4.8 2.4-4.7 2.6-4.7 2.7-4.8 2.8-4.7 3-4.7 3.1-4.6 3.3-4.6 3.3-4.6 3.5-4.5 3.6-4.4 3.7-4.4 3.8-4.3 3.9-4.2 4-4.1 4.1-4 4.1-3.9 4.2-3.8 4.3-3.6 4.3-3.6 4.3-3.4 4.4-3.2 4.4-3.1 4.4-3 4.5-2.8 4.4-2.6 4.5-2.5 4.4-2.3 4.4-1.1 2.2M1049.1 400.4l13.9-1 13.7-1.2 13.2-1.5 12.4-2 11.5-2.5 10.4-3.2 9.1-3.9 7.6-4.7 6.1-5.4 4.4-6.2 2.9-6.9 1.3-7.5-0.3-8-1.7-8.2-3.1-8.4-4.3-8.4-5.3-8-6.1-7.6-6.8-6.8-7.2-5.9-7.6-4.8-1.8-1M1049.1 400.4l-1 15.4-1.2 15.2-1.4 14.6-0.8 7M988.7 514.4l-3.8-1.9-7.5-4.8-7.3-5.9-3.4-3.3"/>
<path stroke="#c8521a" d="M974.4 503.2l-1 0.4-4.3 1.5-4.4 1.6-4.4 1.8-4.4 2-4.5 2.1-4.4 2.2-4.5 2.4-4.5 2.6-4.4 2.7-4.5 2.8-4.4 2.9-4.4 3.1-4.3 3.2-4.3 3.2-4.3 3.4-4.1 3.5-4.2 3.6-4 3.7-4 3.8-3.8 3.8-3.8 3.9-3.7 3.9-3.6 4-3.4 4.1-3.3 4.1-3.2 4.1-3.1 4.2-2.9 4.2-2.8 4.2-2.7 4.2-2.5 4.2-2.3 4.2-2.2 4.1-2 4.2-0.9 2M1040.5 396.8l13.5-1.2 13.2-1.4 12.8-1.7 12-2.1 11.1-2.7 9.9-3.3 8.7-4.1 7.3-4.8 5.7-5.6 4.2-6.3 2.6-7 1-7.6-0.4-8.1-1.9-8.3-3.2-8.5-4.4-8.3-5.4-8.1-6.1-7.6-6.8-6.8-7.2-5.9-7.4-4.7-7.4-3.4M1040.5 396.8l-0.6 15.7-0.7 15.3-0.9 14.8-1 10.6M990.6 515l-1.9-0.6-7.4-3.4-7.4-4.7-5.4-4.3"/>
<path stroke="#ca5a1a" d="M979.1 507.4l-3 0.9-4 1.2-4.1 1.4-4.1 1.5-4.1 1.8-4.2 1.8-4.2 2-4.2 2.1-4.2 2.3-4.2 2.4-4.2 2.5-4.2 2.7-4.2 2.7-4.1 2.9-4.1 3-4.1 3.1-4 3.2-3.9 3.3-3.9 3.4-3.8 3.5-3.8 3.5-3.6 3.6-3.6 3.7-3.5 3.7-3.3 3.8-3.3 3.9-3.1 3.8-3 3.9-2.9 3.9-2.8 4-2.6 3.9-2.5 4-2.4 4-2.2 3.9-2 3.9-1.9 3.9-1.8 3.9-1.2 2.9M1031.1 394.3l13-1.4 12.7-1.5 12.3-1.8 11.6-2.3 10.6-2.8 9.5-3.5 8.3-4.1 6.8-5 5.4-5.6 3.9-6.5 2.3-7.1 0.7-7.6-0.7-8.1-2.1-8.4-3.3-8.5-4.5-8.4-5.4-8.1-6.2-7.6-6.8-6.8-7.1-5.9-7.3-4.7-7.3-3.3-3.5-1.1M1031.1 394.3l-0.1 15.7-0.2 15.5-0.5 14.9-0.9 14.1M990 514.8l-5.4-1.5-7.3-3.4-7.3-4.7"/>
<path stroke="#cb611b" d="M981.3 510.9l-3.7 0.9-3.7 1-3.8 1.2-3.9 1.3-3.9 1.5-3.9 1.6-3.9 1.7-4 1.9-4 2-3.9 2.2-4 2.2-4 2.4-3.9 2.5-4 2.6-3.9 2.8-3.9 2.8-3.8 2.9-3.8 3.1-3.7 3.1-3.7 3.2-3.6 3.2-3.5 3.4-3.5 3.4-3.3 3.5-3.3 3.5-3.2 3.6-3 3.6-3 3.6-2.9 3.7-2.7 3.7-2.6 3.7-2.5 3.8-2.4 3.7-2.2 3.8-2.1 3.7-1.9 3.7-1.8 3.7-1.6 3.7-1.5 3.6-1.4 3.6-0.3 0.9"/>
<path stroke="#cd691c" d="M983 513.1l-1.7 0.3-3.4 0.7-3.5 0.8-3.6 1-3.6 1.1-3.6 1.3-3.7 1.4-3.7 1.5-3.7 1.6-3.8 1.8-3.7 1.9-3.8 2.1-3.7 2.1-3.8 2.3-3.8 2.3-3.7 2.5-3.7 2.6-3.6 2.7-3.7 2.7-3.5 2.9-3.6 2.9-3.5 3.1-3.4 3.1-3.3 3.1-3.3 3.3-3.1 3.2-3.1 3.4-3 3.4-3 3.4-2.8 3.4-2.7 3.5-2.6 3.5-2.4 3.6-2.4 3.5-2.2 3.5-2.1 3.6-2 3.5-1.8 3.5-1.7 3.5-1.6 3.5-1.4 3.4-1.3 3.4-1.1 3.4-0.7 2.4M1010 392.2l11.9-1.5 11.7-1.6 11.2-2 10.5-2.3 9.6-2.9 8.5-3.6 7.3-4.2 6-5.1 4.6-5.7 3.1-6.5 1.6-7.2 0.2-7.7-1.2-8.2-2.5-8.4-3.7-8.5-4.7-8.5-5.6-8.1-6.2-7.6-6.7-6.8-7-5.8-7.1-4.7-6.9-3.3-6.7-1.8-3.2-0.3M1009.7 388.2l0.3 4 1 15.8 0.9 15.6 0.6 15.1 0.2 14.2M986.8 514.4l-4.7-0.3-6.7-1.8-1.7-0.6"/>
<path stroke="#d0711d" d="M984.1 514.2l-0.8 0.1-3.1 0.4-3.2 0.5-3.2 0.7-0.8 0.1M857.6 619.2l-1.1 3.2-0.9 3.1-0.8 3.1-0.3 1.5M998.5 392.7l11.3-1.5 11-1.6 10.6-1.9 10-2.3 9-2.9 8-3.6 6.8-4.2 5.6-5 4.1-5.7 2.7-6.5 1.2-7.2-0.1-7.7-1.5-8.1-2.7-8.4-3.9-8.6-4.9-8.4-5.6-8.1-6.3-7.6-6.6-6.8-6.9-5.9-7-4.6-6.8-3.3-6.4-1.8-4.5-0.3M998.1 388.7l0.4 4 1.6 15.8 1.5 15.6 1.2 15 0.7 14.2"/>
<path stroke="#d3791d" d="M987.3 514.5l-0.6-0.1-2.8 0-2.8 0.1-2.9 0.2-2.2 0.3M855.8 623.6l-0.6 2.9-0.5 2.8-0.3 2.8-0.1 1.4M986.4 394.2l10.6-1.4 10.5-1.5 10-1.9 9.3-2.2 8.5-2.8 7.4-3.5 6.3-4.2 5-4.9 3.7-5.7 2.2-6.4 0.9-7.1-0.5-7.7-1.8-8.1-3-8.4-4-8.5-5-8.4-5.7-8.1-6.3-7.6-6.7-6.8-6.8-5.9-6.8-4.7-6.6-3.3-6.2-1.8-5.6-0.2M985.8 390.2l0.6 4 2.3 15.7 2.1 15.5 1.8 14.9 1.3 14.1M962.7 397.5l2.6-0.4 10.4-1.6 10.7-1.3"/>
<path stroke="#d6801e" d="M990.3 514.9l-2.2-0.5-2.4-0.5-2.4-0.3-2.6-0.1-2.6-0.1-2.7 0.1M854.6 622.2l-0.2 1.3-0.3 2.7-0.2 2.5-0.1 2.5 0.1 2.5 0.3 2.3 0.1 0.6M973.8 396.7l10-1.3 9.8-1.4 9.3-1.7 8.7-2.1 7.9-2.7 6.8-3.3 5.8-4.1 4.4-4.8 3.2-5.6 1.8-6.4 0.5-7-0.8-7.6-2.1-8-3.3-8.4-4.2-8.4-5.1-8.4-5.9-8.1-6.3-7.6-6.6-6.8-6.7-5.9-6.7-4.7-6.4-3.4-5.9-1.8-5.4-0.3-1.2 0.2M973 392.8l0.8 3.9 2.9 15.6 2.8 15.4 2.4 14.8 2 13.9M981 509.4l-1.6 2.3-3.8 3.3-2.2 0.9M940.2 402l4.5-1 9.3-1.7 9.8-1.4 10-1.2"/>
<path stroke="#da891e" d="M988.3 514.2l-0.4-0.2-2-0.8-2.1-0.6-2.2-0.5-2.3-0.4-2.3-0.3-2.5-0.2-0.6 0M852.4 620.4l-0.1 1.9 0 2.4 0.1 2.3 0.2 2.3 0.4 2.2 0.4 2.1 0.3 1M960.8 400.2l9.3-1.1 9.1-1.2 8.7-1.5 8-2 7.3-2.5 6.2-3.2 5.2-3.9 3.9-4.7 2.7-5.4 1.4-6.2 0-6.9-1.2-7.5-2.4-8-3.5-8.3-4.5-8.4-5.2-8.3-5.9-8.1-6.4-7.5-6.6-6.9-6.6-5.9-6.5-4.7-6.2-3.5-5.7-1.9-5-0.4-1.2 0.2M959.9 396.3l0.9 3.9 3.6 15.4 3.4 15.2 3.1 14.6 2.6 13.8M976.1 503.7l-1.2 4.9-2.5 5-3.4 3.1-2.1 0.9M923.7 406.5l1.9-0.6 8.1-1.9 8.6-1.6 9.1-1.2 9.4-1"/>
<path stroke="#de911e" d="M984.6 512.3l-1.7-1-1.8-0.8-1.9-0.7-2.1-0.7-2.1-0.5-2.2-0.4-1.1-0.1M849.6 618.5l0 1.7 0.3 2.1 0.3 2.2 0.5 2 0.6 2 0.7 1.8 0.2 0.5M947.4 404.7l8.7-0.9 8.4-0.9 8-1.3 7.3-1.8 6.6-2.3 5.7-2.9 4.5-3.8 3.4-4.5 2.2-5.2 0.9-6.1-0.4-6.8-1.6-7.3-2.7-7.9-3.8-8.2-4.6-8.3-5.5-8.3-6-8-6.3-7.6-6.6-6.8-6.6-6-6.3-4.8-6-3.5-5.4-2-4.7-0.4-2.1 0.4M945.3 397l2.1 7.7 4.3 15.2 4.2 14.9 3.8 14.4 3.2 13.6 0.7 3.2M968.1 494.1l0.2 2.3-0.1 8.3-1 6.5-2 4.8-3 3-0.9 0.5M910 411.2l5-1.7 7.4-1.7 8-1.3 8.4-1 8.6-0.8"/>
<path stroke="#e09a1f" d="M980.2 509.3l-0.7-0.5-1.6-1.1-1.7-0.9-1.8-0.9-1.9-0.7-2-0.6-1-0.2M846.1 615.3l0.3 2.1 0.5 2 0.5 1.9 0.8 1.8 0.8 1.8 0.7 1.2M933.8 410.1l7.9-0.5 7.8-0.7 7.2-1.1 6.7-1.4 6-2.1 5-2.7 4-3.5 2.8-4.2 1.6-5.1 0.4-5.9-0.8-6.6-1.9-7.2-3.1-7.7-4-8.1-4.9-8.2-5.6-8.3-6.1-7.9-6.4-7.6-6.5-6.8-6.5-6-6.2-4.9-5.7-3.6-5.2-2.1-4.4-0.6-1.9 0.3M931.3 402.6l2.5 7.5 5.1 14.9 4.8 14.7 4.5 14.1 3.9 13.3 3.3 12.3 2.4 11 1.5 9.6 0.6 8-0.5 6.3-1.6 4.6-2.5 2.9-0.8 0.4M898.3 415.8l5.9-2 6.7-1.5 7.3-1 7.7-0.7 7.9-0.5"/>
<path stroke="#dfa522" d="M975.4 505.4l-1-1-1.5-1.1-1.5-1-1.7-1-1.8-0.8-0.9-0.4M842.3 612.9l0.4 1.4 0.7 1.8 0.8 1.7 0.9 1.6 0.8 1.2M920.1 416.4l7.2-0.2 6.9-0.3 6.6-0.7 6.1-1.2 5.2-1.7 4.4-2.4 3.3-3.2 2.3-4.1 1.1-4.8-0.1-5.6-1.2-6.4-2.4-7-3.4-7.6-4.3-8-5.1-8.1-5.7-8.2-6.2-7.9-6.4-7.5-6.5-6.9-6.4-6-6-5-5.6-3.7-4.9-2.2-4-0.8-2.5 0.6M915.7 405.5l4.4 10.9 5.7 14.6 5.6 14.4 5.1 13.8 4.7 12.9 3.9 12 3.1 10.7 2.1 9.3 1.1 7.8 0 6.1-1 4.4-2.1 2.6M885.7 421.7l2.3-1.1 5.3-1.8 6-1.1 6.6-0.7 7-0.4 7.2-0.2"/>
<path stroke="#ddb026" d="M970.6 500.5l-1-1-1.3-1.3-1.5-1.1-1.5-1-0.4-0.3M838.5 610.6l0.2 0.5 0.9 1.6 1.1 1.5 1.1 1.4M906.2 423.6l6.5 0.2 6.2 0 5.9-0.3 5.4-0.8 4.5-1.4 3.8-2.1 2.7-2.8 1.7-3.8 0.6-4.5-0.6-5.4-1.7-6.2-2.7-6.8-3.8-7.4-4.5-7.8-5.4-8-5.9-8.1-6.2-7.9-6.5-7.5-6.5-6.9-6.2-6.1-5.9-5-5.4-3.8-4.5-2.4-3.8-0.9-2.1 0.4M901.3 413l4.9 10.6 6.5 14.3 6.2 13.9 5.9 13.4 5.4 12.7 4.5 11.6 3.8 10.4 2.7 9 1.7 7.4 0.6 5.8-0.6 4.2-1.7 2.4M875.7 426.9l2-0.9 4.5-1.4 5.4-0.8 5.9-0.3 6.2 0 6.5 0.1"/>
<path stroke="#dcba28" d="M966.5 495.5l-1.2-1.4-1.2-1.4-0.3-0.3"/>
<path stroke="#dcd53c" d="M880.8 424.2l-5.3 2.8-5.4 3.1-5.3 3.2-5.3 3.3-5.2 3.5-5.3 3.7-5.2 3.8-5.1 3.9-5 4-5 4.2-4.9 4.3-4.9 4.3-4.7 4.5-4.6 4.6-4.5 4.6-4.4 4.8-4.2 4.7-4.1 4.9-4 4.9-3.8 4.9-3.7 5-3.5 4.9-0.8 1.3"/>
<path stroke="#dcd63e" d="M915.5 409.2l-2.8 1-5.5 2-5.5 2.3-5.6 2.5-5.6 2.6-5.6 2.9-5.7 3-5.6 3.2-5.6 3.4-5.7 3.6-5.5 3.7-5.6 3.9-5.5 4-5.4 4.1-5.3 4.3-5.3 4.4-5.2 4.5-5.1 4.7-5 4.7-4.9 4.8-4.8 5-4.6 5-4.5 5-4.4 5.1-4.2 5.2-4 5.2-3.9 5.3-3.7 5.3-3.5 5.3-3.4 5.3-3.1 5.3-3 5.2-2.7 5.3-1.9 3.9"/>
<path stroke="#ddd83f" d="M937.5 402.7l-1.4 0.3-5.6 1.6-5.7 1.7-5.7 2-5.8 2.2-5.9 2.4-5.9 2.6-6 2.8-5.9 3-6 3.3-5.9 3.4-6 3.5-5.9 3.8-5.9 3.9-5.9 4.1-5.8 4.2-5.7 4.4-5.7 4.6-5.6 4.6-5.5 4.8-5.4 4.9-5.2 5-5.2 5.1-5 5.2-4.9 5.3-4.8 5.4-4.6 5.4-4.5 5.5-4.2 5.5-4.1 5.5-3.9 5.6-3.8 5.6-3.5 5.6-3.3 5.6-3.1 5.6-3 5.6-2.6 5.5-2.5 5.5-2.2 5.4-1.1 2.7"/>
<path stroke="#ded941" d="M954.1 399l-4.3 0.9-5.8 1.4-5.9 1.6-6 1.9-6.1 2.1-6.1 2.3-6.2 2.5-6.3 2.8-6.2 3-6.3 3.1-6.3 3.4-6.3 3.6-6.3 3.8-6.3 4-6.2 4.1-6.2 4.3-6.1 4.5-6 4.6-6 4.8-5.9 4.9-5.8 5.1-5.7 5.2-5.6 5.2-5.5 5.4-5.3 5.5-5.2 5.6-5 5.7-4.8 5.7-4.7 5.8-4.5 5.8-4.4 5.8-4.1 5.9-3.9 5.9-3.8 6-3.5 5.9-3.3 5.9-3 5.8-2.9 5.9-2.6 5.8-2.3 5.7-2.2 5.7-1.8 5.6"/>
<path stroke="#dfdb43" d="M968.9 396.5l-4.4 0.7-6 1.2-6.2 1.5-6.2 1.7-6.3 2-6.4 2.2-6.5 2.4-6.5 2.7-6.6 2.9-6.6 3.1-6.6 3.4-6.7 3.6-6.6 3.7-6.6 4-6.6 4.2-6.6 4.4-6.5 4.5-6.4 4.7-6.4 4.9-6.3 5-6.2 5.2-6.2 5.3-6 5.5-5.8 5.6-5.8 5.7-5.6 5.7-5.4 5.9-5.3 6-5.2 6-4.9 6.1-4.8 6.1-4.5 6.2-4.4 6.2-4.1 6.2-3.9 6.3-3.7 6.2-3.5 6.2-3.2 6.2-3 6.2-2.8 6.1-2.5 6-2.2 6-2 5.9-1.7 5.8"/>
<path stroke="#e0dc44" d="M981.5 394.7l-1.5 0.2-6.2 1-6.4 1.3-6.4 1.5-6.6 1.8-6.6 2.1-6.8 2.3-6.8 2.6-6.8 2.8-6.9 3-7 3.3-6.9 3.6-7 3.7-7 4-6.9 4.2-7 4.4-6.9 4.6-6.8 4.7-6.8 5-6.7 5.1-6.7 5.3-6.5 5.5-6.4 5.6-6.3 5.7-6.2 5.9-6.1 6-5.9 6-5.7 6.2-5.6 6.3-5.4 6.3-5.1 6.4-5 6.5-4.8 6.5-4.6 6.5-4.4 6.5-4.1 6.6-3.9 6.5-3.7 6.6-3.4 6.5-3.1 6.5-2.9 6.4-2.6 6.3-2.3 6.3-2.1 6.2-1.8 6.2-0.8 3"/>
<path stroke="#bf2616" d="M1203.2 417.8l0.3-1.7 0.5-7-0.7-5.5"/>
<path stroke="#c33c18" d="M1063.6 410.4l14.7-0.5 14.4-0.7 3.5-0.2M1169 387.9l3.6-4.5 3.3-6.6 1.7-7.2 0.1-7.7-1.5-8.1-2.8-8.2-4.1-8.2-5.2-8-6.1-7.6-5.1-5.2M1063.6 410.4l-1.8 14.9-1.9 14.7-2.1 14.1"/>
<path stroke="#c44418" d="M1056.8 404.9l14.3-0.8 14.1-0.9 13.6-1.3 3.3-0.4M1157.9 381.4l4.8-6 3.1-6.8 1.5-7.3-0.1-7.9-1.6-8.1-2.9-8.4-4.2-8.3-5.2-8-6.2-7.5-6.8-6.9-7.3-5.9M1056.8 404.9l-1.4 15.2-1.6 15-1.8 14.3-1 6.9M982.4 510.9l-1.9-1.3-7.3-5.9-6.8-6.9-1.6-1.8"/>
<path stroke="#cb621b" d="M1020.9 392.7l12.5-1.4 12.2-1.6 11.7-1.9 11.1-2.4 10.1-2.8 9.1-3.6 7.8-4.2 6.4-5 5-5.8 3.5-6.4 2-7.2 0.5-7.7-1-8.1-2.3-8.5-3.5-8.5-4.6-8.4-5.5-8.1-6.2-7.6-6.7-6.8-7.1-5.9-7.2-4.6-7.1-3.4-6.9-1.8M1020.8 388.7l0.1 4 0.5 15.9 0.3 15.5 0 15-0.4 14.2M988.7 514.6l-1.6-0.2-6.9-1.8-7.1-3.3"/>
<path stroke="#dcb928" d="M892.3 431.7l5.8 0.6 5.5 0.4 5.2 0.1 4.7-0.4 3.9-1 3.1-1.7 2.1-2.5 1.1-3.4 0-4.3-1-5.1-2.2-5.9-3.1-6.6-4-7.2-4.9-7.6-5.6-7.9-6-8-6.4-7.8-6.5-7.5-6.4-6.9-6.2-6.2-5.7-5.1-5.1-3.9-4.3-2.6-3.4-1.1-1.9 0.2M886.9 421.3l5.4 10.4 7.2 13.8 7 13.5 6.6 13 6 12.3 5.3 11.2 4.4 10 3.3 8.6 2.3 7.2 1.1 5.5-0.1 3.8-1.2 2.2M864.9 433.2l2.4-1.2 3.9-1 4.7-0.4 5.1 0.1 5.6 0.4 5.7 0.6"/>
<path stroke="#dabc29" d="M878.6 440.5l5 1.1 4.8 0.8 4.5 0.6 4 0 3.2-0.5 2.5-1.4 1.5-2.1 0.5-3-0.5-3.9-1.5-4.8-2.6-5.6-3.5-6.4-4.4-7-5.2-7.4-5.7-7.8-6.2-7.9-6.5-7.8-6.5-7.4-6.4-7-6.1-6.1-5.6-5.3-4.9-4-4-2.8-3.1-1.3-1.5 0.1M870.7 427.2l7.9 13.3 7.9 13.4 7.7 13 7.3 12.6 6.7 11.8 5.9 10.8 5 9.6 4 8.2 2.8 6.8 1.7 5.1 0.4 3.6-0.8 1.8M855.1 439.5l1.9-1 3.3-0.5 3.9 0 4.5 0.6 4.8 0.9 5.1 1"/>
<path stroke="#d7be2a" d="M865 450l4.3 1.6 4.1 1.4 3.8 1 3.3 0.5 2.6-0.1 1.8-0.8 0.9-1.8 0-2.6-1.1-3.5-2-4.5-3-5.3-3.9-6.1-4.7-6.7-5.4-7.3-6-7.6-6.3-7.8-6.6-7.7-6.6-7.5-6.3-6.9-6-6.2-5.5-5.4-4.6-4.2-3.8-2.9-2.7-1.6-1.3-0.1M856.3 437.2l8.7 12.8 8.6 12.9 8.4 12.6 8 12.1 7.4 11.3 6.6 10.3 5.6 9.2 4.6 7.8 3.4 6.3 2.1 4.8 0.9 3.2-0.3 1.6M845.1 446.5l1.8-0.8 2.6-0.1 3.2 0.5 3.8 1 4.2 1.4 4.3 1.5"/>
<path stroke="#d5c02b" d="M851.6 460.3l3.6 2 3.5 2 3.1 1.5 2.6 1 1.9 0.4 1.2-0.4 0.4-1.2-0.6-2.2-1.6-3.2-2.5-4.1-3.4-4.9-4.3-5.8-5-6.6-5.7-7-6.2-7.5-6.5-7.6-6.6-7.7-6.6-7.4-6.4-7-5.9-6.3-5.2-5.4-4.5-4.4-3.5-3.2-2.4-1.8-1.2-0.3M842.3 447.9l9.3 12.4 9.4 12.3 9.1 12 8.6 11.6 8.1 10.8 7.2 9.8 6.3 8.7 5.1 7.4 4 5.9 2.6 4.4 1.4 2.8 0.2 1.1M835.7 453.7l1.2-0.4 2 0.4 2.6 1 3.1 1.6 3.4 1.9 3.6 2.1"/>
<path stroke="#d3c32c" d="M838.6 471.1l3 2.6 2.7 2.5 2.5 2.1 1.9 1.6 1.3 0.9 0.6 0.1-0.2-0.8-1.2-1.7-2-2.8-2.9-3.7-3.9-4.6-4.6-5.5-5.4-6.3-5.9-6.8-6.4-7.3-6.7-7.5-6.7-7.6-6.6-7.4-6.3-7-5.9-6.4-5.1-5.6-4.2-4.5-3.3-3.4-2.1-2-0.8-0.6M828.6 459.3l10 11.8 10 11.7 9.8 11.5 9.3 11 8.7 10.3 7.9 9.3 6.9 8.2 5.7 6.9 4.5 5.5 3.2 3.9 1.8 2.5 0.5 0.8M826.6 461.3l0.6 0.1 1.3 0.9 2 1.5 2.4 2.2 2.8 2.4 2.9 2.7"/>
<path stroke="#d2c42c" d="M826 482.4l2.3 3.3 2.1 3 1.8 2.7 1.3 2.2 0.7 1.4 0 0.6-0.8-0.2-1.6-1.3-2.5-2.3-3.4-3.3-4.3-4.3-5-5.2-5.6-5.9-6.2-6.7-6.6-7.1-6.8-7.4-6.8-7.5-6.7-7.4-6.3-7-5.7-6.4-5-5.7-4-4.8-3-3.6-1.8-2.3-0.5-0.9M815.4 471.3l10.6 11.1 10.7 11.2 10.4 10.9 10 10.4 9.3 9.7 8.5 8.8 7.4 7.6 6.3 6.4 5 5 3.7 3.6 2.3 2 0.8 0.6M817.8 469.2l0 0.6 0.7 1.5 1.3 2.1 1.8 2.7 2.1 3.1 2.3 3.2"/>
<path stroke="#d1c42e" d="M813.9 494.2l1.7 3.9 1.5 3.7 1.1 3.3 0.7 2.7 0.2 2-0.6 1.2-1.3 0.2-2.2-0.7-3-1.9-3.8-2.9-4.6-3.9-5.4-4.8-5.9-5.7-6.4-6.4-6.8-6.9-7-7.3-6.9-7.4-6.6-7.3-6.3-7.1-5.6-6.5-4.9-5.9-3.9-4.9-2.7-3.8-1.5-2.6-0.1-1.3M802.6 483.7l11.3 10.5 11.3 10.6 11.1 10.3 10.6 9.8 9.9 9.1 9.1 8.2 8 7.1 6.8 5.9 5.5 4.5 4.1 3.1 2.7 1.6 1.1 0.3M809.3 477.5l-0.5 1.2 0.1 2 0.7 2.7 1.2 3.3 1.5 3.7 1.6 3.8"/>
<path stroke="#d1c52f" d="M802.4 506.5l1 4.5 0.9 4.3 0.6 3.9 0.1 3.3-0.4 2.6-1.1 1.8-1.8 0.8-2.6-0.3-3.5-1.4-4.2-2.4-5-3.5-5.7-4.6-6.2-5.3-6.7-6.2-6.9-6.7-7.1-7.2-7-7.3-6.7-7.3-6.2-7.1-5.6-6.6-4.7-6-3.7-5.1-2.5-4.1-1.2-2.9 0-1.3M790.5 496.6l11.9 9.9 11.9 9.8 11.7 9.7 11.1 9.2 10.5 8.5 9.7 7.6 8.5 6.5 7.3 5.4 6 4 4.6 2.6 3.1 1.2 1.6-0.2M801.3 486l-1.1 1.8-0.5 2.6 0.2 3.3 0.6 3.9 0.9 4.3 1 4.6"/>
<path stroke="#d0c530" d="M791.5 519l0.5 5.1 0.3 5 0 4.5-0.4 4-0.9 3.2-1.6 2.4-2.4 1.3-3 0.2-3.9-0.8-4.6-2-5.4-3.2-5.9-4.1-6.5-5.1-6.9-5.9-7.1-6.5-7.2-7-7.1-7.3-6.7-7.3-6.2-7.1-5.5-6.7-4.6-6.1-3.5-5.3-2.3-4.3-1-3.2 0.3-1.6M779 509.7l12.5 9.3 12.5 9.2 12.2 9 11.7 8.6 11.1 7.8 10.1 7 9.1 6 7.8 4.8 6.4 3.5 5 2.1 3.5 0.8 2-0.7M793.2 495.3l-1.2 1.8-0.9 3.2-0.4 4 0 4.6 0.3 4.9 0.5 5.2"/>
<path stroke="#d0c532" d="M781.3 531.7l0 5.9-0.2 5.6-0.5 5.2-1 4.6-1.4 3.8-2.1 3-2.7 1.9-3.5 0.7-4.3-0.3-5-1.6-5.6-2.7-6.3-3.8-6.7-4.8-7.1-5.6-7.3-6.4-7.3-6.8-7.1-7.2-6.8-7.2-6.2-7.2-5.4-6.8-4.5-6.2-3.3-5.5-2.1-4.6-0.7-3.5 0.4-1.9M771.6 525.3l9.7 6.4 13 8.6 12.8 8.4 12.2 7.9 11.6 7.2 10.6 6.4 9.6 5.3 8.2 4.3 6.9 2.9 5.4 1.7 3.8 0.3 2.3-1.1M785.9 504.4l-1.5 2.3-1.4 3.8-0.9 4.6-0.5 5.2-0.2 5.6-0.1 5.8"/>
<path stroke="#cfc633" d="M771.9 544.7l-0.5 6.5-0.7 6.3-1 5.8-1.4 5.3-1.9 4.4-2.5 3.6-3.2 2.4-3.9 1.4-4.6 0.1-5.3-1.1-6-2.3-6.5-3.5-7-4.4-7.3-5.4-7.4-6.1-7.4-6.7-7.2-7.1-6.8-7.2-6.1-7.2-5.4-6.9-4.4-6.4-3.2-5.7-1.9-4.9-0.4-3.8 0.6-2.1M761.8 538.7l10.1 6 13.5 7.9 13.2 7.7 12.8 7.2 12 6.6 11.1 5.7 10 4.8 8.6 3.6 7.3 2.5 5.7 1.1 4.2-0.1 2.6-1.5M778.6 514.4l-1.2 1.9-1.9 4.5-1.4 5.2-0.9 5.9-0.7 6.3-0.6 6.5"/>
<path stroke="#cec634" d="M763.3 557.7l-1 7.2-1.1 6.9-1.4 6.6-1.8 5.9-2.4 5.1-2.9 4.1-3.5 3-4.3 1.9-4.9 0.6-5.6-0.6-6.3-1.9-6.7-3.1-7.2-4.1-7.5-5.2-7.5-5.9-7.6-6.5-7.2-7-6.8-7.2-6.1-7.2-5.3-7-4.3-6.5-3.1-6-1.7-5.1-0.3-4.1 0.8-2.4M752.9 552.3l10.4 5.4 14 7.2 13.7 7 13.1 6.6 12.5 5.9 11.5 5.1 10.4 4.2 9 3.1 7.6 1.9 6.1 0.6 4.5-0.6 2.9-1.9M771.7 524.9l-0.7 1.1-2.3 5.1-1.8 5.9-1.4 6.5-1.2 7-1 7.2"/>
<path stroke="#cec635" d="M755.6 570.7l-1.4 7.9-1.5 7.6-1.8 7.2-2.2 6.6-2.7 5.7-3.3 4.7-3.9 3.6-4.6 2.4-5.2 1.1-5.9-0.1-6.5-1.5-7-2.7-7.3-3.8-7.6-4.9-7.7-5.7-7.6-6.4-7.3-6.9-6.8-7.2-6.2-7.2-5.2-7.1-4.2-6.7-2.9-6.1-1.6-5.4-0.1-4.4 0.6-1.9M748.4 567.4l7.2 3.3 14.4 6.5 14.1 6.4 13.5 5.9 12.9 5.3 11.8 4.5 10.8 3.5 9.4 2.5 7.9 1.4 6.4 0.1 4.7-1.1 3.1-2.3 0.6-0.7M765.3 535.7l-2.7 5.8-2.2 6.5-1.8 7.2-1.6 7.6-1.4 7.9"/>
<path stroke="#cdc636" d="M748.8 583.6l-1.7 8.6-1.9 8.3-2.2 7.9-2.5 7.1-3 6.4-3.6 5.3-4.2 4.2-4.8 2.9-5.6 1.7-6.1 0.2-6.7-1-7.1-2.3-7.6-3.6-7.7-4.6-7.8-5.5-7.7-6.3-7.3-6.8-6.9-7.1-6.1-7.3-5.2-7.1-4.1-6.9-2.8-6.3-1.5-5.6 0.1-4.8 0.6-2M741.5 580.7l7.3 2.9 14.7 5.9 14.5 5.7 13.9 5.2 13.2 4.6 3.1 1.1M838 613.8l8.2 0.8 6.7-0.4 5-1.5 3.3-2.7 0.6-0.8M759.4 546.9l-2.2 4.8-2.6 7.2-2.1 7.9-1.9 8.3-1.8 8.5"/>
<path stroke="#cdc738" d="M743 596.4l-2 9.2-2.2 9-2.5 8.5-2.8 7.9-3.3 6.9-3.8 5.9-4.5 4.8-5.1 3.5-5.7 2.1-6.4 0.7-6.8-0.7-7.4-1.9-7.6-3.2-7.9-4.4-7.9-5.3-7.7-6.1-7.4-6.7-6.9-7.2-6.1-7.2-5.1-7.3-4.1-7-2.7-6.5-1.3-5.9 0.2-5 0.3-1.2M739.3 595.1l3.7 1.3 15 5.2 14.8 5 14.2 4.6 10.2 3.1M846.3 622.2l3.2-0.6 5.2-2 3.5-3.1 1.2-1.9M753.3 560.1l-0.7 1.8-2.9 7.8-2.4 8.5-2.2 9-2.1 9.2"/>
<path stroke="#ccc739" d="M738.2 609l-2.3 9.8-2.4 9.7-2.7 9.1-3.1 8.5-3.5 7.5-4.1 6.6-4.6 5.3-5.3 3.9-6 2.6-6.5 1.2-7-0.2-7.5-1.7-7.7-2.9-8-4.1-8-5.1-7.8-6-7.4-6.6-6.8-7.1-6.1-7.3-5.1-7.3-4-7.2-2.7-6.7-1.2-6.1 0.3-5.4 0.3-1.2M734.4 607.8l3.8 1.2 15.3 4.5 15 4.3 14.5 4 10.3 2.6M747.2 576l-1.5 4.3-2.7 9.2-2.4 9.6-2.4 9.9"/>
<path stroke="#ccc73a" d="M734.5 621.2l-2.5 10.5-2.7 10.3-2.9 9.7-3.2 9.1-3.7 8.2-4.3 7-4.8 5.9-5.5 4.5-6 3-6.7 1.7-7.1 0.1-7.6-1.3-7.9-2.6-8-3.8-8-5-7.8-5.8-7.5-6.6-6.9-7-6-7.4-5.1-7.4-4-7.2-2.6-7-1.1-6.3 0.4-5.7M730.6 620.2l3.9 1 15.4 3.9 15.2 3.7 14.7 3.3 10.5 2.2M739.6 600.4l-2.6 10.3-2.5 10.5"/>
<path stroke="#cbc73c" d="M731.8 633l-2.7 11.2-2.8 10.8-3 10.4-3.4 9.7-3.8 8.7-4.4 7.6-4.9 6.4-5.6 5-6.2 3.5-6.7 2-7.2 0.6-7.7-1-7.9-2.3-8.1-3.6-8.1-4.8-7.9-5.7-7.4-6.4-6.9-7.1-6.1-7.3-5-7.5-4-7.4-2.5-7.1-1.1-6.7 0.2-4.5M727.9 632.2l3.9 0.8 15.6 3.3 15.3 3.1 14.8 2.7 10.6 1.7"/>
<path stroke="#cbc83d" d="M730.1 644.4l-2.7 11.7-2.9 11.5-3.1 11-3.4 10.2-4 9.3-4.4 8.1-5 6.9-5.7 5.5-6.2 3.9-6.8 2.4-7.3 0.9-7.7-0.6-8-2.1-8.1-3.3-8.1-4.6-7.8-5.6-7.5-6.4-6.9-7-6.1-7.4-5-7.5-3.9-7.6-2.6-7.2-1-6.9 0-3.2M726.2 643.7l3.9 0.7 15.7 2.7 15.4 2.5 14.9 2.1 10.7 1.3"/>
<path stroke="#cac83e" d="M729.6 655.3l-2.8 12.2-2.9 12.1-3.1 11.5-3.5 10.8-3.9 9.8-4.5 8.6-5.1 7.4-5.6 5.9-6.3 4.4-6.8 2.8-7.3 1.2-7.7-0.3-8-1.8-8.1-3.2-8.1-4.4-7.9-5.4-7.5-6.3-6.9-7-6-7.4-5.1-7.7-3.9-7.6-2.5-7.5-1.1-7M729.6 655.3l15.7 2.1 15.4 1.9 15 1.6 10.6 0.9M854.2 635.8l0-1.6-1.1-7.1-2.5-7.4"/>
<path stroke="#cac643" d="M730.1 665.5l-2.7 12.8-2.9 12.6-3.1 12-3.4 11.3-4 10.3-4.4 9.1-5 7.8-5.7 6.4-6.2 4.8-6.8 3.1-7.3 1.6-7.7-0.1-8-1.5-8.1-3-8.1-4.2-7.8-5.3-7.5-6.3-6.9-6.9-6.1-7.5-5-7.7-3.9-7.8-2.6-7.6-0.7-3.6M726.2 665.1l3.9 0.4 15.7 1.6 15.4 1.4 14.9 1 10.7 0.5M854.3 637.1l-0.9-5.5-2.6-7.6-3.9-7.8"/>
<path stroke="#c9c548" d="M731.8 675.1l-2.7 13.3-2.8 13.1-3 12.5-3.4 11.8-3.8 10.7-3.2 7.3M699.7 762.5l-4.7 3.7-6.7 3.5-7.2 1.9-7.7 0.2-7.9-1.3-8.1-2.8-8.1-4.1-7.9-5.2-7.4-6.2-6.9-6.9-6.1-7.5-5-7.7-4-7.9-2.5-7.8M727.9 674.8l3.9 0.3 15.6 1.1 15.3 0.9 14.8 0.5 7.1 0.2M854.5 637.7l-0.4-1.9-2.6-7.8-3.9-7.9-3.7-5.8"/>
<path stroke="#c8c44c" d="M734.5 683.9l-2.5 13.8-2.7 13.5-2.9 13-3.2 12.2M697.3 779.9l-5.1 2.7-7.1 2.2-7.6 0.5-7.9-1.1-8-2.6-8-4-7.8-5.1-7.5-6.1-6.9-6.9-6-7.5-5.1-7.8-4-8M734.5 683.9l15.4 0.7 15.2 0.4 14.7 0.1 7-0.1M853.4 633.7l-0.8-2-3.9-8-5.1-7.8-2.9-3.8"/>
<path stroke="#c8c251" d="M738.2 692l-2.3 14.2-2.4 14-2.7 13.4M701.1 792.6l-3.4 1.9-7 2.4-7.5 0.7-7.7-0.9-8-2.5-8-3.8-7.8-5-7.4-6.1-6.8-6.9-6.1-7.5-5.1-7.9M734.4 692l3.8 0 15.3 0.2 15 0.1 14.5-0.3 3.5-0.2M851.3 629.1l-1.1-2.1-5.1-7.9-6.1-7.5"/>
<path stroke="#c8c056" d="M743 699.3l-2 14.6-2.2 14.3-0.6 3.5M704.7 805l-6.8 2.7-7.4 0.9-7.6-0.7-7.9-2.3-7.9-3.7-7.7-5-7.4-6-6.9-6.9-3.1-3.7M743 699.3l15-0.2 14.8-0.3 14.2-0.7"/>
<path stroke="#c7bf5a" d="M711.6 815.2l-5.1 2-7.1 1.1-7.6-0.6-7.7-2.1-7.8-3.6-7.7-4.9-7.3-6-6.9-6.8-3.1-3.7M748.8 705.7l14.7-0.5 14.5-0.7 7-0.5"/>
<path stroke="#c6be5f" d="M718.3 824.8l-1.7 0.6-7 1.2-7.3-0.4-7.6-2.1-7.7-3.5-7.6-4.8-7.3-5.9-6.8-6.9-3.2-3.7M755.6 711.2l14.4-0.8 14.1-1 3.4-0.3"/>
<path stroke="#c6bc64" d="M726.5 832.6l-5.1 0.9-7.2-0.3-7.5-2-3.8-1.5"/>
</g>
<g fill="none" stroke-linecap="round" stroke-linejoin="round" stroke-width="1.60">
<path stroke="#ddda45" d="M1078.2 433l-0.8-2.3-2-4.3-2.2-4-2.5-3.9-2.9-3.6-3-3.3-3.4-3.1-3.6-2.9-3.9-2.5-4.2-2.4-4.3-2-4.7-1.8-4.8-1.5-5.1-1.2-5.3-0.9-5.5-0.7-5.7-0.3-5.9-0.1-6 0.2-6.3 0.5-3.1 0.3"/>
<path stroke="#a9a735" d="M733.4 625.3l-0.4 1.6-1.2 6.2-1 6.1-0.7 5.9-0.4 5.8-0.1 5.6 0.2 5.4 0.5 5.3 0.9 5.1 1.1 4.9 1.4 4.7 1.7 4.4 2.1 4.3 2.3 4 2.6 3.8 2.8 3.5 3.2 3.3 3.4 3.1 3.7 2.8 3.9 2.5 4.2 2.2 4.5 2 4.6 1.7 4.9 1.5 5.2 1.1 5.3 0.9"/>
<path stroke="#dedb49" d="M1096.9 462.8l-0.1-5.8-0.5-5.6-0.8-5.3-1.1-5.2-1.4-4.9-1.7-4.8-0.5-1.1"/>
<path stroke="#aaa838" d="M757.3 726.8l1 0.6 4.4 2.4 4.7 2 4.9 1.8 5.1 1.5 5.4 1.2 5.6 0.9"/>
<path stroke="#dfdd4d" d="M1110.9 464.5l-0.2-6-0.5-5.8-0.8-5.6-1.2-5.4-1.4-5.2-1.9-4.9-2.1-4.7-2.4-4.4-2.8-4.2-1.5-2"/>
<path stroke="#aba93b" d="M743.3 730.1l1.8 1.8 3.7 3.3 4 3 4.4 2.8 4.5 2.5 4.9 2.1 5.1 1.9 5.4 1.6 5.6 1.2 5.8 1"/>
<path stroke="#e0de51" d="M1124.5 466l-0.2-6.2-0.5-6.1-0.9-5.8-1.2-5.6-1.6-5.4-1.8-5.2-2.3-4.9-2.5-4.6-2.9-4.4-3.2-4.1-3.5-3.8-3.8-3.5"/>
<path stroke="#abaa3e" d="M733.4 732.6l2.9 4.3 3.3 4 3.6 3.8 3.9 3.4 4.2 3.2 4.5 2.9 4.8 2.6 5 2.2 5.4 2 5.6 1.6 5.8 1.3 6.1 1"/>
<path stroke="#e1e055" d="M1137.5 467.2l-0.2-6.5-0.6-6.3-0.9-6.1-1.2-5.8-1.6-5.6-2-5.4-2.3-5.1-2.7-4.8-3-4.6-3.3-4.2-3.6-4-4-3.7-4.3-3.3-3.5-2.4"/>
<path stroke="#acab41" d="M726.2 735.8l1.9 3.7 2.7 4.8 3.1 4.5 3.4 4.2 3.7 3.9 4.1 3.6 4.3 3.3 4.7 3 5 2.7 5.2 2.3 5.6 2 5.8 1.7 6.1 1.4 6.3 1"/>
<path stroke="#e3e159" d="M1149.7 467.8l-0.2-6.7-0.5-6.5-1-6.3-1.3-6.1-1.6-5.8-2.1-5.6-2.4-5.3-2.7-5-3.1-4.7-3.5-4.4-3.8-4.1-4.1-3.8-4.5-3.5-4.8-3.2-5.1-2.9"/>
<path stroke="#adac44" d="M720 738.2l0.5 1.4 2.1 5.5 2.5 5.2 2.8 5 3.2 4.6 3.5 4.4 3.9 4 4.2 3.8 4.5 3.4 4.9 3.1 5.1 2.8 5.5 2.4 5.7 2.1 6.1 1.8 6.3 1.4 6.6 1.1"/>
<path stroke="#d4d357" d="M1161.1 467.9l-0.2-7-0.6-6.7-1-6.6-1.3-6.2-1.8-6-2.1-5.8-2.4-5.5-2.9-5.1-3.2-4.9-3.6-4.6-3.9-4.3-4.3-3.9-4.6-3.6-4.9-3.3-5.3-3-5.6-2.6"/>
<path stroke="#aead47" d="M714.7 741.6l0.4 1.6 1.8 5.9 2.2 5.7 2.5 5.4 3 5.1 3.3 4.9 3.6 4.5 4 4.2 4.4 3.8 4.7 3.6 5 3.2 5.3 2.9 5.7 2.5 5.9 2.2 6.3 1.8 6.5 1.5 6.8 1.1"/>
<path stroke="#d5d45b" d="M1171.4 467.3l-0.2-7.2-0.6-7-1-6.7-1.4-6.5-1.8-6.2-2.2-5.9-2.5-5.7-3-5.3-3.3-5.1-3.7-4.7-4-4.4-4.4-4.1-4.8-3.7-5.1-3.4-5.5-3-5.7-2.7-3-1.2"/>
<path stroke="#afae4a" d="M709.8 746.7l1.2 4.8 1.9 6.1 2.2 5.9 2.7 5.6 3 5.3 3.4 4.9 3.8 4.7 4.1 4.3 4.5 4 4.8 3.7 5.2 3.3 5.5 3 5.9 2.6 6.1 2.2 6.4 1.9 6.8 1.5 7 1.1"/>
<path stroke="#c3c356" d="M1180.5 466l-0.2-7.4-0.6-7.2-1-6.9-1.5-6.7-1.8-6.4-2.2-6.1-2.7-5.8-3-5.5-3.4-5.2-3.8-4.9-4.2-4.5-4.5-4.2-4.9-3.9-5.3-3.5-5.6-3.1-5.9-2.8-4.7-1.8"/>
<path stroke="#b0af4e" d="M704.6 750.3l0.3 1.7 1.5 6.6 1.9 6.4 2.4 6 2.7 5.8 3.1 5.4 3.5 5.1 3.9 4.8 4.2 4.5 4.7 4.1 5 3.8 5.3 3.4 5.7 3 6 2.7 6.3 2.3 6.6 2 7 1.5 7.2 1.2"/>
<path stroke="#c4c45a" d="M1188.4 463.9l-0.2-7.6-0.6-7.4-1.1-7.1-1.4-6.9-1.9-6.5-2.3-6.3-2.7-6-3.2-5.6-3.5-5.4-3.9-5-4.3-4.6-4.6-4.3-5.1-4-5.4-3.6-5.7-3.2-6.1-2.8"/>
<path stroke="#b1b051" d="M700.1 759.5l1.2 5.1 2 6.5 2.4 6.2 2.8 5.9 3.2 5.6 3.6 5.2 4 5 4.4 4.5 4.7 4.3 5.1 3.8 5.5 3.5 5.9 3.2 6.1 2.7 6.5 2.4 6.9 2 7.1 1.6 7.4 1.2"/>
<path stroke="#c5c25f" d="M1195 461.1l-0.2-7.9-0.7-7.5-1-7.3-1.6-7-1.9-6.8-2.3-6.4-2.8-6.1-3.2-5.8-3.6-5.5-4-5.1-4.4-4.8-4.8-4.4-5.2-4.1-4.1-2.8"/>
<path stroke="#b1af55" d="M696.7 772.6l1.1 3.3 2.5 6.3 2.8 6.1 3.3 5.7 3.7 5.4 4.1 5 4.5 4.7 4.8 4.4 5.3 3.9 5.6 3.6 6 3.2 6.3 2.9 6.7 2.4 7 2.1 7.3 1.6 7.6 1.2"/>
<path stroke="#c5bb66" d="M1200.2 457.4l-0.2-7.9-0.7-7.8-1.1-7.4-1.5-7.2-2-6.9-2.4-6.6-2.9-6.2-3.2-6-2.8-4.2"/>
<path stroke="#b1a85c" d="M702.5 800.7l1.9 2.7 4.2 5.1 4.6 4.8 4.9 4.5 5.4 4 5.8 3.7 6.1 3.3 6.4 2.9 6.8 2.5 7.2 2.1 7.5 1.6 7.7 1.3"/>
<path stroke="#c4b46d" d="M1204 453.1l-0.3-8.2-0.6-7.8-1.2-7.7-1.5-7.3-2-7-2.5-6.7M717.8 824.8l5.8 3.7 6.2 3.4 6.6 2.9 7 2.6 7.3 2.1 7.6 1.7 7.9 1.3"/>
<path stroke="#b09c69" d="M1206.4 448.1l-0.3-8.3-0.7-8.1-1.1-7.7-1.2-5.6"/>
<path stroke="#c4ae74" d="M727.2 835.1l3.4 1.4 7.1 2.6 7.4 2.2 7.7 1.7 8.1 1.3"/>
<path stroke="#b0966f" d="M1207.4 442.4l-0.3-8.4-0.7-8.2-0.2-1.9"/>
<path stroke="#c4a77c" d="M733.4 840l5.7 1.6 7.8 1.8 8.2 1.3"/>
<path stroke="#c3a083" d="M1207 436.3l-0.2-8.6-0.7-8.2-0.2-2"/>
<path stroke="#b09076" d="M730.8 840.1l1.9 0.5 8 1.8 8.3 1.3"/>
<path stroke="#c3998a" d="M1205.5 429.7l-0.3-8.6-0.7-8.3-1.2-8.1-1.6-7.7-1.6-5.6"/>
<path stroke="#af897c" d="M707.6 831.9l3.5 1.5 7.4 2.7 7.7 2.2 8 1.8 8.4 1.4"/>
<path stroke="#c39291" d="M1202.8 423l-0.3-8.7-0.7-8.4-1.2-8.2-1.7-7.8-2.1-7.5-2.7-7.1-1.4-3.5"/>
<path stroke="#af8383" d="M689.1 822.2l1.6 0.9 6.6 3.6 7.1 3.2 7.4 2.7 7.8 2.2 8.1 1.9 8.4 1.3"/>
<path stroke="#c28b98" d="M1199 416l-0.3-8.7-0.7-8.4-1.2-8.2-1.7-7.9-2.1-7.5-2.7-7.2-3.1-6.8-3.6-6.5"/>
<path stroke="#af7d89" d="M673.2 811.3l4.5 3.2 6.3 4.1 6.6 3.6 7.1 3.1 7.5 2.7 7.8 2.3 8.1 1.9 8.6 1.3"/>
<path stroke="#c284a0" d="M1194.3 409.2l-0.3-8.8-0.7-8.5-1.2-8.2-1.7-7.8-2.2-7.6-2.6-7.2-3.1-6.9-3.6-6.5-4.1-6.1M661.1 801l4.2 3.6 5.8 4.5 6.4 4 6.7 3.6 7.1 3.2 7.4 2.7 7.9 2.3 8.2 1.8 8.5 1.4"/>
<path stroke="#c27da7" d="M1188.8 402.5l-0.3-8.8-0.7-8.5-1.2-8.2-1.7-7.8-2.2-7.6-2.6-7.2-3.2-6.9-3.5-6.5-4.1-6.2-4.5-5.7-1.2-1.4M648.6 788.3l5.1 5.2 5.4 4.9 5.9 4.5 6.4 4 6.7 3.6 7.1 3.2 7.5 2.7 7.8 2.3 8.2 1.9 8.6 1.4"/>
<path stroke="#d37ebb" d="M1182.6 396.2l-0.2-8.8-0.8-8.4-1.2-8.2-1.7-7.9-2.1-7.6-2.7-7.2-0.7-1.7M637.4 774.4l1.1 1.4 4.6 5.7 5 5.3 5.5 4.8 5.9 4.5 6.3 4 6.7 3.6 7.1 3.2 7.5 2.7 7.8 2.3 8.2 1.9 8.6 1.4"/>
<path stroke="#c173ab" d="M1173.2 346.4l-2.4-5.2-3.6-6.5-4-6.1-4.5-5.8-4.9-5.3-1.3-1.3"/>
<path stroke="#d372c0" d="M1175.9 390.4l-0.2-8.7-0.7-8.5-1.2-8.1-1.7-7.9-2.2-7.5-2.6-7.2-3.1-6.9-0.9-1.6M628.6 761.1l1 1.6 4.1 6 4.6 5.7 5 5.2 5.5 4.9 5.8 4.4 6.3 4 6.7 3.6 7.1 3.2 7.4 2.7 7.8 2.3 8.2 1.8 8.5 1.4"/>
<path stroke="#c068af" d="M1163.3 334l-2.7-4.8-4-6.2-4.5-5.7-4.9-5.3-5.3-5-2.9-2.3"/>
<path stroke="#d267c4" d="M1168.9 385.3l-0.2-8.7-0.7-8.4-1.2-8.1-1.7-7.8-2.2-7.5-2.6-7.2-3.1-6.8-1.7-3.2M619.7 744.1l2.4 5 3.6 6.3 4.1 6 4.6 5.7 5 5.2 5.4 4.8 5.8 4.4 6.3 4 6.6 3.6 7 3.1 7.5 2.7 7.7 2.3 8.1 1.8 8.5 1.4"/>
<path stroke="#c05eb3" d="M1155.5 327.6l-1.8-3.2-4-6.1-4.5-5.7-4.9-5.3-5.3-4.9-5.7-4.5-6.2-4.1"/>
<path stroke="#d15bc9" d="M1161.7 381l-0.3-8.6-0.7-8.4-1.2-8-1.6-7.8-2.2-7.4-2.6-7.1-3-6.7-1.7-3.3M612.2 724.5l1.2 3.6 2.7 7.1 3.2 6.6 3.6 6.4 4 5.9 4.6 5.6 4.9 5.1 5.4 4.8 5.8 4.4 6.2 4 6.5 3.5 7 3.1 7.4 2.7 7.7 2.3 8 1.8 8.4 1.3"/>
<path stroke="#bf53b8" d="M1148.4 323.7l-1.8-3.1-4-6-4.4-5.7-4.9-5.3-5.2-4.8-5.7-4.5-6.1-4.1-6.6-3.6-5.1-2.4"/>
<path stroke="#d150ce" d="M1154.4 377.6l-0.3-8.5-0.7-8.2-1.2-8-1.6-7.7-2.1-7.3-2.6-7-3-6.7-2.6-4.8M606.8 700.4l1 5.9 1.7 7.6 2.3 7.3 2.6 6.9 3.2 6.6 3.5 6.3 4.1 5.9 4.4 5.5 4.9 5.1 5.3 4.7 5.8 4.4 6.1 3.9 6.5 3.5 6.9 3.1 7.3 2.6 7.6 2.3 8 1.7 8.3 1.4"/>
<path stroke="#bf49bc" d="M1140.3 319.4l-0.9-1.6-3.9-5.9-4.4-5.6-4.8-5.2-5.2-4.8-5.7-4.5-6-4"/>
<path stroke="#ab42a9" d="M1109.4 287.8l-6.4-3.6-6.9-3.2-7.2-2.7-7.5-2.3"/>
<path stroke="#d048d1" d="M1147.1 375.3l-0.3-8.4-0.7-8.1-1.1-7.9-1.6-7.6-2.1-7.2-2.6-7-3-6.6-2.5-4.7M605.4 662.6l-0.2 4.4-0.2 8.6 0.4 8.3 0.8 8.1 1.3 7.8 1.7 7.5 2.2 7.2 2.6 6.9 3.1 6.5 3.5 6.2 4 5.8 4.4 5.4 4.8 5.1 5.3 4.6 5.7 4.3 6 3.9 6.4 3.5 6.9 3 7.1 2.6 7.6 2.2 7.8 1.8 8.2 1.3"/>
<path stroke="#be42bf" d="M1133.2 317.8l-0.9-1.5-3.9-5.9-4.3-5.5-4.7-5.2-5.2-4.7-5.5-4.4-6-3.9"/>
<path stroke="#ab3bab" d="M1102.7 286.7l-6.4-3.6-6.7-3.1-7.1-2.8-7.5-2.3-7.8-1.8-8.1-1.5-8.4-1-6.5-0.4"/>
<path stroke="#ce44d1" d="M1139.9 374.2l-0.2-8.3-0.7-8.1-1.1-7.7-1.6-7.5-2.1-7.1-2.5-6.8-2.9-6.5-1.7-3.1M619.8 596.1l-3.3 9.8-2.8 9.8-2.4 9.5-2 9.4-1.5 9.1-1 9-0.6 8.7-0.1 8.5 0.3 8.3 0.8 7.9 1.2 7.7 1.7 7.4 2.2 7.1 2.6 6.7 3 6.4 3.5 6.1 3.9 5.7 4.4 5.4 4.7 5 5.2 4.6 5.6 4.2 5.9 3.8 6.4 3.4 6.7 3 7.1 2.6 7.4 2.2 7.7 1.7 8.1 1.3"/>
<path stroke="#bc3ebf" d="M1127.1 319.1l-1.7-3.1-3.8-5.8-4.3-5.4-4.6-5.1-5.1-4.7-5.5-4.3-2.9-2"/>
<path stroke="#a938ac" d="M1099.2 288.7l-3-1.9-6.2-3.5-6.7-3.1-7-2.7-7.3-2.2-7.7-1.8-8-1.5-8.3-0.9-8.6-0.6-8.9-0.1-9.1 0.3-9.5 0.7-9.6 1.2-9.8 1.6-10.1 2-2.5 0.6"/>
<path stroke="#cd41d2" d="M1133.1 374.2l-0.2-8.1-0.7-7.9-1.1-7.6-1.6-7.4-2-7-2.5-6.7-2.9-6.4-0.8-1.5M626.6 580l-1 2.5-3.7 9.8-3.2 9.7-2.8 9.5-2.3 9.4-2 9.2-1.4 9-1.1 8.8-0.5 8.6-0.2 8.3 0.4 8.1 0.7 7.9 1.3 7.5 1.6 7.3 2.2 6.9 2.5 6.7 3 6.3 3.4 6 3.9 5.6 4.2 5.2 4.7 4.9 5.1 4.6 5.5 4.1 5.8 3.7 6.3 3.4 6.6 2.9 6.9 2.6 7.3 2.1 7.6 1.7 8 1.3"/>
<path stroke="#bb3bc0" d="M1121.3 321.6l-2.5-4.5-3.8-5.7-4.1-5.4-4.6-4.9-5-4.7-5.4-4.2M669.4 501.5l-6.8 10.2-6.5 10.2-6 10.3-5.7 10.1-5.3 10.2-4.9 10.1-4.5 10-3.1 7.4"/>
<path stroke="#a835ad" d="M1095.9 292.2l-5.8-3.8-6.1-3.5-6.5-3-6.9-2.6-7.2-2.2-7.6-1.8-7.8-1.4-8.2-1-8.5-0.5-8.7-0.2-9 0.3-9.2 0.8-9.5 1.1-9.7 1.6-9.9 2-10 2.4-10.3 2.8-10.3 3.2-10.5 3.6-10.6 4-10.7 4.4-10.8 4.7-10.8 5.2-10.9 5.5-10.9 5.8-10.8 6.2-10.9 6.6-10.8 6.8-10.7 7.2-10.7 7.4-10.6 7.7-10.5 8-10.3 8.3-10.2 8.5-10 8.7-9.9 9-9.6 9.1-9.4 9.3-9.2 9.5-8.9 9.6-8.7 9.8-8.4 9.9-8.1 10-7.8 10-7.5 10.2-7.1 10.1"/>
<path stroke="#cb3dd3" d="M1126.6 375.5l-0.2-8-0.7-7.7-1.1-7.4-1.6-7.2-1.9-6.9-2.4-6.6-2.9-6.3M631 574.9l-1.9 4.8-3.6 9.6-3.2 9.5-2.7 9.4-2.4 9.2-1.8 9-1.5 8.8-1 8.7-0.5 8.4-0.2 8.2 0.3 7.9 0.8 7.7 1.2 7.4 1.6 7.1 2.1 6.8 2.5 6.5 3 6.2 3.3 5.9 3.8 5.5 4.2 5.1 4.6 4.8 4.9 4.5 5.4 4 5.7 3.7 6.2 3.3 6.4 2.9 6.8 2.5 7.2 2 7.5 1.7 7.7 1.3"/>
<path stroke="#ba38c1" d="M1115.8 325.4l-3.2-5.9-3.7-5.6-4.1-5.2-4.5-4.9-4.9-4.5-1.3-1.1M672 500.3l-6.7 10-6.3 10.1-6 10-5.5 10-5.2 9.9-4.8 9.9-4.4 9.8-2.1 4.9"/>
<path stroke="#a732ad" d="M1094.1 298.2l-4-3.1-5.6-3.7-6.1-3.4-6.4-3-6.7-2.5-7.1-2.2-7.4-1.8-7.7-1.3-8-1-8.3-0.5-8.6-0.1-8.8 0.2-9 0.8-9.3 1.1-9.5 1.5-9.7 2-9.9 2.3-10 2.8-10.2 3.1-10.2 3.6-10.4 3.9-10.5 4.3-10.6 4.7-10.6 5-10.6 5.4-10.7 5.7-10.7 6.1-10.6 6.4-10.6 6.7-10.5 7-10.5 7.3-10.4 7.6-10.2 7.8-10.2 8.1-10 8.4-9.8 8.5-9.6 8.8-9.5 9-9.2 9.1-9 9.3-8.8 9.4-8.5 9.6-8.2 9.7-8 9.8-7.6 9.8-7.3 10-7 9.9"/>
<path stroke="#ca3ad4" d="M1120.5 378.1l-0.2-7.8-0.7-7.5-1.1-7.3-1.5-7.1-1.9-6.7-2.4-6.4-1.3-3.1M636.8 570.7l-2.9 7.1-3.5 9.4-3.1 9.3-2.7 9.2-2.3 9-1.8 8.8-1.4 8.6-1 8.5-0.6 8.2"/>
<path stroke="#b835c2" d="M1111.4 332.2l-1.5-3.1-3.1-5.8-3.6-5.4-4-5.1-4.4-4.8-2.4-2.3M675.8 500.2l-6.5 9.8-6.1 9.8-5.9 9.8-5.4 9.7-5.1 9.8-4.7 9.6-4.3 9.6-1 2.4"/>
<path stroke="#a630ae" d="M1092.4 305.7l-2.4-2.1-5.2-4.1-5.5-3.7-5.9-3.3-6.3-2.9-6.6-2.5-6.9-2.1-7.2-1.8-7.6-1.3-7.8-0.9-8.1-0.5-8.4-0.2-8.6 0.3-8.9 0.7-9 1.1-9.3 1.5-9.5 1.9-9.7 2.3-9.8 2.7-9.9 3.1-10.1 3.5-10.1 3.8-10.3 4.2-10.3 4.6-10.4 4.9-10.4 5.3-10.4 5.6-10.4 5.9-10.5 6.3-10.3 6.6-10.3 6.8-10.3 7.2-10.1 7.4-10.1 7.6-9.9 8-9.7 8.1-9.6 8.4-9.5 8.6-9.2 8.7-9.1 9-8.8 9-8.5 9.3-8.4 9.3-8 9.5-7.8 9.6-7.5 9.6-7.1 9.8-6.9 9.7"/>
<path stroke="#d93ee4" d="M617.5 648.8l-0.1 8 0.3 7.8 0.8 7.5 1.1 7.2 1.7 7 2 6.6 2.4 6.4 2.9 6 3.3 5.8 3.7 5.4 4.1 5 4.4 4.7 4.9 4.3 5.3 4 5.6 3.6 6 3.2 6.3 2.8 6.6 2.5 7 2 7.3 1.7 7.7 1.2"/>
<path stroke="#c837d5" d="M1114.8 382l-0.2-7.6-0.6-7.4-1.1-7.1-1.5-6.9-1.8-6.5-2.3-6.3M642.9 569.9l-2.9 7-3.4 9.1-3 9.1-2.6 8.9-2.2 8.8-1.8 8.6-1.4 8.4-1 8.3"/>
<path stroke="#b732c2" d="M1107.3 340.2l-2.7-6-3.2-5.6-3.5-5.4-3.9-5-3.2-3.5M679.4 503.5l-4.8 7.2-6 9.5-5.7 9.6-5.3 9.5-4.9 9.5-4.6 9.4-4.2 9.4-1 2.3"/>
<path stroke="#a52daf" d="M1090.8 314.7l-1.1-1.1-4.6-4.4-5.1-3.9-5.4-3.6-5.7-3.2-6.1-2.9-6.5-2.4-6.7-2.1-7.1-1.7-7.3-1.3-7.7-0.9-7.9-0.5-8.2-0.1-8.4 0.3-8.6 0.7-8.9 1-9 1.5-9.3 1.9-9.4 2.2-9.6 2.6-9.7 3-9.8 3.4-9.9 3.7-10 4.2-10.1 4.4-10.1 4.8-10.2 5.2-10.1 5.4-10.2 5.8-10.2 6.1-10.1 6.4-10 6.7-10 7-9.9 7.2-9.8 7.5-9.7 7.8-9.5 7.9-9.4 8.2-9.2 8.3-9 8.6-8.8 8.7-8.6 8.9-8.4 9-8.1 9.1-7.9 9.3-7.5 9.3-7.3 9.4-7 9.5-6.7 9.5-1.6 2.4"/>
<path stroke="#d73be5" d="M624.6 638.1l-0.5 8-0.1 7.8 0.3 7.6 0.7 7.3 1.2 7.1 1.5 6.8 2 6.5 2.4 6.2 2.8 5.9 3.2 5.6 3.6 5.2 4 4.9 4.4 4.6 4.7 4.3 5.1 3.8 5.5 3.5 5.9 3.2 6.1 2.7 6.5 2.4 6.8 2 7.2 1.6 7.4 1.2"/>
<path stroke="#c733d5" d="M1109.6 387.1l-0.2-7.4-0.6-7.2-1-6.9-1.4-6.7-1.9-6.4-1-3.1M650.3 570l-2.8 6.8-3.3 8.9-3 8.8-2.5 8.7-2.2 8.6-1.7 8.3-1.3 8.3-0.8 6"/>
<path stroke="#b62fc3" d="M1103.5 349.4l-1.2-3-2.6-5.8-3.1-5.5-3.4-5.2-3.8-4.9-1-1.1M684.2 507.7l-3 4.6-5.9 9.3-5.5 9.3-5.2 9.3-4.8 9.3-4.5 9.1-4.1 9.2-0.9 2.2"/>
<path stroke="#a32aaf" d="M1088.4 323.9l-3.2-3.4-4.5-4.2-4.9-3.8-5.3-3.5-5.6-3.2-5.9-2.7-6.3-2.4-6.5-2.1-6.9-1.6-7.2-1.3-7.4-0.8-7.7-0.5-8-0.2-8.2 0.3-8.4 0.7-8.6 1-8.8 1.5-9 1.8-9.2 2.1-9.3 2.6-9.4 2.9-9.6 3.3-9.7 3.7-9.7 4-9.8 4.3-9.9 4.7-9.8 5-9.9 5.3-9.9 5.7-9.9 5.9-9.9 6.2-9.8 6.5-9.7 6.8-9.6 7.1-9.6 7.3-9.4 7.5-9.2 7.7-9.2 8-8.9 8.1-8.8 8.3-8.6 8.5-8.4 8.7-8.1 8.7-7.9 8.9-7.6 9-7.4 9.1-7.1 9.2-6.8 9.2-6.5 9.3-3.2 4.6"/>
<path stroke="#d637e5" d="M632.7 634.4l-0.2 2-0.5 7.8-0.1 7.6 0.3 7.4 0.7 7.1 1.1 6.9 1.5 6.6 2 6.3 2.3 6 2.7 5.8 3.1 5.4 3.5 5.1 3.9 4.8 4.3 4.5 4.6 4.1 5 3.8 5.3 3.4 5.7 3.1 6 2.6 6.3 2.4 6.7 1.9 6.9 1.5 7.2 1.2"/>
<path stroke="#c530d6" d="M1105 393.4l-0.2-7.2-0.6-7-1-6.7-1.4-6.5-1.8-6.2M658.9 571l-2.7 6.6-3.2 8.7-2.9 8.5-2.4 8.5-2.1 8.3-1.7 8.1-1.3 8-0.5 3.9"/>
<path stroke="#b42cc4" d="M1100 359.8l-2.2-5.9-2.5-5.7-3-5.3-3.3-5-3.7-4.8M690.4 512.8l-1.5 2.2-5.7 9.1-5.3 9-5.1 9-4.7 9-4.3 8.9-4 8.8-0.9 2.2"/>
<path stroke="#a227b0" d="M1085.3 333.1l-4-4.4-4.5-4.1-4.7-3.7-5.1-3.4-5.5-3-5.7-2.7-6.1-2.3-6.4-2-6.7-1.6-6.9-1.2-7.2-0.9-7.5-0.5-7.7-0.1-8 0.3-8.2 0.6-8.3 1.1-8.6 1.3-8.7 1.8-8.9 2.1-9.1 2.5-9.2 2.8-9.2 3.2-9.4 3.6-9.5 3.9-9.5 4.2-9.6 4.5-9.6 4.9-9.6 5.2-9.6 5.4-9.6 5.8-9.5 6.1-9.6 6.3-9.4 6.6-9.3 6.8-9.3 7.1-9.1 7.3-9.1 7.5-8.8 7.7-8.7 7.9-8.5 8.1-8.4 8.2-8.1 8.4-7.9 8.6-7.7 8.6-7.4 8.7-7.2 8.9-6.9 8.8-6.6 9-6.3 9-4.5 6.8"/>
<path stroke="#d433e6" d="M642.1 631.6l-0.4 3.8-0.5 7.6-0.2 7.4 0.3 7.2 0.7 6.9 1.1 6.7 1.5 6.4 1.8 6.1 2.3 5.9 2.7 5.6 3 5.3 3.4 4.9 3.8 4.7 4.1 4.3 4.5 4 4.8 3.7 5.2 3.3 5.5 3 5.8 2.6 6.2 2.2 6.4 1.9 6.8 1.5 7 1.2"/>
<path stroke="#c32dd6" d="M1100.8 400.8l-0.2-7-0.6-6.7-1-6.5-1.3-6.3-1.3-4.6M668.6 572.9l-2.5 6.3-3.2 8.4-2.7 8.3-2.4 8.2-2.1 8-1.6 7.9-1.3 7.7-0.5 3.8"/>
<path stroke="#b229c4" d="M1096.4 369.7l-0.4-1.4-2.2-5.8-2.4-5.4-2.9-5.2-3.2-4.9-2.6-3.5M697.7 518.6l-5.5 8.8-5.2 8.7-4.9 8.7-4.5 8.7-4.2 8.7-3.8 8.5-1 2.2"/>
<path stroke="#a025b0" d="M1082.7 343.5l-1-1.1-3.9-4.3-4.3-3.9-4.6-3.6-4.9-3.3-5.3-3-5.6-2.6-5.9-2.2-6.2-1.9-6.4-1.6-6.8-1.1-7-0.9-7.2-0.4-7.5-0.1-7.7 0.2-7.9 0.6-8.1 1-8.3 1.4-8.5 1.7-8.6 2-8.8 2.4-8.8 2.8-9 3.1-9.1 3.4-9.2 3.8-9.2 4-9.3 4.4-9.3 4.7-9.3 5.1-9.3 5.3-9.3 5.6-9.3 5.8-9.2 6.1-9.1 6.4-9.1 6.7-8.9 6.8-8.9 7.1-8.7 7.3-8.6 7.4-8.4 7.7-8.3 7.8-8.1 8-7.8 8.1-7.7 8.3-7.4 8.3-7.2 8.5-7 8.6-6.6 8.6-6.4 8.7-6.2 8.7-5.8 8.7"/>
<path stroke="#d230e6" d="M652.3 631.5l-0.3 3.8-0.5 7.3-0.1 7.2 0.2 6.9 0.7 6.7 1 6.5 1.5 6.2 1.8 5.9 2.2 5.7 2.5 5.4 3 5.2 3.3 4.8 3.6 4.5 4 4.2 4.4 3.8 4.7 3.6 5 3.2 5.3 2.9 5.7 2.5 5.9 2.2 6.3 1.8 6.5 1.5 6.8 1.1"/>
<path stroke="#bf2ad6" d="M1097 409.2l-0.2-6.7-0.5-6.6-1-6.3-1.3-6-0.8-3M679.4 575.5l-2.5 6.1-3 8.1-2.7 8-2.3 7.9-2 7.8-1.5 7.6-1.3 7.5-0.4 3.6"/>
<path stroke="#af26c3" d="M1093.2 380.6l-0.8-2.9-2.1-5.5-2.4-5.3-2.7-5-3.1-4.7-2.6-3.4M707.5 523l-5.3 8.5-5 8.4-4.7 8.5-4.4 8.4-4.1 8.3-3.7 8.3-0.9 2.1"/>
<path stroke="#9d22b0" d="M1079.5 353.8l-0.9-1-3.8-4.2-4.1-3.8-4.5-3.5-4.8-3.2-5-2.8-5.4-2.5-5.7-2.2-6-1.8-6.3-1.5-6.5-1.2-6.7-0.8-7-0.4-7.3-0.1-7.4 0.2-7.7 0.6-7.8 1-8 1.3-8.2 1.6-8.3 2-8.5 2.3-8.6 2.7-8.7 3-8.7 3.3-8.9 3.6-8.9 4-9 4.2-9 4.6-9 4.8-9 5.1-8.9 5.4-9 5.7-8.9 5.9-8.8 6.2-8.8 6.4-8.6 6.6-8.6 6.9-8.4 7-8.3 7.2-8.2 7.4-8 7.6-7.8 7.7-7.6 7.9-7.4 7.9-7.1 8.1-7 8.2-6.7 8.3-6.5 8.3-6.1 8.4-6 8.4-5.6 8.4"/>
<path stroke="#ce2de6" d="M663.7 632.1l-0.4 3.7-0.5 7.1-0.1 6.9 0.3 6.7 0.6 6.5 1 6.2 1.4 6 1.8 5.8 2.1 5.5 2.5 5.2 2.8 4.9 3.2 4.7 3.5 4.4 3.9 4 4.2 3.7 4.5 3.5 4.9 3.1 5.1 2.8 5.5 2.4 5.7 2.1 6.1 1.8 6.3 1.4 6.6 1"/>
<path stroke="#bc27d5" d="M1093.6 418.4l-0.1-6.5-0.6-6.3-0.9-6-1.2-5.9-0.8-2.8M690.2 580.7l-1.5 4-3 7.8-2.5 7.7-2.3 7.6-1.9 7.5-1.5 7.4-1.2 7.1-0.4 3.6"/>
<path stroke="#ac23c3" d="M1090 390.9l-0.8-2.8-2-5.3-2.3-5.1-2.7-4.9-3-4.5-2.4-3.2M716.8 530.2l-3.8 6.1-4.8 8.2-4.6 8.1-4.2 8.1-3.9 8.1-3.6 7.9-1.7 4"/>
<path stroke="#9a20af" d="M1076.8 365.1l-0.9-1.1-3.7-3.9-3.9-3.7-4.3-3.4-4.6-3.1-4.9-2.7-5.2-2.4-5.5-2.1-5.8-1.8-6-1.4-6.3-1.1-6.5-0.8-6.8-0.4-6.9-0.1-7.2 0.2-7.4 0.6-7.5 0.9-7.8 1.2-7.9 1.6-8 1.9-8.2 2.3-8.2 2.5-8.4 2.9-8.5 3.2-8.5 3.5-8.6 3.8-8.6 4.1-8.7 4.4-8.7 4.7-8.6 4.9-8.7 5.2-8.6 5.5-8.6 5.7-8.5 6-8.5 6.1-8.3 6.4-8.3 6.6-8.1 6.8-8 6.9-7.9 7.2-7.7 7.3-7.5 7.4-7.3 7.6-7.1 7.7-7 7.8-6.7 7.9-6.4 7.9-6.3 8-5.9 8.1-5.7 8.1-5.4 8.2-1.4 2"/>
<path stroke="#ca2ae5" d="M675.9 633.4l-0.4 3.5-0.4 6.8-0.1 6.7 0.2 6.4 0.6 6.3 1 6 1.3 5.8 1.7 5.6 2.1 5.2 2.4 5.1 2.7 4.7 3.1 4.5 3.4 4.2 3.7 3.9 4.1 3.7 4.3 3.3 4.7 2.9 5 2.7 5.2 2.4 5.6 2 5.8 1.7 6.1 1.4 6.3 1"/>
<path stroke="#b824d4" d="M1090.6 428.4l-0.2-6.3-0.5-6-0.8-5.9-1.2-5.6-0.8-2.7M702.7 584.5l-1.6 3.8-2.8 7.5-2.5 7.4-2.1 7.3-1.8 7.2-1.5 7.1-1.1 6.9-0.5 3.4"/>
<path stroke="#a821c2" d="M1087.1 401.9l-0.8-2.7-1.9-5.1-2.2-4.9-2.6-4.7-2.8-4.3-2.4-3.1M728.2 535.9l-3.6 5.9-4.7 7.8-4.4 7.8-4 7.8-3.8 7.8-3.4 7.6-1.6 3.9"/>
<path stroke="#971eae" d="M1074.4 377.1l-0.8-1-3.6-3.9-3.8-3.5-4.1-3.2-4.5-3-4.7-2.6-5-2.4-5.2-2-5.6-1.7-5.8-1.4-6-1-6.3-0.8-6.5-0.4-6.7-0.1-6.9 0.3-7.1 0.5-7.3 0.9-7.4 1.2-7.6 1.5-7.7 1.9-7.8 2.1-8 2.5-8.1 2.7-8.1 3.1-8.2 3.4-8.3 3.7-8.3 3.9-8.3 4.2-8.3 4.5-8.4 4.8-8.3 5-8.3 5.2-8.3 5.5-8.2 5.7-8.1 6-8 6.1-8 6.3-7.8 6.6-7.7 6.7-7.5 6.8-7.4 7-7.3 7.2-7 7.3-6.9 7.4-6.6 7.5-6.5 7.6-6.2 7.6-6 7.7-5.7 7.8-5.5 7.8-5.2 7.8-1.3 2"/>
<path stroke="#c627e4" d="M688.8 635.1l-0.3 3.4-0.5 6.6 0 6.4 0.2 6.2 0.6 6 0.9 5.8 1.3 5.5 1.6 5.4 2 5.1 2.3 4.8 2.6 4.6 3 4.3 3.3 4.1 3.5 3.7 3.9 3.5 4.2 3.2 4.5 2.8 4.8 2.6 5.1 2.3 5.3 1.9 5.6 1.7 5.9 1.3 6.1 1"/>
<path stroke="#b521d4" d="M1087.9 438.9l-0.2-6-0.5-5.8-0.8-5.6-1.2-5.4-0.7-2.6M715.6 588.6l-1.4 3.7-2.7 7.2-2.4 7.1-2.1 7.1-1.7 6.9-1.4 6.7-1.1 6.7-0.4 3.2"/>
<path stroke="#a51ec1" d="M1084.5 413.5l-0.8-2.6-1.8-4.9-2.1-4.7-2.5-4.5-2.7-4.2-2.3-3M740.2 542l-3.6 5.7-4.4 7.5-4.2 7.5-3.9 7.5-3.6 7.4-3.3 7.4-1.6 3.6"/>
<path stroke="#941bae" d="M1072.3 389.6l-0.8-0.9-3.4-3.7-3.7-3.4-3.9-3.1-4.3-2.8-4.5-2.5-4.8-2.3-5.1-1.9-5.3-1.6-5.5-1.4-5.8-1-6-0.7-6.3-0.4-6.4-0.1-6.6 0.2-6.8 0.6-7 0.8-7.1 1.2-7.3 1.4-7.4 1.8-7.6 2-7.6 2.4-7.7 2.7-7.8 2.9-7.9 3.3-7.9 3.5-8 3.7-8 4.1-8 4.3-8 4.6-8 4.8-8 5-7.9 5.3-7.8 5.5-7.8 5.7-7.7 5.9-7.7 6-7.5 6.3-7.3 6.4-7.3 6.6-7.1 6.7-6.9 6.9-6.8 7-6.6 7.1-6.4 7.2-6.1 7.2-6 7.4-5.8 7.4-5.5 7.5-5.2 7.5-5 7.5-1.2 1.8"/>
<path stroke="#c224e3" d="M702.4 637.2l-0.4 3.3-0.4 6.3-0.1 6.1 0.3 6 0.5 5.7 0.9 5.6 1.3 5.4 1.5 5.1 1.9 4.9 2.2 4.6 2.5 4.4 2.9 4.1 3.1 3.9 3.4 3.6 3.8 3.4 4 3 4.3 2.8 4.6 2.4 4.9 2.2 5.1 1.9 5.4 1.5 5.6 1.3 5.8 1"/>
<path stroke="#b11ed3" d="M1085.3 449.8l-0.2-5.8-0.4-5.5-0.8-5.4-1.1-5.2-0.7-2.5M729 593.1l-1.4 3.5-2.6 6.9-2.3 6.8-2 6.8-1.6 6.6-1.4 6.5-1 6.3-0.4 3.1"/>
<path stroke="#a21cc1" d="M1082.1 425.4l-0.8-2.4-1.7-4.7-2-4.5-2.4-4.3-2.6-4-2.2-2.9M752.5 548.5l-3.4 5.4-4.3 7.2-4 7.2-3.7 7.1-3.5 7.1-3.2 7.1-1.4 3.5"/>
<path stroke="#9219ad" d="M1070.4 402.6l-0.8-0.9-3.2-3.5-3.5-3.2-3.8-3-4.1-2.7-4.3-2.5-4.6-2.1-4.9-1.8-5.1-1.6-5.3-1.3-5.5-1-5.8-0.6-5.9-0.4-6.2-0.1-6.3 0.2-6.6 0.5-6.6 0.8-6.9 1.1-6.9 1.4-7.1 1.7-7.2 2-7.3 2.3-7.4 2.5-7.5 2.8-7.5 3.1-7.6 3.4-7.7 3.6-7.6 3.9-7.7 4.1-7.6 4.4-7.7 4.6-7.6 4.8-7.6 5-7.5 5.3-5.6 4.1M795.1 493.8l-3.1 3.4-6.2 6.9-5.9 7-5.7 7-5.5 7.1-5.3 7.1-5 7.2-4.8 7.2-1.1 1.8"/>
<path stroke="#be21e3" d="M716.3 639.6l-0.3 3.1-0.5 6.1 0 5.8 0.2 5.7 0.5 5.6 0.9 5.3 1.2 5.1 1.5 4.9 1.8 4.7 2.1 4.4 2.4 4.2 2.7 4 3 3.7 3.3 3.5 3.6 3.2 3.9 2.9 4.1 2.6 4.4 2.4 4.6 2.1 4.9 1.8 5.2 1.5 5.3 1.2 5.6 0.9"/>
<path stroke="#ae1b14" d="M1082.8 460.8l-0.1-5.4-0.5-5.4-0.8-5.1-1-4.9-1.4-4.7-1.6-4.6-2-4.3-2.2-4-2.5-3.9-2.9-3.6-3-3.3-3.4-3.1-3.6-2.9-3.9-2.5-4.2-2.4-4.3-2-4.7-1.8-4.8-1.5-5.1-1.2-5.3-0.9-5.5-0.7-4.3-0.3"/>
<path stroke="#9f1912" d="M733.7 681.9l1.7 4.4 2.1 4.3 2.3 4 2.6 3.8 2.8 3.5 3.2 3.3 3.4 3.1 3.7 2.8 3.9 2.5 4.2 2.2 4.5 2 4.6 1.7 4.9 1.5 5.2 1.1 5.3 0.9"/>
<path stroke="#ae1f14" d="M1080.3 471.9l-0.1-5.2-0.5-5.1"/>
<path stroke="#9f1c12" d="M787.2 719.1l2.3 0.7 4.9 1.1 5.1 0.8"/>
<path stroke="#ae2214" d="M1077.7 482.8l-0.1-5-0.4-4.8-0.7-4.7-1-4.4-1.2-4.3"/>
<path stroke="#9f1f12" d="M787.5 713.4l1 0.4 4 1.8 4.3 1.6 4.4 1.3 4.7 1 4.8 0.8"/>
<path stroke="#af2614" d="M1075 493.3l-0.1-4.7-0.4-4.6-0.7-4.4-0.9-4.3-1.2-4-1.4-3.9-1.7-3.7-1.9-3.5-2.2-3.3"/>
<path stroke="#a02212" d="M787.4 703.4l2.9 2.7 3.2 2.4 3.4 2.1 3.6 2 3.8 1.7 4 1.4 4.3 1.3 4.4 1 4.6 0.7"/>
<path stroke="#af2914" d="M1072 503.2l-0.2-4.4-0.3-4.4-0.6-4.1-0.9-4.1-1.1-3.8-1.4-3.7-1.6-3.5-1.8-3.3-2-3.1-2.3-3-2.5-2.7-2.8-2.5-2.9-2.3-2.4-1.6"/>
<path stroke="#a02612" d="M787.6 683.3l1.4 3.6 1.6 3.5 1.9 3.3 2.1 3 2.4 2.9 2.5 2.7 2.8 2.5 3 2.3 3.2 2 3.5 1.9 3.6 1.6 3.8 1.4 4 1.1 4.2 1 4.3 0.7"/>
<path stroke="#b13015" d="M1068.6 512.5l-0.1-4.2-0.4-4.1-0.5-4-0.9-3.8-1-3.6-1.3-3.5-1.5-3.3-1.7-3.2-2-2.9-2.1-2.8-2.4-2.6-2.6-2.4-2.8-2.1-3-2-3.2-1.8-3.3-1.6-3.6-1.4-3.8-1.1-3.9-0.9-4-0.8-4.3-0.5-4.4-0.3-4.5 0-4.7 0.1-4.8 0.4-4.9 0.6-5 0.8-5.1 1.1-5.2 1.2-5.3 1.5-5.4 1.6-5.5 1.9-1.3 0.5"/>
<path stroke="#a22c13" d="M813.1 603.6l-0.7 1.3-2.5 5.3-2.4 5.2-2.1 5.1-1.9 5.1-1.7 5-1.4 5-1.2 4.8-1 4.8-0.8 4.7-0.5 4.5-0.3 4.5-0.1 4.3 0.2 4.2 0.4 4.1 0.6 3.9 0.9 3.7 1.1 3.7 1.3 3.4 1.6 3.3 1.7 3.1 2 2.9 2.2 2.7 2.5 2.6 2.6 2.3 2.8 2.1 3.1 2 3.2 1.7 3.4 1.6 3.6 1.3 3.8 1.1 4 0.9 4.1 0.6"/>
<path stroke="#b23715" d="M1064.8 520.9l-0.1-4-0.3-3.9-0.5-3.7-0.8-3.6-1-3.4-1.2-3.3-1.4-3.2-1.7-2.9-1.8-2.8-2-2.6-2.3-2.5-2.4-2.2-2.7-2.1-2.8-1.9-3-1.7-3.2-1.5-3.4-1.2-3.5-1.1-3.7-0.9-3.9-0.7-4-0.5-4.1-0.2-4.3-0.1-4.4 0.2-4.5 0.3-4.7 0.6-4.7 0.7-4.8 1-5 1.2-5 1.4-5.1 1.5-5.1 1.8-5.2 2"/>
<path stroke="#a33214" d="M825.5 603.2l-2.6 5-2.4 4.9-2.2 4.9-2 4.9-1.8 4.8-1.6 4.7-1.4 4.7-1.1 4.6-1 4.5-0.7 4.4-0.5 4.3-0.3 4.2 0 4.1 0.1 4 0.4 3.8 0.6 3.7 0.8 3.6 1 3.4 1.3 3.2 1.5 3.1 1.6 3 1.9 2.7 2.1 2.6 2.3 2.4 2.5 2.2 2.7 2 2.8 1.9 3.1 1.6 3.2 1.4 3.4 1.3 3.6 1 3.7 0.9 3.9 0.6"/>
<path stroke="#b33e16" d="M1060.6 528.3l-0.1-3.8-0.3-3.7-0.5-3.5-0.7-3.4-1-3.2-1.1-3.1-1.3-3-1.6-2.7-1.7-2.7-1.9-2.5-2.2-2.3-2.3-2.1-2.4-1.9-2.7-1.8-2.9-1.6-3-1.4-3.1-1.2-3.4-1-3.5-0.9-3.6-0.6-3.8-0.5-3.9-0.2-4-0.1-4.2 0.2-4.3 0.3-4.3 0.5-4.5 0.8-4.6 0.9-4.6 1.1-4.8 1.3-4.7 1.5-4.9 1.6-2.4 0.9"/>
<path stroke="#a43814" d="M833.5 608.3l-1.2 2.3-2.2 4.7-2.1 4.6-1.9 4.6-1.7 4.6-1.5 4.4-1.3 4.4-1.1 4.4-0.9 4.2-0.6 4.2-0.5 4.1-0.3 3.9 0 3.9 0.1 3.7 0.4 3.6 0.5 3.5 0.8 3.4 1 3.2 1.2 3.1 1.4 2.9 1.5 2.7 1.8 2.6 2 2.5 2.2 2.2 2.3 2.1 2.5 1.9 2.7 1.8 2.9 1.5 3.1 1.4 3.2 1.2 3.3 0.9 3.6 0.8 3.6 0.6"/>
<path stroke="#b54517" d="M1056 534.6l-0.1-3.6-0.3-3.4-0.5-3.3-0.7-3.2-0.9-3.1-1.1-2.9-1.2-2.8-1.5-2.6-1.6-2.5-1.8-2.4-2-2.1-2.2-2-2.3-1.9-2.6-1.6-2.6-1.5-2.9-1.4-3-1.1-3.1-1-3.3-0.8-3.4-0.6-3.6-0.4-3.7-0.2-3.8-0.1-3.9 0.1-4 0.4-4.2 0.5-4.2 0.6-4.3 0.9-4.4 1.1-4.4 1.2-4.6 1.4-3.4 1.1"/>
<path stroke="#a53f15" d="M839.6 614.4l-1.1 2.2-1.9 4.4-1.8 4.3-1.6 4.3-1.4 4.2-1.2 4.2-1 4.1-0.9 4-0.6 3.9-0.5 3.8-0.2 3.8-0.1 3.6 0.2 3.5 0.3 3.4 0.5 3.3 0.8 3.2 0.9 3 1.1 2.9 1.3 2.8 1.5 2.6 1.7 2.4 1.8 2.3 2.1 2.2 2.2 1.9 2.4 1.8 2.5 1.7 2.7 1.4 2.9 1.3 3 1.1 3.2 0.9 3.3 0.8 3.5 0.6"/>
<path stroke="#b64b18" d="M1050.8 539.7l-0.1-3.4-0.3-3.2-0.4-3.1-0.7-3.1-0.8-2.8-1-2.8-1.2-2.6-1.4-2.5-1.5-2.3-1.7-2.2-1.9-2.1-2.1-1.9-2.2-1.7-2.4-1.6-2.5-1.4-2.7-1.3-2.8-1-3-1-3.1-0.7-3.2-0.6-3.3-0.4-3.5-0.2-3.6 0-3.7 0.1-3.8 0.3-3.9 0.5-4 0.6-4 0.8-4.2 1-4.2 1.2-3.2 0.9"/>
<path stroke="#a74515" d="M844.9 619.1l-0.9 2.1-1.7 4.1-1.5 4-1.4 4-1.1 3.9-1 3.8-0.8 3.8-0.6 3.7-0.4 3.6-0.2 3.6-0.1 3.4 0.2 3.3 0.3 3.2 0.5 3.1 0.7 3 0.8 2.9 1.1 2.7 1.2 2.6 1.4 2.4 1.6 2.4 1.8 2.1 1.9 2 2.1 1.9 2.2 1.7 2.4 1.5 2.6 1.4 2.7 1.2 2.8 1.1 3 0.8 3.2 0.7 3.2 0.6"/>
<path stroke="#b85218" d="M1045.1 543.5l0-3.1-0.3-3.1-0.4-2.9-0.7-2.9-0.7-2.7-1-2.6-1.1-2.5-1.3-2.3-1.5-2.2-1.6-2.1-1.8-1.9-1.9-1.8-2.1-1.6-2.2-1.5-2.4-1.4-2.5-1.1-2.7-1.1-2.8-0.8-2.9-0.7-3.1-0.6-3.1-0.3-3.3-0.2-3.4-0.1-3.5 0.1-3.6 0.3-3.6 0.5-3.8 0.6-3.8 0.7-3.9 1-1 0.2"/>
<path stroke="#a84b16" d="M848.8 623.3l-0.4 1-1.4 3.8-1.2 3.7-1.1 3.7-0.9 3.7-0.8 3.5-0.5 3.5-0.4 3.4-0.3 3.4 0 3.2 0.1 3.1 0.3 3.1 0.5 2.9 0.6 2.8 0.9 2.7 1 2.6 1.1 2.4 1.3 2.3 1.5 2.2 1.7 2.1 1.8 1.9 2 1.7 2.1 1.6 2.3 1.5 2.4 1.3 2.5 1.1 2.7 1 2.8 0.8 3 0.7 3.1 0.5"/>
<path stroke="#ba5919" d="M1039 546.1l0-2.9-0.3-2.9-0.4-2.8-0.6-2.7-0.7-2.6-0.9-2.4-1.1-2.4-1.2-2.2-1.4-2.1-1.5-1.9-1.7-1.8-1.8-1.7-2-1.6-2.1-1.4-2.2-1.2-2.4-1.1-2.5-1-2.7-0.8-2.7-0.7-2.9-0.5-3-0.3-3.1-0.2-3.2-0.1-3.3 0.1-3.4 0.3-3.5 0.4-3.5 0.6-3.6 0.7"/>
<path stroke="#aa5117" d="M851.6 626.9l-0.9 2.6-1 3.5-0.8 3.4-0.7 3.4-0.6 3.3-0.4 3.2-0.2 3.2 0 3 0.1 3 0.3 2.9 0.4 2.7 0.6 2.7 0.8 2.5 1 2.5 1 2.3 1.3 2.2 1.4 2 1.6 1.9 1.7 1.8 1.8 1.7 2 1.5 2.2 1.4 2.3 1.2 2.4 1.1 2.5 0.9 2.7 0.8 2.8 0.6 2.9 0.5"/>
<path stroke="#bb601a" d="M1032.5 547.5l-0.1-2.9-0.2-2.7-0.4-2.6-0.2-1.3"/>
<path stroke="#c9671b" d="M1031.6 538l-0.3-1.3-0.7-2.4-0.9-2.3-1-2.2-1.1-2.1-1.3-2-1.5-1.9-1.6-1.7-1.7-1.6-1.9-1.4-2-1.4-2.1-1.2-2.3-1-2.3-0.9-2.5-0.8-2.6-0.6-2.8-0.5-2.8-0.3-2.9-0.2-3.1-0.1-3.1 0.1-3.2 0.3-3.3 0.4-1.6 0.2"/>
<path stroke="#ab5817" d="M853.6 628.8l-0.2 0.9-0.9 3.2-0.6 3.2-0.5 3.1-0.4 3.1-0.2 3 0 2.8 0.1 2.8 0.2 2.8 0.5 2.6 0.6 2.5 0.7 2.4 0.9 2.3 1 2.2 1.2 2.1 1.3 1.9 1.5 1.8 1.6 1.7 1.8 1.6 1.9 1.4 2 1.3 2.2 1.2 2.3 1 2.4 0.9 2.5 0.7 2.6 0.6 2.8 0.5"/>
<path stroke="#cc6f1c" d="M1025.7 547.5l-0.1-2.7-0.2-2.6-0.4-2.5-0.5-2.4-0.7-2.3-0.8-2.2-0.9-2.1-1.1-2-1.3-1.8-1.3-1.8-1.6-1.6-1.6-1.6-1.8-1.3-1.9-1.3-2-1.1-2.1-1-2.3-0.9-2.4-0.7-2.4-0.6-2.6-0.5-2.7-0.3-2.8-0.2-2.9 0-2.9 0.1-2.3 0.1"/>
<path stroke="#be671a" d="M973 516l-2.5 0.7-3.4 0.9-3.4 1-3.4 1.2-3.5 1.3-3.6 1.5-3.5 1.5-3.6 1.7-3.5 1.8-3.6 2-3.6 2-3.5 2.1-3.6 2.3-3.5 2.4-2.7 1.8"/>
<path stroke="#ae5e18" d="M922.1 540.2l-0.8 0.6-3.5 2.5-3.5 2.7-3.4 2.7-3.3 2.8-3.3 2.9-3.2 2.9-3.2 3-3.1 3.1-3 3.1-3 3.2-2.8 3.2-2.8 3.2-2.6 3.3-2.6 3.3-2.5 3.3-2.3 3.4-2.3 3.3-2.1 3.4-2 3.3-1.8 3.4-1.8 3.3-1.6 3.3-1.5 3.3-1.3 3.3-1.2 3.2M854.5 630.1l-0.3 1.6-0.5 2.9-0.3 2.9-0.2 2.8-0.1 2.8 0.2 2.6 0.2 2.6 0.4 2.5 0.6 2.4 0.7 2.3 0.8 2.1 1 2.1 1.1 2 1.3 1.8 1.4 1.8 1.5 1.6 1.7 1.5 1.8 1.3 1.9 1.3 2.1 1.1 2.1 0.9 2.3 0.9 2.4 0.7 2.5 0.5 2.6 0.5"/>
<path stroke="#cf761d" d="M1018.5 546.4l0-2.6-0.2-2.5-0.4-2.4-0.5-2.3-0.6-2.2-0.8-2.1-0.9-2-1-1.8-1.2-1.8-1.3-1.7-1.5-1.6-1.5-1.4-1.7-1.3-1.8-1.2-1.9-1.1-2.1-1-2.1-0.8-2.3-0.7-2.4-0.6-2.4-0.4-2.6-0.3-2-0.1"/>
<path stroke="#c16e1b" d="M976 515l-0.8 0.1-3 0.5-3.1 0.6-3.1 0.7-3.2 0.9-3.3 1-3.3 1.2-3.3 1.2-3.4 1.4-3.3 1.5-3.4 1.6-3.4 1.7-3.4 1.9-3.4 1.9-3.4 2-3.4 2.2-3.4 2.2-2.5 1.8"/>
<path stroke="#b06518" d="M919.9 539.4l-0.8 0.6-3.4 2.4-3.2 2.5-3.3 2.6-3.2 2.6-3.1 2.8-3.1 2.8-3 2.8-3 3-2.8 2.9-2.8 3-2.8 3.1-2.6 3.1-2.5 3.1-2.5 3.2-2.3 3.2-2.3 3.1-2.1 3.2-2 3.2-1.9 3.2-1.8 3.2-1.6 3.2-1.6 3.2-1.4 3.1-1.3 3.1-1.1 3.1-1 3-0.9 3-0.7 2.9M854.3 633.5l-0.1 1.3 0 2.6 0.1 2.5 0.2 2.5 0.4 2.4 0.5 2.2 0.7 2.2 0.8 2.1 0.9 2 1.1 1.8 1.2 1.8 1.3 1.7 1.5 1.5 1.6 1.4 1.7 1.3 1.8 1.2 2 1 2.1 1 2.1 0.7 2.3 0.7 2.4 0.6 2.5 0.4"/>
<path stroke="#c4751b" d="M1011.3 544l-0.1-2.4-0.2-1.8M975.4 513.5l-2.8 0.3-2.8 0.3-2.9 0.5-3 0.6-3 0.7-3.1 0.8-3.1 1-3.1 1.1-3.2 1.2-3.2 1.3-3.2 1.4-3.3 1.6-3.3 1.6-3.2 1.8-3.3 1.8-3.2 2-3.3 2-3.2 2.2-2.4 1.7"/>
<path stroke="#d27e1d" d="M1011 539.8l0-0.6-0.4-2.3-0.4-2.1-0.6-2.2-0.8-2-0.8-1.9-1-1.8-1.2-1.7-1.2-1.6-1.4-1.5-1.5-1.4-1.6-1.3-1.7-1.1-1.9-1-1.9-1-2.1-0.7-2.2-0.7"/>
<path stroke="#b36b19" d="M916.8 537.4l-0.8 0.5-3.2 2.3-3.1 2.4-3.1 2.5-3.1 2.6-3 2.6-2.9 2.7-2.9 2.7-2.9 2.8-2.7 2.9-2.7 2.8-2.6 3-2.5 2.9-2.5 3-2.3 3.1-2.2 3-2.2 3-2 3.1-1.9 3.1-1.9 3-1.7 3.1-1.6 3-1.4 3.1-1.4 3-1.2 2.9-1.1 3-1 2.9-0.8 2.8-0.7 2.9-0.6 2.7-0.2 1.4M854.3 636.6l0.2 1.7 0.5 2.2 0.7 2.1 0.7 1.9 0.9 1.9 1.1 1.8 1.1 1.7 1.3 1.6 1.4 1.5 1.5 1.3 1.7 1.3 1.7 1.1 1.9 1 2 0.9 2.1 0.7 2.2 0.7 2.2 0.5 2.4 0.4"/>
<path stroke="#c77d1b" d="M1003.9 540.7l0-2.4-0.2-2.3-0.3-1.6M973.9 511.2l-1.9 0-2.6 0.1-2.7 0.2-2.7 0.3-2.8 0.5-2.9 0.6-2.9 0.7-2.9 0.8-3 0.9-3.1 1-3 1.2-3.1 1.3-3.1 1.3-3.2 1.5-3.1 1.6-3.1 1.7-3.2 1.8-3.1 1.9-3.2 2-3.1 2-2.3 1.6"/>
<path stroke="#d6861d" d="M1003.4 534.4l-0.1-0.6-0.4-2.1-0.6-2-0.7-1.9-0.8-1.9-1-1.7-1.1-1.7-1.2-1.5-1.3-1.5-1.5-1.3-1.5-1.2-1.7-1.1-1.8-1-1.4-0.7"/>
<path stroke="#b67219" d="M912.9 534.2l-0.7 0.6-3.1 2.2-3 2.3-3 2.4-3 2.5-2.9 2.5-2.8 2.6-2.8 2.6-2.7 2.7-2.7 2.8-2.6 2.7-2.5 2.9-2.4 2.8-2.3 2.9-2.3 2.9-2.1 2.9-2.1 3-2 2.9-1.8 3-1.8 2.9-1.6 3-1.6 2.9-1.4 2.9-1.3 2.9-1.2 2.9-1 2.8-1 2.8-0.8 2.8-0.6 2.7-0.6 2.6-0.4 2.7-0.3 2.5-0.1 0.6M853.7 634.6l0.3 1 0.8 1.9 0.8 1.8 1 1.8 1.2 1.6 1.2 1.5 1.3 1.4 1.5 1.3 1.6 1.2 1.7 1.1 1.8 1 1.9 0.8 2 0.8 2.1 0.6 2.2 0.5 2.3 0.3"/>
<path stroke="#cb841b" d="M996.7 536.4l-0.1-2.3-0.2-2.2-0.3-2.2-0.3-1.5M971.7 508.1l-1.2-0.1-2.4-0.2-2.4 0-2.5 0.1-2.6 0.2-2.7 0.3-2.7 0.4-2.8 0.6-2.8 0.7-2.8 0.7-3 0.9-2.9 1.1-3 1.1-3 1.2-3 1.3-3 1.5-3.1 1.5-3 1.7-3.1 1.7-3 1.8-3 2-3.1 2-2.2 1.5"/>
<path stroke="#da8e1d" d="M995.8 528.2l-0.1-0.5-0.6-2-0.7-1.9-0.8-1.7-0.9-1.7-1.1-1.6-1.1-1.5-1.3-1.4-1.4-1.3-1.5-1.2-1.7-1.1"/>
<path stroke="#ba7919" d="M908.4 530.1l-0.8 0.6-2.9 2.1-3 2.3-2.9 2.3-2.8 2.4-2.8 2.4-2.8 2.5-2.7 2.6-2.6 2.6-2.6 2.7-2.5 2.7-2.5 2.7-2.3 2.8-2.3 2.8-2.2 2.8-2.1 2.8-2 2.9-1.9 2.8-1.8 2.9-1.7 2.9-1.6 2.8-1.5 2.9-1.3 2.8-1.3 2.8-1.1 2.8-1.1 2.7-0.9 2.8-0.8 2.6-0.6 2.7-0.6 2.5-0.4 2.6-0.3 2.4-0.1 2.4 0 2.4 0 0.6M852.2 630.8l0.6 1.3 1 1.7 1.1 1.5 1.2 1.5 1.3 1.4 1.4 1.3 1.5 1.1 1.7 1.1 1.7 0.9 1.9 0.8 1.9 0.7 2.1 0.6 2.1 0.5 2.2 0.4"/>
<path stroke="#cd8d1d" d="M989.7 531.3l-0.1-2.3-0.2-2.1-0.3-2.1-0.2-1M969.5 504.4l-1-0.3-2.2-0.4-2.2-0.2-2.3-0.2-2.4 0-2.5 0.1-2.5 0.2-2.6 0.3-2.7 0.4-2.7 0.6-2.8 0.6-2.8 0.8-2.8 0.9-2.9 1-2.9 1.1-2.9 1.2-3 1.3-3 1.4-2.9 1.5-3 1.6-3 1.7-3 1.8-2.9 1.9"/>
<path stroke="#dc981f" d="M988.9 523.8l-0.2-1-0.6-2-0.7-1.8-0.7-1.8-1-1.6-1-1.6-1.1-1.4-1.3-1.4-1.4-1.3-0.7-0.6"/>
<path stroke="#bb811a" d="M908.5 521.7l-3 1.9-2.9 2.1-2.9 2.1-2.9 2.2-2.8 2.2-2.8 2.4-2.8 2.4-2.7 2.4-2.6 2.5-2.6 2.6-2.5 2.6-2.5 2.6-2.3 2.7-2.3 2.7-2.3 2.8-2.1 2.7-2.1 2.8-1.9 2.8-1.9 2.8-1.7 2.8-1.7 2.8-1.6 2.8-1.4 2.8-1.4 2.7-1.2 2.8-1.1 2.7-1 2.7-0.9 2.6-0.8 2.6-0.6 2.6-0.6 2.5-0.4 2.5-0.2 2.4-0.2 2.4 0 2.3 0.1 2.2 0.2 2.1M849.7 626.1l0.2 0.4 1.1 1.5 1.1 1.5 1.3 1.3 1.4 1.3 1.5 1.1 1.6 1 1.7 0.9 1.8 0.9 1.9 0.6 2 0.6 2.1 0.5 2.2 0.4"/>
<path stroke="#dba222" d="M983 525.5l-0.1-2.2-0.1-2.2-0.4-2-0.4-2-0.5-1.9-0.7-1.8-0.8-1.7-0.9-1.7-1-1.5-1.1-1.5-1.3-1.3-0.3-0.3"/>
<path stroke="#cc971f" d="M967 500.1l-0.9-0.3-2-0.6-2-0.5-2.1-0.4-2.2-0.2-2.3-0.2-2.4 0-2.4 0.1-2.5 0.2-2.6 0.3-2.6 0.4-2.7 0.5-2.7 0.7-2.8 0.7-2.8 0.9-2.8 1-2.9 1.1-2.9 1.2-1.4 0.6"/>
<path stroke="#ba8a1d" d="M922 505.6l-1.5 0.6-2.9 1.4-3 1.5-2.9 1.6-2.9 1.7-3 1.7-2.9 1.9-2.9 1.9-2.9 2-2.9 2.1-2.8 2.2-2.8 2.2-2.7 2.3-2.8 2.4-2.6 2.4-2.6 2.5-2.6 2.5-2.5 2.6-2.4 2.6-2.3 2.6-2.3 2.7-2.2 2.7-2.1 2.7-2 2.8-2 2.7-1.8 2.8-1.7 2.7-1.7 2.8-1.5 2.8-1.4 2.7-1.4 2.7-1.2 2.7-1.1 2.7-1 2.7-0.9 2.6-0.7 2.6-0.7 2.5-0.5 2.5-0.4 2.4-0.2 2.4-0.2 2.3 0 2.3 0.1 2.2 0.2 2.1 0.3 2 0.4 2 0.2 0.5M845.9 620.6l0.3 0.3 1.1 1.5 1.3 1.3 1.4 1.2 1.5 1.1 1.5 1 1.7 0.9 1.8 0.8 1.9 0.7 2 0.6 2 0.5 2.2 0.3"/>
<path stroke="#d9ad25" d="M976.8 519.2l0-2.2-0.2-2.2-0.3-2-0.4-2-0.6-1.9-0.6-1.8-0.8-1.7-0.9-1.6-1-1.6-1.1-1.4-0.3-0.3"/>
<path stroke="#caa122" d="M964.9 495.8l-1.3-0.7-1.7-0.8-1.9-0.7-1.9-0.6-2.1-0.5-2.1-0.4-2.2-0.2-2.3-0.2-2.3 0-2.4 0.1-2.5 0.2-2.6 0.3-2.6 0.4-2.6 0.5-2.8 0.7-0.6 0.2"/>
<path stroke="#b9931f" d="M931 494.1l-2.1 0.5-2.8 0.9-2.8 1-2.9 1.1-2.9 1.1-2.9 1.3-2.9 1.4-2.9 1.5-2.9 1.6-3 1.6-2.9 1.8-2.9 1.8-2.9 2-2.9 2-2.8 2.1-2.8 2.1-2.8 2.2-2.8 2.3-2.7 2.4-2.6 2.4-2.6 2.4-2.5 2.5-2.5 2.6-2.4 2.6-2.4 2.6-2.2 2.7-2.2 2.7-2.1 2.7-2 2.7-1.9 2.7-1.9 2.8-1.7 2.7-1.6 2.8-1.6 2.7-1.4 2.8-1.3 2.7-1.2 2.7-1.1 2.7-1 2.6-0.9 2.6-0.7 2.6-0.7 2.5-0.5 2.5-0.4 2.4-0.2 2.4-0.2 2.3 0 2.2 0 2.2 0.3 2.1 0.3 2 0.4 2 0.6 1.9 0.7 1.8 0.6 1.2"/>
<path stroke="#a6841c" d="M841.8 615.6l1.3 1.3 1.3 1.2 1.5 1.2 1.6 1 1.7 0.9 1.7 0.8 1.9 0.6 2 0.6 2 0.5 2.2 0.3"/>
<path stroke="#d8b628" d="M971.3 512.5l0-2.2-0.2-2.1-0.3-2.1-0.4-2-0.6-1.9-0.6-1.8-0.8-1.7-0.9-1.7-1-1.5"/>
<path stroke="#c9aa25" d="M963.8 492.4l-1.1-0.9-1.4-1.2-1.6-1-1.6-1-1.8-0.8-1.9-0.7-1.9-0.6-2.1-0.5-2.1-0.3-2.2-0.3-2.3-0.2-2.4 0-2.4 0.1-2.5 0.2-2.5 0.3-1.4 0.2"/>
<path stroke="#b79b22" d="M932.6 485.7l-1.3 0.2-2.6 0.6-2.8 0.6-2.7 0.8-2.8 0.8-2.9 1-2.8 1.1-2.9 1.2-3 1.3-2.9 1.4-2.9 1.5-3 1.5-2.9 1.7-2.9 1.8-3 1.8-2.9 2-2.9 2-2.8 2.1-2.9 2.1-2.7 2.3-2.8 2.3-2.7 2.3-2.7 2.4M834.3 568.2l-0.3 0.6-0.9 2.7-0.9 2.6-0.8 2.6-0.6 2.5-0.5 2.5-0.4 2.5-0.3 2.3-0.2 2.4 0 2.2 0.1 2.2 0.2 2.1 0.3 2.1 0.5 1.9 0.6 1.9 0.7 1.8 0.8 1.7 0.9 1.6 1 1.6 1.2 1.4 1.2 1.3 0.4 0.3"/>
<path stroke="#a58b1e" d="M868.8 520.5l-2.6 2.5-2.5 2.5-2.5 2.6-2.4 2.6-2.4 2.7-2.3 2.6-2.1 2.7-2.2 2.8-2 2.7-1.9 2.7-1.8 2.8-1.8 2.8-1.6 2.7-1.6 2.8-1.4 2.7-1.3 2.8-1.2 2.7-0.9 2M837.3 611l1 0.9 1.5 1.2 1.6 1 1.7 0.9 1.8 0.8 1.8 0.7 2 0.5 2.1 0.5 2.1 0.3"/>
<path stroke="#d6b929" d="M966.6 505.6l0-2.2-0.2-2.2-0.3-2.1-0.5-2-0.5-1.9-0.7-1.8-0.8-1.8-0.9-1.6"/>
<path stroke="#c7ac26" d="M962.7 490l-1-1.6-1.2-1.5-1.2-1.3-1.4-1.3-1.5-1.2-1.6-1-1.6-0.9-1.8-0.9-1.9-0.7-2-0.6-2.1-0.5-2.1-0.4-2.3-0.3-2.3-0.1-2.4 0-2.4 0-2.6 0.2-1.3 0.2"/>
<path stroke="#b69e23" d="M930 478.1l-1.3 0.2-2.6 0.4-2.7 0.5-2.8 0.7-2.8 0.8-2.8 0.8-2.9 1-2.9 1.1-3 1.2-2.9 1.3-3 1.5M825.4 568.8l-0.6 1.9-0.7 2.6-0.5 2.5-0.4 2.5-0.3 2.4-0.1 2.4-0.1 2.2 0.1 2.3 0.2 2.1 0.4 2.1 0.4 2 0.6 1.9 0.7 1.8 0.8 1.7 1 1.7 1 1.5 1.2 1.5 1.3 1.3 1.4 1.2 0.3 0.3"/>
<path stroke="#a48e1f" d="M900.3 487.6l-3 1.5-2.9 1.6-3 1.7-3 1.8-3 1.8-2.9 2-2.9 2-2.9 2.2-2.9 2.2-2.9 2.2-2.8 2.3-2.7 2.4-2.7 2.5-2.6 2.5-2.6 2.6-2.5 2.6-2.5 2.6-2.4 2.7-2.3 2.7-2.2 2.7-2.1 2.8-2.1 2.8-1.9 2.8-1.9 2.7-1.8 2.9-1.6 2.8-1.6 2.7-1.5 2.8-1.3 2.8-1.2 2.7-1.1 2.8-1.1 2.6-0.8 2.7-0.2 0.7M832.1 606.7l1.2 0.9 1.6 1 1.7 0.9 1.8 0.8 1.9 0.7 2 0.6 2.1 0.5 2.2 0.3"/>
<path stroke="#d4bc2a" d="M962.9 498.7l-0.1-2.3-0.2-2.2-0.3-2.1-0.5-2.1-0.5-1.9-0.7-1.9-0.8-1.8-1-1.7-1-1.6-1.2-1.5-1.3-1.4-1.4-1.3-1.5-1.2"/>
<path stroke="#c6af27" d="M952.4 475.7l-1.6-1-1.7-1-1.8-0.9-2-0.7-2-0.6-2.1-0.5-2.2-0.4-2.3-0.3-2.4-0.1-2.4-0.1-2.6 0.1-2.6 0.2-0.6 0.1"/>
<path stroke="#b5a024" d="M926.1 470.5l-2 0.2-2.7 0.5-2.8 0.5-2.8 0.7-2.9 0.8-2.9 0.9-2.9 1-3 1.1-3 1.3-3 1.3M818.4 563.3l-0.6 2-0.6 2.6-0.6 2.6-0.4 2.5-0.3 2.5-0.1 2.4-0.1 2.3 0.1 2.3 0.2 2.2 0.4 2.1 0.4 2.1 0.6 1.9 0.7 1.9 0.9 1.7 0.9 1.7 1.1 1.6 1.2 1.5 1.3 1.3 1.5 1.3 1.5 1.2 1.2 0.8"/>
<path stroke="#a29020" d="M898.1 478.8l-3.1 1.4-3 1.6-3.1 1.6-3 1.8-3 1.8-3.1 1.9-3 2-3 2.1-3 2.2-2.9 2.2-2.9 2.3-2.9 2.4-2.8 2.5-2.7 2.5-2.7 2.5-2.7 2.6-2.5 2.7-2.6 2.7-2.4 2.7-2.3 2.8-2.3 2.8-2.2 2.8-2.1 2.9-2 2.8-1.9 2.9-1.8 2.9-1.7 2.8-1.6 2.9-1.5 2.8-1.4 2.9-1.2 2.8-1.2 2.7-1 2.8-0.9 2.7-0.2 0.7M827.7 603.8l0.4 0.2 1.8 1 1.8 0.8 2 0.7 2 0.6 2.2 0.5 2.2 0.3"/>
<path stroke="#d3bf2b" d="M960.1 491.9l0-2.3-0.2-2.3-0.4-2.2-0.4-2.1-0.6-2-0.7-2-0.8-1.8-1-1.8-1.1-1.6-1.2-1.6-1.3-1.4-1.5-1.3-1.5-1.3"/>
<path stroke="#c4b228" d="M949.4 468.2l-1.7-1.1-1.8-1-1.9-0.8-1.9-0.8-2.1-0.6-2.2-0.6-2.3-0.4-2.3-0.2-2.5-0.2-2.5 0-2.6 0-2.7 0.3-0.7 0"/>
<path stroke="#b3a325" d="M922.2 462.8l-2 0.3-2.8 0.4-2.9 0.6-2.9 0.7-2.9 0.8-3 0.9-3.1 1.1-3 1.1-3.1 1.3-3.1 1.4M812.1 555.7l-0.7 2.1-0.8 2.7-0.6 2.7-0.6 2.7-0.4 2.6-0.3 2.6-0.2 2.4 0 2.4 0.1 2.4 0.2 2.3 0.3 2.1 0.5 2.1 0.6 2 0.8 2 0.8 1.8 1 1.7 1.1 1.6 1.3 1.6 1.3 1.4 1.5 1.3 1.6 1.2 1.7 1.1 1.8 0.9 0.9 0.5"/>
<path stroke="#a19221" d="M893.4 471.4l-3.2 1.5-3.1 1.6-3.2 1.7-3.1 1.8-3.1 1.8-3.2 2-3.1 2.1-3.1 2.1-3 2.3-3 2.3-3 2.4-3 2.4-2.9 2.6-2.8 2.5-2.8 2.7-2.7 2.7-2.7 2.7-2.6 2.8-2.5 2.8-2.4 2.9-2.3 2.9-2.3 2.9-2.2 2.9-2 2.9-2 3-1.8 2.9-1.8 3-1.6 2.9-1.6 3-1.4 2.9-1.3 2.9-1.2 2.8-1 2.9-0.3 0.7M824 601.9l1 0.4 2 0.7 2.1 0.6 2.2 0.5 2.3 0.4"/>
<path stroke="#d1c32c" d="M958.6 485.4l-0.1-2.4-0.2-2.4-0.3-2.3-0.5-2.2-0.6-2.1-0.8-2-0.8-1.9-1-1.8-1.2-1.7-1.2-1.7-1.4-1.4-1.5-1.4-1.6-1.3"/>
<path stroke="#c3b529" d="M947.4 460.8l-1.7-1.1-1.9-1.1-1.9-0.9-2.1-0.8-2.2-0.6-2.2-0.6-2.4-0.4-2.4-0.3-2.6-0.2-2.6 0-2.7 0.1-2.8 0.2-0.7 0.1"/>
<path stroke="#b2a526" d="M919.2 455.2l-2.1 0.3-2.9 0.4-3 0.6-3 0.7-3.1 0.9-3.1 1-3.1 1-3.2 1.2-3.2 1.4-3.2 1.4M806.6 547.2l-0.3 0.7-1.1 2.9-1 2.9-0.8 2.9-0.7 2.8-0.6 2.8-0.4 2.7-0.3 2.6-0.2 2.6-0.1 2.5 0.1 2.4 0.3 2.4 0.3 2.2 0.5 2.2 0.7 2.1 0.7 2 0.9 1.9 1.1 1.8 1.1 1.7 1.3 1.6 1.4 1.4 1.5 1.4 1.7 1.2 1.7 1.1 1.9 1.1 2 0.8 2.1 0.8 1.6 0.5"/>
<path stroke="#a09522" d="M889.3 464.1l-3.3 1.5-3.3 1.7-3.2 1.7-3.3 1.9-3.2 1.9-3.3 2.1-3.2 2.1-3.2 2.3-3.2 2.3-3.1 2.4-3.1 2.5-3.1 2.5-3 2.7-2.9 2.6-2.9 2.8-2.9 2.8-2.7 2.8-2.7 2.9-2.6 2.9-2.5 3-2.4 3-2.4 3-2.2 3.1-2.2 3-2 3.1-1.9 3-1.9 3.1-1.7 3-1.6 3.1-1.4 3-1.4 3-0.9 2.3M822 601.2l0.6 0.1 2.2 0.6 2.4 0.3"/>
<path stroke="#d1c52e" d="M958.2 479.3l0-2.6-0.2-2.5-0.4-2.3-0.5-2.3-0.6-2.2-0.8-2.1-0.9-2-1-1.9-1.2-1.8-1.3-1.7-1.5-1.6-1.5-1.4-1.7-1.3"/>
<path stroke="#c2b72b" d="M946.6 453.6l-1.8-1.2-1.9-1.1-2.1-1-2.1-0.8-2.3-0.7-2.4-0.5-2.4-0.5-2.6-0.3-2.6-0.2-2.8 0-2.8 0.1-2.9 0.2-0.7 0.1"/>
<path stroke="#b1a727" d="M917.2 447.7l-2.3 0.3-3 0.5-3.1 0.6-3.1 0.8-3.2 0.8-3.3 1-3.3 1.2-3.3 1.2-3.4 1.4-3.3 1.5M801.6 539.1l-1.1 2.3-1.3 3.1-1.1 3.1-1 3-0.9 3-0.7 3-0.6 2.8-0.5 2.9-0.3 2.7-0.2 2.7 0 2.6 0.1 2.6 0.2 2.4 0.4 2.4 0.5 2.2 0.7 2.2 0.8 2.1 0.9 2 1.1 1.9 1.2 1.7 1.3 1.7 1.5 1.5 1.6 1.4 1.7 1.3 1.8 1.2 2 1 2.1 1 2.1 0.8 2.3 0.6 2.4 0.6 2.5 0.4"/>
<path stroke="#9f9723" d="M885.9 457l-3.4 1.6-3.4 1.7-3.4 1.9-3.4 1.9-3.4 2-3.4 2.2-3.4 2.2-3.3 2.4-3.3 2.4-3.3 2.5-3.3 2.6-3.2 2.6-3.1 2.8-3.1 2.8-3 2.8-3 3-2.8 2.9-2.8 3.1-2.8 3-2.6 3.1-2.5 3.1-2.5 3.2-2.3 3.2-2.2 3.2-2.2 3.1-2 3.2-1.9 3.2-1.8 3.2-1.6 3.2-1.6 3.2-0.3 0.8"/>
<path stroke="#d1c62f" d="M959.3 473.6l-0.1-2.7-0.2-2.5-0.4-2.5-0.5-2.5-0.7-2.3-0.8-2.2-1-2.1-1-2-1.3-1.8-1.4-1.8-1.5-1.6-1.6-1.5-1.8-1.4"/>
<path stroke="#c3b92c" d="M947 446.7l-1.9-1.3-2-1.1-2.1-1-2.3-0.9-2.4-0.7-2.5-0.6-2.5-0.5-2.7-0.3-2.8-0.2-2.9 0-2.9 0.1-3.1 0.2-0.7 0.1"/>
<path stroke="#b2a928" d="M916.2 440.5l-2.4 0.3-3.2 0.5-3.2 0.7-3.3 0.8-3.4 0.9-3.4 1-3.5 1.2-3.4 1.3-3.6 1.5-3.5 1.6M798.6 528.9l-1.8 3.3-1.6 3.4-1.5 3.3-1.3 3.2-1.2 3.2-1.1 3.2-0.9 3.2-0.8 3-0.6 3.1-0.5 2.9-0.3 2.9-0.2 2.8-0.1 2.8 0.2 2.6 0.2 2.6 0.4 2.5 0.6 2.4 0.7 2.3 0.8 2.2 1 2 1.1 2 1.3 1.8 1.4 1.8 1.5 1.6 1.7 1.5 1.8 1.3 1.9 1.3 2.1 1.1 2.1 0.9 2.3 0.9 2.4 0.7 2.5 0.5 2.6 0.5"/>
<path stroke="#a09824" d="M883.3 450.3l-3.6 1.6-3.5 1.9-3.6 1.9-3.6 2-3.5 2.2-3.6 2.2-3.5 2.4-3.5 2.4-3.5 2.6-3.5 2.6-3.4 2.7-3.3 2.8-3.3 2.9-3.2 2.9-3.2 3-3.1 3.1-3 3.1-3 3.2-2.8 3.2-2.8 3.2-2.7 3.3-2.5 3.3-2.5 3.3-2.3 3.4-2.3 3.3-2.1 3.4-2 3.4-1.8 3.3"/>
<path stroke="#d2c831" d="M961.6 468.6l0-2.8-0.3-2.8-0.4-2.6-0.5-2.5-0.7-2.5-0.9-2.3-1-2.2-1.1-2.1-1.3-2-1.5-1.8-1.5-1.8-1.8-1.6-1.8-1.4-1.5-1"/>
<path stroke="#c4ba2e" d="M947.3 439.2l-0.5-0.3-2.2-1.2-2.2-1.1-2.4-0.9-2.5-0.8-2.6-0.6-2.8-0.5-2.8-0.3-2.9-0.2-3 0-3.2 0.1-3.2 0.2-0.8 0.1"/>
<path stroke="#b3aa2a" d="M916.2 433.7l-2.4 0.3-3.4 0.6-3.4 0.6-3.5 0.9-3.5 0.9-3.6 1.2-3.7 1.2-3.6 1.4-3.8 1.5-3.7 1.7-0.9 0.4M799.8 514.5l-1.2 1.7-2.2 3.6-2.1 3.5-2 3.5-1.8 3.5-1.7 3.5-1.6 3.5-1.4 3.4-1.2 3.4-1.2 3.4-0.9 3.3-0.8 3.3-0.7 3.1-0.5 3.2-0.4 3-0.2 3 0 2.9 0.1 2.8 0.3 2.7 0.4 2.6 0.6 2.5 0.7 2.4 0.9 2.3 1 2.2 1.2 2.1 1.3 1.9 1.5 1.9 1.6 1.7 1.8 1.5 1.9 1.5 2 1.3 2.2 1.1 2.3 1 2.4 0.9 2.5 0.8 2.6 0.5 2.8 0.5"/>
<path stroke="#a19926" d="M880.7 444.4l-2.8 1.4-3.8 1.9-3.8 2-3.7 2.1-3.8 2.3-3.7 2.4-3.8 2.4-3.7 2.6-3.6 2.7-3.6 2.8-3.6 2.8-3.6 3-3.4 3-3.4 3.1-3.4 3.2-3.2 3.2-3.2 3.3-3.1 3.3-3 3.4-2.9 3.4-2.8 3.5-2.7 3.5-2.6 3.5-2.5 3.5-1.2 1.8"/>
<path stroke="#d3c933" d="M965.4 464.2l-0.1-2.9-0.2-2.9-0.4-2.8-0.6-2.7-0.7-2.6-0.9-2.4-1.1-2.4-1.2-2.2-1.4-2.1-1.5-1.9-1.7-1.8-1.8-1.7-2-1.6-2.1-1.4-2.3-1.2-2.3-1.2-2.6-0.9"/>
<path stroke="#c4bb2f" d="M942.5 429.5l-2.6-0.8-2.8-0.7-2.8-0.5-3-0.4-3.1-0.2-3.2 0-3.3 0.1-3.4 0.3-3.5 0.4-1.7 0.3"/>
<path stroke="#b4ab2b" d="M913.1 428l-1.8 0.3-3.6 0.7-3.7 0.9-3.8 1-3.8 1.2-3.8 1.3-3.9 1.5-3.9 1.6-3.9 1.7-4 1.9-4 2-3.9 2.2M819.7 481.9l-3.3 3.5-3.3 3.5-3.2 3.6-3.1 3.6-2.9 3.6-2.9 3.7-2.7 3.7-2.6 3.7-2.5 3.8-2.4 3.7-2.2 3.8-2.1 3.7-1.9 3.7-1.8 3.7-1.7 3.7-1.4 3.6-1.4 3.6-1.2 3.5-1 3.5-0.9 3.4-0.7 3.4-0.5 3.3-0.4 3.2-0.2 3.2 0 3 0.1 3 0.3 2.9 0.4 2.7 0.6 2.7 0.8 2.5 0.9 2.5 1.1 2.3 1.3 2.1 1.4 2.1 1.6 1.9 1.7 1.8 1.8 1.7 2 1.5 2.2 1.4 2.3 1.2 2.4 1.1 2.5 0.9 2.7 0.8 2.8 0.6 2.9 0.5"/>
<path stroke="#a19a27" d="M869 444.3l-4 2.2-4 2.4-4 2.5-3.9 2.6-3.9 2.8-3.9 2.8-3.8 2.9-3.8 3-3.7 3.2-3.7 3.2-3.6 3.2-3.5 3.4-3.5 3.4"/>
<path stroke="#d4cb34" d="M970.6 460.6l-0.1-3.1-0.2-3.1-0.5-2.9-0.6-2.9-0.8-2.7-0.9-2.6-1.1-2.5-1.3-2.3-1.5-2.2-1.6-2.1-1.8-1.9-1.9-1.8-2.1-1.7-2.2-1.4-2.4-1.4-2.5-1.2-2.7-1-2.8-0.8-2.9-0.7"/>
<path stroke="#c5bd31" d="M940.7 422.3l-3.1-0.6-3.1-0.4-3.3-0.2-3.4 0-3.5 0.1-3.6 0.3-3.7 0.4-3.7 0.6-3.8 0.8"/>
<path stroke="#b4ad2d" d="M909.5 423.3l-3.9 0.9-4 1.1-4 1.3-4.1 1.4-4.1 1.5-4.1 1.7-4.2 1.9-4.2 2-4.2 2.1-4.2 2.3-4.2 2.4-4.3 2.5-4.1 2.6-4.2 2.8-4.1 2.9-4.2 3-4 3.1-4 3.2-4 3.3-3.8 3.4-3.9 3.4-3.7 3.6-3.7 3.6-3.5 3.7-3.5 3.7-3.3 3.8-3.3 3.8-3.1 3.9-3.1 3.9-2.9 3.9-2.7 4-2.7 3.9-2.4 4-2.4 3.9-2.2 4-2.1 3.9-1.9 3.9-1.7 3.9-1.6 3.8-1.4 3.8-1.3 3.8-1 3.7-1 3.6-0.7 3.6-0.6 3.5-0.4 3.4-0.2 3.3 0 3.3 0.1 3.1 0.3 3 0.5 3 0.6 2.8 0.8 2.7 1 2.5 1.2 2.5 1.3 2.3 1.5 2.2 1.7 2 1.8 1.9 1.9 1.8 2.2 1.6 2.2 1.4 2.4 1.3 2.6 1.2 2.7 1 2.8 0.8 3 0.6 3.1 0.5"/>
<path stroke="#d5cc36" d="M977.2 457.8l-0.1-3.4-0.3-3.2-0.5-3.2-0.6-3-0.8-2.8-1-2.8-1.2-2.6-1.4-2.5-1.5-2.4-1.7-2.1-1.9-2.1-2.1-1.9-2.2-1.7-2.4-1.6-2.5-1.4-2.7-1.3-2.8-1-3-1-3.1-0.7-3.2-0.6-0.8-0.1"/>
<path stroke="#c6be32" d="M941.4 416.4l-2.6-0.3-3.4-0.2-3.6 0-3.7 0.1-3.8 0.3-3.9 0.5-4 0.6-4 0.8-4.2 1"/>
<path stroke="#b5ae2e" d="M908.2 419.2l-4.2 1.2-4.2 1.3-4.4 1.5-4.3 1.6-4.4 1.8-4.4 2-4.5 2.1-4.4 2.2-4.5 2.4-4.5 2.6-4.4 2.7-4.5 2.8-4.4 2.9-4.4 3.1-4.3 3.2-4.3 3.2-4.3 3.4-4.2 3.5-4.1 3.6-4 3.7-4 3.7-3.9 3.9-3.7 3.9-3.7 3.9-3.6 4-3.4 4.1-3.3 4.1-3.2 4.1-3.1 4.2-3 4.2-2.7 4.2-2.7 4.2-2.5 4.2-2.3 4.1-2.2 4.2-2 4.2-1.9 4.1-1.6 4-1.5 4.1-1.4 4-1.1 3.9-1 3.8-0.8 3.8-0.6 3.7-0.4 3.6-0.2 3.6-0.1 3.4 0.1 3.3 0.3 2.4"/>
<path stroke="#a39c29" d="M762 582.9l0.1 0.8 0.5 3.1 0.7 3 0.8 2.9 1.1 2.7 1.2 2.6 1.4 2.4 1.6 2.3 1.7 2.2 2 2 2.1 1.9 2.2 1.7 2.4 1.5 2.6 1.4 2.7 1.2 2.8 1.1 3 0.8 3.2 0.7 3.2 0.6"/>
<path stroke="#d6ce38" d="M985.1 455.7l-0.1-3.6-0.3-3.4-0.5-3.3-0.7-3.2-0.9-3.1-1-2.9-1.3-2.8-1.4-2.6-1.7-2.5-1.8-2.3-2-2.2-2.2-2-2.3-1.8-2.5-1.7-2.7-1.5-2.9-1.3-3-1.2-3.1-1-3.3-0.7-3.4-0.6-3.6-0.5"/>
<path stroke="#c7c034" d="M944.4 411.5l-3.7-0.2-3.8-0.1-3.9 0.2-4 0.3-4.1 0.5-4.3 0.7-4.3 0.8-4.4 1.1-3.3 0.9"/>
<path stroke="#b6af2f" d="M908.6 415.7l-1.1 0.3-4.5 1.4-4.6 1.6-4.6 1.7-4.7 1.9-4.7 2.1-4.7 2.3-4.7 2.4-4.8 2.5-4.7 2.7-4.7 2.8-4.7 3-4.7 3.1-4.7 3.3-4.6 3.4-4.6 3.4-4.5 3.6-4.4 3.8-4.4 3.8-4.3 3.9-4.2 3.9-4.1 4.1-4 4.1-3.9 4.2-3.7 4.3-3.7 4.3-3.5 4.3-3.4 4.4-3.3 4.4-3.1 4.5-3 4.4-2.8 4.5-2.6 4.4-2.5 4.5-2.3 4.4-2.1 4.4-2 4.3-1.8 4.4-1.6 4.2-1.4 4.2-0.6 2.1"/>
<path stroke="#a39d2b" d="M760.3 557l-0.6 2.1-1 4.1-0.9 4-0.6 3.9-0.4 3.9-0.3 3.7-0.1 3.6 0.2 3.6 0.3 3.4 0.6 3.3 0.7 3.1 0.9 3.1 1.1 2.9 1.3 2.7 1.5 2.6 1.7 2.5 1.9 2.3 2 2.1 2.2 2 2.4 1.8 2.5 1.6 2.8 1.5 2.8 1.2 3.1 1.1 3.1 1 3.4 0.7 3.4 0.6"/>
<path stroke="#d7cf39" d="M994.2 454.4l-0.1-3.8-0.3-3.6-0.5-3.6-0.7-3.3-1-3.3-1.1-3.1-1.3-2.9-1.6-2.8-1.7-2.7-1.9-2.4-2.2-2.3-2.3-2.2-2.4-1.9-2.7-1.8-2.9-1.6-3-1.4-3.1-1.2-3.4-1-3.5-0.9-3.6-0.6-3.8-0.5-2.9-0.2"/>
<path stroke="#c8c135" d="M948.2 407.3l-1 0-4-0.1-4.2 0.2-4.3 0.3-4.3 0.5-4.5 0.8-4.6 0.9-4.6 1.1-4.8 1.3-1.1 0.3"/>
<path stroke="#b7b031" d="M910.8 412.6l-3.6 1.2-4.9 1.6-4.9 1.9-4.9 2-5 2.2-5 2.4-5 2.5-5.1 2.7-5 2.9-5 3-5 3.2-5 3.3-4.9 3.4-4.9 3.6-4.8 3.7-4.8 3.8-4.7 4-4.6 4-4.6 4.1-4.5 4.2-4.3 4.3-4.3 4.4-4.1 4.5-4 4.5-3.9 4.6-3.7 4.6-3.6 4.6-3.5 4.7-3.3 4.7-3.1 4.7-3 4.7-2.8 4.8-2.6 4.7-2.5 4.7-2.2 4.6-2.1 4.6-1 2.3"/>
<path stroke="#a49f2c" d="M760.6 548.3l-0.9 2.3-1.7 4.6-1.5 4.4-1.3 4.4-1.1 4.4-0.9 4.2-0.6 4.2-0.5 4.1-0.3 3.9 0 3.9 0.1 3.7 0.4 3.6 0.5 3.5 0.8 3.4 1 3.2 1.2 3.1 1.4 2.9 1.5 2.7 1.8 2.6 2 2.5 2.1 2.2 2.4 2.1 2.5 1.9 2.7 1.8 2.9 1.5 3.1 1.4 3.2 1.2 3.3 0.9 3.6 0.8 3.6 0.6"/>
<path stroke="#d8d13b" d="M1004.6 453.8l-0.2-4-0.3-3.9-0.5-3.7-0.8-3.6-1-3.4-1.2-3.3-1.4-3.2-1.7-2.9-1.8-2.8-2-2.6-2.3-2.5-2.4-2.2-2.7-2.1-2.8-1.9-3-1.7-3.2-1.4-3.4-1.3-3.5-1.1-3.7-0.9-3.8-0.7-4-0.5-4.2-0.2"/>
<path stroke="#c9c237" d="M954.7 403.9l-4.3-0.1-4.4 0.2-4.5 0.3-4.6 0.6-4.8 0.8-4.8 0.9-5 1.2-5 1.4-2.5 0.7"/>
<path stroke="#b7b232" d="M914.8 409.9l-2.5 0.8-5.2 1.8-5.2 2-5.2 2.1-5.3 2.4-5.3 2.5-5.3 2.7M776.6 517.4l-2.5 3.7-3.2 5-2.9 5-2.8 5-2.6 5-2.4 4.9"/>
<path stroke="#a5a02d" d="M760.2 546l-2.2 4.9-2 4.9-1.8 4.8-1.6 4.7-1.4 4.7-1.1 4.6-1 4.5-0.7 4.4-0.5 4.3-0.3 4.2 0 4.1 0.1 4 0.4 3.8 0.6 3.7 0.8 3.6 1.1 3.4 1.2 3.2 1.5 3.1 1.7 3 1.8 2.7 2.1 2.6 2.3 2.4 2.5 2.2 2.7 2 2.9 1.9 3 1.6 3.2 1.5 3.4 1.2 3.6 1 3.7 0.9 3.9 0.6"/>
<path stroke="#d8d23d" d="M1015.9 453.8l-0.1-4.2-0.4-4.1-0.5-3.9-0.9-3.8-1-3.7-1.3-3.4-1.5-3.4-1.7-3.1-2-2.9-2.1-2.8-2.4-2.6-2.6-2.4-2.8-2.2-3-2-3.2-1.8-3.3-1.5-3.6-1.4-3.8-1.2-3.9-0.9-4-0.7-4.3-0.5-4.4-0.3-1.1 0"/>
<path stroke="#c9c438" d="M962 401l-3.4-0.1-4.7 0.2-4.8 0.4-4.9 0.6-5 0.8-5.1 1-5.2 1.3-5.3 1.4-5.4 1.7-2.7 0.9"/>
<path stroke="#a6a12e" d="M757.8 550.2l-0.6 1.3-2.4 5.2-2.1 5.2-1.9 5.1-1.7 5-1.4 4.9-1.2 4.9-1 4.8-0.8 4.6-0.5 4.6-0.3 4.4-0.1 4.4 0.2 4.2 0.4 4 0.6 3.9 0.9 3.8 1.1 3.6 1.3 3.5 1.6 3.2 1.7 3.1 2 2.9 2.2 2.8 2.5 2.5 2.6 2.4 2.8 2.1 3.1 2 3.2 1.7 3.4 1.5 3.6 1.3 3.8 1.1 4 0.9 4.1 0.7"/>
<path stroke="#d9d43e" d="M1028.2 454.5l-0.2-4.5-0.3-4.3-0.7-4.2-0.8-4-1.1-3.8-1.4-3.7-1.6-3.5-1.8-3.3-2-3.2-2.3-2.9-2.5-2.7-2.8-2.6-2.9-2.3-3.2-2.1-3.4-1.9-3.5-1.6-3.8-1.5-4-1.2-4.1-1-4.3-0.7-4.5-0.6-4.6-0.3-1.2 0"/>
<path stroke="#cac53a" d="M971.2 398.6l-3.6 0-5 0.1-5 0.4-5.2 0.7-5.3 0.8-5.5 1.1-4.1 1"/>
<path stroke="#a6a230" d="M748.8 571.4l-0.9 2.7-1.8 5.3-1.6 5.2-1.2 5.2-1.1 5-0.8 5-0.6 4.8-0.3 4.7-0.1 4.6 0.2 4.4 0.4 4.3 0.7 4.1 0.9 4 1.2 3.8 1.4 3.7 1.6 3.4 1.9 3.3 2.1 3.1 2.4 2.9 2.5 2.7 2.8 2.4 3 2.3 3.2 2.1 3.4 1.8 3.7 1.6 3.8 1.4 4 1.2 4.2 0.9 4.3 0.7"/>
<path stroke="#dad540" d="M1041.1 455.6l-0.1-4.7-0.4-4.6-0.6-4.4-0.9-4.2-1.2-4.1-1.4-3.8-1.7-3.7-1.9-3.5-2.2-3.3-2.4-3.1-2.7-2.9-2.9-2.7-3.1-2.4-3.3-2.3-3.6-2-3.8-1.7-3.9-1.5-4.2-1.3-4.4-1.1-4.5-0.8-4.8-0.5-4.9-0.3-2.5-0.1"/>
<path stroke="#cbc73b" d="M979.7 396.6l-2.5 0-5.2 0.2-5.4 0.4-5.5 0.6-5.6 1-1.4 0.2"/>
<path stroke="#a7a331" d="M743.4 587.5l-1.6 5.5-1.4 5.4-1.1 5.4-0.9 5.2-0.6 5.1-0.3 5-0.1 4.8 0.2 4.7 0.5 4.5 0.7 4.4 0.9 4.2 1.3 4 1.4 3.8 1.8 3.7 2 3.5 2.2 3.2 2.5 3.1 2.7 2.8 2.9 2.6 3.2 2.4 3.4 2.2 3.6 1.9 3.8 1.7 4 1.5 4.2 1.2 4.4 1 4.6 0.8"/>
<path stroke="#dbd741" d="M1054.7 457.2l-0.1-5-0.4-4.8-0.7-4.7-1-4.4-1.2-4.3-1.5-4.1-1.8-3.9-2-3.7-2.3-3.5-2.5-3.2-2.8-3.1-3.1-2.8-3.3-2.6-3.5-2.3-3.7-2.1-4-1.9-4.2-1.6-4.4-1.3-4.6-1.1-4.8-0.9-5-0.6-5.2-0.3-2.6-0.1"/>
<path stroke="#ccc83d" d="M990 394.9l-2.7 0-5.5 0.2-5.6 0.5-5.8 0.7-1.5 0.2"/>
<path stroke="#a8a432" d="M739.2 601.9l-1.4 5.7-1.2 5.7-0.9 5.4-0.6 5.4-0.4 5.3 0 5 0.2 5 0.4 4.8 0.8 4.6 1 4.4 1.3 4.2 1.6 4.1 1.8 3.8 2.1 3.7 2.3 3.4 2.6 3.2 2.9 3 3.1 2.8 3.3 2.5 3.6 2.3 3.8 2 4 1.8 4.2 1.6 4.5 1.3 4.6 1 4.9 0.8"/>
<path stroke="#dcd843" d="M1068.7 458.9l-0.2-5.2-0.4-5.1-0.7-4.8-1-4.7-1.3-4.5-1.6-4.3-1.9-4.1-2.1-3.9-2.4-3.7-2.7-3.4-2.9-3.2-3.2-3-3.5-2.7-3.7-2.4-3.9-2.2-4.2-2-4.4-1.7-4.7-1.4-4.8-1.2-5.1-0.9-5.2-0.6-5.4-0.3-2.8-0.1"/>
<path stroke="#cdc93e" d="M1000.6 393.5l-2.8 0-5.8 0.2-5.9 0.5-4.6 0.5"/>
<path stroke="#a8a533" d="M736.1 614.2l-0.7 3-1.3 5.9-0.9 5.8-0.7 5.6-0.3 5.5-0.1 5.4 0.2 5.2 0.5 5 0.8 4.8 1.1 4.7 1.3 4.5 1.7 4.2 1.9 4.1 2.2 3.8 2.4 3.6 2.8 3.4 3 3.1 3.2 2.9 3.5 2.7 3.8 2.4 4 2.1 4.2 1.9 4.5 1.6 4.7 1.4 4.9 1.1 5 0.8"/>
</g>
<g fill="none" stroke-linecap="round" stroke-linejoin="round" stroke-width="1.40">
<path stroke="#bd1e16" d="M1082.8 460.8l15.7 2.2 15.4 1.9 15 1.6 14.1 1 13.1 0.5 12-0.4 5.4-0.5M983.7 526.1l-6.9-6.9-6-7.5-5.1-7.6-3.9-7.7-2.5-7.4-1.1-7.1 0.6-6.5 2.2-5.7 3.9-5 5.7-4.1 7.4-3.1 9-2.2 10.6-1.2 11.9-0.4 13.1 0.4 14.1 1.1 15 1.6 15.4 1.9 15.7 2.1"/>
<path stroke="#b51d15" d="M1173.5 467.1l5.1-0.7 9-2.2 7.4-3.1 5.7-4.1 3.9-5 2.2-5.8 0.6-6.5-1.1-7-2.5-7.5-3.9-7.6-5.1-7.7-6-7.4"/>
<path stroke="#b91d15" d="M1188.8 402.5l-6.9-7-7.5-6.3-7.9-5.4-8.1-4.4-8.1-3.2-8-1.8-7.7-0.3-7.3 1.2-6.8 2.8-6.3 4.4-5.6 5.9-5.1 7.4-4.5 8.6-3.9 9.8-3.5 10.8-3.1 11.5-2.9 12.1-2.8 12.2-2.8 12.3-2.9 12.1-3.1 11.5-3.5 10.7-3.9 9.9-4.5 8.6-5.1 7.4-5.6 5.9-6.3 4.3-6.8 2.9-7.3 1.2-7.7-0.3-8-1.8-8.1-3.2-8.1-4.4-7.9-5.4-7.5-6.4"/>
<path stroke="#bd2216" d="M1082.3 450.6l15.6 1.6 15.4 1.4 14.9 1 14.1 0.6 13.1-0.1 11.9-0.8 5.5-0.8M1028.9 542.5l-5.9-0.2-7.9-1.5-4.1-1.3M987.2 525.2l-3.7-3.2-6.9-6.9-6-7.5-5.1-7.7-3.9-7.8-2.6-7.6-1-7.2 0.5-6.8 2.2-6.1 3.9-5.2 5.7-4.5 7.4-3.5 9-2.6 10.5-1.7 11.9-0.8 13.1-0.1 14.1 0.6 14.9 1 15.4 1.4 15.7 1.6"/>
<path stroke="#b52015" d="M1172.8 453.5l5.1-0.9 9-2.6 7.3-3.5 5.7-4.5 3.9-5.3 2.2-6 0.5-6.8-1-7.2-2.6-7.6-3.9-7.8-5-7.7-6.1-7.5"/>
<path stroke="#b92115" d="M1187.9 386.1l-6.9-6.9-7.5-6.3-7.8-5.3-8.1-4.2-8.1-3-8-1.5-7.7-0.1-7.3 1.6-6.8 3.1-6.2 4.8-5.7 6.4-5 7.8-4.4 9.1-4 10.3-3.4 11.3-3.1 12-2.9 12.6-2.7 12.8-2.8 12.8-2.8 12.6-3.1 12-3.5 11.3-3.9 10.3-4.5 9.1-5 7.8-5.6 6.4-6.3 4.7-6.8 3.2-7.3 1.6-1.8 0.1M1011 539.5l-4.1-1.7-8-4.2-7.9-5.3-3.8-3.1"/>
<path stroke="#be2616" d="M1080.6 441l15.6 1.1 15.3 0.9 14.8 0.6 14.1 0 13-0.5 11.8-1.3 5.4-0.9M1031.8 537.2l-1.9 0.3-7.6 0.2-8-1.3-8.1-2.7-8-4.1-7.9-5.3-7.5-6.1-6.8-7-6.1-7.4-5.1-7.8-3.9-7.9-2.6-7.8-1.1-7.4 0.5-7 2.2-6.3 3.9-5.6 5.6-4.8 7.3-3.9 8.9-3 10.4-2.1 11.9-1.3 13-0.5 14 0.1 14.8 0.5 15.3 0.9 15.6 1.1"/>
<path stroke="#b62415" d="M1170.6 440.9l5.1-1.2 8.9-3 7.3-3.9 5.6-4.7 3.9-5.6 1.8-4.7M1203.3 403.6l-0.4-1.9-2.5-7.8-4-7.9-5-7.7-6.1-7.5"/>
<path stroke="#ba2515" d="M1185.3 370.8l-6.9-6.9-7.4-6.2-7.9-5.2-8.1-4.1-8.1-2.8-7.9-1.3-7.7 0.2-7.2 1.9-6.7 3.5-6.2 5.1-5.6 6.8-4.9 8.2-4.4 9.6-3.8 10.7-3.4 11.8-3 12.5-2.8 13.1-2.7 13.3-2.6 13.3-2.8 13.1-3 12.5-3.4 11.8-3.9 10.8-4.3 9.5-5 8.3-5.5 6.7-6.2 5.1-6.7 3.5-5.4 1.6"/>
<path stroke="#bf2916" d="M1077.9 432.2l15.5 0.6 15.2 0.4 14.6 0.1 13.9-0.3 12.9-1 11.7-1.7 7.9-1.8M1032.2 532.1l-3.7 0.9-7.5 0.5-7.9-1.1-8-2.6-8.1-4-7.8-5.1-7.4-6.1-6.9-6.9-6.1-7.5-5.1-7.8-3.9-8-2.6-7.9-1.2-7.7 0.4-7.1 2.1-6.6 3.8-5.9 5.5-5.1 7.2-4.2 8.8-3.4 10.3-2.5 11.7-1.7 12.9-1 13.9-0.3 14.7 0.1 15.2 0.4 15.4 0.7"/>
<path stroke="#b72715" d="M1169.6 428.5l2.4-0.7 8.9-3.4 7.1-4.2 5.5-5.1 3.1-4.3M1196.9 381.9l-0.8-2-4-8-5.1-7.8-6-7.5-3.4-3.5M1104.7 346.1l-2.7 3.8-4.8 8.6-4.3 10-3.7 11.2-3.2 12.2-2.9 13-2.7 13.5-2.5 13.8"/>
<path stroke="#bb2815" d="M1177.6 353.1l-3.5-3.4-7.5-6.1-7.8-5.1-8-4-8-2.6-7.9-1.1-7.6 0.5-7.1 2.2-6.7 3.8-6 5.5-2.8 3.3M1072.8 459.4l-2.9 13-3.3 12.2-3.7 11.2-4.2 10-4.9 8.6-5.4 7.1-6.1 5.5-6.6 3.9-3.5 1.2"/>
<path stroke="#bf2d16" d="M1074.2 424.1l15.2 0.2 15 0 14.5-0.3 13.7-0.8 12.7-1.3 11.5-2.1 7.8-2.1M1031.9 527.2l-5.3 1.7-7.4 0.7-7.8-0.9-8-2.4-8-3.9-7.7-5-7.5-6-6.8-6.9-6.1-7.5-5.1-7.9-4-8.1-2.7-8-1.2-7.8 0.3-7.4 2-6.8 3.7-6.2 5.3-5.4 7.1-4.5 8.6-3.7 10.2-2.8 11.5-2.1 12.7-1.4 13.7-0.8 14.5-0.3 15 0.1 15.3 0.2"/>
<path stroke="#b72b15" d="M1164.6 417.7l2.4-0.8 8.6-3.7 7.1-4.5 5.4-5.4 1-1.5M1187.3 361.1l-1.2-2-5.1-7.9-6.1-7.5-6.8-6.9-7.4-6.1-2-1.3M1125.4 318.7l-3.7 0.5-7 2.4-6.5 4.2-6 5.8-5.3 7.4-4.6 9-4.1 10.3-3.5 11.6-3.1 12.6-2.7 13.4-2.4 14-2.3 14.2"/>
<path stroke="#bb2c15" d="M1158.7 329.4l-5.8-3.7-8-3.8-8-2.5-7.7-0.9-3.8 0.2M1068.8 455.6l-2.1 10-3.1 12.6-3.5 11.6-4.1 10.4-4.6 8.9-5.3 7.5-5.9 5.8-6.5 4.1-1.8 0.7"/>
<path stroke="#c13417" d="M1069.4 416.8l15-0.2 14.7-0.3 14.2-0.7 13.5-1.1 12.5-1.7 11.3-2.5 7.6-2.3M1029.4 523.4l-5.2 1.8-7.3 0.9-7.7-0.7-7.9-2.3-7.9-3.7-7.7-5-7.4-6-6.8-6.8-6.1-7.6-5.2-7.9-4-8.2-2.8-8.1-1.3-8 0.2-7.5 1.9-7 3.5-6.4 5.2-5.6 6.8-4.9 8.5-3.9 9.9-3.2 11.3-2.4 12.5-1.8 13.5-1.1 14.2-0.7 14.8-0.3 15-0.2"/>
<path stroke="#b93216" d="M1158.2 408l2.3-0.8 8.5-4 6.8-4.9 4.1-4.1M1171.9 337.7l-4.6-5.6-6.9-6.9-7.4-6-7.7-5-7.9-3.7-7.9-2.3-7.6-0.7-7.4 0.9-6.8 2.7-6.4 4.3-5.7 6.1-5.1 7.7-4.5 9.3-3.8 10.7-3.3 12-2.8 12.9-2.5 13.8-2.2 14.3-2 14.6"/>
<path stroke="#bd3316" d="M1063.3 456.1l-0.6 3.4-2.9 12.9-3.3 12-3.8 10.7-4.5 9.3-5.1 7.7-5.7 6.1-6.3 4.4-1.7 0.8"/>
<path stroke="#c23c18" d="M1096.2 409l10.4-0.8 13.2-1.4 12.2-2.1 11-2.7 7.4-2.5M1027.9 519.1l-6.7 2.8-7.1 1.1-7.6-0.5-7.7-2.2-7.8-3.6-7.7-4.9-7.3-5.9-6.9-6.9-6.1-7.5-5.2-8-4.1-8.3-2.8-8.2-1.5-8.1 0.1-7.7 1.7-7.2 3.3-6.6 5-5.8 6.7-5.1 8.2-4.2 9.7-3.5 11-2.7 12.2-2 13.2-1.5 13.9-1 14.5-0.7 14.7-0.5"/>
<path stroke="#ba3917" d="M1150.4 399.5l2.3-0.9 8.2-4.3 6.7-5.1 1.4-1.3M1152.9 316.6l-1.8-1.6-7.3-6-7.7-4.9-7.8-3.6-7.7-2.1-7.6-0.6-7.1 1.1-6.7 2.8-6.1 4.6-1.5 1.4"/>
<path stroke="#b63816" d="M1091.6 307.7l-4.1 4.9-4.8 8-4.2 9.6-3.6 11-3 12.3-2.5 13.3-2.2 14.1-1.9 14.6-1.7 14.9"/>
<path stroke="#be3a17" d="M1057.8 454.1l-2.6 13.3-3 12.2-3.6 11-4.2 9.6-4.8 8-5.5 6.3-6.2 4.6"/>
<path stroke="#c34418" d="M1102.1 401.5l9.5-1.3 11.9-2.3 10.7-3 7.2-2.7M1024.3 516.1l-6.5 3.1-7 1.2-7.4-0.4-7.6-2.1-7.7-3.5-5.7-3.5M947.8 441.2l3.1-6.7 4.7-6.1 6.4-5.2 7.9-4.5 9.4-3.7 10.8-3 11.8-2.3 12.9-1.7 13.5-1.3 14.1-1 14.4-0.8"/>
<path stroke="#bb4117" d="M1141.4 392.2l2.2-1 8-4.5 6.3-5.3M1133 300.3l-7.6-4.8-7.7-3.5-7.6-2.1-7.3-0.4-5.3 0.7"/>
<path stroke="#b73f16" d="M1097.5 290.2l-1.7 0.5-6.5 3-5.9 4.8-5.2 6.6-4.6 8.2-3.9 9.8-3.3 11.3-2.7 12.5-2.2 13.5-1.8 14.4-1.5 14.9-1.4 15.2"/>
<path stroke="#bf4217" d="M1051 456.3l-1.2 6.7-2.7 12.5-3.2 11.3-3.9 9.8-4.6 8.2-5.2 6.6-5.9 4.7M964.8 495l-4.5-5.7-5.2-8.1-4.2-8.3-3-8.3-1.5-8.2-0.1-7.8 1.5-7.4"/>
<path stroke="#b84617" d="M1111.4 287.3l-5.7-2.4-7.5-2-7.2-0.3-6.7 1.4-6.3 3.1-5.6 5-4.9 6.7-4.3 8.4-3.5 10-2.9 11.5-2.4 12.7-1.8 13.8-1.4 14.6-1.1 15.2-1 15.4"/>
<path stroke="#c14918" d="M1044.7 452.6l-1 6.8-2.3 12.7-2.9 11.5-3.6 10-4.2 8.4-5 6.8-5.6 4.9M966.7 498.5l-3.3-3.5-6.2-7.6-5.3-8-4.3-8.4-3-8.4-1.8-8.2-0.2-8 1.2-7.5 0.6-1.8"/>
<path stroke="#c54b19" d="M1020.1 513.7l-6.2 3.1-6.8 1.4-7.2-0.3-7.4-2-3.8-1.5M944.4 437.1l2.3-5.1 4.5-6.2 6.1-5.4 7.6-4.7 9-3.9 10.4-3.2 11.5-2.5 12.5-1.9 13.1-1.6 13.7-1.2 14-1"/>
<path stroke="#ba4c18" d="M1092.3 279.3l-7.3-1.9-7-0.2-6.5 1.4-6 3.3-5.3 5.1-4.6 6.8-3.9 8.6-3.2 10.2-2.5 11.6-1.9 12.9-1.4 14-1 14.8-0.7 15.3-0.5 15.6"/>
<path stroke="#c35019" d="M1037.3 453.2l-0.4 3.4-1.9 12.9-2.5 11.6-3.2 10.2-3.9 8.5-4.6 6.9-5.3 5.1M968.5 502l-1.8-1.6-6.8-6.8-6.1-7.6-5.4-8.1-4.4-8.4-3.2-8.4-1.9-8.4-0.5-8 1.1-7.6 2.6-7"/>
<path stroke="#c7521a" d="M1015.5 511.8l-6 3.2-6.5 1.5-7-0.2-5.4-1.3M942.1 430.1l4.2-6.3 5.7-5.6 7.3-4.8 8.6-4.1 10-3.3 11.1-2.7 12-2.2 12.8-1.6 13.2-1.4 13.5-1.3"/>
<path stroke="#bc5418" d="M1074 274.2l-3.6-0.7-6.7-0.2-6.3 1.5-5.6 3.4-5 5.1-4.3 7-3.5 8.6-2.7 10.3-2.1 11.8-1.4 13-1 14.1-0.5 14.9-0.2 15.5 0 15.8"/>
<path stroke="#c55819" d="M1029.4 454.5l-1.4 13.1-2.1 11.7-2.8 10.3-3.5 8.7-4.2 6.9-3.7 4.1M970 505.2l-7.1-5.8-6.7-6.9-6.2-7.5-5.5-8.1-4.4-8.4-3.4-8.5-2.1-8.4-0.7-8.1 0.8-7.7 2.3-7.1 2.7-4.9"/>
<path stroke="#c95a1a" d="M1011.7 509.3l-1.3 1.1-5.7 3.3-6.2 1.6-6.8-0.2-1.7-0.3M939.7 423.8l1.1-1.5 5.4-5.7 6.9-4.9 8.2-4.2 9.6-3.5 10.6-2.8 11.6-2.2 12.2-1.8 12.8-1.6 13-1.3"/>
<path stroke="#bd5b19" d="M1054.7 271l-6.5-0.1-5.9 1.6-5.4 3.4-4.6 5.2-3.9 7-3 8.8-2.4 10.3-1.6 11.8-0.9 13.1-0.4 14.2 0 15 0.3 15.6 0.4 11.8"/>
<path stroke="#c6601a" d="M1021.3 453.3l-0.9 13.1-1.6 11.8-2.4 10.4-3 8.7-3.9 7-3.4 4.1M973.1 509.3l-7.2-4.7-7.1-5.9-6.7-6.8-6.2-7.6-5.5-8.1-4.6-8.4-3.5-8.5-2.3-8.4-1-8.2 0.5-7.7 2-7.1 3.5-6.5 5-5.8 1.4-1.3"/>
<path stroke="#ca611b" d="M1006.1 508.4l-1.2 1.1-5.4 3.4-5.9 1.6-4.9 0.1M941.4 414.3l5-3.6 7.8-4.3 9.1-3.5 10.1-2.9 11.1-2.3 11.7-1.9 12.2-1.6 12.5-1.5"/>
<path stroke="#bf621a" d="M1034.7 269.9l-3 0.2-5.7 1.6-5 3.4-4.2 5.2-3.5 7.1-2.6 8.7-1.8 10.4-1.1 11.9-0.4 13.1 0.1 14.2 0.6 15 0.9 15.6 0.7 11.9"/>
<path stroke="#c8661b" d="M1012.7 452.9l-0.5 13.1-1.1 11.8-1.8 10.4-2.6 8.8-3.5 7-3.1 4.1M973.7 511.7l-5.2-2.7-7.1-4.6-7-5.9-6.7-6.8-6.2-7.6-5.6-8.1-4.7-8.4-3.7-8.6-2.5-8.4-1.2-8.1 0.2-7.8 1.6-7.1 3.1-6.5 4.6-5.8 6-5 7.3-4.3 8.5-3.5 9.7-2.9 10.5-2.4 11.1-1.9 11.7-1.7 11.9-1.4"/>
<path stroke="#cc681c" d="M1000.1 508.1l-1.1 1.1-5 3.5-5.7 1.6-1.5 0.1"/>
<path stroke="#c2691b" d="M1015.6 270.7l-1.4 0.1-5.4 1.6-4.6 3.4-3.8 5.2-3 7-2.2 8.8-1.3 10.3-0.6 11.9 0.2 13.1 0.7 14.1 1.1 15 1.5 15.6 1.3 11.9"/>
<path stroke="#cb6e1c" d="M1003.5 453.3l0.1 13.1-0.5 11.8-1.4 10.3-2.1 8.8-3 7-2.8 4.1M975.3 514.1l-4.9-1.5-6.8-3.4-6.9-4.6-6.9-5.9-6.7-6.8-6.3-7.6-5.6-8.1-4.8-8.4-3.9-8.5-2.7-8.5-1.5-8.1-0.2-7.7 1.3-7.2 2.7-6.4 4.1-5.8 5.5-5 6.8-4.2 8-3.6 9.1-2.9 9.9-2.3 10.6-1.9 11.1-1.6 11.3-1.4"/>
<path stroke="#cf701d" d="M993.8 508.4l-1 1.1-4.7 3.4-5.3 1.6-6-0.1-1.5-0.3"/>
<path stroke="#c5711b" d="M995.8 273.1l-5 1.5-4.3 3.4-3.4 5.2-2.5 6.9-1.6 8.7-0.8 10.3 0 11.7 0.7 13.1 1.3 14.1 1.8 14.9 2.1 15.5 1.7 11.8"/>
<path stroke="#ce761c" d="M993.9 454.4l0.7 13.1 0 11.7-0.8 10.3-1.6 8.7-2.6 7-3.4 5.1-4.2 3.4-5 1.5-5.7-0.2-6.2-1.8-6.6-3.3-6.8-4.7-6.8-5.9-6.6-6.8-6.3-7.6M912.5 430.4l0.3-1.7 2.3-6.5 3.7-5.7 5-4.9 6.3-4.2 7.4-3.4 8.5-2.9 9.3-2.2 7.4-1.4"/>
<path stroke="#c9731c" d="M932 484.9l-5.7-8.1-5-8.4-4.1-8.5-3-8.4-1.8-8.1-0.4-7.7 0.5-5.3"/>
<path stroke="#c7771c" d="M975.4 277.1l-3.4 1.3-3.9 3.3-2.9 5-2 6.9-1.2 8.6-0.2 10.2 0.6 11.6 1.3 12.9 1.9 14 2.5 14.8 2.7 15.3 2.2 11.8"/>
<path stroke="#d17d1d" d="M983.9 456.4l1.3 13 0.6 11.6-0.3 10.2-1.1 8.5-2 6.9-1.4 2.8M973.4 515.9l-2.5 0.5-5.3-0.2-6-1.9-6.4-3.4-6.6-4.7-6.7-5.9-6.7-6.8M907.8 423.7l3.2-5.6 4.5-4.9 5.7-4 6.9-3.4 7.9-2.7 4.2-1.1"/>
<path stroke="#cc7a1d" d="M933.2 493.5l-6.3-7.6-5.8-8.1-5.1-8.3-4.3-8.5-3.2-8.3-2.1-8.1-0.8-7.6 0.4-7 1.8-6.3"/>
<path stroke="#cb801c" d="M955.7 282.4l-3.1 1.2-3.4 3.2-2.5 4.9-1.6 6.8-0.6 8.4 0.4 10 1.2 11.5 1.9 12.7 2.6 13.8 3.1 14.7 3.5 15.1 2.7 11.6"/>
<path stroke="#d5861d" d="M973.5 459.2l2 12.8 1.2 11.5 0.3 10-0.6 8.4-0.3 1.8M966.9 517.6l-2.2 0.5-5.1-0.3-5.6-2-6.2-3.4-6.5-4.8-6.7-5.9-4.9-5M909.4 413.5l2.7-1.9 6.3-3.1 5.3-2"/>
<path stroke="#d0831d" d="M929.7 496.7l-1.7-1.8-6.3-7.6-5.9-8-5.3-8.4-4.4-8.4-3.5-8.2-2.5-8-1.2-7.5 0.1-6.9 1.4-6.2 2.6-5.5 4-4.7 2.4-2"/>
<path stroke="#cf871c" d="M934.5 289.5l-1.8 0.8-3 3-2 4.8-1.1 6.6 0 8.2 0.9 9.8 1.8 11.3 2.6 12.5 3.3 13.6 3.8 14.4 4.1 14.9 2.2 7.6"/>
<path stroke="#d88d1d" d="M963.6 466l1.9 9.3 1.8 11.3 0.8 7.5M961.3 519.5l-3 0.8-4.7-0.5-5.5-2-5.9-3.5-6.4-4.8-6.5-6-1.7-1.6"/>
<path stroke="#d48a1d" d="M927.6 501.9l-4.9-5.2-6.4-7.6-6-8-5.4-8.3-4.7-8.3-3.7-8.2-2.8-7.8-1.6-7.4-0.3-6.8 0.9-6 2.1-5.3 3.4-4.5 4.6-3.7 5.6-3 1.6-0.6"/>
<path stroke="#d18f1d" d="M914 297.6l-1.6 0.8-2.6 2.9-1.5 4.6-0.5 6.3 0.5 8 1.5 9.6 2.5 11 3.2 12.3 4 13.3 4.5 14.1 4.8 14.7 2.5 7.4"/>
<path stroke="#da961e" d="M954.5 522.2l-2.8 0.7-4.4-0.6-5.1-2.1-5.8-3.6-6.2-4.9-6.4-6"/>
<path stroke="#d6931e" d="M923.8 505.7l-6.5-6.8-6.5-7.6-6-8-5.6-8.2-4.9-8.2-4-8.1-3.1-7.7-2-7.3-0.8-6.5 0.4-5.9 1.7-5.1 2.8-4.3 4-3.4 5-2.8"/>
<path stroke="#d09a20" d="M892.5 307.5l-0.6 0.4-2.2 2.6-1 4.4 0 6.1 1.1 7.7 2.1 9.3 3.1 10.8 3.9 11.9 4.7 13 5.2 13.8 5.5 14.3 1.4 3.7M900.6 487.9l-1.5-2-5.7-8.1-5.1-8.2-4.3-7.9-3.4-7.6-2.4-7-0.4-1.7"/>
<path stroke="#d9a121" d="M948.3 525l-3.2 0.9-4-0.7-4.9-2.3-5.5-3.7-6.1-4.9-4.7-4.4"/>
<path stroke="#d59d20" d="M919.9 509.9l-1.7-1.6-6.5-6.9-6.4-7.5-4.7-6M877.8 445.4l-0.8-4.7-0.1-5.6 1.1-4.9 2.3-4 3.3-3.2 2.1-1.3"/>
<path stroke="#cea423" d="M871.8 318.3l-0.6 0.3-1.7 2.4-0.6 4.2 0.6 5.8 1.7 7.4 2.7 9 3.8 10.4 4.5 11.6 5.4 12.6 5.9 13.5 6.2 13.9 1.6 3.6M898.1 494.8l-4.6-5.9-5.9-8.1-5.4-8-4.5-7.8-3.8-7.4-2.7-6.9-1.7-6.1"/>
<path stroke="#d7ac25" d="M941.2 528.7l-2.7 0.7-3.8-0.9-4.5-2.4-5.4-3.8-5.9-5.1-3.1-2.9"/>
<path stroke="#d3a824" d="M915.8 514.3l-3.1-3.1-6.5-6.9-6.5-7.5-1.6-2M869.5 444.6l-0.6-5.4 0.6-4.6 1.7-3.7 2.7-2.8 1.8-1.2"/>
<path stroke="#cdac25" d="M851 330.3l-0.5 0.3-1.2 2.2-0.1 3.8 1.1 5.5 2.3 7.1 3.3 8.7 4.4 10 5.2 11.2 6.1 12.2 6.6 13 6.9 13.6 1.8 3.4M894.2 500l-6.4-7.8-6.1-8-5.5-7.9-4.9-7.7-4-7.2-3.2-6.6-2.1-5.9-0.4-1.3"/>
<path stroke="#d6b427" d="M934.2 532.8l-2.4 0.5-3.4-1.1-4.3-2.6-5.1-3.9-5.7-5.2-1.5-1.4"/>
<path stroke="#d2b026" d="M911.8 519.1l-4.7-4.7-6.4-6.9-6.5-7.5M861.6 447.6l-0.6-3.8 0-4.2 1.1-3.4 2.1-2.5 0.7-0.5"/>
<path stroke="#cbaf26" d="M830.4 343.6l-0.4 0.2-0.8 1.8 0.4 3.6 1.6 5.1 2.8 6.8 4 8.2 5 9.6 6 10.8 6.7 11.8 7.2 12.6 7.8 13.1M888.6 503.6l-6.4-7.8-6.2-7.9-5.8-7.8-5.1-7.4-4.4-7-3.6-6.4-2.5-5.6-0.5-1.3"/>
<path stroke="#d5b728" d="M927.2 537.2l-2 0.3-3.1-1.3-4-2.8-4.9-4-5.6-5.3"/>
<path stroke="#d0b327" d="M907.6 524.1l-6-6.1-6.5-7-6.5-7.4M854.1 452.4l-1.1-3.5-0.5-3.9 0.6-3 1.5-2.1 0.5-0.4"/>
<path stroke="#c8b127" d="M810 357.9l-0.3 0.1-0.4 1.6 0.9 3.2 2.2 4.8 3.4 6.3 4.5 7.8 5.7 9.2 6.6 10.3 7.3 11.3 8 12.1 8.4 12.6M883.1 507.4l-6.5-7.7-6.4-7.8-5.9-7.6-5.5-7.3-4.7-6.7-3.9-6.1-3-5.3-0.6-1.2"/>
<path stroke="#cdb528" d="M920.3 542.1l-1.6 0-2.8-1.6-3.7-2.9-4.7-4.2-5.4-5.4-6-6.2-6.4-7-6.6-7.4M846.6 457.7l-1.4-3.3-1-3.5-0.1-2.6 1-1.8"/>
<path stroke="#c6b328" d="M789.8 373.2l0 1.3 1.4 2.8 2.7 4.4 3.9 5.9 5.2 7.4 6.2 8.7 7.3 9.8 8 10.8 8.7 11.6 9.1 12M877.8 511.5l-6.7-7.6-6.5-7.7-6.2-7.5-5.6-7-5.1-6.5-4.3-5.8-3.4-5-0.7-1.1"/>
<path stroke="#cbb729" d="M913.6 547.1l-0.1 0.2-1.2-0.3-2.5-1.8-3.5-3.2-4.4-4.3-5.3-5.5-5.9-6.3-6.3-7-6.6-7.4M839.3 463.3l-1.8-3-1.5-3.2-0.6-2.1 0.3-1.3"/>
<path stroke="#c5b629" d="M770.4 389.4l0.5 0.9 1.8 2.4 3.2 4 4.4 5.5 5.8 6.9 6.8 8.2 7.9 9.3 8.7 10.2 9.3 11 9.8 11.5M874.2 517.7l-1.7-1.8-6.7-7.6-6.6-7.6-6.4-7.2-6-6.9-5.3-6.2-4.7-5.5-3.8-4.7-0.8-1"/>
<path stroke="#c9ba2a" d="M906.9 552.7l-0.1 0.1-0.8-0.6-2.1-2.1-3.2-3.3-4.3-4.6-5.1-5.6-5.8-6.3-6.3-7-5-5.6M832.2 469.2l-2.2-2.7-2-2.7-1.1-1.8-0.3-0.7"/>
<path stroke="#c4b729" d="M751.6 406.3l0.9 0.5 2.2 2.1 3.7 3.5 5 5 6.3 6.4 7.4 7.7 8.5 8.8 9.3 9.6 10 10.5 10.5 10.9M869.2 522.3l-1.7-1.9-6.8-7.5-6.8-7.4-6.6-7.1-6.2-6.6-5.7-6-5-5.2-4.2-4.2"/>
<path stroke="#c8bb2a" d="M900.4 558.6l0 0-0.4-1-1.8-2.3-3-3.6-4.1-4.7-5-5.7-5.7-6.5-6.3-7-4.9-5.5M826.2 476.4l-3.4-3.4-2.6-2.2-1.6-1.3-0.8-0.3"/>
<path stroke="#c3b72b" d="M733.6 423.9l1.2 0.2 2.7 1.6 4.1 3.1 5.6 4.5 6.8 5.9 8 7.1 9 8.2 10 9.1 10.6 9.8 11 10.3M864.3 527l-1.7-1.8-6.9-7.4-6.9-7.3-6.8-6.9-6.4-6.4-6-5.7-5.3-4.9-4.7-3.9"/>
<path stroke="#c7bb2c" d="M894.1 564.7l0.2-0.1-0.2-1.3-1.5-2.6-2.7-3.8-3.9-4.9-4.8-5.9-5.6-6.5-6.3-7.1-5-5.5M819.6 482.7l-3.8-2.9-3-1.8-2.1-0.8-1.4 0.3"/>
<path stroke="#c3b82c" d="M716.2 442.4l0.2-0.3 1.6-0.2 3.1 1.2 4.6 2.6 6 4 7.3 5.4 8.5 6.5 9.6 7.6 10.5 8.5 11.2 9.2 11.7 9.7M861.4 533.8l-3.4-3.7-7-7.3-7.1-7.2-6.9-6.7-6.7-6.2-6.2-5.3-5.7-4.6-3.8-2.7"/>
<path stroke="#c7bc2d" d="M888.4 570.8l0.2-1.6-1.2-2.9-2.5-4.1-3.7-5.1-4.7-6-5.6-6.6-6.2-7.1-3.3-3.6M814.6 490.1l-1.2-0.8-4.2-2.4-3.5-1.4-2.6-0.3-1.8 0.8"/>
<path stroke="#c2b82d" d="M699.9 461.2l0.2-0.4 2-0.6 3.5 0.7 5 2.2 6.4 3.5 7.8 4.7 9.1 6 10.1 7 11.1 7.9 11.7 8.5 12.2 9M857 538.8l-3.4-3.7-7.1-7.2-7.2-7-7.1-6.5-6.9-5.9-6.5-5.1-5.9-4.2-4.1-2.4"/>
<path stroke="#c6bc2e" d="M882.9 577.1l0.5-1.9-1-3.2-2.3-4.3-3.5-5.3-4.6-6.2-5.5-6.7-6.2-7.1-3.3-3.6M808.8 496.8l-1.3-0.7-4.6-2-3.9-0.9-3 0.3-2.4 1.3-0.4 0.5"/>
<path stroke="#c2b82f" d="M684.6 480.3l0.3-0.4 2.3-1.1 3.9 0.3 5.4 1.7 6.8 2.9 8.3 4.2 9.5 5.4 10.6 6.4 11.6 7.2 12.3 7.9 12.7 8.4 3.3 2.1M854.6 545.7l-5.1-5.4-7.1-7.2-7.3-6.8-7.3-6.4-7.1-5.6-6.8-4.8-6.2-3.8-2.9-1.5"/>
<path stroke="#c6bc30" d="M877.7 583.6l0.8-2.3-0.7-3.5-2.1-4.6-3.4-5.5-4.4-6.2-5.5-6.8-6.2-7.2-1.6-1.8M804.8 504.2l-2.8-1.2-5-1.6-4.2-0.3-3.5 0.7-2.8 1.9-0.6 0.7"/>
<path stroke="#c1b830" d="M670.5 499.7l0.4-0.6 2.6-1.4 4.2-0.2 5.7 1.2 7.3 2.4 8.7 3.7 9.9 4.7 11.1 5.8 12 6.6 12.8 7.2 13.2 7.7 3.4 1.9M850.8 550.9l-5.1-5.4-7.2-7.1-7.4-6.7-7.4-6.1-7.3-5.4-7-4.5-6.5-3.4-1.6-0.7"/>
<path stroke="#c5bd31" d="M872.9 590.2l1.1-2.7-0.5-3.8-1.9-4.8-3.2-5.7-4.4-6.4-5.4-6.9-6.1-7.2-1.7-1.8M801.3 511.6l-4.4-1.6-5.3-1.1-4.6 0.1-3.9 1.3-3.2 2.5-1.3 1.6"/>
<path stroke="#c4bd32" d="M657.6 519.2l0.5-0.6 2.9-1.9 4.4-0.6 6.1 0.6 7.6 1.9 9.1 3.1 10.4 4.1 11.5 5.2 12.4 5.9 13.2 6.6 13.7 7 3.5 1.8M868.6 596.8l1.2-3-0.2-4.2-1.8-5.1-3-5.9-4.3-6.5-5.3-7-6.2-7.2-1.6-1.8M798.5 518.9l-6.2-1.9-5.6-0.6-5 0.6-4.2 1.9-3.6 3-2.2 3"/>
<path stroke="#c0b830" d="M847.4 556.1l-5.1-5.4-7.3-7-7.5-6.5-7.6-6-7.4-5.1-7.2-4.1-6.8-3.1"/>
<path stroke="#c4bd33" d="M645.7 539.5l0.9-1.5 3.1-2.3 4.8-1.1 6.3 0.2 8 1.3 9.4 2.5 10.7 3.6 11.9 4.5 12.8 5.2 13.6 5.9 14.1 6.4 7.1 3.2M865.2 602.7l0.9-2.7-0.1-4.4-1.5-5.4-3-6.1-4.2-6.7-5.2-7.1-6.1-7.2M799.8 527.4l-5.2-1.9-6.5-1.4-5.9-0.2-5.2 1.1-4.6 2.4-3.9 3.6-3.2 4.7"/>
<path stroke="#c0b831" d="M846 563.1l-6.8-7.2-7.3-6.9-7.6-6.4-7.7-5.7-7.6-4.8-7.4-3.9-1.8-0.8"/>
<path stroke="#c3bd33" d="M635.4 559l1.1-1.7 3.3-2.7 5-1.6 6.7-0.3 8.2 0.8 9.7 1.9 11 3 12.2 3.8 13.2 4.7 13.9 5.2 14.4 5.7 7.4 2.9M808.2 606.1l9.1 2.8 11 3 9.7 1.9M861.8 609.2l1.1-2.9 0.1-4.8-1.5-5.6-2.8-6.4-4.1-6.8-5.2-7.2-6.1-7.2-1.7-1.8M800.2 535.2l-1.9-0.8-7.1-2.3-6.7-1.1-6.2 0.3-5.5 1.6-4.8 3-4.2 4.2-3.6 5.3-0.8 1.5"/>
<path stroke="#bfb832" d="M841.6 566.5l-5.2-5.4-7.3-6.8-7.7-6.2-7.8-5.5-7.7-4.6-5.7-2.8"/>
<path stroke="#c3be35" d="M626.3 579.3l1.5-3 3.5-3.1 5.3-2 6.8-0.8 8.5 0.3 9.9 1.3 11.3 2.4 12.5 3.2 13.5 4.1 14.2 4.5 14.7 5 11.3 3.9M797.2 614.3l3.3 0.9 12.5 3.3 11.3 2.3 9.9 1.4 8.5 0.3 3.6-0.3M859.4 614.6l0.7-2.2 0.2-5.1-1.3-5.9-2.8-6.5-4-7-5.2-7.2-6.1-7.3-3.3-3.6M805.2 544.8l-2-1-7.7-3.2-7.3-2-6.9-0.6-6.3 0.7-5.7 2.1-5.1 3.5-3.4 3.4"/>
<path stroke="#bfb934" d="M837.6 569.8l-3.5-3.5-7.4-6.7-7.7-6.1-7.9-5.4-5.9-3.3M760.8 547.7l-1.1 1.3-3.8 5.9-2.6 5.2"/>
<path stroke="#c7c238" d="M619 598.3l1.7-3.3 3.6-3.5 5.4-2.4 7.1-1.3 8.6-0.3 10.2 0.8 11.5 1.8 12.7 2.7 13.7 3.3 14.5 4 15 4.3 11.4 3.4"/>
<path stroke="#c2be36" d="M793.3 624.4l3.4 0.8 12.7 2.6 11.5 1.8 10.2 0.8 8.6-0.2 7.1-1.4 5.3-2.4 3.7-3.5 2-4.5 0.3-5.4-1.2-6.1-2.7-6.7-4-7.1-5.1-7.4-6.1-7.3-6.8-7.1-1.8-1.7M813 556l-4-2.4-8-4.1-7.8-2.9-7.4-1.6-7.1-0.3-6.5 1.2-5.9 2.6-5.3 4"/>
<path stroke="#beb935" d="M830.4 569.6l-5.7-4.9-7.7-6-4-2.7M761 552.5l-4.6 5.3-4.1 6.5-3.5 7.6-1.6 4.1"/>
<path stroke="#c7c239" d="M613 618.1l2.1-4.8 3.8-3.9 5.5-2.9 7.1-1.8 8.9-0.7 10.3 0.2 11.7 1.2 12.9 2.1 13.9 2.8 14.6 3.3 15.2 3.7 11.6 2.9"/>
<path stroke="#c2be37" d="M790.3 634.3l3.4 0.6 12.9 2 11.7 1.3 10.3 0.2 8.8-0.7 7.2-1.8 5.5-2.9 3.8-3.9 2.1-4.8 0.4-5.7-1.2-6.4-2.6-6.9-3.9-7.2-5.1-7.4-6.1-7.4-6.9-7-7.4-6.6-7.8-5.8-8.1-5-8-3.8-7.9-2.6-7.5-1.3-7.2 0.1-6.6 1.6-6.1 3.1-2.8 2.1"/>
<path stroke="#beb936" d="M761.2 558.1l-2.6 2.4-4.9 5.8-4.2 7.1-3.7 8.2-3.3 9.1-2.9 9.7"/>
<path stroke="#c6c23a" d="M608.6 637.5l0.3-1.4 2.1-5.2 3.9-4.2 5.6-3.3 7.3-2.3 8.9-1.2 10.5-0.3 11.8 0.7 13 1.5 14.1 2.1 14.8 2.8 15.3 3.1 11.7 2.4"/>
<path stroke="#c1be39" d="M788.1 643.8l3.4 0.5 13 1.5 11.9 0.6 10.4-0.2 8.9-1.3 7.3-2.2 5.6-3.3 3.9-4.3 2.2-5.1 0.5-6-1.1-6.6-2.6-7.1-3.9-7.4-5.1-7.5-6.1-7.4-6.8-7-7.5-6.5-7.9-5.7-8-4.7-8.1-3.6-8-2.3-7.6-1-7.3 0.5-6.7 2.1-6.2 3.5-1.4 1.1"/>
<path stroke="#bdb938" d="M760.9 564.4l-4.1 3.9-5 6.3-4.3 7.7-3.9 8.7-3.4 9.7-3 10.3-2.8 10.9-2.6 11.1"/>
<path stroke="#c6c33b" d="M605.9 656.4l0.5-3 2.2-5.5 3.9-4.6 5.7-3.7 7.3-2.7 4.3-1"/>
<path stroke="#cac73d" d="M629.8 635.9l4.7-0.7 10.6-0.8 11.9 0.1 13.1 1 14.1 1.6 14.9 2.1 15.4 2.5 11.7 2"/>
<path stroke="#c1bf3a" d="M786.8 653l3.4 0.3 13.1 1 11.9 0.1 10.5-0.7 9-1.8 7.4-2.7 5.7-3.6 3.9-4.7 2.2-5.5 0.5-6.2-1-6.8-2.6-7.3-3.9-7.5-5.1-7.6-6-7.4-6.9-7-7.5-6.4-7.9-5.6-8-4.5-8.2-3.4-7.9-2.1-7.7-0.6-7.3 0.9-6.8 2.4-6.3 4"/>
<path stroke="#bdba39" d="M761.3 570.3l-5.6 5.4-5 6.9-4.5 8.2-3.9 9.2-3.5 10.3-3.1 10.9-2.8 11.5-2.8 11.7"/>
<path stroke="#c5c33c" d="M605 676.4l0.6-6.5 2.2-5.8 3.9-5 2.7-2.1"/>
<path stroke="#c9c73e" d="M614.4 657l3-2 7.4-3.1 9-2.2 10.5-1.2 12-0.4 13.1 0.5 14.1 1 15 1.6 15.4 1.9 15.7 2.2"/>
<path stroke="#c1bf3b" d="M786.3 661.8l3.5 0.2 13.1 0.4 11.9-0.4 10.6-1.2 9-2.2 7.4-3.1 5.7-4.1 3.9-5 2.2-5.7 0.6-4.9M850.6 619.7l-3.9-7.7-5.1-7.6-6-7.5-6.9-6.9-7.5-6.4-7.9-5.4-8.1-4.4-8.1-3.2-8-1.8-7.7-0.3-7.3 1.2-6.8 2.9-6.3 4.3"/>
<path stroke="#bcba3a" d="M761 576.9l-5.6 5.9-5.1 7.4-4.5 8.6-3.9 9.9-3.5 10.7-3.1 11.5-2.9 12.1-2.8 12.3"/>
<path stroke="#c5c141" d="M606.2 695.8l-0.3-3.6 0.5-6.8 2.2-6 3.9-5.3 1.3-1.2"/>
<path stroke="#c9c543" d="M613.8 672.9l4.4-3.3 7.3-3.5 9-2.6 10.6-1.7 11.9-0.8 13.1-0.1 14.1 0.6 14.9 1 15.4 1.4 11.7 1.2"/>
<path stroke="#c1bd40" d="M786.8 670l3.4 0.1 13.1-0.1 11.9-0.8 10.5-1.7 9-2.6 7.4-3.5 5.7-4.5 3.9-5.2 2.2-6.1 0.5-6.8-0.1-1.7M846.9 616.2l-5.1-7.7-6-7.5-6.9-6.9-7.5-6.3-7.9-5.3-8-4.2-8.2-3-7.9-1.5-7.7-0.1-7.3 1.6-6.8 3.2-4.8 3.4"/>
<path stroke="#bcb83e" d="M762.8 581.9l-1.5 1.3-5.6 6.4-5 7.8-4.5 9.1-3.9 10.3-3.5 11.3-3.1 12-2.8 12.6-2.8 12.8"/>
<path stroke="#bbb843" d="M712.9 743.8l-1.2 2.3-4.9 8.2-5.6 6.8-1.5 1.4M763.8 587.7l-1.5 1.4-5.5 6.7-5 8.3-4.3 9.5-3.9 10.8-3.4 11.8-3 12.5-2.8 13.1-2.6 13.3"/>
<path stroke="#c4c046" d="M609.5 714.4l-1.1-7.4 0.5-7 2.1-6.4 3.9-5.6 1.2-1.2"/>
<path stroke="#c8c448" d="M616.1 686.8l4.4-3.5 7.3-3.9 8.9-3 10.5-2.1 11.8-1.3 13-0.5 14.1 0 14.8 0.6 15.3 0.9 11.7 0.8"/>
<path stroke="#c0bc45" d="M784.6 677.8l6.9-0.1 13-0.5 11.9-1.3 10.4-2.1 8.9-3 7.3-3.9 5.6-4.8 3.9-5.6 2.2-6.3 0.5-7-0.7-5.5M843.9 614.3l-1.4-2-6.1-7.4-6.8-7-7.5-6.1-7.9-5.3-8-4.1-8.1-2.7-8-1.3-7.6 0.2-7.3 1.9-6.7 3.5-4.7 3.7"/>
<path stroke="#bab747" d="M723.2 736.4l-3.7 11.2-4.3 10-4.8 8.6-5.5 7.1-6 5.5-1.6 1.1M765.5 593l-1.5 1.6-5.4 7.1-4.9 8.6-4.2 10-3.7 11.2-3.3 12.2-2.9 13-2.6 13.5-2.5 13.7"/>
<path stroke="#c3bf4a" d="M616.3 736.2l-2.6-7.9-1.1-7.7 0.4-7.1 2.1-6.6 3.8-5.9 2.5-2.7"/>
<path stroke="#c7c34c" d="M621.4 698.3l3-2.4 7.1-4.2 8.9-3.4 10.3-2.5 11.7-1.7 12.9-1 13.9-0.3 14.6 0.1 15.2 0.4 15.5 0.6"/>
<path stroke="#bfbb48" d="M786.8 685l6.9-0.2 12.9-1 11.7-1.7 10.3-2.5 8.8-3.4 7.2-4.2 5.5-5.1 3.8-5.9 2.1-6.6 0.4-7.1-1.2-7.7-1.8-5.9M840.7 612.1l-3.2-3.7-6.9-6.9-7.4-6.1-7.8-5.1-8.1-4-8-2.6-7.9-1.1-7.5 0.5-7.2 2.1-6.6 3.9-4.6 3.9"/>
<path stroke="#bab54b" d="M730.8 733.6l-3.1 12.6-3.5 11.6-4.1 10.3-4.6 9-5.3 7.4-6 5.8-3.1 2.3M769.2 596.4l-2.9 3.1-5.3 7.5-4.6 8.9-4.1 10.4-3.5 11.6-3.1 12.6-2.7 13.4-2.4 13.9-2.4 14.2"/>
<path stroke="#c3bd4f" d="M626.3 757l-4-8-2.7-8.1-1.2-7.8 0.3-7.4 2-6.8 3.6-6.1 2.5-2.8"/>
<path stroke="#c7c151" d="M626.8 710l2.9-2.6 7.1-4.5 8.6-3.7 10.2-2.9 11.5-2.1 12.7-1.3 13.7-0.8 14.5-0.3 15 0 11.4 0.2"/>
<path stroke="#bfb94d" d="M786.5 691.8l10.2-0.6 12.7-1.4 11.5-2.1 10.2-2.8 8.6-3.7 7.1-4.5 5.3-5.4 3.7-6.2 2-6.8 0.3-7.4-1.2-7.8-2.7-8-2.9-6M839 611.6l-6.8-6.9-7.5-6-7.7-5-8-3.9-8-2.4-7.8-0.9-7.4 0.7-7.1 2.4-6.5 4.1-3 2.7"/>
<path stroke="#bab350" d="M738.2 731.7l-1.9 10.3-2.8 12.9-3.3 12-3.8 10.7-4.5 9.3-5.1 7.7-5.7 6.1-6.4 4.3M772.1 600.7l-2.8 3.3-5.1 7.7-4.5 9.3-3.8 10.7-3.3 12-2.9 12.9-2.4 13.8-2.2 14.3-2.1 14.6"/>
<path stroke="#c3bb54" d="M642 780.3l-3-3.8-5.1-7.9-4.1-8.2-2.7-8.1-1.3-8 0.2-7.5 1.8-7 3.5-6.4 2.4-2.9"/>
<path stroke="#c7bf56" d="M633.7 720.5l2.9-2.7 6.8-4.9 8.5-4 9.9-3.1 11.3-2.5 12.5-1.7 13.5-1.1 14.2-0.7 14.7-0.3 15-0.2"/>
<path stroke="#bfb752" d="M787 698.1l13.5-1.1 12.5-1.8 11.3-2.4 9.9-3.2 8.5-3.9 6.8-4.9 5.2-5.6 3.5-6.4 1.9-7 0.2-7.5-1.3-8-2.8-8.1-4-8.2-5.2-7.9-6.1-7.6-6.8-6.8-7.4-6-7.7-5-7.9-3.7-7.9-2.3-7.7-0.7-7.3 0.9-6.9 2.6-6.3 4.4-2.9 2.8"/>
<path stroke="#b9b254" d="M748.8 705.7l-1.7 14.9-1.9 14.6-2.2 14.1-2.5 13.3-3 12.3-3.6 11-4.2 9.6-4.8 8-5.6 6.3-6.1 4.6-1.6 0.8M775.5 604.5l-2.7 3.4-4.8 8-4.2 9.6-3.6 11-3 12.2-2.6 13.3-2.1 14.1-1.9 14.7-1.8 14.9"/>
<path stroke="#c2ba58" d="M651.3 790.6l-3-3.9-5.2-8-4.1-8.2-2.8-8.2-1.5-8.1 0.1-7.7 1.7-7.2 3.3-6.6 2.3-3"/>
<path stroke="#c6be5a" d="M642.1 729.7l2.7-2.8 6.7-5.1 8.2-4.3 9.7-3.4 11-2.7 12.2-2.1 13.2-1.4 13.9-1 14.4-0.7 14.7-0.5"/>
<path stroke="#beb656" d="M785 704l6.9-0.5 13.2-1.5 12.2-2 11-2.7 9.7-3.5 8.2-4.2 6.7-5.1 5-5.8 3.3-6.6 1.7-7.2 0.1-7.7-1.5-8.1-2.8-8.2-4.1-8.3-5.2-8-6.1-7.5-6.9-6.9-7.3-5.9-7.7-4.9-7.8-3.6-7.7-2.2-7.6-0.5-7.1 1.1-6.7 2.8-6.2 4.6-2.8 2.9"/>
<path stroke="#b8b159" d="M755.6 711.2l-1.4 15.2-1.5 14.9-1.8 14.4-2.2 13.5-2.7 12.5-3.3 11.3-3.9 9.8-4.6 8.2-5.2 6.6-5.9 4.8-4.8 2.4M847.6 621.1l-1.6-1.8-6.8-6.9-7.3-5.9M779.5 607.8l-2.5 3.5-4.6 8.2-3.9 9.8-3.2 11.3-2.7 12.5-2.2 13.6-1.8 14.3-1.6 15-1.4 15.2"/>
<path stroke="#c1b95d" d="M662.1 799.3l-3-3.8-5.2-8-4.2-8.3-2.9-8.4-1.6-8.1-0.1-7.9 1.5-7.3 3.1-6.8 2.2-3.1"/>
<path stroke="#c5bd5e" d="M651.9 737.6l2.6-2.9 6.3-5.3 8-4.5 9.4-3.7 10.7-3 11.9-2.3 12.8-1.7 13.6-1.3 14.1-0.9 14.3-0.8"/>
<path stroke="#bdb55b" d="M787.5 709.1l10.1-1 12.9-1.7 11.8-2.3 10.8-3 9.4-3.7 7.9-4.5 6.4-5.2 4.7-6.1 3.1-6.7 1.5-7.4-0.1-7.8-1.5-8.2-3-8.3-4.2-8.3-5.2-8.1-4.5-5.7M831.9 606.5l-7.6-4.8-7.7-3.5-7.6-2.1-7.4-0.4-7 1.2-6.5 3.1-5.9 4.7-2.7 3.1"/>
<path stroke="#b8af5d" d="M763.3 715.7l-1 15.4-1.1 15.2-1.4 14.6-1.8 13.8-2.4 12.7-2.9 11.5-3.5 10-4.3 8.4-4.9 6.7-5.6 5-6.3 3.1-1.6 0.5M702.9 829.7l-3.7-1.9-7.6-4.8-7.2-5.9-6.8-6.8-3.2-3.7M850.7 622.9l-1.7-1.8-6.7-6.8-7.3-5.9-7.5-4.8-1.9-1M784.1 610.5l-2.4 3.6-4.2 8.4-3.6 10-2.9 11.5-2.3 12.7-1.8 13.8-1.4 14.6-1.2 15.2-1 15.4"/>
<path stroke="#c1b761" d="M674.4 806.6l-2.9-3.9-5.3-8-4.3-8.4-3.1-8.4-1.7-8.2-0.3-8 1.3-7.5 2.9-6.9 2-3.2"/>
<path stroke="#c5bb63" d="M663 744.1l2.4-3 6.1-5.4 7.6-4.7 9.1-3.9 10.4-3.2 11.5-2.5 12.4-2 13.2-1.5 13.7-1.2 13.9-1 14-1 10.3-0.9"/>
<path stroke="#bdb35f" d="M787.6 713.8l3.4-0.3 13.1-1.6 12.5-1.9 11.5-2.5 10.4-3.2 9-3.9 7.6-4.7 6.1-5.4 4.5-6.2 2.9-6.9 1.2-7.5-0.2-8-1.8-8.2-3-8.4-4.3-8.4-5.3-8-4.5-5.8M825.6 602.6l-5.7-2.4-7.4-2-7.2-0.3-6.8 1.4-6.2 3.1-5.6 4.9-2.6 3.2"/>
<path stroke="#b9ad64" d="M771.9 719.3l-0.5 15.6-0.7 15.3-1 14.8-1.4 14-1.9 12.9-2.5 11.6-3.2 10.2-3.9 8.6-4.6 6.8-5.3 5.1-1.4 1M722 837.4l-1.9-0.6-7.4-3.4-7.4-4.7-7.2-5.9-6.8-6.8-3.1-3.7M854.1 624.4l-1.6-1.9-6.8-6.8-7.2-5.9-7.4-4.7-7.4-3.4M789.2 612.6l-2.2 3.7-3.9 8.5-3.2 10.2-2.5 11.6-1.9 12.9-1.4 14-0.9 14.8-0.7 15.3-0.6 15.7"/>
<path stroke="#beb166" d="M745.5 835.2l-4.6 2.3-6.5 1.4-7-0.2-5.4-1.3M785.4 718l13.2-1.4 12.8-1.6 12-2.2 11.1-2.7 10-3.3 8.6-4.1 7.3-4.8 5.7-5.6 4.2-6.3 2.6-7 1.1-7.6-0.5-8-1.9-8.4-3.2-8.4-4.4-8.4-5.4-8.1-4.5-5.7M823.7 601.7l-7.3-1.9-7-0.2-6.5 1.5-6 3.2-5.3 5.1-2.4 3.2"/>
<path stroke="#c2b568" d="M688.2 812.3l-3-3.9-5.4-8.1-4.4-8.3-3.2-8.5-1.9-8.3-0.4-8.1 1-7.6 2.6-7 1.9-3.2"/>
<path stroke="#c6b96a" d="M675.4 749.3l2.3-3.1 5.7-5.6 7.3-4.8 8.7-4.1 9.9-3.3 11.1-2.7 12-2.1 12.8-1.7 13.2-1.4 13.5-1.2 13.5-1.3"/>
<path stroke="#baac69" d="M781.3 721.8l0 15.8-0.2 15.5-0.5 14.9-1 14.1-1.4 13-2.1 11.8-2.7 10.3-3.5 8.6-4.3 7-5 5.1-1.3 1M740.2 842.3l-5.3-1.5-7.3-3.3-7.3-4.7-7.1-5.9-6.8-6.8-3.2-3.7M857.9 625.4l-1.7-1.8-6.7-6.9-7.1-5.8-7.3-4.7-7.3-3.4-3.6-1.1M794.8 614.1l-2 3.7-3.5 8.7-2.8 10.3-2.1 11.7-1.4 13.1-0.9 14.1-0.5 14.9-0.2 15.5-0.1 15.7"/>
<path stroke="#bfb06c" d="M759.3 838.9l-4.3 2.4-6.3 1.5-6.7-0.2-1.8-0.3M787.8 721.2l6.5-0.7 12.8-1.6 12.2-1.8 11.6-2.2 10.6-2.8 9.6-3.5 8.2-4.2 6.9-4.9 5.4-5.7 3.8-6.4 2.3-7.1 0.8-7.7-0.7-8.1-2.1-8.4-3.4-8.5-4.4-8.4-5.5-8.1-4.5-5.7M824.2 601.7l-3.5-0.7-6.8-0.2-6.2 1.6-5.7 3.3-5 5.2-2.2 3.2"/>
<path stroke="#c3b46e" d="M703.2 816.4l-3-3.9-5.4-8.1-4.5-8.4-3.3-8.5-2.1-8.4-0.7-8.1 0.7-7.6 2.3-7.1 1.8-3.3"/>
<path stroke="#c7b870" d="M689 753l2.1-3.2 5.4-5.6 6.8-5 8.3-4.1 9.5-3.5 10.6-2.8 11.6-2.3 12.3-1.8 12.7-1.5 13-1.4 6.5-0.6"/>
</g>
<defs><filter id="wdk" x="537" y="117" width="743" height="833" filterUnits="userSpaceOnUse" color-interpolation-filters="sRGB"><feComponentTransfer><feFuncR type="linear" slope=".86"/><feFuncG type="linear" slope=".84"/><feFuncB type="linear" slope=".86"/></feComponentTransfer></filter><filter id="wlt" x="537" y="117" width="743" height="833" filterUnits="userSpaceOnUse" color-interpolation-filters="sRGB"><feComponentTransfer><feFuncR type="linear" slope=".62" intercept=".38"/><feFuncG type="linear" slope=".64" intercept=".36"/><feFuncB type="linear" slope=".62" intercept=".38"/></feComponentTransfer></filter>
<g id="wg" fill="none" stroke-linecap="round" stroke-linejoin="round">
<path stroke="#cab778" d="M791.5 723.4l0.5 15.8 0.3 15.6 0 15-0.4 14.2-0.9 13.1-1.6 11.8-2.4 10.3-3 8.8-3.9 7-4.6 5.2-5.4 3.4-5.9 1.6-6.5-0.1-6.9-1.8-7.1-3.4-7.2-4.6-7.1-5.9-6.7-6.8-6.2-7.6-5.5-8.1-4.6-8.4-3.5-8.5-2.3-8.5-1-8.1 0.5-7.7 2-7.2 3.5-6.4 5-5.8 6.4-5 7.8-4.2 9.1-3.6 10.1-2.8 11.1-2.4 11.7-1.9 12.2-1.6 12.5-1.4 12.5-1.5 12.2-1.6 11.7-1.9 11.1-2.3 10.1-2.9 9.1-3.5 7.8-4.3 6.4-4.9 5-5.8 3.5-6.5 2-7.1 0.5-7.7-1-8.2-2.3-8.4-3.5-8.5-4.6-8.4-5.5-8.1-6.2-7.6-6.7-6.8-7.1-5.9-7.2-4.7-7.1-3.3-6.9-1.8-6.5-0.1-5.9 1.6-5.4 3.4-4.6 5.2-3.9 7-3 8.7-2.4 10.4-1.6 11.8-0.9 13.1-0.4 14.2 0 15 0.3 15.5 0.5 15.9"/>
<path stroke="#cbb57f" d="M802.4 723.9l1 15.9 0.9 15.6 0.6 15 0.1 14.2-0.4 13.1-1.1 11.9-1.8 10.4-2.6 8.7-3.5 7.1-4.2 5.2-5 3.4-5.7 1.6-6.2-0.1-6.7-1.8-6.9-3.3-7.1-4.7-7-5.8-6.7-6.8-6.2-7.6-5.6-8.1-4.7-8.5-3.7-8.5-2.5-8.4-1.2-8.2 0.2-7.7 1.6-7.2 3.1-6.5 4.6-5.7 6-5.1 7.3-4.2 8.5-3.6 9.6-2.9 10.5-2.3 11.2-2 11.7-1.6 11.9-1.5 11.9-1.4 11.7-1.7 11.1-1.9 10.5-2.4 9.7-2.9 8.5-3.5 7.3-4.3 6-5 4.6-5.8 3.1-6.5 1.6-7.1 0.2-7.8-1.2-8.1-2.5-8.4-3.7-8.6-4.7-8.4-5.6-8.1-6.2-7.6-6.7-6.8-7-5.9-7.1-4.6-6.9-3.3-6.7-1.8-6.2-0.2-5.7 1.6-5 3.5-4.2 5.2-3.5 7-2.6 8.8-1.8 10.4-1.1 11.8-0.5 13.1 0.2 14.2 0.6 15.1 0.9 15.6 1 15.8"/>
<path stroke="#cdb485" d="M813.9 723.4l1.7 15.9 1.5 15.6 1.1 15 0.7 14.1 0.2 13.1-0.6 11.9-1.3 10.3-2.2 8.8-3 7-3.8 5.2-4.6 3.4-5.4 1.6-5.9-0.2-6.4-1.8-6.8-3.3-7-4.6-6.9-5.9-6.6-6.8-6.3-7.6-5.6-8.1-4.9-8.4-3.9-8.6-2.7-8.4-1.5-8.1-0.1-7.7 1.2-7.2 2.7-6.5 4.1-5.7 5.6-5 6.8-4.2 8-3.6 9-2.9 10-2.3 10.6-1.9 11-1.6 11.3-1.5 11.3-1.4 11.1-1.6 10.6-1.9 9.9-2.3 9.1-2.9 8-3.6 6.8-4.2 5.5-5 4.1-5.8 2.7-6.4 1.3-7.2-0.2-7.7-1.5-8.1-2.7-8.5-3.9-8.5-4.8-8.4-5.6-8.1-6.3-7.6-6.7-6.8-6.9-5.9-6.9-4.6-6.8-3.4-6.4-1.8-6-0.1-5.3 1.6-4.7 3.4-3.8 5.2-3 7-2.1 8.8-1.4 10.3-0.5 11.8 0.1 13.1 0.7 14.2 1.2 15 1.5 15.6 1.6 15.8"/>
<path stroke="#d0b28b" d="M826 721.9l2.3 15.8 2.1 15.5 1.8 14.9 1.3 14.1 0.7 13.1 0 11.7-0.8 10.3-1.6 8.7-2.5 6.9-3.4 5.2-4.3 3.4-5 1.5-5.6-0.2-6.2-1.8-6.6-3.3-6.8-4.7-6.8-5.9-6.7-6.8-6.3-7.6-5.7-8.1-5-8.4-4-8.5-3-8.4-1.8-8.1-0.5-7.7 0.9-7.1 2.2-6.4 3.7-5.7 5-4.9 6.3-4.2 7.4-3.5 8.5-2.8 9.3-2.2 10-1.9 10.5-1.5 10.6-1.4 10.7-1.3 10.4-1.6 10-1.8 9.3-2.2 8.5-2.9 7.4-3.4 6.3-4.2 5-4.9 3.7-5.7 2.3-6.5 0.8-7-0.4-7.7-1.8-8.1-3-8.4-4.1-8.5-5-8.4-5.7-8.1-6.3-7.6-6.6-6.8-6.8-5.9-6.8-4.7-6.6-3.3-6.2-1.8-5.7-0.2-5 1.5-4.2 3.4-3.4 5.1-2.6 7-1.6 8.7-0.8 10.3 0 11.7 0.7 13.1 1.3 14.1 1.8 14.9 2.1 15.5 2.3 15.7"/>
<path stroke="#d2b091" d="M838.6 719.4l3 15.7 2.7 15.3 2.5 14.8 1.9 14 1.3 12.9 0.6 11.6-0.2 10.2-1.2 8.6-2 6.9-2.9 5-3.9 3.3-4.6 1.5-5.4-0.3-5.9-1.8-6.4-3.4-6.7-4.7-6.7-5.9-6.6-6.8-6.3-7.6-5.9-8.1-5.1-8.4-4.2-8.4-3.3-8.4-2.1-8-0.8-7.6 0.5-7 1.8-6.4 3.2-5.6 4.4-4.8 5.8-4.1 6.8-3.3 7.9-2.7 8.7-2.1 9.3-1.7 9.8-1.4 10-1.3 10-1.2 9.8-1.4 9.3-1.7 8.7-2.1 7.9-2.7 6.9-3.4 5.7-4 4.5-4.9 3.2-5.6 1.8-6.3 0.4-7-0.8-7.6-2.1-8.1-3.2-8.3-4.3-8.5-5.1-8.3-5.8-8.1-6.3-7.6-6.7-6.8-6.7-5.9-6.6-4.7-6.4-3.4-6-1.9-5.3-0.2-4.7 1.4-3.8 3.3-3 5.1-2 6.9-1.1 8.5-0.3 10.2 0.6 11.6 1.3 13 2 13.9 2.4 14.8 2.8 15.4 2.9 15.6"/>
<path stroke="#d5af97" d="M851.6 715.9l3.6 15.5 3.5 15.1 3.1 14.7 2.6 13.8 1.9 12.7 1.2 11.5 0.4 10-0.6 8.4-1.6 6.8-2.5 4.9-3.4 3.2-4.3 1.4-5-0.4-5.7-1.9-6.2-3.5-6.5-4.7-6.6-5.9-6.6-6.9-6.4-7.5-5.9-8.1-5.2-8.3-4.5-8.4-3.5-8.3-2.4-8-1.2-7.5 0-6.9 1.4-6.2 2.7-5.4 3.9-4.7 5.2-3.9 6.2-3.2 7.3-2.5 8-2 8.7-1.5 9.1-1.2 9.3-1.1 9.4-1 9.1-1.2 8.6-1.6 8.1-1.9 7.2-2.6 6.3-3.1 5.1-3.9 4-4.7 2.6-5.5 1.4-6.2 0.1-6.9-1.2-7.5-2.5-8-3.5-8.2-4.4-8.4-5.3-8.4-5.9-8-6.3-7.6-6.6-6.8-6.7-5.9-6.5-4.8-6.2-3.4-5.6-2-5.1-0.3-4.3 1.4-3.4 3.1-2.5 5-1.5 6.7-0.6 8.4 0.3 10 1.2 11.5 2 12.8 2.6 13.8 3.1 14.6 3.4 15.2 3.6 15.4"/>
<path stroke="#d8ad9d" d="M865 711.4l4.3 15.3 4.1 14.9 3.8 14.4 3.3 13.6 2.6 12.5 1.8 11.3 0.9 9.8 0 8.2-1.1 6.6-2 4.8-3 3-3.9 1.2-4.7-0.4-5.4-2-6-3.5-6.3-4.8-6.6-6-6.6-6.8-6.3-7.6-6-8-5.5-8.3-4.6-8.3-3.8-8.2-2.7-7.9-1.6-7.3-0.4-6.8 0.9-6.1 2.2-5.2 3.4-4.5 4.5-3.8 5.7-2.9 6.6-2.3 7.3-1.8 8-1.3 8.4-0.9 8.7-0.9 8.6-0.8 8.4-1 8-1.3 7.4-1.7 6.6-2.3 5.6-3 4.6-3.7 3.4-4.5 2.1-5.3 0.9-6-0.3-6.8-1.6-7.4-2.8-7.8-3.7-8.2-4.7-8.3-5.4-8.3-6-8-6.4-7.6-6.6-6.8-6.5-6-6.4-4.8-5.9-3.5-5.5-2-4.7-0.5-3.9 1.3-3 3-2 4.8-1 6.5-0.1 8.3 1 9.8 1.8 11.3 2.6 12.5 3.2 13.6 3.8 14.4 4.2 14.9 4.3 15.2"/>
<path stroke="#daaaa1" d="M878.6 706l5 14.9 4.8 14.7 4.5 14.1 4 13.3 3.2 12.3 2.5 11 1.5 9.6 0.5 8-0.5 6.3-1.5 4.6-2.6 2.9-3.5 1.1-4.4-0.6-5.2-2.1-5.7-3.6-6.2-4.9-6.5-6-6.5-6.8-6.4-7.6-6.1-7.9-5.6-8.3-4.9-8.2-4-8.1-3.1-7.7-1.9-7.2-0.8-6.6 0.4-5.9 1.6-5.1 2.8-4.2 4-3.5 5-2.7 6-2.1 6.7-1.4 7.2-1.1 7.8-0.7 7.9-0.5 7.9-0.5 7.7-0.7 7.3-1 6.7-1.5 5.9-2 5-2.8 4-3.4 2.8-4.3 1.7-5.1 0.4-5.9-0.8-6.5-2-7.3-3.1-7.7-4-8.1-4.9-8.2-5.6-8.2-6-8-6.5-7.6-6.5-6.8-6.4-6-6.2-4.9-5.8-3.6-5.1-2.1-4.4-0.6-3.6 1.1-2.5 2.9-1.6 4.6-0.5 6.3 0.6 8 1.5 9.6 2.4 11 3.3 12.3 3.9 13.3 4.5 14.1 4.8 14.7 5.1 14.9"/>
<path stroke="#dba6a5" d="M892.3 699.7l5.8 14.6 5.5 14.3 5.2 13.8 4.7 13 3.9 11.9 3.1 10.8 2.1 9.3 1.1 7.7 0 6.1-1 4.4-2.2 2.6-3.1 1-4-0.8-4.9-2.2-5.6-3.7-6-5-6.4-6-6.5-6.9-6.4-7.5-6.2-7.9-5.7-8.2-5.1-8.1-4.3-8-3.4-7.6-2.4-7-1.2-6.4-0.1-5.6 1.1-4.8 2.3-4.1 3.3-3.2 4.4-2.4 5.2-1.7 6.1-1.2 6.6-0.7 6.9-0.3 7.2-0.2 7.2-0.2 7-0.4 6.6-0.7 6-1.1 5.3-1.8 4.4-2.4 3.3-3.2 2.3-4 1.1-4.9-0.1-5.6-1.2-6.4-2.4-7-3.4-7.6-4.3-7.9-5.1-8.2-5.7-8.1-6.2-8-6.4-7.5-6.5-6.9-6.4-6-6.1-4.9-5.5-3.7-4.9-2.3-4-0.7-3.2 0.9-2.1 2.6-1 4.4 0 6.1 1.1 7.8 2.1 9.3 3.1 10.7 3.9 12 4.7 12.9 5.1 13.8 5.6 14.4 5.7 14.6"/>
<path stroke="#dba1a8" d="M906.2 692.5l6.5 14.2 6.2 13.9 5.9 13.5 5.4 12.6 4.5 11.6 3.8 10.4 2.7 9 1.7 7.4 0.6 5.8-0.6 4.2-1.7 2.4-2.7 0.7-3.8-0.9-4.5-2.4-5.4-3.8-5.9-5-6.2-6.1-6.5-6.9-6.5-7.5-6.2-7.9-5.9-8.1-5.4-8-4.5-7.8-3.8-7.4-2.7-6.8-1.7-6.2-0.6-5.4 0.6-4.5 1.7-3.8 2.7-2.8 3.8-2.1 4.5-1.4 5.4-0.8 5.9-0.3 6.2 0 6.5 0.2 6.5 0.1 6.2 0 5.9-0.3 5.4-0.8 4.5-1.4 3.8-2.1 2.7-2.8 1.7-3.7 0.6-4.6-0.6-5.4-1.7-6.1-2.7-6.9-3.8-7.4-4.5-7.8-5.4-8-5.9-8.1-6.2-7.9-6.5-7.5-6.5-6.9-6.2-6-5.9-5.1-5.4-3.8-4.5-2.4-3.8-0.9-2.7 0.7-1.7 2.4-0.6 4.2 0.6 5.8 1.7 7.4 2.7 9 3.8 10.4 4.5 11.6 5.4 12.7 5.9 13.4 6.2 13.9 6.5 14.3"/>
<path stroke="#db9cab" d="M920.1 684.4l7.2 13.8 6.9 13.6 6.6 13 6.1 12.2 5.2 11.2 4.4 10 3.3 8.7 2.3 7.1 1.1 5.5-0.1 3.8-1.2 2.2-2.4 0.5-3.4-1.1-4.3-2.6-5.1-3.9-5.7-5.1-6.2-6.2-6.4-6.9-6.5-7.5-6.4-7.8-6-8-5.6-7.9-4.9-7.6-4-7.2-3.1-6.6-2.2-5.9-1-5.1 0-4.3 1.1-3.4 2.1-2.5 3.1-1.7 3.9-1 4.7-0.4 5.2 0.1 5.5 0.4 5.8 0.6 5.7 0.6 5.6 0.4 5.1 0.1 4.7-0.4 3.9-1 3.1-1.7 2.1-2.5 1.1-3.4 0-4.2-1-5.1-2.1-5.9-3.2-6.6-4-7.2-4.9-7.7-5.5-7.9-6.1-8-6.4-7.8-6.5-7.5-6.4-6.9-6.2-6.1-5.7-5.2-5.1-3.9-4.3-2.6-3.4-1.1-2.4 0.5-1.2 2.2-0.1 3.8 1.1 5.5 2.3 7.2 3.3 8.6 4.4 10 5.3 11.2 6 12.3 6.6 13 7 13.5 7.2 13.8"/>
<path stroke="#dc98af" d="M933.8 675.6l7.9 13.3 7.8 13.1 7.2 12.6 6.7 11.8 6 10.8 5 9.6 4 8.2 2.8 6.8 1.6 5.1 0.4 3.6-0.8 1.8-1.9 0.3-3.1-1.3-4-2.8-4.9-4-5.6-5.3-6.1-6.1-6.4-7-6.5-7.4-6.5-7.8-6.2-7.9-5.7-7.8-5.2-7.4-4.4-7-3.5-6.4-2.6-5.6-1.5-4.8-0.5-3.9 0.5-3 1.5-2.1 2.5-1.4 3.2-0.5 4 0 4.5 0.6 4.8 0.8 5 1.1 5.1 1 4.8 0.9 4.5 0.6 3.9 0 3.3-0.5 2.4-1.4 1.5-2.1 0.6-3-0.5-3.9-1.6-4.8-2.5-5.6-3.6-6.4-4.4-7-5.1-7.4-5.8-7.8-6.2-7.9-6.4-7.8-6.5-7.4-6.5-7-6-6.1-5.6-5.3-4.9-4-4-2.8-3.1-1.3-2 0.3-0.8 1.8 0.4 3.6 1.7 5.1 2.8 6.8 4 8.2 5 9.6 5.9 10.8 6.7 11.8 7.3 12.6 7.7 13 7.9 13.4"/>
<path stroke="#da91b0" d="M947.4 666.1l8.7 12.8 8.4 12.6 8 12.1 7.3 11.3 6.6 10.3 5.7 9.2 4.5 7.8 3.4 6.3 2.2 4.8 0.9 3.2-0.4 1.6-1.6 0-2.7-1.6-3.8-2.9-4.6-4.2-5.5-5.4-6-6.2-6.3-6.9-6.6-7.5-6.6-7.7-6.3-7.8-6-7.6-5.4-7.3-4.7-6.7-3.9-6.1-3-5.3-2-4.5-1.1-3.5 0-2.6 0.9-1.8 1.8-0.8 2.6-0.1 3.3 0.5 3.8 1 4.1 1.4 4.3 1.6 4.3 1.5 4.2 1.4 3.8 1 3.2 0.5 2.6-0.1 1.8-0.8 1-1.8-0.1-2.6-1-3.5-2-4.5-3-5.3-3.9-6.1-4.7-6.7-5.5-7.3-5.9-7.6-6.4-7.8-6.5-7.7-6.6-7.4-6.4-7-6-6.2-5.4-5.4-4.7-4.2-3.7-2.9-2.8-1.6-1.6 0-0.3 1.6 0.9 3.2 2.1 4.8 3.4 6.3 4.6 7.8 5.6 9.2 6.6 10.3 7.4 11.3 8 12.1 8.4 12.6 8.6 12.9"/>
<path stroke="#d589b1" d="M960.8 655.8l9.3 12.4 9.1 12 8.7 11.6 8 10.8 7.3 9.8 6.2 8.7 5.2 7.4 3.9 5.9 2.7 4.4 1.4 2.8 0 1.3-1.2-0.3-2.4-1.8-3.5-3.2-4.5-4.4-5.2-5.4-5.9-6.3-6.4-7-6.6-7.4-6.6-7.7-6.5-7.6-6.2-7.5-5.7-7-5-6.6-4.3-5.8-3.4-4.9-2.5-4.1-1.6-3.2-0.6-2.2 0.4-1.2 1.2-0.4 1.9 0.4 2.6 1 3.1 1.5 3.5 2 3.6 2 3.6 2.1 3.4 1.9 3.1 1.6 2.6 1 2 0.4 1.2-0.4 0.3-1.3-0.6-2.1-1.5-3.2-2.5-4.1-3.4-5-4.3-5.8-5.1-6.5-5.6-7-6.2-7.5-6.5-7.7-6.7-7.6-6.6-7.4-6.3-7-5.9-6.3-5.3-5.5-4.4-4.3-3.5-3.2-2.5-1.8-1.2-0.3 0.1 1.3 1.4 2.8 2.6 4.4 4 5.9 5.1 7.4 6.3 8.7 7.2 9.8 8.1 10.8 8.6 11.6 9.1 12 9.4 12.3"/>
<path stroke="#d180b1" d="M973.8 645l10 11.8 9.8 11.5 9.3 11 8.7 10.2 7.9 9.3 6.8 8.2 5.8 6.9 4.4 5.5 3.2 4 1.8 2.4 0.5 0.9-0.8-0.6-2.1-2-3.3-3.4-4.2-4.5-5.1-5.6-5.9-6.4-6.3-7-6.6-7.4-6.7-7.6-6.7-7.5-6.4-7.3-5.9-6.8-5.4-6.3-4.6-5.5-3.9-4.6-2.9-3.7-2-2.8-1.2-1.7-0.2-0.8 0.6 0.1 1.3 0.9 1.9 1.6 2.5 2.1 2.7 2.5 3 2.6 2.9 2.7 2.8 2.4 2.4 2.2 2 1.5 1.3 0.9 0.6 0.1-0.3-0.7-1.1-1.8-2-2.7-3-3.7-3.8-4.7-4.7-5.5-5.3-6.2-6-6.9-6.4-7.2-6.6-7.6-6.7-7.6-6.7-7.4-6.3-7-5.8-6.3-5.1-5.6-4.3-4.6-3.2-3.3-2.1-2.1-0.8-0.6 0.4 0.9 1.8 2.5 3.2 3.9 4.5 5.5 5.7 6.9 6.9 8.2 7.9 9.3 8.7 10.3 9.3 11 9.8 11.5 10 11.7"/>
<path stroke="#cd78b2" d="M986.4 633.7l10.6 11.1 10.5 10.9 10 10.5 9.3 9.6 8.5 8.8 7.4 7.7 6.3 6.4 5 5 3.7 3.5 2.2 2.1 0.9 0.5-0.5-0.9-1.8-2.3-3-3.6-4-4.8-5-5.7-5.7-6.4-6.3-7-6.7-7.4-6.8-7.5-6.8-7.4-6.6-7.1-6.2-6.7-5.6-5.9-5-5.2-4.3-4.3-3.4-3.3-2.5-2.3-1.6-1.3-0.8-0.2 0 0.6 0.7 1.4 1.3 2.2 1.8 2.7 2.1 3 2.3 3.3 2.3 3.2 2.1 3.1 1.8 2.7 1.3 2.1 0.7 1.5 0 0.6-0.8-0.3-1.6-1.3-2.6-2.2-3.4-3.4-4.2-4.2-5-5.2-5.7-6-6.2-6.6-6.6-7.1-6.8-7.4-6.8-7.5-6.6-7.4-6.3-7-5.7-6.5-5-5.7-4.1-4.7-3-3.6-1.8-2.3-0.4-1 0.8 0.6 2.3 2 3.7 3.6 5 5 6.3 6.4 7.4 7.6 8.5 8.8 9.3 9.7 10 10.4 10.4 10.9 10.7 11.2"/>
<path stroke="#c970b2" d="M998.5 621.9l11.3 10.5 11 10.3 10.6 9.8 10 9.1 9 8.2 8 7.1 6.8 5.9 5.6 4.5 4.1 3.1 2.7 1.6 1.2 0.2-0.1-1.3-1.5-2.6-2.7-3.8-3.9-4.9-4.9-5.9-5.6-6.5-6.3-7.1-6.6-7.3-6.9-7.4-7-7.3-6.8-6.9-6.4-6.4-5.9-5.7-5.4-4.8-4.6-3.9-3.8-2.9-3-1.9-2.2-0.7-1.3 0.2-0.6 1.2 0.2 2 0.7 2.7 1.1 3.3 1.5 3.7 1.7 3.9 1.6 3.8 1.5 3.7 1.2 3.3 0.7 2.7 0.1 2-0.5 1.2-1.4 0.3-2.1-0.8-3-1.8-3.8-2.9-4.7-3.9-5.3-4.9-6-5.7-6.4-6.4-6.8-6.9-6.9-7.3-6.9-7.4-6.7-7.3-6.3-7.1-5.6-6.5-4.8-5.9-3.9-4.9-2.7-3.8-1.5-2.6-0.2-1.3 1.3 0.2 2.7 1.6 4.1 3.1 5.5 4.5 6.8 5.9 8 7.1 9.1 8.2 9.9 9.1 10.6 9.8 11.1 10.3 11.3 10.6"/>
<path stroke="#c265b2" d="M1010 609.6l11.9 9.9 11.7 9.7 11.2 9.2 10.5 8.5 9.6 7.6 8.5 6.5 7.3 5.4 6 4 4.6 2.6 3.1 1.2 1.6-0.2 0.2-1.6-1.2-2.9-2.5-4.1-3.7-5.1-4.7-6-5.6-6.6-6.2-7.1-6.7-7.3-7-7.3-7.1-7.2-6.9-6.7-6.7-6.2-6.2-5.3-5.7-4.6-5-3.5-4.2-2.4-3.5-1.4-2.6-0.3-1.8 0.8-1.1 1.8-0.4 2.6 0.1 3.3 0.6 3.9 0.9 4.3 1 4.5 1 4.6 0.9 4.3 0.6 3.9 0.2 3.3-0.5 2.6-1.1 1.8-1.8 0.8-2.6-0.3-3.5-1.4-4.2-2.4-5-3.5-5.7-4.6-6.2-5.3-6.7-6.2-6.9-6.7-7.1-7.2-7-7.3-6.7-7.3-6.2-7.1-5.6-6.6-4.7-6-3.7-5.1-2.5-4.1-1.2-2.9 0.2-1.6 1.6-0.2 3.1 1.2 4.6 2.6 6 4 7.3 5.4 8.5 6.5 9.7 7.6 10.5 8.5 11.1 9.2 11.7 9.7 11.9 9.8"/>
<path stroke="#bb5ab3" d="M1020.9 597.1l12.5 9.3 12.2 9 11.7 8.5 11.1 7.9 10.1 7 9.1 6 7.8 4.7 6.4 3.5 5 2.2 3.5 0.7 2-0.6 0.5-2-1-3.2-2.3-4.3-3.5-5.3-4.6-6.1-5.5-6.7-6.2-7.1-6.7-7.3-7.1-7.3-7.2-7-7.1-6.5-6.9-5.9-6.5-5.1-5.9-4.1-5.4-3.2-4.6-2-3.9-0.8-3 0.2-2.4 1.3-1.6 2.4-0.9 3.2-0.4 4 0 4.5 0.3 5 0.5 5.1 0.5 5.2 0.3 4.9 0 4.6-0.4 4-0.9 3.2-1.6 2.3-2.4 1.3-3 0.3-3.9-0.9-4.6-2-5.4-3.1-5.9-4.2-6.5-5.1-6.9-5.9-7.1-6.5-7.2-7-7.1-7.2-6.7-7.3-6.2-7.1-5.5-6.7-4.6-6.2-3.5-5.3-2.3-4.3-1-3.2 0.5-1.9 2-0.7 3.5 0.8 5 2.1 6.4 3.5 7.8 4.8 9.1 6 10.1 7 11.1 7.8 11.7 8.6 12.2 9 12.5 9.2"/>
<path stroke="#b450b3" d="M1031.1 584.4l13 8.5 12.7 8.4 12.3 7.9 11.6 7.2 10.6 6.4 9.5 5.4 8.3 4.2 6.8 2.9 5.4 1.7 3.9 0.3 2.3-1.1 0.7-2.3-0.7-3.5-2.1-4.6-3.3-5.5-4.5-6.2-5.4-6.8-6.2-7.2-6.8-7.2-7.1-7.2-7.3-6.8-7.3-6.4-7.1-5.6-6.7-4.8-6.3-3.8-5.6-2.7-5-1.6-4.3-0.3-3.5 0.7-2.7 1.9-2.1 3-1.4 3.8-1 4.6-0.5 5.2-0.2 5.6 0 5.9-0.1 5.8-0.2 5.6-0.5 5.2-0.9 4.6-1.4 3.8-2.1 3-2.8 1.9-3.5 0.7-4.2-0.3-5-1.6-5.7-2.7-6.2-3.8-6.8-4.8-7.1-5.6-7.3-6.4-7.3-6.8-7.1-7.2-6.7-7.2-6.2-7.2-5.5-6.8-4.4-6.2-3.4-5.5-2.1-4.6-0.7-3.5 0.8-2.3 2.3-1.1 3.8 0.3 5.4 1.7 6.9 2.9 8.2 4.3 9.6 5.3 10.6 6.4 11.6 7.2 12.2 7.9 12.8 8.4 13 8.6"/>
<path stroke="#ad45b4" d="M1040.5 571.4l13.5 7.9 13.2 7.7 12.8 7.2 12 6.6 11.1 5.8 9.9 4.7 8.7 3.7 7.3 2.4 5.7 1.2 4.2-0.2 2.6-1.4 1-2.7-0.4-3.8-1.9-4.9-3.2-5.7-4.4-6.4-5.4-6.9-6.1-7.2-6.8-7.2-7.2-7.1-7.4-6.7-7.4-6.1-7.3-5.4-7-4.4-6.5-3.5-6-2.3-5.3-1.1-4.6 0.1-3.9 1.4-3.2 2.4-2.5 3.6-1.9 4.4-1.4 5.3-1 5.8-0.7 6.3-0.5 6.5-0.6 6.5-0.7 6.3-0.9 5.9-1.4 5.2-1.9 4.5-2.5 3.5-3.2 2.5-3.9 1.3-4.6 0.1-5.3-1.1-6-2.3-6.5-3.4-7-4.5-7.3-5.4-7.4-6.1-7.4-6.7-7.2-7.1-6.8-7.2-6.1-7.2-5.4-6.9-4.4-6.4-3.2-5.7-1.9-4.8-0.5-3.8 1.1-2.7 2.6-1.5 4.2-0.1 5.7 1.1 7.3 2.5 8.6 3.6 10 4.8 11.1 5.7 12 6.6 12.8 7.2 13.2 7.7 13.5 7.9"/>
<path stroke="#a63ab4" d="M1049.1 558.4l13.9 7.2 13.7 7 13.2 6.6 12.4 5.9 11.5 5.2 10.4 4.1 9.1 3.1 7.6 1.9 6.1 0.6 4.4-0.6 2.9-1.9 1.3-3-0.3-4.1-1.7-5.1-3.1-6-4.3-6.5-5.3-7-6.1-7.2-6.8-7.2-7.2-7-7.6-6.5-7.5-5.9-7.5-5.2-7.2-4.1-6.7-3.1-6.3-1.9-5.6-0.6-4.9 0.6-4.3 1.9-3.5 3-2.9 4.1-2.4 5.1-1.8 5.9-1.4 6.6-1.1 6.9-1 7.2-1 7.2-1.2 7-1.4 6.5-1.8 5.9-2.3 5.1-2.9 4.1-3.6 3-4.2 1.9-5 0.6-5.6-0.6-6.2-1.9-6.8-3.1-7.2-4.1-7.4-5.1-7.6-6-7.5-6.5-7.3-7-6.7-7.2-6.2-7.2-5.3-7-4.3-6.5-3-5.9-1.8-5.1-0.2-4.2 1.2-3 2.9-1.9 4.5-0.6 6.1 0.6 7.6 1.9 9 3.1 10.4 4.2 11.5 5.1 12.5 5.9 13.1 6.6 13.7 7 14 7.2"/>
<path stroke="#a336b5" d="M1056.8 545.4l14.3 6.5 14.1 6.4 13.6 5.9 12.8 5.2 11.9 4.5 10.7 3.6 9.4 2.5 8 1.3 6.3 0.2 4.8-1.1 3.1-2.3 1.5-3.4-0.1-4.4-1.6-5.4-2.9-6.1-4.2-6.7-5.2-7.1-6.2-7.2-6.8-7.2-7.3-6.9-7.6-6.4-7.7-5.7-7.6-4.9-7.3-3.8-7-2.7-6.5-1.5-5.9-0.1-5.2 1.1-4.6 2.4-3.9 3.6-3.3 4.7-2.7 5.7-2.2 6.6-1.8 7.2-1.5 7.6-1.4 7.9-1.4 7.9-1.6 7.6-1.8 7.2-2.2 6.5-2.7 5.8-3.2 4.7-3.9 3.6-4.6 2.4-5.2 1.1-5.9-0.2-6.5-1.4-7-2.7-7.4-3.9-7.6-4.8-7.7-5.7-7.6-6.4-7.3-6.9-6.8-7.2-6.1-7.2-5.2-7.1-4.2-6.7-3-6.1-1.5-5.4-0.1-4.4 1.5-3.4 3.1-2.3 4.7-1.1 6.4 0.1 7.9 1.4 9.4 2.5 10.8 3.5 11.8 4.5 12.9 5.3 13.5 5.9 14.1 6.4 14.4 6.5"/>
<path stroke="#a031b6" d="M1063.6 532.5l14.7 5.8 14.4 5.7 13.9 5.2 13.2 4.7 12.2 3.8 11 3 9.7 1.9 8.2 0.8 6.7-0.3 5-1.6 3.3-2.7 1.7-3.7 0.1-4.8-1.5-5.6-2.8-6.3-4.1-6.9-5.2-7.1-6.1-7.3-6.9-7.1-7.3-6.8-7.7-6.3-7.8-5.5-7.7-4.6-7.6-3.6-7.1-2.3-6.7-1-6.1 0.2-5.6 1.7-4.8 2.9-4.2 4.2-3.6 5.3-3 6.4-2.5 7.1-2.2 7.9-1.9 8.3-1.7 8.6-1.8 8.5-1.9 8.3-2.1 7.9-2.6 7.2-3 6.3-3.6 5.3-4.2 4.2-4.8 3-5.5 1.6-6.2 0.3-6.7-1.1-7.1-2.3-7.6-3.6-7.7-4.6-7.8-5.5-7.7-6.2-7.3-6.8-6.9-7.2-6.1-7.2-5.2-7.2-4.1-6.8-2.8-6.4-1.5-5.6 0.1-4.8 1.7-3.7 3.3-2.7 5-1.5 6.7-0.4 8.2 0.8 9.7 1.9 11 3 12.2 3.9 13.2 4.6 13.9 5.2 14.5 5.7 14.7 5.9"/>
<path stroke="#9c2db7" d="M1069.4 519.7l15 5.2 14.7 5 14.2 4.5 13.5 4.1 12.5 3.2 11.3 2.4 9.9 1.3 8.5 0.3 6.8-0.8 5.3-2 3.5-3.1 1.8-4.2 0.2-5-1.3-5.9-2.7-6.5-4.1-7-5.1-7.3-6.1-7.2-6.9-7.2-7.4-6.7-7.7-6.1-7.9-5.3-7.9-4.4-7.6-3.2-7.4-1.9-6.8-0.7-6.4 0.7-5.7 2.1-5.1 3.5-4.5 4.8-3.8 5.9-3.3 6.9-2.8 7.9-2.5 8.5-2.2 9-2 9.2-2.1 9.2-2.2 9-2.4 8.5-2.9 7.8-3.3 7-3.8 5.9-4.5 4.7-5.1 3.5-5.7 2.1-6.3 0.7-6.9-0.6-7.3-2-7.7-3.2-7.9-4.3-7.9-5.4-7.7-6.1-7.4-6.7-6.8-7.1-6.1-7.3-5.2-7.2-4-7-2.8-6.5-1.3-5.9 0.2-5.1 1.9-4.1 3.5-3.1 5.2-2 6.8-0.9 8.5 0.3 9.9 1.4 11.3 2.3 12.5 3.3 13.5 4 14.2 4.6 14.8 5 15 5.2"/>
<path stroke="#9928b8" d="M1074.2 507.1l15.2 4.6 15 4.3 14.5 4 13.7 3.3 12.7 2.7 11.5 1.8 10.2 0.8 8.6-0.3 7.1-1.3 5.4-2.4 3.6-3.5 2-4.5 0.3-5.4-1.2-6.1-2.7-6.7-4-7.2-5.1-7.3-6.1-7.3-6.8-7.1-7.4-6.6-7.8-6-8-5.1-8-4.1-7.7-2.9-7.5-1.7-7-0.2-6.5 1.2-6 2.6-5.3 3.9-4.6 5.3-4.1 6.6-3.5 7.5-3.1 8.5-2.7 9.1-2.4 9.7-2.3 9.8-2.4 9.9-2.4 9.6-2.7 9.2-3.1 8.4-3.5 7.6-4.1 6.5-4.6 5.3-5.3 4-5.9 2.6-6.5 1.2-7.1-0.3-7.4-1.6-7.8-2.9-8-4.1-8-5.1-7.7-6-7.5-6.6-6.8-7.1-6.1-7.3-5.1-7.4-4-7.1-2.7-6.7-1.2-6.1 0.3-5.4 2-4.5 3.7-3.5 5.3-2.4 7.1-1.4 8.6-0.2 10.2 0.8 11.5 1.8 12.7 2.6 13.7 3.4 14.5 4 15 4.3 15.3 4.5"/>
<path stroke="#9624b9" d="M1077.9 494.9l15.5 3.9 15.2 3.7 14.6 3.3 13.9 2.8 12.9 2.1 11.7 1.2 10.3 0.2 8.9-0.7 7.1-1.8 5.5-2.9 3.8-3.9 2.1-4.8 0.4-5.7-1.1-6.3-2.6-7-4-7.2-5.1-7.4-6-7.4-6.9-7-7.5-6.6-7.8-5.8-8-5-8-3.8-7.9-2.6-7.6-1.3-7.1 0.1-6.7 1.7-6 3-5.5 4.5-4.8 5.9-4.3 7-3.7 8.2-3.2 9.1-2.9 9.7-2.7 10.3-2.5 10.5-2.5 10.5-2.6 10.3-2.9 9.7-3.3 9.1-3.7 8.2-4.2 7.1-4.9 5.8-5.4 4.5-6.1 3.1-6.6 1.6-7.2 0.1-7.5-1.3-7.9-2.6-8-3.8-8.1-5-7.8-5.8-7.4-6.6-6.9-7-6.1-7.4-5.1-7.4-3.9-7.2-2.6-6.9-1.2-6.4 0.4-5.7 2.1-4.8 3.8-3.9 5.5-2.9 7.2-1.8 8.8-0.7 10.3 0.2 11.7 1.3 12.9 2 13.9 2.8 14.7 3.3 15.2 3.7 15.4 3.9"/>
<path stroke="#921fba" d="M1080.6 483.1l15.6 3.2 15.3 3.1 14.8 2.8 14.1 2.1 13 1.5 11.8 0.7 10.5-0.3 8.9-1.2 7.3-2.3 5.6-3.3 3.9-4.2 2.1-5.2 0.5-5.9-1.1-6.7-2.5-7.1-4-7.4-5-7.5-6.1-7.3-6.9-7.1-7.4-6.4-7.9-5.7-8.1-4.8-8.1-3.6-7.9-2.3-7.7-1-7.2 0.6-6.7 2-6.2 3.5-5.6 5-4.9 6.4-4.4 7.6-3.8 8.7-3.4 9.7-3 10.4-2.8 10.8-2.7 11.2-2.6 11.1-2.8 10.9-3 10.3-3.4 9.7-3.9 8.7-4.3 7.7-5 6.3-5.5 5-6.2 3.5-6.7 2.1-7.3 0.5-7.6-1-8-2.3-8.1-3.6-8-4.7-7.9-5.7-7.5-6.5-6.8-7-6.1-7.4-5.1-7.5-3.9-7.4-2.6-7.1-1.1-6.6 0.5-6 2.2-5.1 3.9-4.3 5.6-3.3 7.3-2.2 8.9-1.3 10.4-0.2 11.9 0.6 13 1.5 14 2.2 14.8 2.7 15.3 3.1 15.6 3.3"/>
<path stroke="#8f1abb" d="M1082.3 471.7l15.6 2.7 15.4 2.5 14.9 2.1 14.1 1.6 13.1 1 11.9 0.1 10.6-0.8 9-1.7 7.3-2.7 5.7-3.7 3.9-4.6 2.2-5.5 0.5-6.2-1-6.9-2.6-7.2-3.9-7.6-5-7.5-6.1-7.4-6.9-7-7.5-6.4-7.8-5.6-8.1-4.6-8.1-3.3-8-2.1-7.7-0.6-7.3 0.9-6.8 2.4-6.2 3.9-5.7 5.5-5 6.9-4.4 8.1-4 9.3-3.4 10.2-3.1 11-2.9 11.5-2.7 11.7-2.8 11.7-2.8 11.5-3.1 10.9-3.5 10.3-3.9 9.2-4.5 8.2-5 6.9-5.6 5.4-6.3 4-6.8 2.4-7.3 0.9-7.7-0.6-7.9-2.1-8.2-3.4-8-4.5-7.9-5.6-7.5-6.4-6.9-7-6-7.4-5.1-7.6-3.9-7.5-2.6-7.3-1-6.8 0.5-6.2 2.2-5.5 3.9-4.7 5.7-3.6 7.4-2.7 9-1.8 10.5-0.7 11.9 0.1 13.1 1 14.1 1.6 14.9 2.1 15.4 2.5 15.7 2.7"/>
<path stroke="#8c16bc" d="M1082.8 460.8l15.7 2.2 15.4 1.9 15 1.6 14.1 1 13.1 0.5 12-0.4 10.5-1.2 9-2.2 7.4-3.1 5.7-4.1 3.9-5 2.2-5.8 0.6-6.5-1.1-7-2.5-7.5-3.9-7.6-5.1-7.7-6-7.4-6.9-7-7.5-6.3-7.9-5.4-8.1-4.4-8.1-3.2-8-1.8-7.7-0.3-7.3 1.2-6.8 2.8-6.3 4.4-5.6 5.9-5.1 7.4-4.5 8.6-3.9 9.8-3.5 10.8-3.1 11.5-2.9 12.1-2.8 12.2-2.8 12.3-2.9 12.1-3.1 11.5-3.5 10.7-3.9 9.9-4.5 8.6-5.1 7.4-5.6 5.9-6.3 4.3-6.8 2.9-7.3 1.2-7.7-0.3-8-1.8-8.1-3.2-8.1-4.4-7.9-5.4-7.5-6.4-6.9-6.9-6-7.5-5.1-7.6-3.9-7.7-2.5-7.4-1.1-7.1 0.6-6.5 2.2-5.7 3.9-5 5.7-4.1 7.4-3.1 9-2.2 10.6-1.2 11.9-0.4 13.1 0.4 14.1 1.1 15 1.6 15.4 1.9 15.7 2.1"/>
</g></defs>
<use href="#wg" stroke-width="1.80" filter="url(#wdk)"/>
<use href="#wg" stroke-width=".75" transform="translate(-.3 -.3)" filter="url(#wlt)"/></svg>
</body></html>
